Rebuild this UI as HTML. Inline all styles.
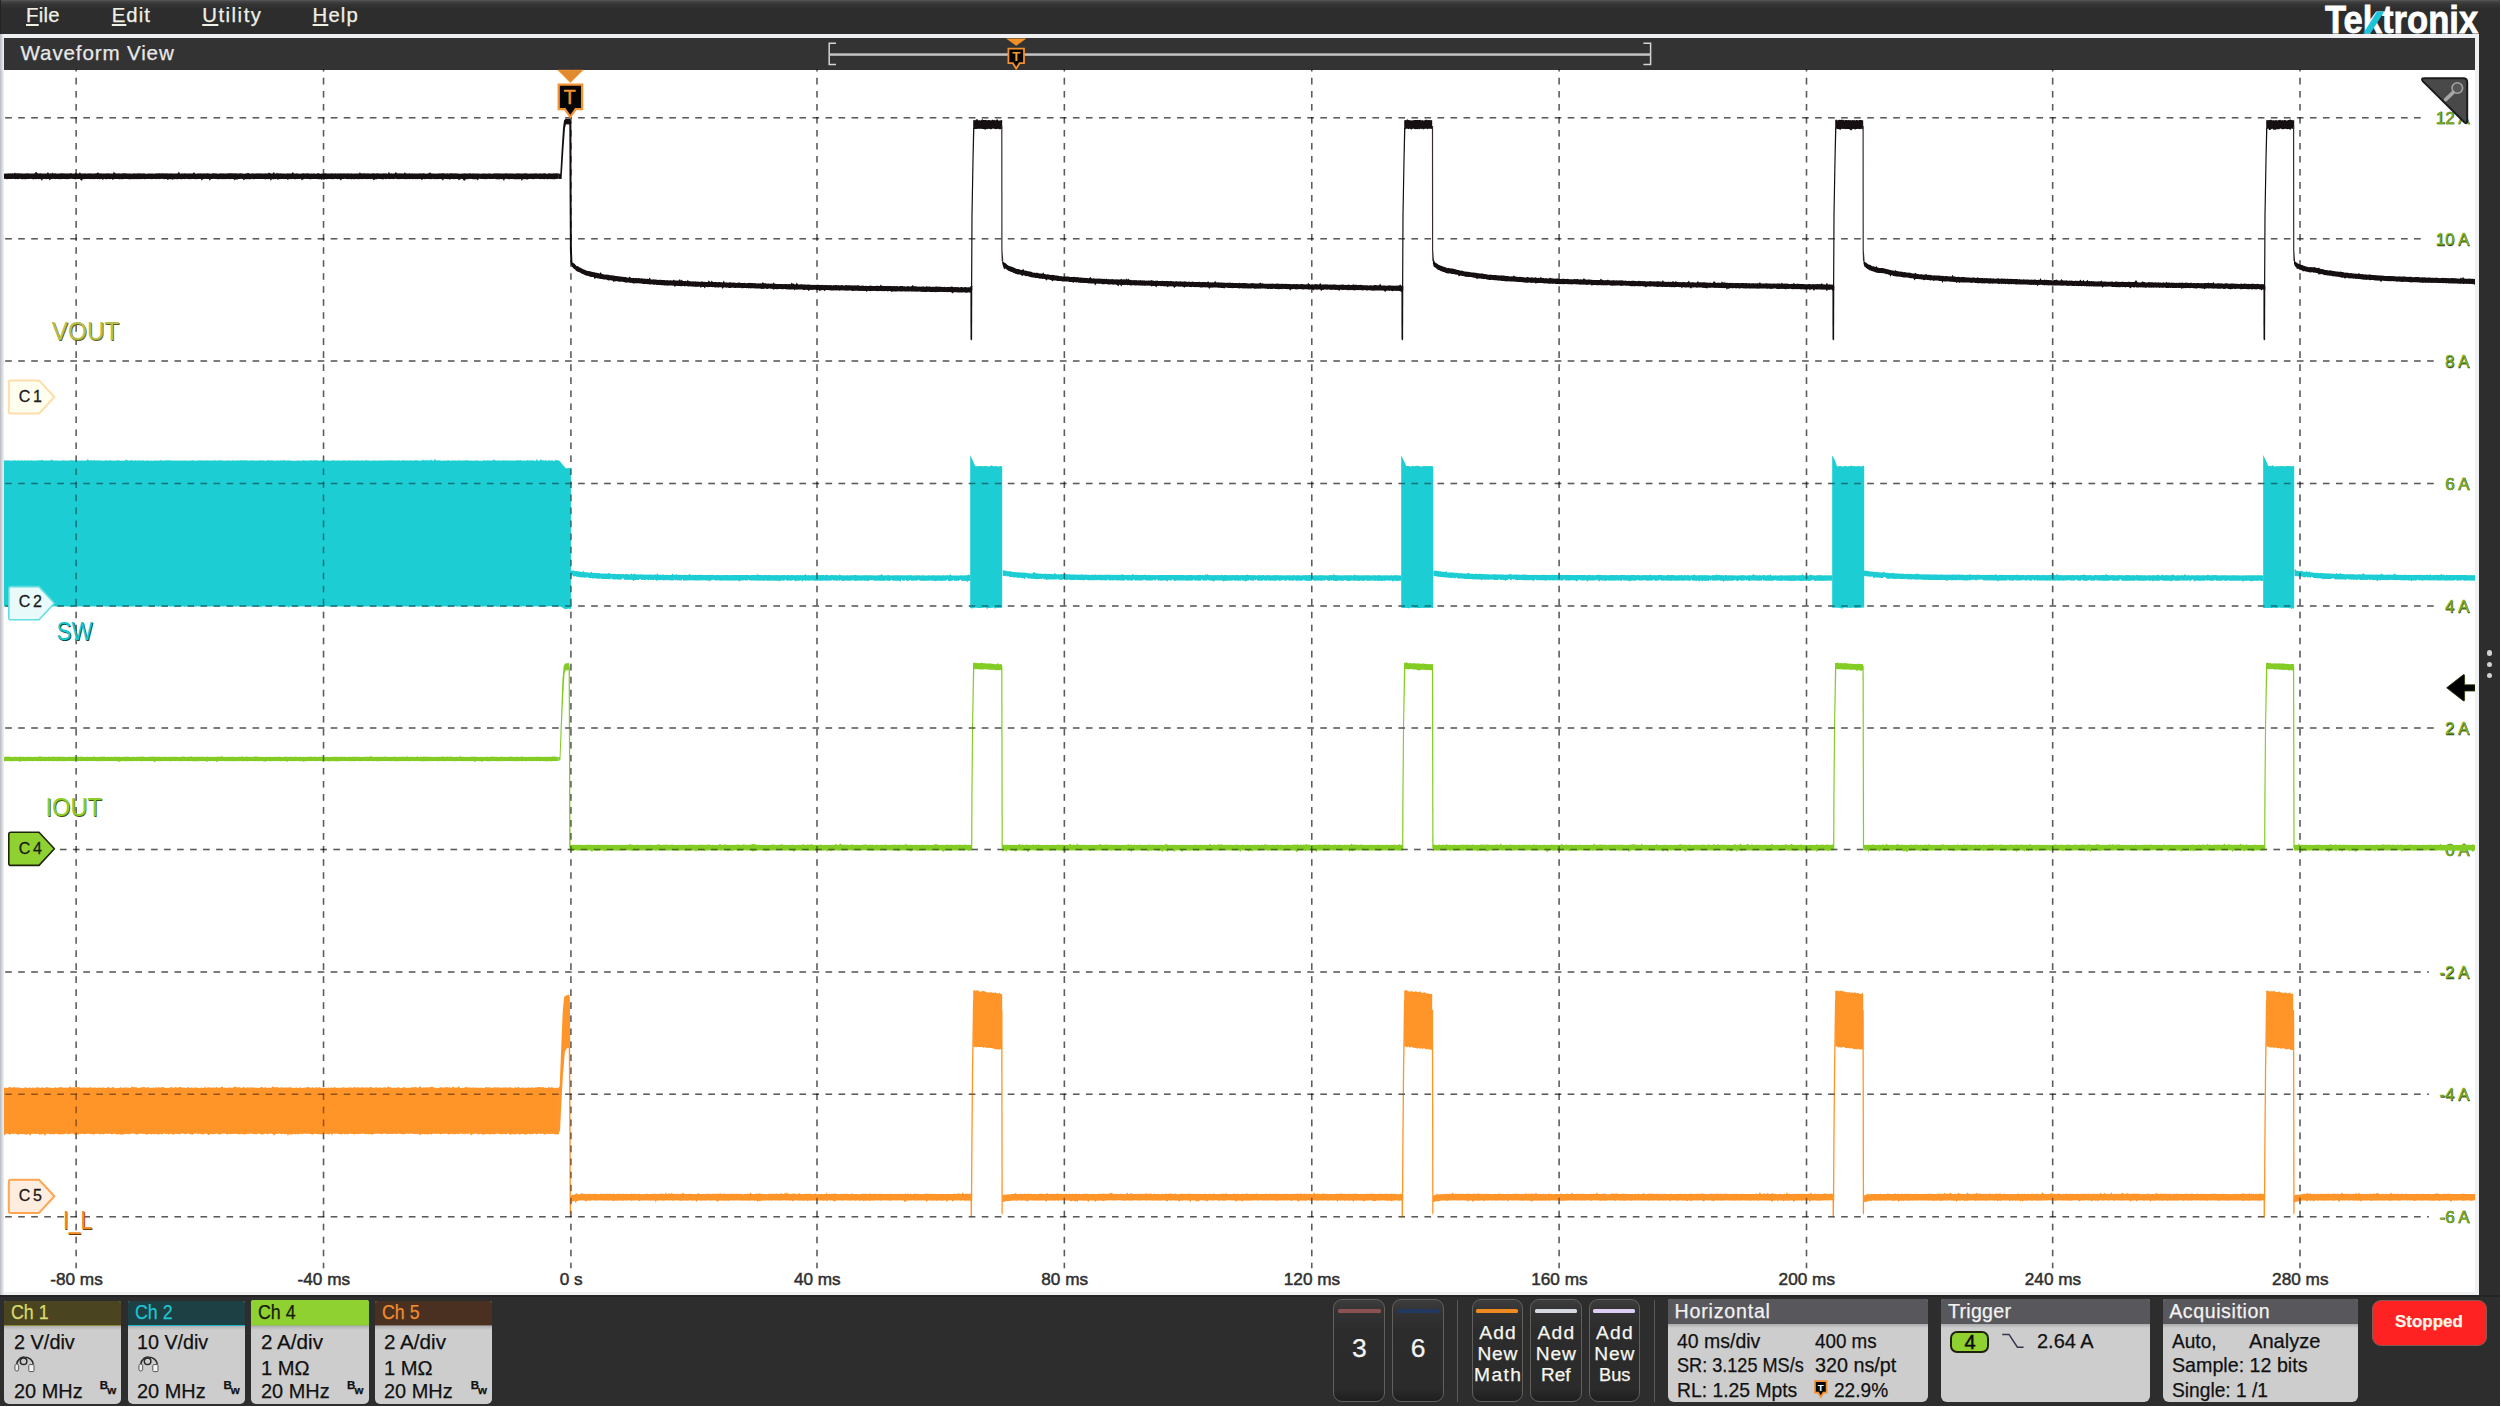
<!DOCTYPE html><html><head><meta charset="utf-8"><title>Waveform View</title><style>
html,body{margin:0;padding:0;background:#fff;}
body{width:2501px;height:1407px;overflow:hidden;position:relative;font-family:"Liberation Sans",sans-serif;}
.t{position:absolute;white-space:pre;line-height:1;font-family:"Liberation Sans",sans-serif;-webkit-text-stroke:0.25px currentColor;}
.a{position:absolute;box-sizing:border-box;}
u{text-decoration:underline;text-decoration-thickness:1.6px;text-underline-offset:1.9px;}
.bd{background:linear-gradient(#b4b4b4 0,#cdcdcd 3.5px,#cdcdcd 100%);}
.btn{border:1.3px solid #62605c;border-radius:9px;background:linear-gradient(#3c3c3c 0,#333 12px,#2c2c2c 30px,#2b2b2b 88%,#1e1e1e 100%);}
</style></head><body><div class="a" style="left:0.00px;top:0.00px;width:2499.60px;height:1405.70px;background:#2d2d2d;"></div>
<div class="a" style="left:0.00px;top:0.00px;width:2499.60px;height:9.00px;background:linear-gradient(#5a5a5a 0,#444 1.5px,#363636 4px,#2d2d2d 9px);"></div>
<div class="a" style="left:0.00px;top:34.00px;width:2479.40px;height:1261.30px;background:#eef0f2;"></div>
<div class="a" style="left:0.00px;top:34.00px;width:3.90px;height:1261.30px;background:linear-gradient(90deg,#b4b8c0 0,#d8dade 2px,#f0f0f2 3.9px);"></div>
<div class="a" style="left:0.00px;top:0.00px;width:1.20px;height:34.00px;background:#222;"></div>
<div class="a" style="left:3.90px;top:37.80px;width:2471.10px;height:31.90px;background:#333333;"></div>
<div class="a" style="left:3.90px;top:69.60px;width:2471.10px;height:1222.00px;background:#ffffff;"></div>
<span class="t" style="left:26.00px;top:5.12px;font-size:20.3px;color:#f0f0e6;letter-spacing:0.296px;"><u>F</u>ile</span>
<span class="t" style="left:111.80px;top:5.12px;font-size:20.3px;color:#f0f0e6;letter-spacing:1.006px;"><u>E</u>dit</span>
<span class="t" style="left:202.20px;top:5.12px;font-size:20.3px;color:#f0f0e6;letter-spacing:1.530px;"><u>U</u>tility</span>
<span class="t" style="left:312.60px;top:5.12px;font-size:20.3px;color:#f0f0e6;letter-spacing:1.150px;"><u>H</u>elp</span>
<span class="t" style="left:20.60px;top:43.26px;font-size:20.6px;color:#e8e8e8;letter-spacing:0.842px;">Waveform View</span>
<svg width="2501" height="1407" viewBox="0 0 2501 1407" style="position:absolute;left:0;top:0" font-family="Liberation Sans, sans-serif"><defs><clipPath id="pc"><rect x="3.9" y="69.6" width="2471.1" height="1222.0"/></clipPath></defs><g clip-path="url(#pc)"><text x="2469.2" y="123.7" text-anchor="end" font-size="16.8" fill="#8cc42c" stroke="#8cc42c" stroke-width="0.3" style="text-shadow:0.6px 0.8px 0 #2a3a10">12 A</text><text x="2469.2" y="244.8" text-anchor="end" font-size="16.8" fill="#8cc42c" stroke="#8cc42c" stroke-width="0.3" style="text-shadow:0.6px 0.8px 0 #2a3a10">10 A</text><text x="2469.2" y="367.1" text-anchor="end" font-size="16.8" fill="#8cc42c" stroke="#8cc42c" stroke-width="0.3" style="text-shadow:0.6px 0.8px 0 #2a3a10">8 A</text><text x="2469.2" y="489.5" text-anchor="end" font-size="16.8" fill="#8cc42c" stroke="#8cc42c" stroke-width="0.3" style="text-shadow:0.6px 0.8px 0 #2a3a10">6 A</text><text x="2469.2" y="611.9" text-anchor="end" font-size="16.8" fill="#8cc42c" stroke="#8cc42c" stroke-width="0.3" style="text-shadow:0.6px 0.8px 0 #2a3a10">4 A</text><text x="2469.2" y="734.1" text-anchor="end" font-size="16.8" fill="#8cc42c" stroke="#8cc42c" stroke-width="0.3" style="text-shadow:0.6px 0.8px 0 #2a3a10">2 A</text><text x="2469.2" y="855.5" text-anchor="end" font-size="16.8" fill="#8cc42c" stroke="#8cc42c" stroke-width="0.3" style="text-shadow:0.6px 0.8px 0 #2a3a10">0 A</text><text x="2469.2" y="977.9" text-anchor="end" font-size="16.8" fill="#8cc42c" stroke="#8cc42c" stroke-width="0.3" style="text-shadow:0.6px 0.8px 0 #2a3a10">-2 A</text><text x="2469.2" y="1100.2" text-anchor="end" font-size="16.8" fill="#8cc42c" stroke="#8cc42c" stroke-width="0.3" style="text-shadow:0.6px 0.8px 0 #2a3a10">-4 A</text><text x="2469.2" y="1222.7" text-anchor="end" font-size="16.8" fill="#8cc42c" stroke="#8cc42c" stroke-width="0.3" style="text-shadow:0.6px 0.8px 0 #2a3a10">-6 A</text><g stroke="#000" stroke-opacity="0.36" stroke-width="1.5" stroke-dasharray="6.6 6.421" fill="none"><line x1="5.2" y1="117.70" x2="2425.2" y2="117.70"/><line x1="5.2" y1="238.76" x2="2425.2" y2="238.76"/><line x1="5.2" y1="361.10" x2="2434.5" y2="361.10"/><line x1="5.2" y1="483.50" x2="2434.5" y2="483.50"/><line x1="5.2" y1="605.90" x2="2434.5" y2="605.90"/><line x1="5.2" y1="728.10" x2="2434.5" y2="728.10"/><line x1="59.9" y1="849.48" x2="2434.5" y2="849.48"/><line x1="5.2" y1="971.90" x2="2428.9" y2="971.90"/><line x1="5.2" y1="1094.24" x2="2428.9" y2="1094.24"/><line x1="5.2" y1="1216.65" x2="2428.9" y2="1216.65"/><line x1="76.15" y1="64.85" x2="76.15" y2="1268.2"/><line x1="323.53" y1="64.85" x2="323.53" y2="1268.2"/><line x1="570.91" y1="64.85" x2="570.91" y2="1268.2"/><line x1="816.99" y1="64.85" x2="816.99" y2="1268.2"/><line x1="1064.37" y1="64.85" x2="1064.37" y2="1268.2"/><line x1="1311.75" y1="64.85" x2="1311.75" y2="1268.2"/><line x1="1559.13" y1="64.85" x2="1559.13" y2="1268.2"/><line x1="1806.50" y1="64.85" x2="1806.50" y2="1268.2"/><line x1="2052.65" y1="64.85" x2="2052.65" y2="1268.2"/><line x1="2300.00" y1="64.85" x2="2300.00" y2="1268.2"/></g><g fill="#1ccdd4"><polygon points="3.9,460.8 4.9,460.3 5.9,460.5 6.9,460.4 7.9,460.2 8.9,460.5 9.9,460.5 10.9,460.8 11.9,460.6 12.9,460.5 13.9,460.4 14.9,460.3 15.9,460.6 16.9,460.8 17.9,460.6 18.9,460.3 19.9,460.7 20.9,460.5 21.9,460.2 22.9,460.8 23.9,460.4 24.9,460.2 25.9,460.7 26.9,460.5 27.9,460.3 28.9,460.7 29.9,460.5 30.9,460.3 31.9,460.4 32.9,460.5 33.9,460.7 34.9,460.5 35.9,460.6 36.9,460.5 37.9,460.6 38.9,460.3 39.9,460.3 40.9,460.6 41.9,459.4 42.9,460.6 43.9,460.5 44.9,460.6 45.9,460.4 46.9,460.6 47.9,460.5 48.9,460.4 49.9,460.6 50.9,460.3 51.9,459.6 52.9,460.4 53.9,460.5 54.9,460.5 55.9,460.4 56.9,460.5 57.9,460.6 58.9,460.8 59.9,460.7 60.9,460.4 61.9,460.5 62.9,460.4 63.9,460.2 64.9,460.4 65.9,460.8 66.9,460.6 67.9,460.4 68.9,460.7 69.9,460.2 70.9,460.2 71.9,460.3 72.9,460.5 73.9,460.3 74.9,460.7 75.9,460.6 76.9,460.5 77.9,460.4 78.9,460.5 79.9,460.7 80.9,460.6 81.9,460.6 82.9,460.6 83.9,460.7 84.9,460.6 85.9,460.5 86.9,460.3 87.9,459.1 88.9,460.5 89.9,460.5 90.9,460.3 91.9,460.3 92.9,460.4 93.9,460.3 94.9,460.2 95.9,460.8 96.9,460.3 97.9,460.6 98.9,460.5 99.9,460.3 100.9,460.4 101.9,460.7 102.9,460.4 103.9,460.8 104.9,460.6 105.9,460.3 106.9,460.5 107.9,460.4 108.9,460.4 109.9,460.3 110.9,460.3 111.9,460.8 112.9,460.5 113.9,460.5 114.9,460.8 115.9,460.5 116.9,460.4 117.9,460.3 118.9,460.2 119.9,460.7 120.9,460.7 121.9,460.4 122.9,460.7 123.9,460.7 124.9,460.5 125.9,459.6 126.9,460.3 127.9,460.3 128.9,460.8 129.9,460.5 130.9,460.3 131.9,460.2 132.9,460.6 133.9,460.7 134.9,460.3 135.9,460.3 136.9,460.7 137.9,460.5 138.9,460.4 139.9,460.3 140.9,460.7 141.9,460.4 142.9,460.3 143.9,460.5 144.9,460.7 145.9,460.8 146.9,460.6 147.9,460.3 148.9,460.8 149.9,460.8 150.9,460.6 151.9,460.8 152.9,460.7 153.9,460.8 154.9,460.5 155.9,460.4 156.9,460.5 157.9,460.7 158.9,460.6 159.9,460.4 160.9,460.2 161.9,460.2 162.9,460.7 163.9,460.8 164.9,460.3 165.9,460.2 166.9,460.5 167.9,460.3 168.9,460.3 169.9,460.4 170.9,460.3 171.9,460.8 172.9,460.6 173.9,460.6 174.9,460.7 175.9,460.3 176.9,460.8 177.9,460.4 178.9,460.8 179.9,460.6 180.9,460.5 181.9,460.7 182.9,460.5 183.9,460.5 184.9,460.6 185.9,460.4 186.9,460.7 187.9,460.7 188.9,460.6 189.9,460.6 190.9,460.7 191.9,460.2 192.9,460.3 193.9,460.7 194.9,460.6 195.9,460.7 196.9,460.5 197.9,460.6 198.9,460.5 199.9,460.2 200.9,460.6 201.9,460.4 202.9,460.4 203.9,460.3 204.9,460.8 205.9,460.4 206.9,460.2 207.9,460.4 208.9,460.6 209.9,460.4 210.9,460.4 211.9,460.4 212.9,460.7 213.9,460.2 214.9,460.2 215.9,460.5 216.9,460.4 217.9,460.8 218.9,460.2 219.9,460.3 220.9,460.4 221.9,460.3 222.9,460.7 223.9,460.6 224.9,460.7 225.9,460.4 226.9,460.7 227.9,460.3 228.9,460.5 229.9,460.5 230.9,460.7 231.9,460.4 232.9,460.3 233.9,460.4 234.9,460.7 235.9,460.3 236.9,460.7 237.9,460.3 238.9,460.5 239.9,460.6 240.9,459.9 241.9,460.4 242.9,460.6 243.9,460.3 244.9,460.5 245.9,460.3 246.9,460.3 247.9,460.7 248.9,460.4 249.9,460.6 250.9,460.3 251.9,460.5 252.9,460.5 253.9,460.3 254.9,460.8 255.9,460.5 256.9,460.6 257.9,460.8 258.9,460.3 259.9,460.5 260.9,460.3 261.9,460.4 262.9,460.6 263.9,460.2 264.9,460.7 265.9,460.8 266.9,460.4 267.9,460.0 268.9,460.6 269.9,460.3 270.9,460.6 271.9,460.3 272.9,460.4 273.9,460.6 274.9,460.8 275.9,460.7 276.9,460.2 277.9,460.6 278.9,460.7 279.9,460.6 280.9,460.3 281.9,460.7 282.9,460.3 283.9,460.2 284.9,460.2 285.9,460.5 286.9,460.8 287.9,460.2 288.9,460.6 289.9,460.4 290.9,460.5 291.9,460.7 292.9,460.7 293.9,460.7 294.9,460.7 295.9,460.8 296.9,460.8 297.9,460.2 298.9,460.7 299.9,460.5 300.9,460.7 301.9,460.7 302.9,460.3 303.9,460.2 304.9,460.5 305.9,460.8 306.9,460.2 307.9,460.8 308.9,460.6 309.9,460.5 310.9,460.3 311.9,460.3 312.9,460.4 313.9,460.6 314.9,460.3 315.9,460.3 316.9,460.3 317.9,460.4 318.9,460.7 319.9,460.6 320.9,460.5 321.9,460.5 322.9,460.3 323.9,460.7 324.9,460.4 325.9,460.6 326.9,460.3 327.9,460.7 328.9,460.5 329.9,460.7 330.9,460.7 331.9,460.2 332.9,460.6 333.9,460.3 334.9,460.5 335.9,460.8 336.9,460.3 337.9,460.8 338.9,460.3 339.9,460.8 340.9,460.4 341.9,460.7 342.9,460.6 343.9,460.2 344.9,460.5 345.9,460.4 346.9,460.4 347.9,460.7 348.9,460.3 349.9,460.3 350.9,460.7 351.9,460.5 352.9,460.6 353.9,460.4 354.9,460.8 355.9,460.5 356.9,460.3 357.9,460.4 358.9,460.7 359.9,460.3 360.9,460.7 361.9,460.3 362.9,460.5 363.9,460.7 364.9,460.4 365.9,460.3 366.9,460.4 367.9,460.2 368.9,460.6 369.9,460.7 370.9,460.7 371.9,460.5 372.9,460.6 373.9,460.6 374.9,460.5 375.9,460.6 376.9,460.8 377.9,460.5 378.9,460.6 379.9,460.5 380.9,460.2 381.9,460.7 382.9,460.4 383.9,460.4 384.9,460.6 385.9,460.5 386.9,460.2 387.9,460.6 388.9,460.4 389.9,460.3 390.9,460.6 391.9,460.2 392.9,460.4 393.9,460.5 394.9,460.4 395.9,460.5 396.9,460.4 397.9,460.6 398.9,460.2 399.9,460.5 400.9,460.7 401.9,460.5 402.9,460.3 403.9,460.3 404.9,460.5 405.9,460.6 406.9,460.6 407.9,460.2 408.9,460.7 409.9,460.3 410.9,460.3 411.9,460.7 412.9,460.6 413.9,460.5 414.9,460.3 415.9,460.2 416.9,460.2 417.9,460.6 418.9,460.7 419.9,460.5 420.9,460.5 421.9,460.4 422.9,459.5 423.9,460.4 424.9,460.2 425.9,460.3 426.9,460.2 427.9,460.2 428.9,460.2 429.9,460.8 430.9,459.3 431.9,460.6 432.9,460.6 433.9,460.5 434.9,458.8 435.9,460.4 436.9,460.6 437.9,460.6 438.9,460.3 439.9,460.3 440.9,460.7 441.9,460.7 442.9,460.6 443.9,460.7 444.9,460.5 445.9,460.7 446.9,460.5 447.9,460.2 448.9,460.3 449.9,460.7 450.9,460.7 451.9,460.6 452.9,460.4 453.9,460.6 454.9,460.6 455.9,460.6 456.9,460.7 457.9,460.3 458.9,460.4 459.9,460.6 460.9,460.4 461.9,460.5 462.9,460.5 463.9,460.6 464.9,460.5 465.9,460.2 466.9,460.3 467.9,460.3 468.9,460.7 469.9,460.5 470.9,460.6 471.9,460.7 472.9,460.6 473.9,460.8 474.9,460.7 475.9,460.3 476.9,460.4 477.9,460.4 478.9,460.8 479.9,460.7 480.9,460.8 481.9,460.7 482.9,460.7 483.9,460.2 484.9,460.3 485.9,460.7 486.9,460.6 487.9,460.2 488.9,460.5 489.9,460.6 490.9,460.5 491.9,460.6 492.9,460.4 493.9,459.3 494.9,460.5 495.9,460.3 496.9,460.7 497.9,460.4 498.9,460.2 499.9,460.7 500.9,460.5 501.9,460.4 502.9,460.6 503.9,460.2 504.9,460.5 505.9,460.5 506.9,460.3 507.9,460.8 508.9,460.3 509.9,460.7 510.9,460.6 511.9,460.5 512.9,460.5 513.9,460.8 514.9,460.6 515.9,460.6 516.9,460.2 517.9,460.2 518.9,460.4 519.9,460.2 520.9,460.3 521.9,460.6 522.9,460.7 523.9,460.4 524.9,460.6 525.9,460.8 526.9,460.2 527.9,460.2 528.9,460.5 529.9,460.4 530.9,460.4 531.9,460.2 532.9,460.5 533.9,460.5 534.9,460.7 535.9,460.7 536.9,459.0 537.9,460.7 538.9,460.8 539.9,460.6 540.9,459.0 541.9,460.6 542.9,460.3 543.9,460.4 544.9,460.4 545.9,460.3 546.9,460.8 547.9,460.7 548.9,460.3 549.9,460.3 550.9,460.8 551.9,460.3 552.9,460.8 553.9,460.7 554.9,460.7 555.9,459.5 556.9,460.6 557.9,460.3 558.9,460.5 559.9,461.2 560.9,462.4 561.9,463.8 562.9,465.0 563.9,466.0 564.9,467.2 565.9,468.3 566.9,468.2 567.9,468.3 568.9,468.0 569.9,468.2 570.9,468.3 570.9,608.7 569.9,609.0 568.9,608.6 567.9,608.8 566.9,608.8 565.9,609.3 564.9,609.0 563.9,608.6 562.9,607.8 561.9,607.3 560.9,606.8 559.9,606.4 558.9,606.5 557.9,606.7 556.9,606.4 555.9,606.6 554.9,606.4 553.9,606.7 552.9,606.5 551.9,606.4 550.9,606.3 549.9,606.3 548.9,606.3 547.9,606.5 546.9,606.6 545.9,606.5 544.9,606.3 543.9,606.6 542.9,606.4 541.9,606.5 540.9,606.5 539.9,606.3 538.9,606.5 537.9,606.4 536.9,606.4 535.9,606.3 534.9,606.5 533.9,606.4 532.9,606.7 531.9,606.3 530.9,606.5 529.9,606.5 528.9,606.7 527.9,606.3 526.9,606.5 525.9,606.4 524.9,606.3 523.9,606.5 522.9,606.3 521.9,606.4 520.9,606.7 519.9,606.5 518.9,606.3 517.9,606.4 516.9,606.3 515.9,606.6 514.9,606.3 513.9,606.6 512.9,606.5 511.9,606.5 510.9,606.5 509.9,606.6 508.9,606.4 507.9,606.5 506.9,606.5 505.9,606.7 504.9,606.5 503.9,606.6 502.9,606.6 501.9,606.3 500.9,606.6 499.9,606.3 498.9,606.7 497.9,606.7 496.9,606.7 495.9,606.5 494.9,606.4 493.9,606.4 492.9,606.4 491.9,606.4 490.9,606.5 489.9,606.5 488.9,606.5 487.9,606.5 486.9,606.5 485.9,606.4 484.9,606.4 483.9,606.3 482.9,606.7 481.9,606.4 480.9,606.6 479.9,606.3 478.9,606.5 477.9,606.4 476.9,606.5 475.9,606.7 474.9,606.4 473.9,606.5 472.9,606.5 471.9,606.5 470.9,606.3 469.9,606.6 468.9,606.4 467.9,606.3 466.9,606.3 465.9,606.7 464.9,606.5 463.9,606.6 462.9,606.4 461.9,606.6 460.9,606.6 459.9,606.6 458.9,606.6 457.9,606.4 456.9,606.7 455.9,606.4 454.9,606.3 453.9,606.3 452.9,606.3 451.9,606.5 450.9,606.6 449.9,606.5 448.9,606.6 447.9,607.5 446.9,606.3 445.9,606.5 444.9,606.4 443.9,606.6 442.9,606.4 441.9,606.7 440.9,606.3 439.9,606.6 438.9,606.6 437.9,606.6 436.9,606.4 435.9,606.5 434.9,606.6 433.9,606.3 432.9,606.7 431.9,606.6 430.9,606.5 429.9,606.7 428.9,606.7 427.9,606.6 426.9,606.7 425.9,606.5 424.9,606.5 423.9,606.4 422.9,606.5 421.9,606.4 420.9,606.6 419.9,606.3 418.9,606.7 417.9,606.5 416.9,606.4 415.9,606.6 414.9,606.5 413.9,606.5 412.9,606.3 411.9,606.5 410.9,606.6 409.9,606.3 408.9,606.5 407.9,606.6 406.9,606.4 405.9,606.6 404.9,606.4 403.9,606.5 402.9,606.6 401.9,606.4 400.9,606.5 399.9,606.4 398.9,606.4 397.9,606.6 396.9,606.5 395.9,606.6 394.9,606.4 393.9,606.4 392.9,606.3 391.9,606.4 390.9,606.4 389.9,606.5 388.9,606.4 387.9,606.6 386.9,606.6 385.9,606.5 384.9,606.7 383.9,606.4 382.9,606.4 381.9,606.7 380.9,606.7 379.9,606.6 378.9,606.7 377.9,606.4 376.9,606.5 375.9,606.4 374.9,606.3 373.9,606.5 372.9,606.3 371.9,606.5 370.9,606.5 369.9,606.5 368.9,606.4 367.9,606.6 366.9,606.5 365.9,606.5 364.9,606.7 363.9,606.3 362.9,606.3 361.9,606.3 360.9,606.5 359.9,606.7 358.9,606.6 357.9,606.3 356.9,606.3 355.9,606.6 354.9,606.6 353.9,606.6 352.9,606.5 351.9,606.5 350.9,606.3 349.9,606.5 348.9,606.6 347.9,606.7 346.9,606.6 345.9,606.7 344.9,606.6 343.9,606.6 342.9,606.7 341.9,606.4 340.9,606.5 339.9,606.4 338.9,606.5 337.9,606.5 336.9,606.5 335.9,606.7 334.9,606.4 333.9,606.6 332.9,606.3 331.9,606.4 330.9,606.7 329.9,606.7 328.9,606.6 327.9,606.6 326.9,606.3 325.9,606.3 324.9,606.3 323.9,606.4 322.9,606.5 321.9,606.5 320.9,606.7 319.9,606.4 318.9,606.4 317.9,606.5 316.9,606.4 315.9,606.5 314.9,606.5 313.9,606.7 312.9,606.6 311.9,606.3 310.9,606.6 309.9,606.7 308.9,606.6 307.9,606.4 306.9,606.4 305.9,606.6 304.9,606.5 303.9,606.5 302.9,606.6 301.9,606.6 300.9,606.6 299.9,606.5 298.9,606.6 297.9,606.3 296.9,606.7 295.9,606.9 294.9,606.5 293.9,606.5 292.9,606.7 291.9,606.3 290.9,606.3 289.9,606.4 288.9,607.4 287.9,606.7 286.9,606.6 285.9,606.7 284.9,606.5 283.9,606.5 282.9,606.5 281.9,606.7 280.9,606.6 279.9,606.3 278.9,606.5 277.9,606.5 276.9,606.3 275.9,606.5 274.9,606.3 273.9,606.4 272.9,606.3 271.9,606.4 270.9,606.4 269.9,606.7 268.9,606.6 267.9,606.6 266.9,606.4 265.9,606.4 264.9,606.6 263.9,606.5 262.9,606.3 261.9,606.6 260.9,607.3 259.9,606.7 258.9,606.7 257.9,606.4 256.9,606.4 255.9,606.4 254.9,606.4 253.9,606.4 252.9,606.4 251.9,607.5 250.9,606.3 249.9,606.4 248.9,606.4 247.9,606.5 246.9,606.5 245.9,606.7 244.9,606.3 243.9,606.5 242.9,606.3 241.9,606.4 240.9,606.3 239.9,606.7 238.9,606.5 237.9,606.3 236.9,606.5 235.9,606.6 234.9,606.6 233.9,606.4 232.9,606.4 231.9,606.3 230.9,606.4 229.9,606.5 228.9,606.4 227.9,606.5 226.9,606.4 225.9,606.3 224.9,606.5 223.9,606.4 222.9,606.4 221.9,606.5 220.9,606.5 219.9,606.3 218.9,606.6 217.9,607.2 216.9,606.3 215.9,606.4 214.9,606.6 213.9,606.5 212.9,606.4 211.9,606.4 210.9,606.6 209.9,606.4 208.9,606.4 207.9,606.5 206.9,606.6 205.9,606.3 204.9,606.6 203.9,606.5 202.9,606.7 201.9,606.6 200.9,606.6 199.9,606.6 198.9,606.5 197.9,606.3 196.9,606.6 195.9,606.7 194.9,606.4 193.9,606.4 192.9,606.5 191.9,606.6 190.9,606.7 189.9,606.6 188.9,606.6 187.9,606.4 186.9,606.5 185.9,606.4 184.9,607.1 183.9,606.5 182.9,606.6 181.9,606.5 180.9,606.5 179.9,606.7 178.9,606.7 177.9,606.5 176.9,606.4 175.9,606.5 174.9,607.5 173.9,606.6 172.9,606.6 171.9,606.5 170.9,606.7 169.9,606.4 168.9,606.3 167.9,606.4 166.9,606.6 165.9,606.7 164.9,606.4 163.9,607.2 162.9,606.3 161.9,606.7 160.9,606.5 159.9,606.5 158.9,606.7 157.9,606.4 156.9,606.4 155.9,606.3 154.9,606.5 153.9,607.1 152.9,606.5 151.9,606.5 150.9,606.6 149.9,606.6 148.9,606.5 147.9,606.3 146.9,606.7 145.9,606.7 144.9,606.4 143.9,606.4 142.9,606.7 141.9,606.5 140.9,606.4 139.9,606.7 138.9,606.6 137.9,606.5 136.9,606.6 135.9,606.7 134.9,606.4 133.9,606.5 132.9,606.6 131.9,606.6 130.9,606.7 129.9,606.6 128.9,606.5 127.9,606.5 126.9,606.4 125.9,606.4 124.9,606.6 123.9,606.5 122.9,606.5 121.9,606.6 120.9,606.7 119.9,606.4 118.9,606.4 117.9,606.5 116.9,606.5 115.9,606.5 114.9,606.7 113.9,606.4 112.9,606.4 111.9,606.5 110.9,606.4 109.9,606.6 108.9,606.5 107.9,606.6 106.9,606.7 105.9,606.6 104.9,606.6 103.9,606.3 102.9,606.5 101.9,606.6 100.9,606.3 99.9,606.5 98.9,606.5 97.9,606.4 96.9,606.6 95.9,606.4 94.9,606.5 93.9,606.5 92.9,606.6 91.9,606.4 90.9,606.6 89.9,606.5 88.9,606.5 87.9,606.6 86.9,606.4 85.9,606.5 84.9,606.7 83.9,606.6 82.9,606.4 81.9,606.6 80.9,606.6 79.9,606.3 78.9,606.4 77.9,606.5 76.9,606.3 75.9,606.6 74.9,606.4 73.9,606.6 72.9,606.5 71.9,607.4 70.9,606.4 69.9,606.5 68.9,606.7 67.9,606.6 66.9,606.6 65.9,606.6 64.9,606.5 63.9,606.4 62.9,606.7 61.9,606.4 60.9,606.4 59.9,606.4 58.9,606.5 57.9,606.4 56.9,606.4 55.9,606.5 54.9,606.3 53.9,606.3 52.9,606.4 51.9,606.3 50.9,606.5 49.9,606.3 48.9,606.3 47.9,606.5 46.9,606.3 45.9,606.5 44.9,606.7 43.9,606.4 42.9,606.4 41.9,606.6 40.9,606.4 39.9,606.6 38.9,606.3 37.9,606.4 36.9,606.5 35.9,607.3 34.9,606.4 33.9,606.7 32.9,606.5 31.9,606.7 30.9,606.5 29.9,606.4 28.9,606.4 27.9,606.4 26.9,606.6 25.9,606.6 24.9,606.3 23.9,606.5 22.9,606.5 21.9,606.4 20.9,606.4 19.9,606.6 18.9,606.5 17.9,606.3 16.9,606.5 15.9,606.6 14.9,606.6 13.9,606.6 12.9,606.6 11.9,606.6 10.9,606.4 9.9,606.4 8.9,606.7 7.9,606.6 6.9,606.3 5.9,606.4 4.9,606.5 3.9,606.6"/><polygon points="570.5,570.4 571.5,570.5 572.5,570.8 573.5,570.3 574.5,571.0 575.5,571.2 576.5,571.1 577.5,571.3 578.5,571.6 579.5,571.6 580.5,571.7 581.5,571.9 582.5,571.9 583.5,570.7 584.5,572.2 585.5,572.3 586.5,572.3 587.5,572.6 588.5,572.5 589.5,572.7 590.5,572.8 591.5,571.5 592.5,572.9 593.5,572.8 594.5,573.1 595.5,572.8 596.5,572.9 597.5,573.2 598.5,573.0 599.5,573.1 600.5,573.4 601.5,573.4 602.5,573.5 603.5,573.6 604.5,573.5 605.5,573.6 606.5,573.6 607.5,573.8 608.5,572.7 609.5,573.6 610.5,573.8 611.5,573.7 612.5,574.0 613.5,573.8 614.5,573.9 615.5,573.8 616.5,574.2 617.5,574.0 618.5,574.1 619.5,574.1 620.5,574.2 621.5,574.0 622.5,574.3 623.5,574.1 624.5,574.4 625.5,574.0 626.5,574.1 627.5,574.2 628.5,574.3 629.5,574.4 630.5,574.4 631.5,573.2 632.5,574.4 633.5,574.2 634.5,573.6 635.5,574.3 636.5,574.5 637.5,574.6 638.5,574.6 639.5,574.6 640.5,574.3 641.5,574.4 642.5,574.4 643.5,574.6 644.5,574.7 645.5,574.6 646.5,574.5 647.5,574.7 648.5,574.6 649.5,574.7 650.5,574.5 651.5,574.6 652.5,574.8 653.5,574.7 654.5,574.5 655.5,574.5 656.5,574.7 657.5,573.3 658.5,574.8 659.5,574.8 660.5,574.7 661.5,574.9 662.5,574.7 663.5,574.6 664.5,574.9 665.5,575.0 666.5,574.7 667.5,574.7 668.5,574.9 669.5,574.9 670.5,574.9 671.5,575.0 672.5,573.6 673.5,574.9 674.5,574.7 675.5,574.8 676.5,574.2 677.5,574.7 678.5,575.0 679.5,574.8 680.5,575.0 681.5,574.8 682.5,574.9 683.5,574.9 684.5,574.8 685.5,574.8 686.5,575.1 687.5,575.0 688.5,574.7 689.5,573.9 690.5,574.8 691.5,574.9 692.5,574.8 693.5,575.1 694.5,574.9 695.5,574.8 696.5,575.0 697.5,574.9 698.5,574.8 699.5,574.8 700.5,575.1 701.5,574.8 702.5,574.9 703.5,575.1 704.5,574.9 705.5,575.1 706.5,575.0 707.5,575.0 708.5,575.0 709.5,575.1 710.5,574.8 711.5,574.9 712.5,575.1 713.5,574.8 714.5,575.2 715.5,575.2 716.5,574.9 717.5,575.1 718.5,575.1 719.5,575.2 720.5,575.1 721.5,575.2 722.5,575.0 723.5,575.2 724.5,575.1 725.5,574.9 726.5,575.0 727.5,575.1 728.5,575.2 729.5,574.9 730.5,575.2 731.5,575.1 732.5,575.1 733.5,574.9 734.5,575.0 735.5,574.9 736.5,574.9 737.5,575.0 738.5,575.1 739.5,575.1 740.5,574.9 741.5,575.0 742.5,575.0 743.5,574.9 744.5,575.1 745.5,575.0 746.5,575.0 747.5,575.1 748.5,575.0 749.5,575.2 750.5,575.3 751.5,574.9 752.5,574.9 753.5,575.1 754.5,575.1 755.5,575.2 756.5,574.9 757.5,574.1 758.5,575.1 759.5,575.0 760.5,575.1 761.5,574.9 762.5,575.2 763.5,575.0 764.5,575.2 765.5,575.1 766.5,575.0 767.5,575.2 768.5,575.0 769.5,575.0 770.5,575.2 771.5,575.1 772.5,575.3 773.5,575.2 774.5,575.1 775.5,575.3 776.5,575.0 777.5,575.3 778.5,575.1 779.5,575.3 780.5,575.2 781.5,575.0 782.5,575.2 783.5,575.0 784.5,575.0 785.5,575.2 786.5,575.3 787.5,575.0 788.5,575.0 789.5,575.3 790.5,575.3 791.5,575.0 792.5,575.1 793.5,575.3 794.5,575.3 795.5,575.2 796.5,575.0 797.5,575.3 798.5,575.1 799.5,575.3 800.5,575.1 801.5,575.2 802.5,575.2 803.5,575.3 804.5,575.0 805.5,573.9 806.5,575.2 807.5,575.2 808.5,575.1 809.5,575.3 810.5,575.4 811.5,575.1 812.5,575.2 813.5,575.1 814.5,575.4 815.5,575.1 816.5,575.1 817.5,575.4 818.5,575.1 819.5,575.0 820.5,575.3 821.5,575.0 822.5,575.0 823.5,575.1 824.5,575.2 825.5,575.2 826.5,574.5 827.5,575.1 828.5,575.4 829.5,575.2 830.5,575.2 831.5,575.1 832.5,575.1 833.5,575.2 834.5,575.2 835.5,575.1 836.5,575.2 837.5,575.3 838.5,575.4 839.5,574.2 840.5,575.3 841.5,575.3 842.5,575.3 843.5,575.4 844.5,575.2 845.5,575.4 846.5,575.4 847.5,575.1 848.5,575.4 849.5,575.2 850.5,575.2 851.5,575.3 852.5,575.2 853.5,575.2 854.5,575.1 855.5,575.1 856.5,575.3 857.5,575.3 858.5,575.2 859.5,575.4 860.5,575.2 861.5,575.4 862.5,575.3 863.5,575.2 864.5,575.2 865.5,575.3 866.5,575.1 867.5,575.4 868.5,575.3 869.5,575.2 870.5,575.3 871.5,575.2 872.5,575.4 873.5,575.2 874.5,575.4 875.5,575.4 876.5,575.4 877.5,575.2 878.5,575.5 879.5,575.1 880.5,575.3 881.5,574.1 882.5,575.3 883.5,575.3 884.5,575.4 885.5,575.2 886.5,575.2 887.5,575.2 888.5,575.1 889.5,575.2 890.5,575.4 891.5,575.4 892.5,575.3 893.5,575.4 894.5,575.3 895.5,575.3 896.5,575.2 897.5,575.3 898.5,575.2 899.5,575.2 900.5,575.5 901.5,575.1 902.5,575.4 903.5,575.3 904.5,575.5 905.5,575.3 906.5,575.2 907.5,575.4 908.5,575.1 909.5,575.4 910.5,575.1 911.5,575.2 912.5,575.4 913.5,575.5 914.5,575.5 915.5,575.3 916.5,575.4 917.5,575.1 918.5,575.5 919.5,575.2 920.5,575.4 921.5,575.5 922.5,575.2 923.5,575.3 924.5,575.4 925.5,575.4 926.5,575.4 927.5,575.5 928.5,575.3 929.5,575.3 930.5,575.4 931.5,575.4 932.5,575.1 933.5,575.4 934.5,575.3 935.5,575.4 936.5,575.5 937.5,575.3 938.5,575.4 939.5,575.2 940.5,575.4 941.5,575.4 942.5,575.3 943.5,575.2 944.5,575.4 945.5,575.2 946.5,575.3 947.5,575.2 948.5,575.2 949.5,575.2 950.5,574.3 951.5,575.5 952.5,575.5 953.5,575.4 954.5,575.4 955.5,575.4 956.5,575.5 957.5,575.4 958.5,575.4 959.5,575.5 960.5,575.2 961.5,575.3 962.5,575.5 963.5,575.4 964.5,575.3 965.5,575.5 966.5,575.3 967.5,575.2 968.5,574.5 970.4,575.3 970.4,580.9 968.5,580.7 967.5,581.9 966.5,581.0 965.5,580.8 964.5,580.8 963.5,580.9 962.5,580.8 961.5,580.9 960.5,579.5 959.5,580.2 958.5,580.9 957.5,580.6 956.5,580.9 955.5,580.8 954.5,580.9 953.5,579.8 952.5,580.8 951.5,580.8 950.5,580.9 949.5,581.2 948.5,580.9 947.5,579.5 946.5,580.6 945.5,580.6 944.5,580.8 943.5,580.8 942.5,580.8 941.5,581.0 940.5,580.8 939.5,580.7 938.5,580.7 937.5,580.8 936.5,580.8 935.5,581.3 934.5,580.8 933.5,580.8 932.5,580.8 931.5,580.6 930.5,580.6 929.5,580.6 928.5,580.8 927.5,580.7 926.5,580.6 925.5,580.8 924.5,580.9 923.5,580.8 922.5,580.8 921.5,580.8 920.5,580.7 919.5,580.6 918.5,579.7 917.5,580.6 916.5,580.8 915.5,580.6 914.5,580.7 913.5,580.6 912.5,580.8 911.5,580.7 910.5,579.9 909.5,580.6 908.5,580.8 907.5,580.9 906.5,580.7 905.5,579.5 904.5,580.7 903.5,580.7 902.5,580.6 901.5,579.5 900.5,581.8 899.5,580.8 898.5,580.7 897.5,580.7 896.5,580.8 895.5,580.8 894.5,580.6 893.5,580.9 892.5,580.6 891.5,579.7 890.5,580.6 889.5,580.9 888.5,580.8 887.5,580.5 886.5,580.7 885.5,579.9 884.5,580.9 883.5,580.7 882.5,580.8 881.5,580.8 880.5,580.7 879.5,580.8 878.5,580.8 877.5,580.6 876.5,580.7 875.5,580.8 874.5,580.8 873.5,580.6 872.5,580.0 871.5,580.6 870.5,579.8 869.5,580.8 868.5,580.7 867.5,580.9 866.5,580.6 865.5,580.7 864.5,580.7 863.5,580.6 862.5,580.6 861.5,580.8 860.5,580.6 859.5,580.8 858.5,580.6 857.5,580.6 856.5,580.9 855.5,580.7 854.5,580.8 853.5,580.6 852.5,580.0 851.5,580.7 850.5,580.7 849.5,580.7 848.5,580.8 847.5,580.8 846.5,580.5 845.5,580.5 844.5,580.8 843.5,580.9 842.5,580.8 841.5,580.8 840.5,580.1 839.5,580.7 838.5,580.6 837.5,580.6 836.5,580.7 835.5,580.6 834.5,580.6 833.5,580.8 832.5,579.7 831.5,580.5 830.5,580.5 829.5,580.8 828.5,580.8 827.5,580.5 826.5,580.8 825.5,580.7 824.5,580.5 823.5,580.6 822.5,580.7 821.5,580.7 820.5,580.7 819.5,580.7 818.5,580.5 817.5,580.7 816.5,580.7 815.5,580.7 814.5,580.7 813.5,580.4 812.5,580.4 811.5,580.5 810.5,580.5 809.5,580.5 808.5,580.7 807.5,580.5 806.5,580.5 805.5,580.8 804.5,580.5 803.5,580.1 802.5,581.7 801.5,580.6 800.5,580.3 799.5,580.8 798.5,580.8 797.5,580.7 796.5,580.6 795.5,581.4 794.5,580.5 793.5,579.7 792.5,580.6 791.5,580.6 790.5,580.7 789.5,580.5 788.5,580.5 787.5,580.7 786.5,580.6 785.5,579.6 784.5,580.6 783.5,580.7 782.5,580.6 781.5,580.6 780.5,580.4 779.5,581.6 778.5,580.7 777.5,580.7 776.5,580.7 775.5,580.7 774.5,580.5 773.5,580.7 772.5,580.6 771.5,580.7 770.5,580.6 769.5,580.7 768.5,580.7 767.5,580.7 766.5,580.6 765.5,580.6 764.5,580.4 763.5,581.1 762.5,580.4 761.5,580.5 760.5,580.7 759.5,580.7 758.5,580.6 757.5,580.4 756.5,580.7 755.5,580.6 754.5,580.5 753.5,580.6 752.5,580.4 751.5,580.5 750.5,580.6 749.5,580.5 748.5,579.5 747.5,580.5 746.5,580.6 745.5,580.6 744.5,580.0 743.5,580.5 742.5,580.4 741.5,580.5 740.5,580.6 739.5,581.4 738.5,580.7 737.5,580.6 736.5,580.5 735.5,580.6 734.5,580.7 733.5,580.6 732.5,580.6 731.5,580.4 730.5,580.7 729.5,580.4 728.5,580.6 727.5,580.6 726.5,580.5 725.5,580.4 724.5,580.6 723.5,580.5 722.5,580.5 721.5,580.5 720.5,580.7 719.5,580.4 718.5,580.3 717.5,580.2 716.5,580.6 715.5,580.5 714.5,580.3 713.5,579.6 712.5,579.9 711.5,580.5 710.5,580.3 709.5,581.5 708.5,580.5 707.5,580.5 706.5,580.4 705.5,580.4 704.5,580.3 703.5,580.3 702.5,580.4 701.5,580.2 700.5,580.5 699.5,580.3 698.5,580.4 697.5,580.4 696.5,580.6 695.5,580.6 694.5,580.4 693.5,580.3 692.5,580.6 691.5,580.2 690.5,580.3 689.5,580.4 688.5,580.3 687.5,580.5 686.5,580.5 685.5,580.4 684.5,580.4 683.5,580.9 682.5,579.3 681.5,580.4 680.5,580.4 679.5,580.5 678.5,580.2 677.5,580.4 676.5,580.1 675.5,580.5 674.5,579.4 673.5,580.5 672.5,580.4 671.5,580.2 670.5,580.4 669.5,580.3 668.5,580.1 667.5,580.3 666.5,580.1 665.5,580.2 664.5,580.2 663.5,580.4 662.5,580.0 661.5,580.0 660.5,580.1 659.5,580.3 658.5,580.2 657.5,580.1 656.5,580.9 655.5,580.0 654.5,579.5 653.5,580.2 652.5,580.1 651.5,580.1 650.5,580.1 649.5,579.4 648.5,580.2 647.5,580.0 646.5,579.2 645.5,580.2 644.5,579.9 643.5,579.8 642.5,580.1 641.5,580.0 640.5,579.0 639.5,578.9 638.5,580.0 637.5,579.9 636.5,579.7 635.5,579.9 634.5,580.0 633.5,581.2 632.5,579.9 631.5,579.8 630.5,579.7 629.5,579.8 628.5,579.7 627.5,579.9 626.5,579.7 625.5,579.7 624.5,579.9 623.5,578.4 622.5,578.3 621.5,579.7 620.5,579.4 619.5,579.7 618.5,579.5 617.5,579.5 616.5,579.3 615.5,579.5 614.5,579.4 613.5,579.3 612.5,579.4 611.5,578.2 610.5,579.1 609.5,579.2 608.5,579.2 607.5,579.0 606.5,579.0 605.5,579.1 604.5,578.9 603.5,579.0 602.5,578.9 601.5,578.9 600.5,578.3 599.5,578.7 598.5,578.8 597.5,578.8 596.5,578.6 595.5,578.3 594.5,578.2 593.5,578.4 592.5,578.5 591.5,578.0 590.5,578.2 589.5,578.0 588.5,578.1 587.5,576.7 586.5,577.8 585.5,577.6 584.5,577.7 583.5,577.6 582.5,577.3 581.5,577.4 580.5,577.4 579.5,576.9 578.5,577.0 577.5,576.8 576.5,576.7 575.5,575.9 574.5,576.4 573.5,576.4 572.5,574.9 571.5,575.9 570.5,575.8"/><polygon points="1002.7,570.3 1003.7,570.5 1004.7,570.6 1005.7,570.8 1006.7,571.1 1007.7,571.3 1008.7,571.3 1009.7,571.3 1010.7,571.3 1011.7,571.8 1012.7,571.9 1013.7,572.0 1014.7,572.1 1015.7,572.2 1016.7,572.2 1017.7,572.3 1018.7,572.2 1019.7,572.6 1020.7,572.4 1021.7,572.6 1022.7,572.8 1023.7,572.6 1024.7,572.6 1025.7,573.1 1026.7,572.8 1027.7,573.2 1028.7,573.2 1029.7,573.2 1030.7,573.4 1031.7,573.4 1032.7,573.3 1033.7,572.0 1034.7,572.5 1035.7,573.3 1036.7,573.3 1037.7,573.6 1038.7,573.5 1039.7,573.8 1040.7,573.8 1041.7,573.6 1042.7,574.0 1043.7,573.7 1044.7,573.7 1045.7,573.8 1046.7,573.8 1047.7,574.1 1048.7,574.1 1049.7,574.0 1050.7,574.0 1051.7,574.0 1052.7,574.2 1053.7,574.3 1054.7,572.8 1055.7,574.0 1056.7,574.2 1057.7,574.4 1058.7,574.2 1059.7,574.2 1060.7,574.3 1061.7,574.1 1062.7,574.2 1063.7,574.5 1064.7,574.2 1065.7,573.6 1066.7,574.3 1067.7,574.5 1068.7,574.3 1069.7,574.3 1070.7,574.4 1071.7,574.6 1072.7,574.4 1073.7,574.4 1074.7,574.4 1075.7,574.5 1076.7,574.7 1077.7,574.7 1078.7,574.5 1079.7,574.8 1080.7,574.6 1081.7,574.4 1082.7,574.6 1083.7,574.7 1084.7,574.8 1085.7,574.6 1086.7,574.8 1087.7,574.8 1088.7,574.7 1089.7,574.9 1090.7,574.9 1091.7,574.6 1092.7,574.7 1093.7,574.9 1094.7,574.6 1095.7,574.6 1096.7,574.9 1097.7,574.8 1098.7,574.8 1099.7,574.8 1100.7,574.7 1101.7,574.7 1102.7,574.9 1103.7,574.8 1104.7,574.8 1105.7,574.7 1106.7,574.8 1107.7,574.8 1108.7,574.8 1109.7,574.7 1110.7,574.8 1111.7,575.0 1112.7,574.8 1113.7,574.9 1114.7,574.7 1115.7,575.1 1116.7,574.8 1117.7,574.9 1118.7,574.7 1119.7,575.0 1120.7,574.8 1121.7,575.0 1122.7,573.9 1123.7,575.0 1124.7,575.0 1125.7,574.9 1126.7,574.9 1127.7,575.1 1128.7,574.9 1129.7,574.9 1130.7,575.0 1131.7,575.1 1132.7,574.0 1133.7,574.8 1134.7,575.1 1135.7,574.8 1136.7,574.8 1137.7,575.0 1138.7,575.0 1139.7,574.9 1140.7,574.9 1141.7,575.0 1142.7,575.1 1143.7,575.0 1144.7,574.8 1145.7,574.8 1146.7,575.1 1147.7,575.2 1148.7,574.8 1149.7,575.0 1150.7,575.2 1151.7,575.1 1152.7,574.9 1153.7,575.2 1154.7,575.1 1155.7,575.2 1156.7,574.9 1157.7,575.2 1158.7,574.9 1159.7,575.0 1160.7,575.1 1161.7,575.1 1162.7,575.0 1163.7,575.0 1164.7,575.1 1165.7,575.0 1166.7,575.0 1167.7,575.1 1168.7,574.9 1169.7,574.9 1170.7,575.1 1171.7,575.0 1172.7,575.1 1173.7,574.9 1174.7,575.1 1175.7,575.1 1176.7,575.0 1177.7,575.1 1178.7,574.9 1179.7,575.1 1180.7,575.1 1181.7,574.9 1182.7,575.0 1183.7,574.9 1184.7,575.3 1185.7,575.2 1186.7,575.0 1187.7,575.3 1188.7,575.0 1189.7,575.1 1190.7,574.9 1191.7,575.0 1192.7,575.3 1193.7,575.2 1194.7,575.1 1195.7,575.2 1196.7,575.3 1197.7,575.0 1198.7,575.1 1199.7,575.1 1200.7,575.1 1201.7,575.2 1202.7,575.0 1203.7,575.2 1204.7,575.0 1205.7,574.3 1206.7,575.3 1207.7,573.8 1208.7,575.2 1209.7,575.0 1210.7,575.2 1211.7,575.0 1212.7,575.3 1213.7,575.1 1214.7,575.3 1215.7,575.0 1216.7,575.2 1217.7,575.0 1218.7,575.1 1219.7,575.3 1220.7,575.2 1221.7,574.5 1222.7,575.2 1223.7,575.3 1224.7,575.0 1225.7,575.1 1226.7,575.1 1227.7,575.3 1228.7,575.2 1229.7,575.3 1230.7,575.1 1231.7,575.3 1232.7,575.0 1233.7,575.3 1234.7,575.1 1235.7,575.2 1236.7,575.0 1237.7,575.1 1238.7,575.2 1239.7,575.2 1240.7,575.3 1241.7,575.1 1242.7,575.3 1243.7,575.1 1244.7,575.3 1245.7,575.1 1246.7,575.1 1247.7,574.2 1248.7,575.3 1249.7,575.1 1250.7,575.2 1251.7,575.3 1252.7,575.0 1253.7,575.2 1254.7,575.2 1255.7,575.3 1256.7,575.4 1257.7,575.2 1258.7,575.1 1259.7,575.3 1260.7,575.1 1261.7,575.4 1262.7,575.1 1263.7,575.1 1264.7,575.4 1265.7,575.2 1266.7,575.2 1267.7,575.1 1268.7,575.3 1269.7,575.3 1270.7,575.3 1271.7,575.4 1272.7,575.3 1273.7,575.2 1274.7,575.1 1275.7,575.2 1276.7,575.1 1277.7,575.3 1278.7,575.1 1279.7,575.4 1280.7,575.1 1281.7,575.4 1282.7,575.3 1283.7,575.4 1284.7,575.3 1285.7,575.4 1286.7,575.2 1287.7,575.3 1288.7,575.2 1289.7,575.2 1290.7,575.2 1291.7,575.4 1292.7,575.3 1293.7,575.1 1294.7,575.2 1295.7,575.4 1296.7,575.2 1297.7,575.2 1298.7,575.1 1299.7,575.4 1300.7,575.4 1301.7,575.3 1302.7,575.4 1303.7,575.1 1304.7,575.2 1305.7,575.1 1306.7,575.2 1307.7,575.2 1308.7,575.1 1309.7,575.1 1310.7,575.1 1311.7,575.4 1312.7,575.5 1313.7,575.4 1314.7,575.2 1315.7,575.2 1316.7,575.3 1317.7,575.4 1318.7,575.2 1319.7,575.2 1320.7,575.3 1321.7,575.1 1322.7,575.4 1323.7,575.2 1324.7,575.4 1325.7,575.3 1326.7,575.5 1327.7,575.4 1328.7,575.2 1329.7,575.1 1330.7,575.3 1331.7,575.1 1332.7,575.3 1333.7,574.0 1334.7,575.2 1335.7,575.1 1336.7,575.2 1337.7,575.2 1338.7,575.2 1339.7,575.4 1340.7,575.3 1341.7,575.4 1342.7,575.3 1343.7,575.4 1344.7,575.3 1345.7,575.3 1346.7,575.3 1347.7,575.2 1348.7,575.2 1349.7,575.2 1350.7,575.3 1351.7,575.3 1352.7,575.5 1353.7,575.3 1354.7,574.6 1355.7,575.3 1356.7,575.3 1357.7,575.2 1358.7,575.2 1359.7,575.4 1360.7,575.4 1361.7,575.1 1362.7,575.5 1363.7,575.2 1364.7,575.3 1365.7,575.3 1366.7,575.3 1367.7,575.2 1368.7,575.3 1369.7,575.2 1370.7,575.4 1371.7,575.4 1372.7,575.2 1373.7,575.2 1374.7,575.3 1375.7,575.3 1376.7,575.5 1377.7,575.3 1378.7,575.1 1379.7,575.3 1380.7,575.3 1381.7,575.4 1382.7,575.4 1383.7,575.2 1384.7,575.3 1385.7,575.4 1386.7,575.3 1387.7,575.2 1388.7,575.5 1389.7,575.5 1390.7,575.2 1391.7,575.3 1392.7,575.4 1393.7,575.2 1394.7,575.4 1395.7,574.9 1396.7,575.2 1397.7,575.3 1398.7,575.3 1399.7,575.5 1401.4,575.4 1401.4,580.7 1399.7,580.7 1398.7,580.7 1397.7,580.9 1396.7,580.9 1395.7,580.5 1394.7,580.8 1393.7,580.8 1392.7,581.8 1391.7,580.6 1390.7,580.6 1389.7,580.8 1388.7,580.8 1387.7,580.3 1386.7,580.6 1385.7,580.6 1384.7,581.0 1383.7,580.6 1382.7,581.0 1381.7,580.9 1380.7,580.8 1379.7,580.8 1378.7,581.3 1377.7,580.7 1376.7,580.6 1375.7,580.9 1374.7,580.6 1373.7,580.8 1372.7,580.6 1371.7,580.6 1370.7,580.8 1369.7,580.8 1368.7,580.7 1367.7,580.8 1366.7,580.7 1365.7,580.1 1364.7,580.7 1363.7,580.9 1362.7,580.7 1361.7,580.8 1360.7,580.6 1359.7,580.7 1358.7,580.9 1357.7,580.8 1356.7,580.6 1355.7,580.7 1354.7,580.7 1353.7,580.8 1352.7,580.6 1351.7,580.6 1350.7,580.8 1349.7,580.8 1348.7,581.2 1347.7,580.7 1346.7,580.8 1345.7,580.4 1344.7,579.8 1343.7,580.8 1342.7,580.7 1341.7,580.8 1340.7,580.9 1339.7,580.1 1338.7,580.8 1337.7,580.7 1336.7,580.9 1335.7,580.9 1334.7,580.8 1333.7,580.9 1332.7,580.0 1331.7,580.8 1330.7,579.9 1329.7,580.9 1328.7,580.7 1327.7,580.8 1326.7,579.7 1325.7,579.9 1324.7,580.6 1323.7,580.6 1322.7,580.6 1321.7,580.7 1320.7,580.7 1319.7,580.5 1318.7,580.5 1317.7,580.7 1316.7,580.6 1315.7,580.7 1314.7,580.8 1313.7,580.7 1312.7,579.6 1311.7,580.8 1310.7,580.9 1309.7,580.7 1308.7,580.9 1307.7,580.8 1306.7,580.9 1305.7,580.6 1304.7,580.7 1303.7,579.4 1302.7,580.7 1301.7,580.6 1300.7,580.8 1299.7,580.8 1298.7,580.6 1297.7,580.7 1296.7,580.7 1295.7,580.8 1294.7,579.7 1293.7,580.7 1292.7,580.8 1291.7,580.6 1290.7,580.6 1289.7,580.6 1288.7,580.8 1287.7,579.6 1286.7,580.6 1285.7,580.5 1284.7,580.9 1283.7,579.8 1282.7,579.9 1281.7,580.6 1280.7,580.5 1279.7,580.8 1278.7,580.8 1277.7,580.1 1276.7,580.5 1275.7,580.7 1274.7,580.7 1273.7,580.6 1272.7,580.7 1271.7,580.6 1270.7,580.8 1269.7,580.6 1268.7,580.8 1267.7,579.7 1266.7,580.9 1265.7,580.5 1264.7,580.7 1263.7,579.6 1262.7,580.7 1261.7,580.8 1260.7,580.6 1259.7,580.7 1258.7,580.8 1257.7,580.7 1256.7,579.2 1255.7,580.6 1254.7,579.7 1253.7,580.8 1252.7,580.8 1251.7,580.6 1250.7,580.5 1249.7,579.7 1248.7,580.6 1247.7,580.6 1246.7,580.8 1245.7,581.6 1244.7,580.7 1243.7,580.7 1242.7,580.8 1241.7,579.6 1240.7,580.9 1239.7,580.5 1238.7,580.7 1237.7,580.8 1236.7,580.4 1235.7,580.7 1234.7,580.7 1233.7,579.9 1232.7,580.5 1231.7,580.8 1230.7,580.4 1229.7,580.7 1228.7,580.5 1227.7,580.7 1226.7,580.7 1225.7,580.8 1224.7,580.8 1223.7,581.6 1222.7,580.8 1221.7,580.6 1220.7,580.6 1219.7,580.6 1218.7,580.6 1217.7,580.6 1216.7,580.6 1215.7,580.5 1214.7,580.6 1213.7,581.8 1212.7,580.7 1211.7,580.7 1210.7,580.5 1209.7,580.5 1208.7,580.4 1207.7,579.6 1206.7,580.8 1205.7,580.5 1204.7,580.6 1203.7,580.6 1202.7,580.4 1201.7,579.3 1200.7,580.7 1199.7,580.7 1198.7,580.7 1197.7,580.4 1196.7,580.5 1195.7,580.6 1194.7,580.5 1193.7,579.6 1192.7,580.4 1191.7,580.7 1190.7,580.6 1189.7,580.6 1188.7,580.8 1187.7,580.5 1186.7,580.8 1185.7,580.6 1184.7,580.5 1183.7,580.5 1182.7,580.5 1181.7,580.5 1180.7,580.5 1179.7,580.5 1178.7,580.6 1177.7,580.4 1176.7,580.5 1175.7,580.7 1174.7,581.1 1173.7,580.5 1172.7,579.3 1171.7,580.4 1170.7,580.6 1169.7,580.6 1168.7,579.7 1167.7,581.6 1166.7,580.6 1165.7,580.7 1164.7,580.3 1163.7,580.4 1162.7,580.6 1161.7,580.5 1160.7,580.7 1159.7,580.5 1158.7,580.5 1157.7,580.5 1156.7,579.1 1155.7,580.4 1154.7,580.6 1153.7,579.6 1152.7,580.6 1151.7,580.6 1150.7,580.4 1149.7,580.5 1148.7,580.4 1147.7,580.5 1146.7,580.6 1145.7,580.5 1144.7,579.8 1143.7,579.7 1142.7,580.6 1141.7,580.5 1140.7,580.4 1139.7,580.4 1138.7,580.4 1137.7,580.3 1136.7,580.5 1135.7,580.6 1134.7,580.5 1133.7,579.3 1132.7,580.4 1131.7,580.7 1130.7,580.5 1129.7,580.2 1128.7,580.4 1127.7,580.4 1126.7,580.2 1125.7,579.3 1124.7,580.4 1123.7,580.6 1122.7,580.5 1121.7,580.4 1120.7,580.5 1119.7,580.3 1118.7,580.4 1117.7,580.5 1116.7,580.3 1115.7,580.3 1114.7,580.3 1113.7,580.3 1112.7,580.4 1111.7,580.3 1110.7,580.3 1109.7,580.4 1108.7,580.2 1107.7,579.2 1106.7,580.4 1105.7,580.4 1104.7,580.3 1103.7,580.3 1102.7,580.2 1101.7,580.3 1100.7,580.3 1099.7,580.3 1098.7,580.0 1097.7,580.1 1096.7,580.2 1095.7,580.1 1094.7,580.2 1093.7,580.2 1092.7,580.2 1091.7,580.2 1090.7,580.1 1089.7,580.4 1088.7,580.3 1087.7,580.1 1086.7,580.0 1085.7,579.4 1084.7,580.2 1083.7,580.2 1082.7,580.0 1081.7,580.2 1080.7,580.1 1079.7,580.0 1078.7,579.9 1077.7,579.9 1076.7,579.9 1075.7,579.4 1074.7,580.0 1073.7,580.0 1072.7,580.1 1071.7,579.9 1070.7,579.9 1069.7,579.9 1068.7,579.3 1067.7,580.0 1066.7,580.0 1065.7,579.7 1064.7,579.8 1063.7,579.1 1062.7,579.6 1061.7,579.9 1060.7,579.7 1059.7,579.7 1058.7,579.7 1057.7,578.4 1056.7,579.5 1055.7,579.6 1054.7,579.6 1053.7,579.5 1052.7,579.4 1051.7,579.5 1050.7,579.3 1049.7,579.4 1048.7,579.4 1047.7,579.5 1046.7,580.0 1045.7,579.2 1044.7,579.2 1043.7,579.3 1042.7,578.0 1041.7,579.2 1040.7,578.7 1039.7,578.9 1038.7,579.1 1037.7,579.2 1036.7,579.2 1035.7,579.1 1034.7,579.0 1033.7,578.8 1032.7,578.7 1031.7,578.7 1030.7,578.7 1029.7,578.5 1028.7,578.6 1027.7,578.3 1026.7,577.5 1025.7,577.6 1024.7,579.3 1023.7,578.3 1022.7,578.2 1021.7,577.9 1020.7,577.9 1019.7,577.4 1018.7,577.9 1017.7,577.8 1016.7,577.6 1015.7,577.5 1014.7,577.3 1013.7,577.4 1012.7,577.2 1011.7,576.9 1010.7,577.1 1009.7,577.0 1008.7,576.0 1007.7,576.7 1006.7,575.6 1005.7,576.4 1004.7,576.0 1003.7,576.1 1002.7,575.7"/><polygon points="1433.4,570.4 1434.4,570.7 1435.4,570.6 1436.4,570.7 1437.4,570.9 1438.4,571.0 1439.4,571.4 1440.4,571.2 1441.4,571.6 1442.4,571.7 1443.4,571.8 1444.4,572.0 1445.4,572.0 1446.4,571.0 1447.4,572.4 1448.4,572.4 1449.4,572.5 1450.4,572.3 1451.4,572.4 1452.4,572.6 1453.4,572.5 1454.4,572.9 1455.4,572.7 1456.4,572.8 1457.4,573.1 1458.4,573.1 1459.4,573.2 1460.4,573.2 1461.4,573.1 1462.4,573.4 1463.4,573.4 1464.4,573.5 1465.4,573.4 1466.4,573.5 1467.4,573.4 1468.4,572.6 1469.4,573.4 1470.4,573.7 1471.4,573.8 1472.4,573.7 1473.4,573.9 1474.4,573.9 1475.4,573.7 1476.4,573.8 1477.4,574.1 1478.4,574.1 1479.4,573.8 1480.4,573.8 1481.4,573.9 1482.4,574.0 1483.4,574.2 1484.4,574.0 1485.4,574.3 1486.4,574.2 1487.4,574.3 1488.4,574.2 1489.4,574.4 1490.4,574.4 1491.4,574.4 1492.4,574.5 1493.4,574.3 1494.4,574.2 1495.4,574.2 1496.4,574.4 1497.4,574.3 1498.4,574.4 1499.4,574.5 1500.4,574.6 1501.4,574.5 1502.4,574.4 1503.4,574.6 1504.4,574.7 1505.4,574.7 1506.4,574.4 1507.4,574.7 1508.4,574.4 1509.4,574.6 1510.4,573.8 1511.4,574.5 1512.4,574.8 1513.4,574.6 1514.4,574.7 1515.4,574.5 1516.4,574.6 1517.4,574.6 1518.4,574.8 1519.4,574.7 1520.4,574.7 1521.4,574.9 1522.4,574.6 1523.4,574.5 1524.4,574.6 1525.4,574.7 1526.4,574.8 1527.4,574.8 1528.4,574.9 1529.4,574.9 1530.4,574.9 1531.4,574.8 1532.4,574.9 1533.4,574.8 1534.4,575.0 1535.4,574.7 1536.4,575.0 1537.4,574.7 1538.4,575.0 1539.4,574.9 1540.4,575.0 1541.4,574.9 1542.4,574.7 1543.4,574.8 1544.4,574.9 1545.4,574.7 1546.4,575.0 1547.4,575.0 1548.4,574.9 1549.4,575.1 1550.4,575.0 1551.4,575.0 1552.4,574.8 1553.4,575.1 1554.4,574.7 1555.4,574.9 1556.4,575.0 1557.4,575.1 1558.4,574.7 1559.4,574.8 1560.4,574.9 1561.4,574.8 1562.4,575.0 1563.4,575.0 1564.4,575.1 1565.4,574.9 1566.4,575.1 1567.4,574.8 1568.4,575.1 1569.4,574.9 1570.4,575.0 1571.4,574.9 1572.4,575.1 1573.4,575.1 1574.4,575.2 1575.4,575.1 1576.4,575.0 1577.4,574.9 1578.4,574.9 1579.4,574.9 1580.4,575.1 1581.4,574.9 1582.4,575.0 1583.4,575.0 1584.4,575.1 1585.4,575.0 1586.4,575.2 1587.4,575.2 1588.4,574.8 1589.4,575.0 1590.4,574.9 1591.4,575.2 1592.4,575.0 1593.4,575.2 1594.4,575.2 1595.4,575.2 1596.4,574.9 1597.4,575.0 1598.4,574.5 1599.4,574.9 1600.4,575.1 1601.4,575.1 1602.4,575.2 1603.4,575.0 1604.4,575.2 1605.4,574.9 1606.4,575.2 1607.4,575.2 1608.4,575.3 1609.4,575.3 1610.4,575.0 1611.4,575.1 1612.4,575.0 1613.4,575.1 1614.4,575.3 1615.4,575.0 1616.4,575.0 1617.4,575.1 1618.4,575.3 1619.4,575.2 1620.4,575.1 1621.4,575.0 1622.4,575.1 1623.4,575.1 1624.4,575.0 1625.4,574.9 1626.4,575.2 1627.4,575.2 1628.4,574.9 1629.4,575.3 1630.4,575.3 1631.4,575.1 1632.4,575.1 1633.4,575.1 1634.4,575.1 1635.4,575.2 1636.4,575.2 1637.4,575.1 1638.4,575.0 1639.4,575.3 1640.4,575.2 1641.4,575.2 1642.4,575.3 1643.4,575.1 1644.4,575.3 1645.4,575.1 1646.4,575.1 1647.4,575.3 1648.4,575.3 1649.4,575.1 1650.4,574.6 1651.4,575.3 1652.4,575.3 1653.4,575.2 1654.4,575.1 1655.4,575.3 1656.4,575.2 1657.4,575.2 1658.4,575.1 1659.4,575.0 1660.4,575.1 1661.4,575.1 1662.4,575.3 1663.4,575.2 1664.4,575.3 1665.4,575.4 1666.4,575.3 1667.4,575.1 1668.4,575.0 1669.4,575.0 1670.4,575.2 1671.4,575.1 1672.4,575.1 1673.4,575.1 1674.4,575.3 1675.4,575.4 1676.4,575.2 1677.4,575.4 1678.4,575.0 1679.4,575.3 1680.4,575.2 1681.4,575.0 1682.4,575.2 1683.4,575.4 1684.4,575.1 1685.4,575.1 1686.4,575.4 1687.4,575.1 1688.4,575.1 1689.4,575.4 1690.4,575.4 1691.4,575.3 1692.4,575.2 1693.4,575.1 1694.4,574.4 1695.4,575.2 1696.4,575.4 1697.4,575.2 1698.4,575.0 1699.4,575.4 1700.4,575.1 1701.4,575.2 1702.4,575.3 1703.4,575.2 1704.4,575.1 1705.4,575.4 1706.4,575.1 1707.4,575.2 1708.4,575.3 1709.4,575.4 1710.4,575.4 1711.4,575.4 1712.4,575.3 1713.4,575.1 1714.4,575.3 1715.4,575.2 1716.4,574.3 1717.4,575.3 1718.4,575.1 1719.4,575.1 1720.4,575.2 1721.4,575.2 1722.4,575.2 1723.4,575.3 1724.4,575.4 1725.4,575.1 1726.4,575.1 1727.4,575.5 1728.4,575.4 1729.4,575.1 1730.4,575.4 1731.4,575.2 1732.4,575.2 1733.4,575.4 1734.4,575.2 1735.4,575.4 1736.4,575.5 1737.4,575.4 1738.4,575.4 1739.4,575.3 1740.4,575.3 1741.4,575.4 1742.4,575.1 1743.4,575.3 1744.4,575.2 1745.4,575.4 1746.4,575.4 1747.4,575.4 1748.4,575.3 1749.4,575.3 1750.4,575.2 1751.4,575.4 1752.4,575.1 1753.4,574.0 1754.4,575.2 1755.4,575.1 1756.4,575.3 1757.4,575.2 1758.4,575.4 1759.4,575.1 1760.4,575.4 1761.4,575.3 1762.4,575.4 1763.4,575.1 1764.4,575.1 1765.4,575.4 1766.4,575.5 1767.4,575.3 1768.4,575.1 1769.4,575.4 1770.4,574.2 1771.4,575.5 1772.4,575.4 1773.4,575.5 1774.4,575.4 1775.4,575.3 1776.4,575.5 1777.4,575.4 1778.4,575.4 1779.4,575.5 1780.4,575.2 1781.4,575.2 1782.4,575.3 1783.4,575.4 1784.4,575.4 1785.4,575.3 1786.4,575.5 1787.4,575.3 1788.4,575.4 1789.4,575.3 1790.4,575.3 1791.4,575.3 1792.4,575.2 1793.4,575.3 1794.4,575.1 1795.4,575.4 1796.4,575.3 1797.4,575.5 1798.4,575.3 1799.4,575.3 1800.4,575.3 1801.4,575.3 1802.4,574.1 1803.4,575.2 1804.4,575.4 1805.4,575.2 1806.4,575.4 1807.4,575.4 1808.4,575.4 1809.4,575.3 1810.4,574.5 1811.4,575.1 1812.4,575.2 1813.4,575.3 1814.4,575.4 1815.4,575.4 1816.4,575.5 1817.4,575.1 1818.4,575.5 1819.4,574.7 1820.4,575.3 1821.4,575.2 1822.4,575.3 1823.4,575.5 1824.4,575.4 1825.4,575.2 1826.4,575.2 1827.4,575.4 1828.4,575.3 1829.4,575.3 1830.4,575.4 1831.4,575.2 1832.4,575.2 1832.4,580.7 1831.4,580.5 1830.4,580.8 1829.4,580.7 1828.4,580.6 1827.4,580.8 1826.4,580.7 1825.4,580.7 1824.4,580.8 1823.4,580.9 1822.4,580.8 1821.4,580.7 1820.4,580.9 1819.4,580.7 1818.4,580.7 1817.4,580.8 1816.4,580.7 1815.4,581.0 1814.4,580.6 1813.4,580.6 1812.4,579.4 1811.4,580.7 1810.4,580.7 1809.4,580.7 1808.4,580.9 1807.4,580.8 1806.4,580.8 1805.4,580.7 1804.4,580.7 1803.4,580.7 1802.4,581.0 1801.4,580.7 1800.4,580.9 1799.4,580.7 1798.4,580.7 1797.4,580.6 1796.4,580.6 1795.4,580.9 1794.4,580.7 1793.4,580.8 1792.4,580.9 1791.4,580.9 1790.4,580.8 1789.4,580.9 1788.4,580.8 1787.4,580.7 1786.4,580.7 1785.4,580.6 1784.4,580.8 1783.4,580.2 1782.4,580.9 1781.4,580.7 1780.4,580.8 1779.4,580.7 1778.4,580.8 1777.4,580.6 1776.4,580.8 1775.4,579.8 1774.4,580.6 1773.4,580.6 1772.4,580.8 1771.4,580.8 1770.4,580.8 1769.4,580.7 1768.4,580.7 1767.4,580.7 1766.4,580.8 1765.4,580.7 1764.4,580.6 1763.4,580.7 1762.4,579.5 1761.4,580.9 1760.4,580.6 1759.4,580.7 1758.4,580.7 1757.4,580.7 1756.4,580.6 1755.4,580.8 1754.4,580.2 1753.4,580.7 1752.4,580.6 1751.4,580.6 1750.4,580.7 1749.4,580.9 1748.4,580.8 1747.4,579.9 1746.4,580.7 1745.4,579.5 1744.4,580.6 1743.4,580.6 1742.4,580.7 1741.4,580.7 1740.4,580.6 1739.4,579.8 1738.4,580.7 1737.4,580.9 1736.4,580.7 1735.4,579.5 1734.4,580.5 1733.4,580.6 1732.4,580.8 1731.4,580.7 1730.4,580.6 1729.4,580.7 1728.4,580.7 1727.4,580.7 1726.4,580.8 1725.4,580.8 1724.4,580.7 1723.4,581.9 1722.4,580.5 1721.4,580.8 1720.4,580.7 1719.4,580.6 1718.4,580.0 1717.4,580.8 1716.4,580.6 1715.4,580.7 1714.4,580.6 1713.4,580.7 1712.4,580.6 1711.4,579.6 1710.4,580.7 1709.4,579.7 1708.4,581.6 1707.4,580.7 1706.4,580.8 1705.4,580.9 1704.4,580.8 1703.4,580.6 1702.4,581.6 1701.4,580.6 1700.4,580.6 1699.4,581.7 1698.4,580.5 1697.4,580.6 1696.4,580.9 1695.4,580.8 1694.4,580.6 1693.4,580.7 1692.4,580.8 1691.4,579.6 1690.4,580.7 1689.4,580.8 1688.4,580.7 1687.4,580.8 1686.4,580.1 1685.4,580.7 1684.4,580.6 1683.4,580.7 1682.4,580.7 1681.4,580.5 1680.4,580.6 1679.4,580.7 1678.4,580.4 1677.4,580.7 1676.4,580.7 1675.4,580.6 1674.4,580.7 1673.4,580.6 1672.4,580.5 1671.4,580.9 1670.4,580.5 1669.4,580.7 1668.4,580.5 1667.4,580.8 1666.4,580.6 1665.4,580.5 1664.4,580.5 1663.4,580.7 1662.4,580.4 1661.4,580.7 1660.4,579.9 1659.4,579.4 1658.4,580.7 1657.4,580.4 1656.4,580.7 1655.4,580.8 1654.4,580.4 1653.4,579.4 1652.4,580.7 1651.4,580.5 1650.4,580.6 1649.4,580.6 1648.4,580.7 1647.4,580.7 1646.4,580.6 1645.4,580.6 1644.4,579.8 1643.4,580.6 1642.4,580.6 1641.4,580.5 1640.4,580.5 1639.4,580.6 1638.4,580.4 1637.4,579.8 1636.4,580.6 1635.4,580.7 1634.4,580.5 1633.4,580.7 1632.4,580.5 1631.4,580.8 1630.4,580.7 1629.4,581.6 1628.4,580.7 1627.4,580.5 1626.4,580.6 1625.4,580.4 1624.4,580.5 1623.4,580.5 1622.4,579.8 1621.4,581.2 1620.4,580.5 1619.4,580.5 1618.4,580.5 1617.4,580.6 1616.4,580.6 1615.4,580.5 1614.4,580.7 1613.4,580.4 1612.4,580.5 1611.4,580.7 1610.4,580.4 1609.4,580.5 1608.4,580.7 1607.4,580.3 1606.4,580.7 1605.4,580.7 1604.4,580.7 1603.4,580.4 1602.4,580.5 1601.4,580.7 1600.4,580.1 1599.4,581.6 1598.4,580.4 1597.4,580.6 1596.4,579.4 1595.4,580.5 1594.4,580.5 1593.4,580.4 1592.4,580.5 1591.4,580.4 1590.4,580.6 1589.4,580.5 1588.4,580.3 1587.4,581.7 1586.4,580.5 1585.4,579.9 1584.4,580.6 1583.4,580.4 1582.4,580.4 1581.4,580.4 1580.4,580.3 1579.4,579.3 1578.4,580.4 1577.4,580.4 1576.4,581.6 1575.4,580.3 1574.4,580.4 1573.4,580.3 1572.4,580.3 1571.4,580.3 1570.4,580.6 1569.4,580.5 1568.4,580.4 1567.4,580.4 1566.4,580.4 1565.4,580.5 1564.4,579.2 1563.4,580.2 1562.4,580.4 1561.4,580.4 1560.4,580.3 1559.4,580.4 1558.4,580.3 1557.4,580.5 1556.4,580.3 1555.4,580.3 1554.4,580.5 1553.4,580.3 1552.4,580.4 1551.4,580.1 1550.4,580.4 1549.4,580.2 1548.4,580.3 1547.4,580.2 1546.4,580.4 1545.4,580.4 1544.4,580.5 1543.4,580.3 1542.4,580.2 1541.4,580.2 1540.4,580.2 1539.4,580.2 1538.4,580.1 1537.4,580.3 1536.4,580.2 1535.4,579.2 1534.4,580.3 1533.4,581.1 1532.4,580.2 1531.4,580.3 1530.4,580.1 1529.4,580.2 1528.4,580.2 1527.4,580.2 1526.4,580.3 1525.4,580.3 1524.4,580.3 1523.4,580.3 1522.4,580.1 1521.4,580.1 1520.4,580.0 1519.4,580.1 1518.4,580.1 1517.4,580.3 1516.4,580.0 1515.4,580.0 1514.4,578.9 1513.4,580.0 1512.4,578.8 1511.4,580.2 1510.4,580.1 1509.4,579.0 1508.4,579.3 1507.4,580.0 1506.4,580.0 1505.4,580.9 1504.4,580.1 1503.4,580.0 1502.4,579.8 1501.4,579.9 1500.4,580.0 1499.4,578.9 1498.4,579.8 1497.4,579.9 1496.4,580.1 1495.4,580.0 1494.4,579.9 1493.4,579.8 1492.4,579.2 1491.4,579.7 1490.4,579.6 1489.4,579.6 1488.4,579.7 1487.4,579.6 1486.4,579.7 1485.4,579.7 1484.4,579.5 1483.4,579.5 1482.4,579.4 1481.4,580.4 1480.4,579.3 1479.4,579.6 1478.4,579.5 1477.4,579.4 1476.4,579.3 1475.4,579.5 1474.4,579.3 1473.4,579.4 1472.4,579.2 1471.4,579.3 1470.4,579.0 1469.4,579.0 1468.4,579.2 1467.4,579.0 1466.4,579.1 1465.4,578.9 1464.4,579.0 1463.4,578.6 1462.4,578.7 1461.4,578.5 1460.4,578.6 1459.4,578.4 1458.4,578.4 1457.4,578.4 1456.4,577.2 1455.4,578.2 1454.4,578.4 1453.4,577.4 1452.4,577.9 1451.4,577.9 1450.4,577.8 1449.4,577.8 1448.4,577.8 1447.4,577.5 1446.4,577.4 1445.4,577.6 1444.4,577.2 1443.4,577.2 1442.4,577.3 1441.4,577.1 1440.4,577.0 1439.4,576.8 1438.4,576.7 1437.4,576.5 1436.4,576.4 1435.4,576.1 1434.4,576.0 1433.4,575.8"/><polygon points="1864.0,570.5 1865.0,570.7 1866.0,570.8 1867.0,570.8 1868.0,570.9 1869.0,571.2 1870.0,571.5 1871.0,571.4 1872.0,571.6 1873.0,571.5 1874.0,571.9 1875.0,572.0 1876.0,571.9 1877.0,572.0 1878.0,572.3 1879.0,572.3 1880.0,572.2 1881.0,572.5 1882.0,572.6 1883.0,572.4 1884.0,571.4 1885.0,572.8 1886.0,572.7 1887.0,572.9 1888.0,572.8 1889.0,573.2 1890.0,573.1 1891.0,573.2 1892.0,573.1 1893.0,572.7 1894.0,573.2 1895.0,573.5 1896.0,573.3 1897.0,573.6 1898.0,573.6 1899.0,573.7 1900.0,573.5 1901.0,573.8 1902.0,573.8 1903.0,573.6 1904.0,574.0 1905.0,573.9 1906.0,574.0 1907.0,573.7 1908.0,573.8 1909.0,573.9 1910.0,573.9 1911.0,574.0 1912.0,573.9 1913.0,574.2 1914.0,574.2 1915.0,574.1 1916.0,574.3 1917.0,573.2 1918.0,574.2 1919.0,574.0 1920.0,574.3 1921.0,574.4 1922.0,574.3 1923.0,574.4 1924.0,574.4 1925.0,574.2 1926.0,574.4 1927.0,574.3 1928.0,574.5 1929.0,574.2 1930.0,574.5 1931.0,574.5 1932.0,574.4 1933.0,574.4 1934.0,574.4 1935.0,574.5 1936.0,574.4 1937.0,574.6 1938.0,574.7 1939.0,574.6 1940.0,574.7 1941.0,574.5 1942.0,574.5 1943.0,574.5 1944.0,574.8 1945.0,574.5 1946.0,574.8 1947.0,574.7 1948.0,574.8 1949.0,574.5 1950.0,574.8 1951.0,574.7 1952.0,574.6 1953.0,574.6 1954.0,574.8 1955.0,574.6 1956.0,574.6 1957.0,574.7 1958.0,574.6 1959.0,574.6 1960.0,574.6 1961.0,574.8 1962.0,574.8 1963.0,574.8 1964.0,574.7 1965.0,575.0 1966.0,575.0 1967.0,574.8 1968.0,574.8 1969.0,574.7 1970.0,574.3 1971.0,574.8 1972.0,574.8 1973.0,575.0 1974.0,574.8 1975.0,575.1 1976.0,574.8 1977.0,575.0 1978.0,574.2 1979.0,575.0 1980.0,574.7 1981.0,575.0 1982.0,574.9 1983.0,575.0 1984.0,574.9 1985.0,574.9 1986.0,574.8 1987.0,574.9 1988.0,575.1 1989.0,574.8 1990.0,574.9 1991.0,574.8 1992.0,575.1 1993.0,574.8 1994.0,575.0 1995.0,575.0 1996.0,573.7 1997.0,575.2 1998.0,575.2 1999.0,575.0 2000.0,574.8 2001.0,574.9 2002.0,574.8 2003.0,575.1 2004.0,575.1 2005.0,575.0 2006.0,574.9 2007.0,575.1 2008.0,575.0 2009.0,575.1 2010.0,575.1 2011.0,574.9 2012.0,575.0 2013.0,575.0 2014.0,575.0 2015.0,574.9 2016.0,574.9 2017.0,574.5 2018.0,575.0 2019.0,574.9 2020.0,574.9 2021.0,575.2 2022.0,574.9 2023.0,575.0 2024.0,574.9 2025.0,575.2 2026.0,575.2 2027.0,575.1 2028.0,575.0 2029.0,575.0 2030.0,575.2 2031.0,574.9 2032.0,574.9 2033.0,575.0 2034.0,575.3 2035.0,575.1 2036.0,575.0 2037.0,574.9 2038.0,574.9 2039.0,575.1 2040.0,575.3 2041.0,575.2 2042.0,575.1 2043.0,575.0 2044.0,575.2 2045.0,575.0 2046.0,575.2 2047.0,575.1 2048.0,575.2 2049.0,575.1 2050.0,575.0 2051.0,575.1 2052.0,575.0 2053.0,573.8 2054.0,575.1 2055.0,575.3 2056.0,575.1 2057.0,574.1 2058.0,575.1 2059.0,575.0 2060.0,575.2 2061.0,575.0 2062.0,575.3 2063.0,575.3 2064.0,575.3 2065.0,575.2 2066.0,575.0 2067.0,575.3 2068.0,574.9 2069.0,575.3 2070.0,575.0 2071.0,575.3 2072.0,575.0 2073.0,575.0 2074.0,575.3 2075.0,575.2 2076.0,575.2 2077.0,575.0 2078.0,575.2 2079.0,575.3 2080.0,575.2 2081.0,575.1 2082.0,575.1 2083.0,575.1 2084.0,574.2 2085.0,575.1 2086.0,575.0 2087.0,575.2 2088.0,575.3 2089.0,575.2 2090.0,575.1 2091.0,575.1 2092.0,575.4 2093.0,575.4 2094.0,575.2 2095.0,575.0 2096.0,575.1 2097.0,575.2 2098.0,575.1 2099.0,575.3 2100.0,575.2 2101.0,575.1 2102.0,575.1 2103.0,575.1 2104.0,575.1 2105.0,575.2 2106.0,573.8 2107.0,575.0 2108.0,575.1 2109.0,575.3 2110.0,575.3 2111.0,575.2 2112.0,575.0 2113.0,575.2 2114.0,575.0 2115.0,575.4 2116.0,575.3 2117.0,575.4 2118.0,575.1 2119.0,575.1 2120.0,575.3 2121.0,575.2 2122.0,575.1 2123.0,575.4 2124.0,575.4 2125.0,575.2 2126.0,575.1 2127.0,575.1 2128.0,575.2 2129.0,575.1 2130.0,575.2 2131.0,575.2 2132.0,575.4 2133.0,575.1 2134.0,575.3 2135.0,575.4 2136.0,575.2 2137.0,574.7 2138.0,575.3 2139.0,575.3 2140.0,575.1 2141.0,575.4 2142.0,575.1 2143.0,575.2 2144.0,575.4 2145.0,575.1 2146.0,575.4 2147.0,575.4 2148.0,575.2 2149.0,575.3 2150.0,575.3 2151.0,575.4 2152.0,575.2 2153.0,575.2 2154.0,575.1 2155.0,575.4 2156.0,575.3 2157.0,575.3 2158.0,574.4 2159.0,575.2 2160.0,575.4 2161.0,575.4 2162.0,574.5 2163.0,575.1 2164.0,575.4 2165.0,575.2 2166.0,575.1 2167.0,575.2 2168.0,575.3 2169.0,575.2 2170.0,575.4 2171.0,575.1 2172.0,575.2 2173.0,574.2 2174.0,575.2 2175.0,575.5 2176.0,575.5 2177.0,575.3 2178.0,575.3 2179.0,575.2 2180.0,575.4 2181.0,575.2 2182.0,575.1 2183.0,575.4 2184.0,575.3 2185.0,573.9 2186.0,575.2 2187.0,575.4 2188.0,575.1 2189.0,575.3 2190.0,575.5 2191.0,575.4 2192.0,575.1 2193.0,575.4 2194.0,575.3 2195.0,575.4 2196.0,575.2 2197.0,575.3 2198.0,575.1 2199.0,575.5 2200.0,575.2 2201.0,575.4 2202.0,575.2 2203.0,575.2 2204.0,575.3 2205.0,575.2 2206.0,575.5 2207.0,575.1 2208.0,574.4 2209.0,575.3 2210.0,575.3 2211.0,575.5 2212.0,575.1 2213.0,575.3 2214.0,575.1 2215.0,575.2 2216.0,574.7 2217.0,575.3 2218.0,575.4 2219.0,575.2 2220.0,575.4 2221.0,575.3 2222.0,575.3 2223.0,575.3 2224.0,575.2 2225.0,575.3 2226.0,575.3 2227.0,575.5 2228.0,575.2 2229.0,575.4 2230.0,575.2 2231.0,575.5 2232.0,575.3 2233.0,575.2 2234.0,575.2 2235.0,575.3 2236.0,575.4 2237.0,575.3 2238.0,575.2 2239.0,575.5 2240.0,575.4 2241.0,575.4 2242.0,575.2 2243.0,575.4 2244.0,575.4 2245.0,575.3 2246.0,575.4 2247.0,575.2 2248.0,575.3 2249.0,575.3 2250.0,575.2 2251.0,575.3 2252.0,575.3 2253.0,575.2 2254.0,575.2 2255.0,575.3 2256.0,575.5 2257.0,575.3 2258.0,575.1 2259.0,575.5 2260.0,575.2 2261.0,575.3 2262.0,575.4 2263.4,575.3 2263.4,580.7 2262.0,580.9 2261.0,580.7 2260.0,580.6 2259.0,580.7 2258.0,580.8 2257.0,580.7 2256.0,580.7 2255.0,580.8 2254.0,580.8 2253.0,580.9 2252.0,580.9 2251.0,581.5 2250.0,580.8 2249.0,580.8 2248.0,580.6 2247.0,580.9 2246.0,580.7 2245.0,580.9 2244.0,580.6 2243.0,581.9 2242.0,580.8 2241.0,580.8 2240.0,580.6 2239.0,580.8 2238.0,580.8 2237.0,580.7 2236.0,580.6 2235.0,580.8 2234.0,580.8 2233.0,580.8 2232.0,580.8 2231.0,580.7 2230.0,580.7 2229.0,580.8 2228.0,579.9 2227.0,580.8 2226.0,581.0 2225.0,580.7 2224.0,580.5 2223.0,580.1 2222.0,580.7 2221.0,580.8 2220.0,580.8 2219.0,580.7 2218.0,580.8 2217.0,580.8 2216.0,580.7 2215.0,579.6 2214.0,580.7 2213.0,580.8 2212.0,580.8 2211.0,580.8 2210.0,580.8 2209.0,580.2 2208.0,580.6 2207.0,580.7 2206.0,579.7 2205.0,580.7 2204.0,580.8 2203.0,580.6 2202.0,580.8 2201.0,580.8 2200.0,580.7 2199.0,580.7 2198.0,580.8 2197.0,580.6 2196.0,580.6 2195.0,581.6 2194.0,580.9 2193.0,579.5 2192.0,579.8 2191.0,580.6 2190.0,581.8 2189.0,579.6 2188.0,580.8 2187.0,580.7 2186.0,580.2 2185.0,580.9 2184.0,580.2 2183.0,580.7 2182.0,580.8 2181.0,580.1 2180.0,580.7 2179.0,580.8 2178.0,580.7 2177.0,580.9 2176.0,580.6 2175.0,580.9 2174.0,580.0 2173.0,580.7 2172.0,580.8 2171.0,581.4 2170.0,580.6 2169.0,580.8 2168.0,580.8 2167.0,580.6 2166.0,580.9 2165.0,580.7 2164.0,580.5 2163.0,580.8 2162.0,580.6 2161.0,579.7 2160.0,580.8 2159.0,580.7 2158.0,580.8 2157.0,580.7 2156.0,580.7 2155.0,580.6 2154.0,580.7 2153.0,581.4 2152.0,580.6 2151.0,580.6 2150.0,581.0 2149.0,580.8 2148.0,580.0 2147.0,580.7 2146.0,580.5 2145.0,580.8 2144.0,580.7 2143.0,580.8 2142.0,580.7 2141.0,580.8 2140.0,580.8 2139.0,580.8 2138.0,580.5 2137.0,580.7 2136.0,579.8 2135.0,580.8 2134.0,580.7 2133.0,580.7 2132.0,580.7 2131.0,580.5 2130.0,580.8 2129.0,580.8 2128.0,580.8 2127.0,580.8 2126.0,580.7 2125.0,580.9 2124.0,580.6 2123.0,580.7 2122.0,580.9 2121.0,579.4 2120.0,579.4 2119.0,580.7 2118.0,580.7 2117.0,580.8 2116.0,580.6 2115.0,580.7 2114.0,580.7 2113.0,580.5 2112.0,580.7 2111.0,579.7 2110.0,580.5 2109.0,580.8 2108.0,580.8 2107.0,580.5 2106.0,580.9 2105.0,580.5 2104.0,581.1 2103.0,580.5 2102.0,580.8 2101.0,580.5 2100.0,580.7 2099.0,580.6 2098.0,580.6 2097.0,580.7 2096.0,579.6 2095.0,580.5 2094.0,580.7 2093.0,580.6 2092.0,580.7 2091.0,580.7 2090.0,579.8 2089.0,580.1 2088.0,580.6 2087.0,580.7 2086.0,580.9 2085.0,580.8 2084.0,580.6 2083.0,580.8 2082.0,579.4 2081.0,580.8 2080.0,580.7 2079.0,580.7 2078.0,580.6 2077.0,580.5 2076.0,579.3 2075.0,580.6 2074.0,580.7 2073.0,580.5 2072.0,580.6 2071.0,580.7 2070.0,579.9 2069.0,580.4 2068.0,580.1 2067.0,580.6 2066.0,580.5 2065.0,580.5 2064.0,580.6 2063.0,580.8 2062.0,580.5 2061.0,580.6 2060.0,580.5 2059.0,580.7 2058.0,580.5 2057.0,580.6 2056.0,580.6 2055.0,580.7 2054.0,580.6 2053.0,580.7 2052.0,580.6 2051.0,580.5 2050.0,580.7 2049.0,580.4 2048.0,580.5 2047.0,580.7 2046.0,580.5 2045.0,580.4 2044.0,580.5 2043.0,580.4 2042.0,580.4 2041.0,580.4 2040.0,580.4 2039.0,580.6 2038.0,580.5 2037.0,580.7 2036.0,579.8 2035.0,580.5 2034.0,580.7 2033.0,579.2 2032.0,580.6 2031.0,580.7 2030.0,580.5 2029.0,580.5 2028.0,579.6 2027.0,580.7 2026.0,580.6 2025.0,580.4 2024.0,579.5 2023.0,580.5 2022.0,579.9 2021.0,580.6 2020.0,580.6 2019.0,580.5 2018.0,580.6 2017.0,580.4 2016.0,580.4 2015.0,579.8 2014.0,580.4 2013.0,580.7 2012.0,580.4 2011.0,580.4 2010.0,580.4 2009.0,580.5 2008.0,579.6 2007.0,580.4 2006.0,580.4 2005.0,580.6 2004.0,580.4 2003.0,580.6 2002.0,580.4 2001.0,580.5 2000.0,580.4 1999.0,580.5 1998.0,581.4 1997.0,580.4 1996.0,580.4 1995.0,580.5 1994.0,580.5 1993.0,580.4 1992.0,580.3 1991.0,580.4 1990.0,580.5 1989.0,580.3 1988.0,580.4 1987.0,580.3 1986.0,580.5 1985.0,580.4 1984.0,580.3 1983.0,580.2 1982.0,579.6 1981.0,579.4 1980.0,579.4 1979.0,580.2 1978.0,579.3 1977.0,580.4 1976.0,580.2 1975.0,580.3 1974.0,579.3 1973.0,580.5 1972.0,579.3 1971.0,580.2 1970.0,580.4 1969.0,580.1 1968.0,580.3 1967.0,580.4 1966.0,580.4 1965.0,580.4 1964.0,580.2 1963.0,580.2 1962.0,580.2 1961.0,580.1 1960.0,580.2 1959.0,580.2 1958.0,580.1 1957.0,580.1 1956.0,580.4 1955.0,580.1 1954.0,580.2 1953.0,580.2 1952.0,580.2 1951.0,580.2 1950.0,580.1 1949.0,580.1 1948.0,580.2 1947.0,581.0 1946.0,580.2 1945.0,580.1 1944.0,580.0 1943.0,579.9 1942.0,580.1 1941.0,580.1 1940.0,580.1 1939.0,579.9 1938.0,580.2 1937.0,580.0 1936.0,580.0 1935.0,580.1 1934.0,580.1 1933.0,580.1 1932.0,579.9 1931.0,580.1 1930.0,580.0 1929.0,579.9 1928.0,579.8 1927.0,579.8 1926.0,580.0 1925.0,579.8 1924.0,579.9 1923.0,579.6 1922.0,579.9 1921.0,579.6 1920.0,579.6 1919.0,579.6 1918.0,579.5 1917.0,579.8 1916.0,579.4 1915.0,579.5 1914.0,579.6 1913.0,579.1 1912.0,579.4 1911.0,579.5 1910.0,579.5 1909.0,579.3 1908.0,579.4 1907.0,579.3 1906.0,578.6 1905.0,579.3 1904.0,579.1 1903.0,579.1 1902.0,579.3 1901.0,579.0 1900.0,579.1 1899.0,579.0 1898.0,578.6 1897.0,578.9 1896.0,578.7 1895.0,579.0 1894.0,578.9 1893.0,578.7 1892.0,578.6 1891.0,578.5 1890.0,578.7 1889.0,578.5 1888.0,579.3 1887.0,578.3 1886.0,578.3 1885.0,577.1 1884.0,577.0 1883.0,578.1 1882.0,577.9 1881.0,577.9 1880.0,577.7 1879.0,577.8 1878.0,577.5 1877.0,577.6 1876.0,577.4 1875.0,577.2 1874.0,578.4 1873.0,577.0 1872.0,576.2 1871.0,576.8 1870.0,576.8 1869.0,576.4 1868.0,576.5 1867.0,576.3 1866.0,576.2 1865.0,576.0 1864.0,575.9"/><polygon points="2294.5,570.3 2295.5,569.1 2296.5,570.8 2297.5,570.7 2298.5,571.1 2299.5,571.1 2300.5,571.2 2301.5,570.4 2302.5,571.3 2303.5,571.8 2304.5,571.8 2305.5,571.9 2306.5,570.8 2307.5,571.9 2308.5,572.0 2309.5,571.2 2310.5,572.5 2311.5,572.3 2312.5,572.5 2313.5,572.7 2314.5,572.7 2315.5,572.9 2316.5,572.8 2317.5,573.0 2318.5,572.9 2319.5,573.2 2320.5,573.0 2321.5,573.0 2322.5,573.3 2323.5,573.2 2324.5,573.2 2325.5,573.3 2326.5,573.5 2327.5,573.3 2328.5,573.5 2329.5,573.4 2330.5,573.5 2331.5,573.8 2332.5,573.8 2333.5,573.6 2334.5,573.9 2335.5,574.0 2336.5,573.1 2337.5,573.9 2338.5,573.9 2339.5,573.8 2340.5,573.1 2341.5,574.1 2342.5,574.1 2343.5,574.0 2344.5,574.2 2345.5,574.2 2346.5,574.3 2347.5,574.0 2348.5,574.4 2349.5,574.3 2350.5,574.1 2351.5,574.4 2352.5,574.1 2353.5,574.5 2354.5,574.2 2355.5,574.4 2356.5,574.4 2357.5,574.6 2358.5,574.3 2359.5,574.3 2360.5,574.4 2361.5,574.3 2362.5,574.3 2363.5,573.1 2364.5,574.5 2365.5,574.4 2366.5,574.6 2367.5,574.7 2368.5,574.5 2369.5,574.6 2370.5,574.5 2371.5,574.6 2372.5,574.7 2373.5,574.6 2374.5,574.8 2375.5,574.6 2376.5,574.6 2377.5,574.7 2378.5,574.5 2379.5,574.8 2380.5,574.6 2381.5,573.5 2382.5,574.5 2383.5,574.6 2384.5,574.9 2385.5,574.6 2386.5,574.7 2387.5,574.7 2388.5,574.6 2389.5,574.6 2390.5,574.8 2391.5,574.7 2392.5,574.7 2393.5,574.6 2394.5,573.6 2395.5,574.6 2396.5,574.8 2397.5,574.8 2398.5,574.8 2399.5,574.9 2400.5,574.8 2401.5,574.9 2402.5,574.9 2403.5,574.7 2404.5,574.7 2405.5,574.7 2406.5,574.9 2407.5,574.9 2408.5,574.8 2409.5,574.9 2410.5,574.9 2411.5,575.0 2412.5,575.1 2413.5,574.9 2414.5,574.8 2415.5,574.9 2416.5,575.0 2417.5,574.7 2418.5,575.0 2419.5,574.8 2420.5,574.8 2421.5,575.0 2422.5,575.0 2423.5,575.0 2424.5,574.9 2425.5,575.0 2426.5,574.8 2427.5,574.8 2428.5,574.9 2429.5,574.9 2430.5,574.3 2431.5,575.2 2432.5,574.9 2433.5,575.2 2434.5,575.0 2435.5,575.1 2436.5,574.8 2437.5,574.9 2438.5,575.0 2439.5,575.0 2440.5,574.8 2441.5,574.0 2442.5,575.0 2443.5,574.8 2444.5,575.1 2445.5,575.2 2446.5,575.0 2447.5,574.8 2448.5,575.1 2449.5,574.9 2450.5,575.1 2451.5,575.0 2452.5,575.1 2453.5,575.2 2454.5,574.9 2455.5,575.1 2456.5,575.1 2457.5,574.9 2458.5,575.1 2459.5,575.0 2460.5,575.1 2461.5,575.0 2462.5,574.9 2463.5,575.0 2464.5,575.0 2465.5,575.1 2466.5,575.2 2467.5,574.9 2468.5,575.2 2469.5,575.2 2470.5,575.2 2471.5,575.0 2472.5,575.2 2473.5,575.2 2475.0,575.0 2475.0,580.5 2473.5,580.7 2472.5,580.4 2471.5,580.5 2470.5,580.7 2469.5,580.5 2468.5,580.6 2467.5,580.6 2466.5,580.6 2465.5,580.7 2464.5,580.7 2463.5,580.4 2462.5,579.7 2461.5,580.5 2460.5,580.6 2459.5,580.3 2458.5,580.7 2457.5,580.4 2456.5,580.5 2455.5,579.7 2454.5,580.5 2453.5,580.5 2452.5,580.4 2451.5,580.4 2450.5,580.5 2449.5,580.6 2448.5,580.6 2447.5,580.5 2446.5,580.7 2445.5,580.6 2444.5,580.4 2443.5,580.6 2442.5,580.3 2441.5,580.5 2440.5,580.5 2439.5,580.5 2438.5,580.4 2437.5,580.4 2436.5,580.4 2435.5,579.9 2434.5,580.4 2433.5,580.5 2432.5,580.2 2431.5,580.5 2430.5,580.3 2429.5,580.4 2428.5,580.5 2427.5,580.3 2426.5,580.3 2425.5,580.3 2424.5,580.3 2423.5,580.5 2422.5,580.4 2421.5,580.4 2420.5,580.3 2419.5,580.3 2418.5,580.3 2417.5,579.5 2416.5,580.4 2415.5,580.4 2414.5,580.5 2413.5,580.4 2412.5,580.3 2411.5,581.6 2410.5,580.3 2409.5,580.5 2408.5,580.4 2407.5,580.2 2406.5,580.3 2405.5,580.2 2404.5,580.4 2403.5,580.3 2402.5,580.3 2401.5,580.2 2400.5,580.2 2399.5,580.1 2398.5,580.1 2397.5,580.3 2396.5,580.1 2395.5,580.2 2394.5,580.3 2393.5,580.1 2392.5,580.0 2391.5,580.2 2390.5,579.5 2389.5,580.2 2388.5,580.1 2387.5,580.3 2386.5,580.1 2385.5,580.3 2384.5,580.1 2383.5,580.1 2382.5,580.0 2381.5,580.0 2380.5,580.2 2379.5,580.3 2378.5,579.9 2377.5,581.2 2376.5,580.2 2375.5,580.1 2374.5,579.9 2373.5,580.3 2372.5,579.9 2371.5,579.4 2370.5,580.0 2369.5,580.0 2368.5,579.2 2367.5,580.0 2366.5,580.0 2365.5,579.8 2364.5,580.0 2363.5,579.8 2362.5,579.9 2361.5,580.0 2360.5,580.0 2359.5,579.8 2358.5,578.9 2357.5,579.9 2356.5,579.8 2355.5,579.8 2354.5,579.8 2353.5,579.8 2352.5,579.6 2351.5,579.7 2350.5,579.6 2349.5,579.6 2348.5,579.6 2347.5,578.5 2346.5,579.5 2345.5,579.7 2344.5,579.5 2343.5,579.4 2342.5,579.5 2341.5,579.3 2340.5,579.4 2339.5,579.4 2338.5,579.3 2337.5,579.4 2336.5,579.3 2335.5,579.4 2334.5,579.1 2333.5,578.5 2332.5,578.1 2331.5,579.1 2330.5,579.1 2329.5,579.1 2328.5,579.1 2327.5,579.1 2326.5,579.0 2325.5,578.9 2324.5,578.8 2323.5,579.5 2322.5,578.8 2321.5,578.6 2320.5,578.5 2319.5,578.3 2318.5,578.3 2317.5,578.3 2316.5,578.3 2315.5,578.1 2314.5,578.0 2313.5,578.1 2312.5,576.9 2311.5,576.8 2310.5,577.7 2309.5,577.6 2308.5,577.0 2307.5,577.7 2306.5,576.4 2305.5,577.3 2304.5,577.4 2303.5,577.2 2302.5,576.8 2301.5,576.6 2300.5,575.5 2299.5,576.5 2298.5,576.4 2297.5,576.1 2296.5,576.2 2295.5,576.0 2294.5,575.8"/><polygon points="970.2,455.1 971.2,457.4 972.2,459.3 973.2,461.6 974.2,464.0 975.2,466.1 976.2,466.2 977.2,466.3 978.2,466.0 979.2,466.1 980.2,466.3 981.2,466.1 982.2,466.3 983.2,466.2 984.2,466.3 985.2,465.9 986.2,466.1 987.2,466.2 988.2,466.4 989.2,466.4 990.2,466.0 991.2,465.6 992.2,465.5 993.2,466.4 994.2,466.3 995.2,466.1 996.2,466.3 997.2,466.2 998.2,466.4 999.2,466.4 1000.2,465.9 1001.2,466.2 1002.2,466.2 1002.2,607.7 1001.2,607.8 1000.2,608.0 999.2,607.7 998.2,608.0 997.2,608.0 996.2,607.8 995.2,608.8 994.2,607.8 993.2,607.6 992.2,607.7 991.2,607.8 990.2,608.0 989.2,607.9 988.2,608.0 987.2,608.9 986.2,607.7 985.2,607.7 984.2,607.6 983.2,607.8 982.2,607.8 981.2,608.0 980.2,608.1 979.2,607.9 978.2,608.0 977.2,607.7 976.2,607.7 975.2,607.6 974.2,607.9 973.2,607.8 972.2,608.7 971.2,608.0 970.2,608.1"/><polygon points="1401.2,455.3 1402.2,457.2 1403.2,459.4 1404.2,461.2 1405.2,463.7 1406.2,466.0 1407.2,466.0 1408.2,466.1 1409.2,466.0 1410.2,466.4 1411.2,466.4 1412.2,466.0 1413.2,465.7 1414.2,466.5 1415.2,466.1 1416.2,466.1 1417.2,465.6 1418.2,465.9 1419.2,466.0 1420.2,466.4 1421.2,466.5 1422.2,466.5 1423.2,466.0 1424.2,466.2 1425.2,466.1 1426.2,465.9 1427.2,466.3 1428.2,465.9 1429.2,466.2 1430.2,466.0 1431.2,466.0 1432.2,466.2 1433.2,466.4 1433.2,607.9 1432.2,608.1 1431.2,607.7 1430.2,607.7 1429.2,608.0 1428.2,607.7 1427.2,608.0 1426.2,608.0 1425.2,607.8 1424.2,608.0 1423.2,607.9 1422.2,607.8 1421.2,607.9 1420.2,607.9 1419.2,607.9 1418.2,608.1 1417.2,608.0 1416.2,607.7 1415.2,608.0 1414.2,607.8 1413.2,607.7 1412.2,607.8 1411.2,607.7 1410.2,607.8 1409.2,607.9 1408.2,608.4 1407.2,607.8 1406.2,607.9 1405.2,607.8 1404.2,607.9 1403.2,608.1 1402.2,607.7 1401.2,607.8"/><polygon points="1832.2,455.4 1833.2,456.9 1834.2,459.1 1835.2,461.2 1836.2,464.0 1837.2,466.4 1838.2,466.4 1839.2,465.9 1840.2,466.2 1841.2,466.1 1842.2,466.4 1843.2,466.4 1844.2,466.3 1845.2,465.7 1846.2,466.3 1847.2,466.4 1848.2,466.2 1849.2,466.2 1850.2,466.1 1851.2,465.6 1852.2,465.9 1853.2,466.3 1854.2,466.1 1855.2,466.2 1856.2,466.4 1857.2,465.9 1858.2,466.3 1859.2,466.0 1860.2,466.2 1861.2,466.5 1862.2,466.3 1863.2,465.6 1864.2,466.4 1864.2,607.7 1863.2,607.6 1862.2,607.6 1861.2,608.0 1860.2,607.8 1859.2,607.7 1858.2,608.0 1857.2,608.0 1856.2,608.0 1855.2,608.1 1854.2,607.7 1853.2,607.7 1852.2,607.6 1851.2,607.9 1850.2,607.8 1849.2,607.9 1848.2,607.6 1847.2,608.0 1846.2,607.6 1845.2,607.8 1844.2,607.6 1843.2,607.9 1842.2,609.0 1841.2,607.7 1840.2,608.5 1839.2,607.7 1838.2,607.8 1837.2,607.6 1836.2,608.0 1835.2,607.6 1834.2,607.7 1833.2,607.7 1832.2,607.8"/><polygon points="2263.2,454.9 2264.2,457.3 2265.2,459.0 2266.2,461.3 2267.2,463.6 2268.2,466.1 2269.2,466.1 2270.2,466.0 2271.2,466.2 2272.2,465.1 2273.2,466.1 2274.2,466.5 2275.2,466.2 2276.2,466.5 2277.2,466.1 2278.2,466.2 2279.2,466.2 2280.2,466.1 2281.2,466.1 2282.2,466.3 2283.2,466.1 2284.2,466.2 2285.2,466.5 2286.2,466.0 2287.2,465.9 2288.2,466.1 2289.2,466.2 2290.2,466.0 2291.2,466.2 2292.2,466.2 2293.2,466.0 2294.2,466.1 2294.2,607.6 2293.2,609.1 2292.2,607.9 2291.2,609.2 2290.2,607.6 2289.2,608.0 2288.2,608.0 2287.2,607.8 2286.2,608.0 2285.2,607.7 2284.2,607.9 2283.2,607.7 2282.2,607.7 2281.2,607.8 2280.2,607.7 2279.2,607.6 2278.2,607.7 2277.2,607.9 2276.2,607.9 2275.2,608.0 2274.2,607.8 2273.2,607.8 2272.2,607.9 2271.2,608.0 2270.2,607.9 2269.2,607.7 2268.2,608.0 2267.2,608.0 2266.2,607.8 2265.2,608.1 2264.2,608.0 2263.2,607.9"/></g><g fill="#ff9428"><polygon points="3.9,1087.3 4.9,1088.1 5.9,1087.4 6.9,1087.9 7.9,1087.9 8.9,1087.1 9.9,1087.0 10.9,1087.4 11.9,1087.4 12.9,1087.7 13.9,1087.1 14.9,1087.2 15.9,1087.4 16.9,1087.8 17.9,1087.0 18.9,1088.0 19.9,1087.6 20.9,1088.1 21.9,1088.0 22.9,1088.2 23.9,1087.9 24.9,1087.4 25.9,1087.2 26.9,1087.9 27.9,1087.7 28.9,1087.7 29.9,1087.3 30.9,1088.2 31.9,1088.0 32.9,1087.2 33.9,1088.1 34.9,1088.2 35.9,1087.2 36.9,1087.4 37.9,1087.5 38.9,1087.3 39.9,1088.1 40.9,1088.1 41.9,1087.2 42.9,1087.5 43.9,1088.0 44.9,1088.1 45.9,1087.1 46.9,1087.5 47.9,1087.0 48.9,1088.1 49.9,1087.6 50.9,1087.7 51.9,1087.9 52.9,1087.9 53.9,1088.1 54.9,1087.4 55.9,1087.3 56.9,1088.1 57.9,1087.5 58.9,1087.5 59.9,1087.3 60.9,1087.1 61.9,1087.4 62.9,1087.5 63.9,1087.9 64.9,1087.6 65.9,1087.4 66.9,1088.0 67.9,1087.3 68.9,1088.1 69.9,1086.0 70.9,1087.1 71.9,1087.8 72.9,1087.6 73.9,1087.2 74.9,1087.2 75.9,1087.8 76.9,1087.1 77.9,1087.1 78.9,1087.2 79.9,1087.2 80.9,1087.9 81.9,1087.6 82.9,1087.8 83.9,1087.2 84.9,1087.7 85.9,1087.5 86.9,1087.5 87.9,1088.1 88.9,1087.7 89.9,1087.1 90.9,1087.5 91.9,1087.7 92.9,1087.6 93.9,1088.0 94.9,1087.2 95.9,1087.7 96.9,1087.8 97.9,1088.1 98.9,1087.1 99.9,1088.1 100.9,1087.8 101.9,1087.5 102.9,1087.6 103.9,1087.4 104.9,1088.0 105.9,1087.9 106.9,1087.7 107.9,1087.1 108.9,1087.2 109.9,1087.8 110.9,1087.9 111.9,1087.5 112.9,1087.1 113.9,1087.6 114.9,1088.2 115.9,1088.2 116.9,1087.9 117.9,1087.9 118.9,1088.0 119.9,1087.4 120.9,1087.1 121.9,1088.2 122.9,1087.8 123.9,1087.2 124.9,1087.9 125.9,1087.1 126.9,1087.8 127.9,1087.5 128.9,1087.8 129.9,1088.0 130.9,1087.8 131.9,1085.9 132.9,1087.4 133.9,1087.3 134.9,1087.1 135.9,1087.4 136.9,1087.3 137.9,1088.1 138.9,1087.9 139.9,1087.7 140.9,1087.3 141.9,1087.3 142.9,1087.4 143.9,1086.4 144.9,1087.5 145.9,1087.8 146.9,1087.6 147.9,1087.3 148.9,1087.3 149.9,1088.0 150.9,1087.7 151.9,1088.0 152.9,1087.8 153.9,1087.3 154.9,1088.2 155.9,1087.0 156.9,1087.4 157.9,1087.7 158.9,1087.0 159.9,1087.7 160.9,1087.4 161.9,1087.2 162.9,1087.1 163.9,1087.5 164.9,1087.7 165.9,1087.9 166.9,1087.7 167.9,1088.1 168.9,1088.1 169.9,1087.3 170.9,1087.5 171.9,1087.0 172.9,1087.5 173.9,1087.9 174.9,1087.3 175.9,1087.1 176.9,1087.6 177.9,1087.9 178.9,1087.1 179.9,1087.1 180.9,1087.2 181.9,1087.4 182.9,1087.6 183.9,1087.8 184.9,1087.8 185.9,1088.0 186.9,1088.1 187.9,1087.0 188.9,1087.3 189.9,1088.0 190.9,1087.9 191.9,1087.1 192.9,1087.9 193.9,1088.2 194.9,1087.0 195.9,1087.7 196.9,1087.5 197.9,1087.9 198.9,1087.8 199.9,1088.1 200.9,1087.5 201.9,1087.8 202.9,1088.0 203.9,1088.1 204.9,1086.5 205.9,1088.0 206.9,1087.6 207.9,1087.6 208.9,1087.3 209.9,1087.5 210.9,1087.5 211.9,1087.9 212.9,1087.6 213.9,1087.2 214.9,1088.1 215.9,1087.2 216.9,1087.0 217.9,1088.0 218.9,1087.4 219.9,1087.9 220.9,1087.3 221.9,1086.3 222.9,1087.2 223.9,1088.1 224.9,1087.2 225.9,1088.1 226.9,1088.1 227.9,1087.5 228.9,1087.7 229.9,1087.6 230.9,1087.5 231.9,1088.1 232.9,1087.6 233.9,1087.2 234.9,1086.2 235.9,1087.2 236.9,1087.2 237.9,1087.2 238.9,1087.4 239.9,1087.1 240.9,1088.0 241.9,1088.0 242.9,1087.3 243.9,1086.7 244.9,1088.1 245.9,1087.6 246.9,1087.8 247.9,1087.1 248.9,1087.7 249.9,1087.5 250.9,1087.3 251.9,1087.5 252.9,1087.4 253.9,1087.4 254.9,1088.1 255.9,1087.3 256.9,1088.0 257.9,1087.9 258.9,1087.8 259.9,1088.0 260.9,1087.0 261.9,1087.1 262.9,1087.4 263.9,1088.1 264.9,1087.3 265.9,1087.3 266.9,1088.1 267.9,1088.0 268.9,1087.5 269.9,1087.7 270.9,1087.7 271.9,1087.4 272.9,1086.1 273.9,1087.3 274.9,1087.5 275.9,1087.3 276.9,1087.0 277.9,1087.2 278.9,1088.1 279.9,1087.4 280.9,1087.4 281.9,1087.3 282.9,1087.6 283.9,1087.7 284.9,1087.4 285.9,1087.4 286.9,1087.5 287.9,1087.6 288.9,1087.5 289.9,1087.2 290.9,1087.2 291.9,1087.7 292.9,1088.1 293.9,1088.0 294.9,1087.5 295.9,1088.1 296.9,1087.3 297.9,1087.9 298.9,1087.9 299.9,1087.3 300.9,1087.4 301.9,1087.9 302.9,1088.1 303.9,1087.6 304.9,1087.8 305.9,1087.5 306.9,1087.3 307.9,1086.9 308.9,1087.2 309.9,1087.6 310.9,1088.1 311.9,1087.4 312.9,1087.3 313.9,1087.9 314.9,1087.9 315.9,1087.3 316.9,1087.2 317.9,1087.7 318.9,1087.4 319.9,1087.1 320.9,1088.0 321.9,1087.6 322.9,1087.8 323.9,1087.7 324.9,1087.9 325.9,1087.4 326.9,1088.2 327.9,1087.6 328.9,1087.5 329.9,1088.2 330.9,1087.1 331.9,1088.1 332.9,1087.8 333.9,1087.6 334.9,1087.2 335.9,1087.5 336.9,1088.0 337.9,1087.4 338.9,1088.0 339.9,1087.7 340.9,1087.4 341.9,1088.0 342.9,1087.2 343.9,1087.2 344.9,1087.7 345.9,1087.7 346.9,1087.8 347.9,1088.0 348.9,1087.1 349.9,1087.7 350.9,1087.3 351.9,1087.7 352.9,1088.0 353.9,1087.1 354.9,1087.3 355.9,1087.4 356.9,1087.5 357.9,1087.3 358.9,1087.2 359.9,1088.0 360.9,1087.4 361.9,1087.3 362.9,1087.5 363.9,1087.2 364.9,1087.9 365.9,1087.5 366.9,1087.1 367.9,1088.1 368.9,1087.5 369.9,1087.2 370.9,1087.1 371.9,1087.2 372.9,1088.0 373.9,1087.7 374.9,1087.4 375.9,1087.6 376.9,1087.3 377.9,1087.8 378.9,1087.7 379.9,1087.1 380.9,1087.9 381.9,1087.6 382.9,1088.0 383.9,1087.1 384.9,1087.5 385.9,1087.2 386.9,1088.2 387.9,1086.1 388.9,1087.0 389.9,1087.4 390.9,1087.2 391.9,1088.1 392.9,1087.9 393.9,1087.8 394.9,1087.6 395.9,1088.1 396.9,1087.5 397.9,1087.5 398.9,1087.1 399.9,1088.2 400.9,1088.0 401.9,1088.0 402.9,1087.3 403.9,1087.6 404.9,1087.0 405.9,1088.0 406.9,1088.1 407.9,1087.7 408.9,1087.7 409.9,1087.5 410.9,1087.9 411.9,1087.0 412.9,1087.3 413.9,1087.5 414.9,1087.0 415.9,1087.3 416.9,1087.3 417.9,1088.2 418.9,1087.3 419.9,1086.1 420.9,1087.0 421.9,1087.8 422.9,1087.9 423.9,1087.1 424.9,1087.8 425.9,1087.3 426.9,1087.3 427.9,1087.5 428.9,1087.3 429.9,1087.2 430.9,1087.1 431.9,1086.6 432.9,1087.0 433.9,1087.8 434.9,1087.5 435.9,1088.2 436.9,1087.9 437.9,1087.9 438.9,1087.9 439.9,1087.3 440.9,1087.2 441.9,1087.6 442.9,1087.6 443.9,1087.6 444.9,1087.7 445.9,1087.1 446.9,1086.9 447.9,1087.5 448.9,1087.4 449.9,1087.1 450.9,1088.1 451.9,1087.5 452.9,1086.7 453.9,1087.2 454.9,1087.5 455.9,1088.1 456.9,1087.2 457.9,1087.6 458.9,1085.8 459.9,1087.9 460.9,1088.0 461.9,1088.0 462.9,1087.7 463.9,1088.1 464.9,1087.3 465.9,1087.2 466.9,1086.8 467.9,1087.9 468.9,1087.0 469.9,1087.7 470.9,1087.6 471.9,1088.0 472.9,1087.4 473.9,1087.3 474.9,1087.9 475.9,1087.3 476.9,1087.9 477.9,1087.8 478.9,1087.6 479.9,1088.2 480.9,1087.3 481.9,1088.1 482.9,1087.8 483.9,1088.2 484.9,1087.4 485.9,1087.1 486.9,1087.4 487.9,1087.2 488.9,1087.6 489.9,1087.1 490.9,1088.2 491.9,1087.6 492.9,1088.1 493.9,1087.2 494.9,1087.2 495.9,1087.6 496.9,1087.3 497.9,1087.7 498.9,1087.1 499.9,1088.0 500.9,1087.6 501.9,1088.1 502.9,1087.6 503.9,1087.6 504.9,1087.5 505.9,1087.3 506.9,1087.5 507.9,1087.9 508.9,1087.3 509.9,1087.3 510.9,1087.7 511.9,1087.6 512.9,1088.0 513.9,1088.2 514.9,1087.0 515.9,1087.8 516.9,1087.5 517.9,1087.2 518.9,1087.0 519.9,1087.9 520.9,1087.9 521.9,1087.2 522.9,1088.0 523.9,1087.3 524.9,1088.2 525.9,1087.2 526.9,1087.9 527.9,1087.4 528.9,1087.3 529.9,1088.0 530.9,1087.8 531.9,1087.0 532.9,1088.1 533.9,1087.5 534.9,1088.0 535.9,1087.1 536.9,1087.6 537.9,1087.3 538.9,1087.0 539.9,1087.1 540.9,1087.3 541.9,1087.5 542.9,1087.1 543.9,1087.5 544.9,1087.7 545.9,1087.7 546.9,1087.9 547.9,1087.8 548.9,1087.0 549.9,1087.4 550.9,1087.8 551.9,1087.1 552.9,1087.7 553.9,1087.4 554.9,1088.2 555.9,1088.0 556.9,1087.4 557.9,1087.9 558.9,1087.8 558.9,1134.0 557.9,1134.4 556.9,1134.3 555.9,1134.4 554.9,1134.6 553.9,1133.7 552.9,1133.9 551.9,1134.1 550.9,1133.8 549.9,1134.0 548.9,1134.0 547.9,1134.1 546.9,1133.4 545.9,1134.5 544.9,1134.6 543.9,1134.2 542.9,1133.8 541.9,1133.5 540.9,1134.2 539.9,1133.6 538.9,1133.6 537.9,1133.7 536.9,1134.5 535.9,1134.1 534.9,1133.5 533.9,1133.5 532.9,1134.4 531.9,1133.5 530.9,1134.5 529.9,1134.2 528.9,1133.8 527.9,1133.7 526.9,1134.4 525.9,1134.6 524.9,1134.5 523.9,1134.0 522.9,1134.0 521.9,1133.7 520.9,1134.2 519.9,1134.5 518.9,1134.6 517.9,1133.6 516.9,1133.7 515.9,1134.4 514.9,1134.5 513.9,1133.8 512.9,1134.4 511.9,1133.7 510.9,1135.0 509.9,1134.6 508.9,1133.8 507.9,1133.5 506.9,1133.7 505.9,1134.5 504.9,1133.9 503.9,1134.0 502.9,1133.9 501.9,1134.3 500.9,1134.5 499.9,1133.8 498.9,1134.0 497.9,1133.6 496.9,1133.5 495.9,1134.2 494.9,1134.0 493.9,1134.3 492.9,1134.3 491.9,1133.9 490.9,1134.3 489.9,1134.5 488.9,1134.3 487.9,1133.7 486.9,1134.3 485.9,1134.1 484.9,1133.9 483.9,1135.1 482.9,1134.2 481.9,1134.5 480.9,1133.8 479.9,1133.7 478.9,1134.4 477.9,1134.2 476.9,1133.7 475.9,1133.6 474.9,1133.7 473.9,1134.0 472.9,1134.1 471.9,1134.5 470.9,1135.6 469.9,1133.6 468.9,1133.5 467.9,1133.9 466.9,1133.8 465.9,1133.5 464.9,1134.4 463.9,1133.5 462.9,1134.4 461.9,1133.4 460.9,1133.5 459.9,1133.5 458.9,1134.2 457.9,1134.1 456.9,1133.7 455.9,1133.8 454.9,1134.5 453.9,1134.1 452.9,1134.2 451.9,1133.5 450.9,1134.2 449.9,1133.7 448.9,1134.6 447.9,1134.4 446.9,1133.6 445.9,1133.5 444.9,1134.0 443.9,1133.4 442.9,1133.9 441.9,1133.7 440.9,1134.4 439.9,1133.9 438.9,1133.5 437.9,1133.9 436.9,1133.4 435.9,1134.1 434.9,1134.0 433.9,1133.6 432.9,1133.5 431.9,1134.5 430.9,1134.2 429.9,1133.9 428.9,1134.1 427.9,1134.4 426.9,1134.5 425.9,1133.9 424.9,1134.5 423.9,1133.7 422.9,1134.0 421.9,1134.3 420.9,1134.3 419.9,1135.6 418.9,1133.5 417.9,1134.4 416.9,1133.8 415.9,1134.1 414.9,1133.9 413.9,1134.1 412.9,1134.1 411.9,1133.4 410.9,1133.6 409.9,1133.5 408.9,1134.2 407.9,1133.6 406.9,1133.6 405.9,1133.8 404.9,1134.3 403.9,1134.2 402.9,1134.0 401.9,1134.2 400.9,1134.0 399.9,1133.5 398.9,1133.4 397.9,1134.0 396.9,1133.4 395.9,1134.5 394.9,1133.4 393.9,1133.8 392.9,1134.1 391.9,1134.0 390.9,1133.7 389.9,1134.1 388.9,1133.9 387.9,1133.8 386.9,1134.5 385.9,1133.5 384.9,1133.6 383.9,1133.5 382.9,1133.7 381.9,1134.3 380.9,1133.9 379.9,1133.6 378.9,1133.9 377.9,1133.5 376.9,1133.6 375.9,1133.8 374.9,1133.7 373.9,1133.9 372.9,1134.4 371.9,1134.4 370.9,1134.3 369.9,1133.8 368.9,1134.6 367.9,1134.1 366.9,1133.9 365.9,1134.4 364.9,1133.7 363.9,1134.0 362.9,1133.6 361.9,1133.5 360.9,1134.0 359.9,1134.1 358.9,1134.0 357.9,1134.0 356.9,1134.2 355.9,1133.7 354.9,1134.4 353.9,1134.2 352.9,1133.9 351.9,1134.0 350.9,1133.7 349.9,1134.1 348.9,1133.5 347.9,1134.4 346.9,1134.3 345.9,1133.7 344.9,1134.5 343.9,1133.7 342.9,1133.8 341.9,1134.6 340.9,1134.3 339.9,1134.0 338.9,1134.2 337.9,1133.7 336.9,1133.5 335.9,1133.5 334.9,1134.1 333.9,1133.5 332.9,1133.5 331.9,1135.4 330.9,1133.6 329.9,1133.9 328.9,1134.3 327.9,1134.5 326.9,1133.7 325.9,1133.9 324.9,1133.9 323.9,1133.8 322.9,1134.2 321.9,1134.4 320.9,1134.5 319.9,1133.9 318.9,1134.5 317.9,1134.0 316.9,1134.0 315.9,1134.0 314.9,1133.6 313.9,1134.1 312.9,1134.5 311.9,1134.4 310.9,1134.2 309.9,1133.7 308.9,1133.8 307.9,1133.8 306.9,1133.7 305.9,1133.8 304.9,1133.5 303.9,1133.8 302.9,1133.9 301.9,1134.2 300.9,1133.6 299.9,1134.3 298.9,1134.0 297.9,1134.5 296.9,1133.8 295.9,1134.5 294.9,1133.9 293.9,1134.3 292.9,1133.8 291.9,1134.5 290.9,1134.4 289.9,1134.4 288.9,1134.0 287.9,1135.9 286.9,1133.6 285.9,1134.4 284.9,1134.0 283.9,1133.8 282.9,1134.0 281.9,1133.9 280.9,1134.2 279.9,1133.5 278.9,1133.6 277.9,1134.0 276.9,1133.7 275.9,1134.0 274.9,1134.4 273.9,1135.4 272.9,1134.3 271.9,1133.4 270.9,1133.5 269.9,1133.9 268.9,1133.6 267.9,1134.4 266.9,1134.3 265.9,1133.5 264.9,1133.8 263.9,1134.0 262.9,1134.5 261.9,1134.2 260.9,1134.4 259.9,1133.8 258.9,1133.6 257.9,1133.6 256.9,1134.5 255.9,1133.7 254.9,1134.5 253.9,1133.9 252.9,1134.1 251.9,1133.7 250.9,1133.6 249.9,1133.5 248.9,1134.2 247.9,1133.5 246.9,1134.2 245.9,1134.0 244.9,1134.4 243.9,1134.4 242.9,1133.9 241.9,1134.1 240.9,1134.1 239.9,1134.6 238.9,1134.2 237.9,1133.9 236.9,1134.1 235.9,1133.9 234.9,1133.5 233.9,1134.2 232.9,1133.7 231.9,1133.9 230.9,1133.9 229.9,1134.6 228.9,1133.5 227.9,1134.6 226.9,1134.5 225.9,1133.7 224.9,1133.5 223.9,1133.4 222.9,1133.6 221.9,1134.1 220.9,1133.9 219.9,1134.4 218.9,1134.6 217.9,1133.9 216.9,1133.5 215.9,1133.8 214.9,1134.0 213.9,1134.0 212.9,1134.3 211.9,1134.3 210.9,1133.7 209.9,1134.2 208.9,1135.3 207.9,1134.5 206.9,1134.1 205.9,1133.6 204.9,1133.4 203.9,1134.5 202.9,1134.4 201.9,1134.0 200.9,1134.3 199.9,1133.5 198.9,1134.1 197.9,1134.2 196.9,1133.5 195.9,1133.6 194.9,1133.8 193.9,1133.7 192.9,1134.2 191.9,1135.1 190.9,1133.9 189.9,1134.3 188.9,1133.4 187.9,1133.6 186.9,1133.7 185.9,1134.2 184.9,1134.2 183.9,1133.5 182.9,1133.5 181.9,1133.6 180.9,1133.5 179.9,1134.4 178.9,1134.1 177.9,1134.1 176.9,1134.3 175.9,1133.6 174.9,1134.4 173.9,1133.9 172.9,1135.0 171.9,1133.8 170.9,1133.9 169.9,1133.5 168.9,1135.0 167.9,1133.5 166.9,1134.0 165.9,1134.1 164.9,1133.5 163.9,1133.4 162.9,1133.8 161.9,1134.8 160.9,1133.8 159.9,1134.2 158.9,1134.1 157.9,1135.0 156.9,1133.7 155.9,1133.9 154.9,1134.2 153.9,1134.1 152.9,1134.0 151.9,1134.2 150.9,1134.4 149.9,1133.5 148.9,1134.2 147.9,1133.9 146.9,1134.9 145.9,1134.1 144.9,1133.7 143.9,1134.2 142.9,1134.0 141.9,1133.6 140.9,1133.7 139.9,1133.7 138.9,1133.5 137.9,1134.4 136.9,1134.5 135.9,1134.3 134.9,1134.0 133.9,1133.5 132.9,1133.6 131.9,1133.5 130.9,1133.8 129.9,1133.8 128.9,1134.4 127.9,1133.9 126.9,1134.0 125.9,1134.2 124.9,1133.6 123.9,1134.4 122.9,1134.6 121.9,1134.5 120.9,1134.4 119.9,1134.4 118.9,1134.1 117.9,1134.4 116.9,1134.3 115.9,1134.3 114.9,1133.7 113.9,1133.5 112.9,1134.3 111.9,1134.3 110.9,1134.2 109.9,1133.6 108.9,1133.6 107.9,1134.1 106.9,1133.7 105.9,1133.4 104.9,1133.7 103.9,1134.4 102.9,1134.1 101.9,1134.3 100.9,1133.7 99.9,1134.7 98.9,1133.8 97.9,1134.0 96.9,1134.1 95.9,1133.4 94.9,1134.2 93.9,1134.3 92.9,1134.5 91.9,1133.8 90.9,1134.3 89.9,1133.9 88.9,1133.5 87.9,1134.1 86.9,1133.4 85.9,1134.1 84.9,1134.3 83.9,1134.0 82.9,1134.1 81.9,1133.6 80.9,1134.2 79.9,1133.7 78.9,1134.2 77.9,1134.9 76.9,1134.0 75.9,1134.5 74.9,1135.2 73.9,1134.1 72.9,1133.6 71.9,1133.7 70.9,1133.5 69.9,1134.1 68.9,1134.1 67.9,1134.6 66.9,1133.5 65.9,1133.7 64.9,1134.0 63.9,1134.0 62.9,1134.4 61.9,1134.2 60.9,1134.2 59.9,1134.4 58.9,1134.2 57.9,1134.2 56.9,1133.7 55.9,1133.7 54.9,1133.9 53.9,1134.5 52.9,1133.9 51.9,1134.5 50.9,1134.1 49.9,1134.2 48.9,1134.1 47.9,1133.6 46.9,1133.7 45.9,1134.3 44.9,1135.9 43.9,1133.7 42.9,1134.4 41.9,1134.3 40.9,1134.0 39.9,1135.2 38.9,1133.9 37.9,1133.7 36.9,1134.0 35.9,1133.8 34.9,1134.0 33.9,1133.8 32.9,1133.9 31.9,1133.4 30.9,1134.6 29.9,1135.9 28.9,1133.6 27.9,1134.5 26.9,1134.4 25.9,1134.6 24.9,1134.5 23.9,1133.9 22.9,1134.3 21.9,1134.0 20.9,1134.1 19.9,1133.9 18.9,1134.3 17.9,1134.9 16.9,1133.9 15.9,1133.7 14.9,1133.4 13.9,1134.1 12.9,1134.0 11.9,1133.6 10.9,1134.0 9.9,1135.0 8.9,1134.1 7.9,1134.1 6.9,1133.5 5.9,1133.7 4.9,1135.6 3.9,1134.3"/><polygon points="558.5,1088 559.7,1086 561.1,1050 562.7,1012 564.1,997 566.0,995.5 569.3,994.5 569.9,1000 570.5,1100 571.0,1213 569.7,1215 569.1,1100 568.7,1048 566.5,1048.5 564.9,1052 562.9,1075 561.1,1108 560.1,1130 558.5,1134"/><polygon points="570.8,1195.7 571.8,1195.1 572.8,1195.0 573.8,1194.6 574.8,1194.7 575.8,1193.6 576.8,1193.3 577.8,1194.3 578.8,1194.4 579.8,1194.2 580.8,1194.0 581.8,1192.7 582.8,1193.9 583.8,1193.7 584.8,1193.9 585.8,1193.7 586.8,1194.2 587.8,1193.7 588.8,1194.1 589.8,1193.8 590.8,1193.8 591.8,1194.2 592.8,1194.1 593.8,1193.7 594.8,1193.9 595.8,1193.8 596.8,1193.7 597.8,1194.2 598.8,1194.2 599.8,1193.9 600.8,1193.7 601.8,1193.8 602.8,1193.9 603.8,1193.7 604.8,1194.1 605.8,1193.7 606.8,1193.8 607.8,1193.7 608.8,1194.1 609.8,1193.6 610.8,1194.1 611.8,1194.1 612.8,1193.8 613.8,1193.8 614.8,1194.1 615.8,1194.2 616.8,1194.0 617.8,1193.7 618.8,1193.8 619.8,1193.7 620.8,1194.0 621.8,1193.9 622.8,1193.8 623.8,1193.8 624.8,1193.9 625.8,1194.0 626.8,1193.8 627.8,1194.1 628.8,1193.9 629.8,1193.9 630.8,1193.7 631.8,1193.8 632.8,1193.7 633.8,1194.0 634.8,1193.7 635.8,1193.8 636.8,1194.2 637.8,1193.9 638.8,1193.8 639.8,1193.8 640.8,1194.2 641.8,1194.0 642.8,1194.2 643.8,1194.0 644.8,1193.9 645.8,1193.9 646.8,1193.6 647.8,1194.0 648.8,1193.9 649.8,1194.1 650.8,1194.1 651.8,1194.1 652.8,1193.8 653.8,1193.8 654.8,1194.1 655.8,1193.6 656.8,1193.9 657.8,1194.0 658.8,1194.1 659.8,1193.7 660.8,1193.6 661.8,1193.8 662.8,1193.8 663.8,1193.7 664.8,1194.2 665.8,1192.4 666.8,1193.9 667.8,1193.7 668.8,1193.6 669.8,1193.6 670.8,1194.1 671.8,1192.8 672.8,1194.0 673.8,1193.9 674.8,1193.8 675.8,1193.9 676.8,1193.8 677.8,1193.7 678.8,1194.0 679.8,1193.9 680.8,1193.7 681.8,1193.9 682.8,1192.4 683.8,1193.7 684.8,1193.9 685.8,1193.9 686.8,1194.0 687.8,1194.1 688.8,1193.8 689.8,1194.0 690.8,1193.7 691.8,1193.7 692.8,1194.0 693.8,1194.2 694.8,1193.9 695.8,1194.1 696.8,1194.2 697.8,1193.6 698.8,1192.9 699.8,1194.2 700.8,1193.9 701.8,1194.1 702.8,1194.0 703.8,1193.9 704.8,1194.1 705.8,1194.1 706.8,1193.7 707.8,1193.7 708.8,1193.7 709.8,1194.0 710.8,1193.8 711.8,1194.2 712.8,1193.6 713.8,1194.1 714.8,1193.8 715.8,1193.8 716.8,1193.8 717.8,1194.0 718.8,1193.6 719.8,1193.8 720.8,1193.6 721.8,1193.8 722.8,1194.0 723.8,1193.8 724.8,1193.6 725.8,1194.1 726.8,1194.0 727.8,1193.8 728.8,1194.0 729.8,1193.7 730.8,1194.0 731.8,1193.7 732.8,1193.7 733.8,1194.1 734.8,1193.7 735.8,1193.9 736.8,1193.7 737.8,1193.9 738.8,1193.8 739.8,1194.0 740.8,1193.7 741.8,1194.0 742.8,1194.2 743.8,1194.2 744.8,1193.8 745.8,1194.1 746.8,1194.1 747.8,1193.8 748.8,1194.1 749.8,1193.7 750.8,1192.5 751.8,1194.0 752.8,1194.0 753.8,1193.9 754.8,1194.0 755.8,1193.7 756.8,1193.6 757.8,1193.7 758.8,1194.1 759.8,1193.1 760.8,1193.7 761.8,1194.0 762.8,1194.0 763.8,1194.2 764.8,1193.9 765.8,1194.0 766.8,1194.2 767.8,1194.2 768.8,1193.6 769.8,1193.9 770.8,1193.8 771.8,1193.7 772.8,1193.7 773.8,1193.9 774.8,1193.8 775.8,1193.7 776.8,1193.7 777.8,1193.7 778.8,1194.0 779.8,1193.8 780.8,1193.4 781.8,1193.2 782.8,1194.0 783.8,1194.1 784.8,1193.0 785.8,1193.8 786.8,1192.2 787.8,1193.8 788.8,1193.8 789.8,1193.9 790.8,1194.1 791.8,1194.1 792.8,1193.6 793.8,1193.7 794.8,1193.6 795.8,1193.9 796.8,1194.2 797.8,1194.2 798.8,1192.9 799.8,1193.6 800.8,1194.1 801.8,1194.2 802.8,1193.9 803.8,1194.0 804.8,1194.0 805.8,1193.8 806.8,1193.8 807.8,1193.9 808.8,1193.8 809.8,1193.8 810.8,1193.8 811.8,1194.1 812.8,1194.2 813.8,1193.9 814.8,1194.0 815.8,1193.2 816.8,1194.2 817.8,1194.2 818.8,1194.0 819.8,1194.0 820.8,1194.1 821.8,1194.1 822.8,1194.1 823.8,1194.2 824.8,1193.8 825.8,1194.2 826.8,1192.4 827.8,1194.2 828.8,1194.0 829.8,1193.8 830.8,1194.1 831.8,1193.8 832.8,1193.9 833.8,1193.7 834.8,1193.6 835.8,1193.8 836.8,1194.0 837.8,1193.8 838.8,1194.2 839.8,1193.9 840.8,1193.9 841.8,1193.8 842.8,1194.0 843.8,1193.7 844.8,1193.9 845.8,1193.7 846.8,1193.7 847.8,1194.0 848.8,1194.1 849.8,1194.1 850.8,1194.1 851.8,1193.6 852.8,1193.8 853.8,1194.2 854.8,1193.9 855.8,1193.9 856.8,1194.0 857.8,1194.2 858.8,1194.2 859.8,1194.2 860.8,1193.9 861.8,1193.8 862.8,1194.1 863.8,1193.4 864.8,1194.0 865.8,1193.6 866.8,1194.1 867.8,1194.1 868.8,1193.9 869.8,1193.6 870.8,1193.7 871.8,1194.0 872.8,1193.9 873.8,1193.7 874.8,1193.8 875.8,1194.0 876.8,1193.9 877.8,1193.8 878.8,1194.1 879.8,1193.7 880.8,1193.7 881.8,1194.1 882.8,1193.9 883.8,1193.9 884.8,1193.9 885.8,1194.2 886.8,1193.7 887.8,1194.0 888.8,1194.0 889.8,1193.8 890.8,1193.8 891.8,1193.9 892.8,1193.8 893.8,1194.2 894.8,1194.0 895.8,1193.8 896.8,1193.9 897.8,1193.9 898.8,1193.7 899.8,1193.9 900.8,1193.7 901.8,1193.9 902.8,1193.7 903.8,1194.2 904.8,1194.0 905.8,1193.2 906.8,1194.2 907.8,1193.3 908.8,1193.9 909.8,1194.2 910.8,1193.6 911.8,1194.2 912.8,1194.2 913.8,1193.8 914.8,1193.8 915.8,1193.7 916.8,1194.0 917.8,1193.8 918.8,1193.9 919.8,1194.0 920.8,1193.9 921.8,1194.2 922.8,1194.1 923.8,1194.0 924.8,1194.0 925.8,1193.6 926.8,1193.7 927.8,1193.7 928.8,1193.7 929.8,1194.1 930.8,1193.8 931.8,1193.9 932.8,1194.0 933.8,1193.8 934.8,1193.9 935.8,1194.0 936.8,1194.1 937.8,1194.0 938.8,1194.0 939.8,1194.0 940.8,1193.9 941.8,1193.8 942.8,1194.1 943.8,1193.9 944.8,1194.0 945.8,1194.0 946.8,1194.1 947.8,1193.9 948.8,1193.7 949.8,1194.0 950.8,1194.0 951.8,1194.0 952.8,1194.0 953.8,1193.8 954.8,1193.7 955.8,1193.9 956.8,1193.9 957.8,1193.6 958.8,1193.6 959.8,1193.6 960.8,1194.1 961.8,1193.9 962.8,1192.3 963.8,1194.1 964.8,1194.0 965.8,1193.8 966.8,1193.7 967.8,1193.8 968.8,1194.1 969.8,1193.6 971.4,1193.7 971.4,1200.7 969.8,1200.7 968.8,1200.7 967.8,1200.4 966.8,1200.7 965.8,1200.5 964.8,1200.7 963.8,1200.6 962.8,1200.3 961.8,1200.6 960.8,1200.7 959.8,1200.5 958.8,1200.2 957.8,1200.4 956.8,1200.5 955.8,1200.5 954.8,1200.3 953.8,1200.5 952.8,1201.8 951.8,1200.6 950.8,1200.3 949.8,1200.6 948.8,1200.3 947.8,1200.4 946.8,1202.0 945.8,1200.3 944.8,1200.2 943.8,1200.7 942.8,1200.6 941.8,1200.8 940.8,1200.8 939.8,1200.3 938.8,1200.5 937.8,1200.8 936.8,1200.8 935.8,1200.4 934.8,1200.4 933.8,1200.6 932.8,1200.7 931.8,1200.6 930.8,1200.8 929.8,1200.2 928.8,1200.4 927.8,1200.3 926.8,1202.2 925.8,1200.3 924.8,1200.4 923.8,1200.4 922.8,1200.2 921.8,1200.5 920.8,1200.7 919.8,1200.3 918.8,1200.7 917.8,1200.3 916.8,1200.6 915.8,1200.8 914.8,1200.4 913.8,1200.6 912.8,1200.3 911.8,1200.6 910.8,1200.5 909.8,1200.4 908.8,1200.6 907.8,1200.5 906.8,1200.5 905.8,1201.4 904.8,1202.2 903.8,1200.6 902.8,1200.4 901.8,1200.4 900.8,1200.2 899.8,1200.5 898.8,1200.5 897.8,1200.2 896.8,1200.4 895.8,1200.4 894.8,1200.2 893.8,1200.5 892.8,1200.3 891.8,1200.6 890.8,1200.8 889.8,1200.7 888.8,1200.5 887.8,1200.5 886.8,1200.3 885.8,1200.8 884.8,1200.3 883.8,1200.3 882.8,1200.5 881.8,1200.6 880.8,1200.7 879.8,1200.4 878.8,1200.3 877.8,1200.7 876.8,1200.3 875.8,1200.3 874.8,1200.6 873.8,1200.6 872.8,1200.7 871.8,1200.3 870.8,1200.7 869.8,1200.8 868.8,1200.7 867.8,1200.5 866.8,1200.3 865.8,1201.2 864.8,1200.3 863.8,1201.2 862.8,1200.4 861.8,1200.3 860.8,1200.7 859.8,1200.7 858.8,1200.4 857.8,1200.5 856.8,1200.2 855.8,1200.8 854.8,1200.8 853.8,1200.2 852.8,1200.6 851.8,1200.4 850.8,1200.6 849.8,1200.7 848.8,1200.5 847.8,1200.2 846.8,1200.8 845.8,1200.3 844.8,1200.3 843.8,1200.4 842.8,1200.7 841.8,1200.6 840.8,1200.4 839.8,1200.4 838.8,1200.2 837.8,1200.6 836.8,1200.3 835.8,1200.7 834.8,1201.8 833.8,1200.7 832.8,1200.7 831.8,1200.2 830.8,1200.4 829.8,1200.6 828.8,1200.2 827.8,1200.2 826.8,1201.4 825.8,1200.3 824.8,1200.6 823.8,1200.7 822.8,1200.7 821.8,1200.3 820.8,1200.6 819.8,1200.4 818.8,1200.6 817.8,1200.5 816.8,1200.7 815.8,1200.4 814.8,1200.4 813.8,1200.4 812.8,1200.3 811.8,1200.8 810.8,1200.5 809.8,1200.6 808.8,1200.6 807.8,1201.2 806.8,1200.5 805.8,1200.5 804.8,1200.8 803.8,1200.8 802.8,1200.5 801.8,1200.7 800.8,1200.5 799.8,1200.7 798.8,1200.6 797.8,1200.8 796.8,1200.3 795.8,1200.3 794.8,1200.4 793.8,1200.6 792.8,1201.4 791.8,1200.3 790.8,1200.4 789.8,1200.7 788.8,1200.4 787.8,1200.2 786.8,1200.8 785.8,1200.2 784.8,1200.3 783.8,1200.3 782.8,1200.2 781.8,1200.4 780.8,1200.4 779.8,1200.6 778.8,1200.7 777.8,1200.3 776.8,1200.5 775.8,1200.5 774.8,1200.4 773.8,1200.2 772.8,1200.3 771.8,1200.7 770.8,1200.4 769.8,1200.3 768.8,1200.7 767.8,1200.3 766.8,1200.6 765.8,1200.4 764.8,1200.5 763.8,1200.5 762.8,1200.8 761.8,1200.6 760.8,1200.7 759.8,1201.6 758.8,1200.5 757.8,1202.1 756.8,1200.7 755.8,1200.6 754.8,1200.8 753.8,1200.5 752.8,1200.5 751.8,1200.6 750.8,1200.4 749.8,1200.8 748.8,1200.7 747.8,1200.4 746.8,1200.5 745.8,1200.7 744.8,1200.5 743.8,1200.4 742.8,1200.7 741.8,1200.5 740.8,1200.6 739.8,1200.6 738.8,1200.4 737.8,1200.3 736.8,1200.5 735.8,1200.6 734.8,1200.6 733.8,1200.4 732.8,1200.4 731.8,1200.5 730.8,1200.3 729.8,1200.7 728.8,1200.7 727.8,1200.7 726.8,1200.4 725.8,1200.5 724.8,1201.3 723.8,1200.2 722.8,1200.8 721.8,1200.6 720.8,1200.6 719.8,1200.4 718.8,1200.5 717.8,1201.8 716.8,1201.6 715.8,1200.2 714.8,1200.4 713.8,1200.2 712.8,1200.5 711.8,1200.5 710.8,1200.6 709.8,1200.7 708.8,1200.2 707.8,1200.4 706.8,1200.2 705.8,1200.7 704.8,1200.6 703.8,1200.6 702.8,1200.5 701.8,1200.7 700.8,1200.6 699.8,1200.7 698.8,1200.3 697.8,1200.3 696.8,1202.1 695.8,1200.7 694.8,1200.3 693.8,1200.4 692.8,1200.7 691.8,1200.6 690.8,1200.4 689.8,1200.2 688.8,1200.6 687.8,1200.7 686.8,1200.5 685.8,1200.7 684.8,1200.4 683.8,1200.5 682.8,1200.4 681.8,1200.7 680.8,1200.8 679.8,1200.7 678.8,1200.5 677.8,1200.2 676.8,1200.3 675.8,1200.4 674.8,1200.3 673.8,1200.7 672.8,1200.7 671.8,1200.5 670.8,1200.2 669.8,1200.4 668.8,1200.5 667.8,1200.6 666.8,1200.2 665.8,1200.5 664.8,1200.5 663.8,1200.8 662.8,1200.7 661.8,1200.5 660.8,1200.6 659.8,1200.3 658.8,1200.6 657.8,1200.7 656.8,1200.3 655.8,1202.4 654.8,1200.2 653.8,1200.7 652.8,1200.6 651.8,1200.5 650.8,1200.8 649.8,1200.5 648.8,1200.5 647.8,1200.5 646.8,1200.3 645.8,1200.5 644.8,1200.5 643.8,1200.4 642.8,1200.6 641.8,1200.5 640.8,1200.3 639.8,1201.3 638.8,1200.7 637.8,1200.6 636.8,1200.3 635.8,1200.3 634.8,1200.8 633.8,1200.3 632.8,1200.4 631.8,1200.7 630.8,1200.7 629.8,1200.3 628.8,1200.3 627.8,1200.3 626.8,1200.7 625.8,1200.6 624.8,1200.3 623.8,1200.7 622.8,1200.7 621.8,1200.7 620.8,1200.2 619.8,1200.7 618.8,1200.4 617.8,1200.4 616.8,1200.7 615.8,1200.7 614.8,1200.6 613.8,1201.3 612.8,1200.7 611.8,1200.4 610.8,1200.5 609.8,1200.3 608.8,1200.7 607.8,1200.8 606.8,1200.3 605.8,1200.8 604.8,1200.7 603.8,1200.3 602.8,1200.8 601.8,1200.2 600.8,1200.6 599.8,1200.2 598.8,1200.3 597.8,1200.7 596.8,1200.5 595.8,1200.5 594.8,1200.7 593.8,1200.2 592.8,1200.2 591.8,1200.2 590.8,1200.8 589.8,1200.8 588.8,1200.6 587.8,1200.7 586.8,1200.4 585.8,1202.0 584.8,1200.5 583.8,1200.5 582.8,1200.5 581.8,1200.3 580.8,1200.6 579.8,1200.5 578.8,1200.5 577.8,1200.8 576.8,1201.2 575.8,1203.0 574.8,1201.0 573.8,1201.1 572.8,1201.5 571.8,1201.8 570.8,1202.5"/><polygon points="1002.2,1195.6 1003.2,1195.1 1004.2,1194.7 1005.2,1194.8 1006.2,1194.6 1007.2,1194.6 1008.2,1194.3 1009.2,1194.4 1010.2,1194.4 1011.2,1194.0 1012.2,1193.9 1013.2,1193.9 1014.2,1193.9 1015.2,1193.0 1016.2,1193.7 1017.2,1193.9 1018.2,1194.1 1019.2,1193.9 1020.2,1193.8 1021.2,1193.8 1022.2,1193.9 1023.2,1194.0 1024.2,1193.6 1025.2,1193.9 1026.2,1194.1 1027.2,1193.7 1028.2,1193.7 1029.2,1193.7 1030.2,1194.0 1031.2,1193.7 1032.2,1194.2 1033.2,1194.0 1034.2,1194.1 1035.2,1194.1 1036.2,1194.1 1037.2,1194.2 1038.2,1194.1 1039.2,1193.7 1040.2,1193.7 1041.2,1193.7 1042.2,1193.6 1043.2,1194.2 1044.2,1194.1 1045.2,1194.0 1046.2,1193.8 1047.2,1193.1 1048.2,1193.9 1049.2,1194.2 1050.2,1193.8 1051.2,1193.7 1052.2,1194.0 1053.2,1193.8 1054.2,1194.0 1055.2,1194.1 1056.2,1193.8 1057.2,1193.6 1058.2,1193.7 1059.2,1194.1 1060.2,1194.1 1061.2,1193.8 1062.2,1194.1 1063.2,1193.8 1064.2,1193.9 1065.2,1193.8 1066.2,1193.7 1067.2,1193.9 1068.2,1194.2 1069.2,1193.6 1070.2,1194.0 1071.2,1194.0 1072.2,1193.7 1073.2,1193.9 1074.2,1194.1 1075.2,1193.8 1076.2,1193.7 1077.2,1194.0 1078.2,1193.9 1079.2,1193.8 1080.2,1193.9 1081.2,1194.2 1082.2,1193.9 1083.2,1194.0 1084.2,1193.6 1085.2,1194.1 1086.2,1193.8 1087.2,1193.7 1088.2,1193.9 1089.2,1194.2 1090.2,1193.7 1091.2,1194.2 1092.2,1194.1 1093.2,1193.7 1094.2,1194.1 1095.2,1194.2 1096.2,1194.0 1097.2,1194.2 1098.2,1193.8 1099.2,1193.8 1100.2,1194.0 1101.2,1193.6 1102.2,1193.9 1103.2,1193.6 1104.2,1193.7 1105.2,1193.7 1106.2,1193.7 1107.2,1194.0 1108.2,1194.2 1109.2,1192.7 1110.2,1193.8 1111.2,1192.8 1112.2,1193.1 1113.2,1194.1 1114.2,1194.0 1115.2,1193.7 1116.2,1194.0 1117.2,1193.9 1118.2,1194.0 1119.2,1194.1 1120.2,1194.1 1121.2,1193.5 1122.2,1194.1 1123.2,1193.9 1124.2,1194.2 1125.2,1193.9 1126.2,1193.9 1127.2,1192.6 1128.2,1194.1 1129.2,1194.1 1130.2,1193.7 1131.2,1193.1 1132.2,1193.7 1133.2,1194.1 1134.2,1194.1 1135.2,1194.0 1136.2,1194.1 1137.2,1193.8 1138.2,1193.9 1139.2,1193.7 1140.2,1193.8 1141.2,1193.9 1142.2,1193.8 1143.2,1194.0 1144.2,1194.1 1145.2,1193.4 1146.2,1193.6 1147.2,1193.8 1148.2,1193.8 1149.2,1193.8 1150.2,1193.7 1151.2,1193.6 1152.2,1194.2 1153.2,1194.1 1154.2,1193.7 1155.2,1193.7 1156.2,1194.1 1157.2,1193.9 1158.2,1193.8 1159.2,1194.0 1160.2,1194.2 1161.2,1193.9 1162.2,1193.7 1163.2,1194.0 1164.2,1194.1 1165.2,1193.6 1166.2,1193.7 1167.2,1194.1 1168.2,1193.7 1169.2,1193.8 1170.2,1193.6 1171.2,1193.6 1172.2,1194.0 1173.2,1194.1 1174.2,1193.8 1175.2,1193.6 1176.2,1194.0 1177.2,1193.9 1178.2,1194.2 1179.2,1194.2 1180.2,1193.8 1181.2,1194.0 1182.2,1193.6 1183.2,1194.1 1184.2,1193.9 1185.2,1193.8 1186.2,1194.0 1187.2,1194.0 1188.2,1193.8 1189.2,1193.6 1190.2,1193.8 1191.2,1193.9 1192.2,1194.0 1193.2,1193.7 1194.2,1194.2 1195.2,1193.6 1196.2,1194.2 1197.2,1193.8 1198.2,1194.0 1199.2,1193.9 1200.2,1194.0 1201.2,1194.1 1202.2,1194.0 1203.2,1194.0 1204.2,1193.8 1205.2,1193.7 1206.2,1193.9 1207.2,1193.9 1208.2,1193.9 1209.2,1193.8 1210.2,1193.7 1211.2,1194.2 1212.2,1194.1 1213.2,1193.6 1214.2,1194.1 1215.2,1193.9 1216.2,1194.1 1217.2,1194.2 1218.2,1193.7 1219.2,1194.2 1220.2,1193.9 1221.2,1193.7 1222.2,1193.8 1223.2,1193.7 1224.2,1193.8 1225.2,1194.2 1226.2,1192.9 1227.2,1194.0 1228.2,1193.9 1229.2,1194.1 1230.2,1194.2 1231.2,1193.9 1232.2,1193.9 1233.2,1193.9 1234.2,1193.6 1235.2,1193.8 1236.2,1193.9 1237.2,1193.8 1238.2,1193.8 1239.2,1194.2 1240.2,1194.1 1241.2,1194.0 1242.2,1193.7 1243.2,1193.7 1244.2,1194.2 1245.2,1193.7 1246.2,1193.7 1247.2,1193.6 1248.2,1194.1 1249.2,1194.1 1250.2,1193.9 1251.2,1193.7 1252.2,1194.2 1253.2,1193.6 1254.2,1193.9 1255.2,1194.1 1256.2,1193.6 1257.2,1193.8 1258.2,1193.9 1259.2,1194.0 1260.2,1194.1 1261.2,1194.1 1262.2,1193.7 1263.2,1193.9 1264.2,1194.0 1265.2,1194.1 1266.2,1193.6 1267.2,1194.1 1268.2,1194.1 1269.2,1194.1 1270.2,1193.6 1271.2,1194.0 1272.2,1194.1 1273.2,1194.0 1274.2,1193.7 1275.2,1194.0 1276.2,1193.7 1277.2,1193.8 1278.2,1193.8 1279.2,1194.0 1280.2,1194.1 1281.2,1194.1 1282.2,1194.0 1283.2,1193.7 1284.2,1194.0 1285.2,1194.1 1286.2,1193.8 1287.2,1193.8 1288.2,1193.9 1289.2,1193.9 1290.2,1194.2 1291.2,1193.8 1292.2,1194.0 1293.2,1193.8 1294.2,1194.0 1295.2,1193.7 1296.2,1194.1 1297.2,1193.6 1298.2,1193.7 1299.2,1193.8 1300.2,1194.0 1301.2,1193.0 1302.2,1194.2 1303.2,1194.1 1304.2,1193.8 1305.2,1193.7 1306.2,1193.8 1307.2,1194.0 1308.2,1194.0 1309.2,1193.8 1310.2,1194.1 1311.2,1193.8 1312.2,1194.2 1313.2,1194.0 1314.2,1192.2 1315.2,1193.9 1316.2,1193.7 1317.2,1193.7 1318.2,1193.7 1319.2,1194.0 1320.2,1193.8 1321.2,1194.2 1322.2,1193.8 1323.2,1193.6 1324.2,1193.7 1325.2,1193.8 1326.2,1194.0 1327.2,1193.7 1328.2,1194.0 1329.2,1193.9 1330.2,1194.0 1331.2,1193.8 1332.2,1194.0 1333.2,1193.9 1334.2,1194.0 1335.2,1193.9 1336.2,1193.7 1337.2,1193.7 1338.2,1193.7 1339.2,1194.0 1340.2,1193.6 1341.2,1193.6 1342.2,1194.1 1343.2,1193.8 1344.2,1193.8 1345.2,1194.0 1346.2,1193.8 1347.2,1194.0 1348.2,1194.1 1349.2,1193.8 1350.2,1193.8 1351.2,1194.1 1352.2,1194.1 1353.2,1193.7 1354.2,1193.8 1355.2,1193.8 1356.2,1193.6 1357.2,1194.1 1358.2,1194.0 1359.2,1194.0 1360.2,1194.0 1361.2,1194.1 1362.2,1193.8 1363.2,1194.1 1364.2,1193.9 1365.2,1193.9 1366.2,1193.7 1367.2,1193.7 1368.2,1194.1 1369.2,1193.7 1370.2,1193.8 1371.2,1193.7 1372.2,1193.6 1373.2,1194.1 1374.2,1193.7 1375.2,1194.0 1376.2,1194.1 1377.2,1194.1 1378.2,1194.1 1379.2,1193.8 1380.2,1193.8 1381.2,1193.8 1382.2,1193.8 1383.2,1194.0 1384.2,1193.9 1385.2,1193.7 1386.2,1193.8 1387.2,1193.8 1388.2,1193.7 1389.2,1193.9 1390.2,1194.2 1391.2,1193.2 1392.2,1193.9 1393.2,1193.7 1394.2,1193.8 1395.2,1193.9 1396.2,1194.2 1397.2,1194.1 1398.2,1194.2 1399.2,1194.2 1400.2,1193.8 1401.2,1194.0 1402.4,1193.6 1402.4,1200.5 1401.2,1200.2 1400.2,1200.7 1399.2,1200.7 1398.2,1200.5 1397.2,1200.5 1396.2,1200.5 1395.2,1200.6 1394.2,1200.5 1393.2,1200.8 1392.2,1200.7 1391.2,1201.4 1390.2,1200.4 1389.2,1200.4 1388.2,1200.9 1387.2,1200.5 1386.2,1200.7 1385.2,1200.6 1384.2,1200.6 1383.2,1200.2 1382.2,1200.2 1381.2,1200.4 1380.2,1200.8 1379.2,1200.3 1378.2,1200.8 1377.2,1200.6 1376.2,1200.4 1375.2,1201.5 1374.2,1200.8 1373.2,1201.3 1372.2,1200.6 1371.2,1200.4 1370.2,1200.3 1369.2,1200.6 1368.2,1200.6 1367.2,1200.5 1366.2,1200.4 1365.2,1200.6 1364.2,1201.7 1363.2,1200.8 1362.2,1200.6 1361.2,1200.7 1360.2,1200.6 1359.2,1200.6 1358.2,1200.5 1357.2,1200.2 1356.2,1200.7 1355.2,1200.6 1354.2,1200.6 1353.2,1202.0 1352.2,1200.2 1351.2,1200.5 1350.2,1200.4 1349.2,1200.7 1348.2,1200.7 1347.2,1200.3 1346.2,1200.6 1345.2,1200.8 1344.2,1200.8 1343.2,1200.2 1342.2,1200.5 1341.2,1200.6 1340.2,1200.8 1339.2,1200.2 1338.2,1200.7 1337.2,1201.9 1336.2,1200.3 1335.2,1200.2 1334.2,1200.6 1333.2,1200.5 1332.2,1200.3 1331.2,1200.6 1330.2,1200.3 1329.2,1200.5 1328.2,1200.8 1327.2,1200.5 1326.2,1200.4 1325.2,1200.3 1324.2,1200.4 1323.2,1200.6 1322.2,1200.6 1321.2,1200.7 1320.2,1200.3 1319.2,1200.5 1318.2,1200.7 1317.2,1200.5 1316.2,1200.7 1315.2,1200.3 1314.2,1200.5 1313.2,1200.3 1312.2,1200.5 1311.2,1200.5 1310.2,1200.8 1309.2,1200.3 1308.2,1200.3 1307.2,1200.2 1306.2,1200.8 1305.2,1200.7 1304.2,1200.5 1303.2,1200.5 1302.2,1200.7 1301.2,1200.5 1300.2,1200.4 1299.2,1200.7 1298.2,1202.1 1297.2,1200.2 1296.2,1200.6 1295.2,1200.4 1294.2,1200.2 1293.2,1200.4 1292.2,1200.4 1291.2,1201.2 1290.2,1200.2 1289.2,1200.4 1288.2,1200.2 1287.2,1200.8 1286.2,1200.3 1285.2,1200.6 1284.2,1200.5 1283.2,1200.5 1282.2,1200.3 1281.2,1200.5 1280.2,1200.4 1279.2,1200.2 1278.2,1200.7 1277.2,1200.6 1276.2,1200.7 1275.2,1200.8 1274.2,1200.2 1273.2,1200.2 1272.2,1200.5 1271.2,1200.3 1270.2,1200.6 1269.2,1200.3 1268.2,1200.6 1267.2,1200.7 1266.2,1200.3 1265.2,1200.7 1264.2,1200.3 1263.2,1200.7 1262.2,1200.2 1261.2,1200.6 1260.2,1200.3 1259.2,1200.3 1258.2,1200.7 1257.2,1200.5 1256.2,1200.3 1255.2,1200.3 1254.2,1200.6 1253.2,1200.3 1252.2,1200.5 1251.2,1200.8 1250.2,1200.4 1249.2,1200.4 1248.2,1200.8 1247.2,1200.4 1246.2,1200.8 1245.2,1200.5 1244.2,1200.4 1243.2,1200.4 1242.2,1201.7 1241.2,1200.5 1240.2,1200.7 1239.2,1200.5 1238.2,1200.4 1237.2,1200.6 1236.2,1202.0 1235.2,1200.4 1234.2,1200.4 1233.2,1200.5 1232.2,1200.2 1231.2,1200.6 1230.2,1200.2 1229.2,1200.3 1228.2,1200.3 1227.2,1200.3 1226.2,1200.4 1225.2,1200.7 1224.2,1200.5 1223.2,1200.8 1222.2,1200.6 1221.2,1200.5 1220.2,1200.3 1219.2,1201.5 1218.2,1200.3 1217.2,1200.6 1216.2,1200.3 1215.2,1200.2 1214.2,1200.5 1213.2,1200.5 1212.2,1200.7 1211.2,1200.3 1210.2,1200.2 1209.2,1200.6 1208.2,1200.2 1207.2,1201.7 1206.2,1200.6 1205.2,1200.8 1204.2,1200.6 1203.2,1200.4 1202.2,1200.2 1201.2,1200.3 1200.2,1200.3 1199.2,1200.7 1198.2,1201.5 1197.2,1200.8 1196.2,1201.8 1195.2,1200.3 1194.2,1200.4 1193.2,1200.5 1192.2,1200.3 1191.2,1200.6 1190.2,1202.3 1189.2,1200.3 1188.2,1200.7 1187.2,1200.2 1186.2,1200.5 1185.2,1200.5 1184.2,1200.2 1183.2,1200.6 1182.2,1200.4 1181.2,1200.8 1180.2,1200.6 1179.2,1201.8 1178.2,1200.8 1177.2,1200.3 1176.2,1200.8 1175.2,1200.6 1174.2,1200.4 1173.2,1200.2 1172.2,1200.2 1171.2,1200.8 1170.2,1200.4 1169.2,1200.3 1168.2,1200.6 1167.2,1201.5 1166.2,1200.8 1165.2,1200.4 1164.2,1200.5 1163.2,1200.3 1162.2,1200.2 1161.2,1200.7 1160.2,1200.6 1159.2,1200.6 1158.2,1200.7 1157.2,1200.4 1156.2,1200.5 1155.2,1200.4 1154.2,1200.6 1153.2,1200.8 1152.2,1200.5 1151.2,1200.3 1150.2,1200.8 1149.2,1200.2 1148.2,1200.2 1147.2,1200.7 1146.2,1200.5 1145.2,1200.6 1144.2,1200.2 1143.2,1200.3 1142.2,1200.5 1141.2,1200.5 1140.2,1200.5 1139.2,1200.5 1138.2,1200.5 1137.2,1200.6 1136.2,1200.6 1135.2,1200.2 1134.2,1200.3 1133.2,1200.4 1132.2,1200.4 1131.2,1200.8 1130.2,1200.5 1129.2,1200.6 1128.2,1200.5 1127.2,1200.3 1126.2,1200.5 1125.2,1200.8 1124.2,1200.7 1123.2,1200.6 1122.2,1200.4 1121.2,1200.5 1120.2,1200.3 1119.2,1200.2 1118.2,1200.3 1117.2,1200.5 1116.2,1200.3 1115.2,1200.8 1114.2,1200.2 1113.2,1200.8 1112.2,1200.2 1111.2,1200.6 1110.2,1200.2 1109.2,1200.3 1108.2,1200.5 1107.2,1200.2 1106.2,1200.6 1105.2,1200.7 1104.2,1200.4 1103.2,1201.2 1102.2,1200.7 1101.2,1200.3 1100.2,1200.7 1099.2,1200.5 1098.2,1200.8 1097.2,1200.7 1096.2,1200.8 1095.2,1202.1 1094.2,1200.4 1093.2,1200.5 1092.2,1200.6 1091.2,1200.2 1090.2,1200.6 1089.2,1200.5 1088.2,1202.2 1087.2,1200.4 1086.2,1200.7 1085.2,1200.6 1084.2,1200.7 1083.2,1200.8 1082.2,1200.5 1081.2,1200.4 1080.2,1200.4 1079.2,1200.6 1078.2,1200.2 1077.2,1202.3 1076.2,1200.7 1075.2,1201.8 1074.2,1200.8 1073.2,1200.7 1072.2,1200.7 1071.2,1201.6 1070.2,1200.7 1069.2,1200.4 1068.2,1200.5 1067.2,1200.5 1066.2,1200.5 1065.2,1200.2 1064.2,1200.4 1063.2,1200.2 1062.2,1200.3 1061.2,1200.6 1060.2,1200.5 1059.2,1200.5 1058.2,1200.8 1057.2,1200.5 1056.2,1200.3 1055.2,1200.8 1054.2,1200.7 1053.2,1200.3 1052.2,1200.7 1051.2,1200.5 1050.2,1200.6 1049.2,1200.6 1048.2,1200.6 1047.2,1200.5 1046.2,1201.8 1045.2,1200.7 1044.2,1200.3 1043.2,1200.6 1042.2,1200.6 1041.2,1200.6 1040.2,1200.5 1039.2,1200.4 1038.2,1200.8 1037.2,1200.3 1036.2,1200.7 1035.2,1200.5 1034.2,1200.4 1033.2,1200.7 1032.2,1200.4 1031.2,1200.3 1030.2,1200.3 1029.2,1200.6 1028.2,1200.7 1027.2,1201.8 1026.2,1200.5 1025.2,1200.7 1024.2,1200.5 1023.2,1200.4 1022.2,1200.6 1021.2,1200.4 1020.2,1200.4 1019.2,1200.6 1018.2,1200.2 1017.2,1200.8 1016.2,1200.7 1015.2,1200.4 1014.2,1200.6 1013.2,1200.6 1012.2,1200.8 1011.2,1200.4 1010.2,1200.9 1009.2,1201.0 1008.2,1201.1 1007.2,1200.9 1006.2,1201.0 1005.2,1201.4 1004.2,1201.6 1003.2,1202.1 1002.2,1202.2"/><polygon points="1432.9,1195.6 1433.9,1195.3 1434.9,1195.0 1435.9,1194.9 1436.9,1193.2 1437.9,1194.5 1438.9,1194.3 1439.9,1194.4 1440.9,1194.0 1441.9,1194.4 1442.9,1193.8 1443.9,1194.2 1444.9,1193.9 1445.9,1194.1 1446.9,1193.8 1447.9,1194.1 1448.9,1193.8 1449.9,1194.0 1450.9,1193.8 1451.9,1193.8 1452.9,1192.4 1453.9,1194.0 1454.9,1194.0 1455.9,1193.6 1456.9,1193.9 1457.9,1194.1 1458.9,1193.8 1459.9,1193.7 1460.9,1194.0 1461.9,1193.8 1462.9,1194.1 1463.9,1193.7 1464.9,1193.9 1465.9,1194.1 1466.9,1193.6 1467.9,1193.9 1468.9,1193.6 1469.9,1194.1 1470.9,1193.9 1471.9,1194.1 1472.9,1193.7 1473.9,1193.6 1474.9,1194.0 1475.9,1194.0 1476.9,1193.6 1477.9,1193.8 1478.9,1193.6 1479.9,1193.8 1480.9,1193.9 1481.9,1194.1 1482.9,1193.7 1483.9,1194.2 1484.9,1193.9 1485.9,1194.1 1486.9,1193.6 1487.9,1193.9 1488.9,1193.8 1489.9,1194.1 1490.9,1194.1 1491.9,1193.9 1492.9,1194.2 1493.9,1194.0 1494.9,1194.0 1495.9,1193.8 1496.9,1194.2 1497.9,1194.0 1498.9,1193.6 1499.9,1193.7 1500.9,1193.7 1501.9,1194.2 1502.9,1193.7 1503.9,1193.9 1504.9,1194.1 1505.9,1194.0 1506.9,1194.0 1507.9,1193.6 1508.9,1194.2 1509.9,1194.0 1510.9,1194.0 1511.9,1194.0 1512.9,1193.7 1513.9,1194.2 1514.9,1193.6 1515.9,1193.8 1516.9,1193.8 1517.9,1193.9 1518.9,1193.7 1519.9,1194.2 1520.9,1194.1 1521.9,1193.7 1522.9,1194.1 1523.9,1193.9 1524.9,1193.7 1525.9,1193.6 1526.9,1193.8 1527.9,1194.1 1528.9,1193.6 1529.9,1193.9 1530.9,1193.8 1531.9,1193.6 1532.9,1193.8 1533.9,1194.0 1534.9,1193.8 1535.9,1192.8 1536.9,1193.7 1537.9,1194.0 1538.9,1194.2 1539.9,1193.8 1540.9,1194.0 1541.9,1194.0 1542.9,1193.8 1543.9,1193.9 1544.9,1194.2 1545.9,1193.8 1546.9,1194.0 1547.9,1194.2 1548.9,1193.3 1549.9,1194.0 1550.9,1193.9 1551.9,1193.9 1552.9,1194.2 1553.9,1194.2 1554.9,1193.8 1555.9,1194.1 1556.9,1194.0 1557.9,1194.1 1558.9,1194.1 1559.9,1193.9 1560.9,1193.6 1561.9,1194.0 1562.9,1194.0 1563.9,1194.0 1564.9,1194.1 1565.9,1193.9 1566.9,1193.4 1567.9,1193.7 1568.9,1193.9 1569.9,1193.9 1570.9,1194.0 1571.9,1192.6 1572.9,1193.9 1573.9,1194.0 1574.9,1194.0 1575.9,1194.0 1576.9,1193.6 1577.9,1194.0 1578.9,1193.9 1579.9,1193.7 1580.9,1194.1 1581.9,1194.1 1582.9,1193.7 1583.9,1193.8 1584.9,1194.0 1585.9,1194.0 1586.9,1193.9 1587.9,1194.1 1588.9,1193.9 1589.9,1193.7 1590.9,1194.1 1591.9,1193.7 1592.9,1194.1 1593.9,1193.8 1594.9,1194.1 1595.9,1193.7 1596.9,1192.5 1597.9,1193.9 1598.9,1193.8 1599.9,1194.1 1600.9,1194.1 1601.9,1193.9 1602.9,1193.8 1603.9,1193.8 1604.9,1193.8 1605.9,1193.6 1606.9,1194.2 1607.9,1194.2 1608.9,1194.2 1609.9,1194.0 1610.9,1193.9 1611.9,1193.6 1612.9,1193.6 1613.9,1193.8 1614.9,1193.7 1615.9,1193.6 1616.9,1193.6 1617.9,1193.7 1618.9,1194.2 1619.9,1193.7 1620.9,1193.9 1621.9,1193.7 1622.9,1193.8 1623.9,1193.7 1624.9,1193.8 1625.9,1194.1 1626.9,1193.7 1627.9,1194.0 1628.9,1194.1 1629.9,1194.1 1630.9,1194.1 1631.9,1194.0 1632.9,1194.0 1633.9,1194.2 1634.9,1193.8 1635.9,1193.7 1636.9,1194.2 1637.9,1193.8 1638.9,1193.8 1639.9,1194.1 1640.9,1194.2 1641.9,1194.0 1642.9,1193.8 1643.9,1192.9 1644.9,1194.2 1645.9,1194.0 1646.9,1194.0 1647.9,1193.7 1648.9,1193.7 1649.9,1193.8 1650.9,1193.6 1651.9,1193.9 1652.9,1193.7 1653.9,1193.7 1654.9,1194.2 1655.9,1193.8 1656.9,1193.7 1657.9,1193.8 1658.9,1194.0 1659.9,1193.7 1660.9,1194.2 1661.9,1193.8 1662.9,1194.0 1663.9,1193.8 1664.9,1193.7 1665.9,1194.2 1666.9,1194.0 1667.9,1194.0 1668.9,1194.0 1669.9,1194.2 1670.9,1193.6 1671.9,1194.1 1672.9,1194.0 1673.9,1194.2 1674.9,1194.0 1675.9,1194.1 1676.9,1193.7 1677.9,1194.0 1678.9,1194.1 1679.9,1193.8 1680.9,1193.7 1681.9,1194.1 1682.9,1194.0 1683.9,1194.0 1684.9,1193.9 1685.9,1193.8 1686.9,1193.9 1687.9,1194.2 1688.9,1193.8 1689.9,1193.7 1690.9,1194.0 1691.9,1193.6 1692.9,1194.0 1693.9,1194.0 1694.9,1194.0 1695.9,1193.8 1696.9,1193.8 1697.9,1194.1 1698.9,1193.7 1699.9,1194.1 1700.9,1193.7 1701.9,1193.6 1702.9,1193.6 1703.9,1193.9 1704.9,1194.1 1705.9,1193.9 1706.9,1194.2 1707.9,1194.1 1708.9,1194.0 1709.9,1193.7 1710.9,1193.8 1711.9,1193.6 1712.9,1194.0 1713.9,1193.9 1714.9,1193.8 1715.9,1193.9 1716.9,1193.6 1717.9,1193.7 1718.9,1194.0 1719.9,1193.7 1720.9,1193.8 1721.9,1193.8 1722.9,1194.2 1723.9,1193.7 1724.9,1194.0 1725.9,1193.6 1726.9,1194.0 1727.9,1193.6 1728.9,1194.2 1729.9,1194.1 1730.9,1193.9 1731.9,1193.7 1732.9,1194.1 1733.9,1193.7 1734.9,1193.9 1735.9,1193.8 1736.9,1193.8 1737.9,1193.9 1738.9,1194.1 1739.9,1193.9 1740.9,1193.8 1741.9,1194.1 1742.9,1194.1 1743.9,1193.7 1744.9,1194.1 1745.9,1193.9 1746.9,1194.1 1747.9,1194.1 1748.9,1194.1 1749.9,1193.9 1750.9,1194.0 1751.9,1194.1 1752.9,1194.0 1753.9,1194.1 1754.9,1194.1 1755.9,1193.6 1756.9,1193.7 1757.9,1194.2 1758.9,1193.8 1759.9,1192.3 1760.9,1193.8 1761.9,1194.2 1762.9,1193.8 1763.9,1193.8 1764.9,1193.5 1765.9,1193.8 1766.9,1193.9 1767.9,1192.5 1768.9,1194.2 1769.9,1194.1 1770.9,1194.0 1771.9,1193.3 1772.9,1193.6 1773.9,1193.7 1774.9,1194.0 1775.9,1193.7 1776.9,1194.2 1777.9,1194.2 1778.9,1194.0 1779.9,1193.8 1780.9,1193.9 1781.9,1194.1 1782.9,1194.2 1783.9,1193.8 1784.9,1193.8 1785.9,1194.2 1786.9,1192.3 1787.9,1194.0 1788.9,1193.7 1789.9,1193.8 1790.9,1193.9 1791.9,1193.9 1792.9,1194.0 1793.9,1193.8 1794.9,1194.0 1795.9,1193.8 1796.9,1193.9 1797.9,1193.8 1798.9,1193.7 1799.9,1193.9 1800.9,1194.0 1801.9,1193.6 1802.9,1193.9 1803.9,1193.9 1804.9,1193.8 1805.9,1194.0 1806.9,1194.1 1807.9,1193.8 1808.9,1193.8 1809.9,1194.1 1810.9,1192.4 1811.9,1193.8 1812.9,1194.2 1813.9,1194.1 1814.9,1193.7 1815.9,1193.7 1816.9,1193.9 1817.9,1194.0 1818.9,1193.7 1819.9,1194.0 1820.9,1193.9 1821.9,1194.1 1822.9,1193.9 1823.9,1193.6 1824.9,1193.6 1825.9,1193.8 1826.9,1193.8 1827.9,1193.9 1828.9,1194.0 1829.9,1193.8 1830.9,1193.8 1831.9,1193.8 1833.4,1193.9 1833.4,1200.2 1831.9,1200.3 1830.9,1200.3 1829.9,1200.5 1828.9,1200.3 1827.9,1200.6 1826.9,1200.5 1825.9,1200.3 1824.9,1200.3 1823.9,1200.7 1822.9,1200.3 1821.9,1200.4 1820.9,1200.4 1819.9,1200.8 1818.9,1200.7 1817.9,1200.4 1816.9,1200.7 1815.9,1200.5 1814.9,1200.4 1813.9,1200.3 1812.9,1200.7 1811.9,1200.4 1810.9,1200.6 1809.9,1201.9 1808.9,1200.3 1807.9,1200.3 1806.9,1200.8 1805.9,1200.4 1804.9,1200.6 1803.9,1200.2 1802.9,1200.5 1801.9,1200.7 1800.9,1200.3 1799.9,1200.8 1798.9,1200.3 1797.9,1200.7 1796.9,1200.4 1795.9,1200.6 1794.9,1200.8 1793.9,1202.2 1792.9,1200.6 1791.9,1200.3 1790.9,1200.5 1789.9,1200.7 1788.9,1200.5 1787.9,1200.7 1786.9,1200.8 1785.9,1200.4 1784.9,1200.6 1783.9,1201.3 1782.9,1200.7 1781.9,1200.4 1780.9,1200.4 1779.9,1200.6 1778.9,1200.3 1777.9,1201.4 1776.9,1200.2 1775.9,1200.6 1774.9,1200.8 1773.9,1200.5 1772.9,1200.7 1771.9,1202.2 1770.9,1200.5 1769.9,1200.7 1768.9,1200.6 1767.9,1200.4 1766.9,1200.5 1765.9,1200.3 1764.9,1200.7 1763.9,1200.4 1762.9,1200.3 1761.9,1200.4 1760.9,1200.4 1759.9,1200.5 1758.9,1200.6 1757.9,1200.9 1756.9,1200.4 1755.9,1200.3 1754.9,1200.7 1753.9,1200.6 1752.9,1200.3 1751.9,1200.8 1750.9,1200.4 1749.9,1200.8 1748.9,1200.6 1747.9,1200.4 1746.9,1200.5 1745.9,1200.7 1744.9,1200.5 1743.9,1200.2 1742.9,1200.2 1741.9,1200.7 1740.9,1200.3 1739.9,1200.7 1738.9,1200.6 1737.9,1200.4 1736.9,1200.6 1735.9,1200.6 1734.9,1200.8 1733.9,1200.5 1732.9,1200.4 1731.9,1200.8 1730.9,1200.4 1729.9,1200.6 1728.9,1200.5 1727.9,1200.6 1726.9,1200.2 1725.9,1200.6 1724.9,1200.4 1723.9,1200.4 1722.9,1200.5 1721.9,1200.5 1720.9,1200.8 1719.9,1200.4 1718.9,1200.5 1717.9,1200.4 1716.9,1200.6 1715.9,1200.3 1714.9,1200.3 1713.9,1201.4 1712.9,1200.7 1711.9,1200.7 1710.9,1200.6 1709.9,1200.2 1708.9,1200.6 1707.9,1200.5 1706.9,1200.3 1705.9,1200.3 1704.9,1200.4 1703.9,1201.6 1702.9,1200.8 1701.9,1200.6 1700.9,1200.3 1699.9,1200.3 1698.9,1200.5 1697.9,1200.5 1696.9,1200.5 1695.9,1200.6 1694.9,1200.3 1693.9,1200.6 1692.9,1200.5 1691.9,1200.4 1690.9,1201.4 1689.9,1200.3 1688.9,1200.3 1687.9,1200.7 1686.9,1201.3 1685.9,1200.5 1684.9,1200.6 1683.9,1200.5 1682.9,1200.8 1681.9,1200.4 1680.9,1200.3 1679.9,1200.6 1678.9,1200.5 1677.9,1200.7 1676.9,1200.7 1675.9,1200.5 1674.9,1200.3 1673.9,1200.2 1672.9,1200.5 1671.9,1200.2 1670.9,1200.4 1669.9,1201.5 1668.9,1200.3 1667.9,1200.2 1666.9,1200.4 1665.9,1200.6 1664.9,1200.4 1663.9,1200.6 1662.9,1200.7 1661.9,1200.6 1660.9,1200.2 1659.9,1200.6 1658.9,1200.7 1657.9,1200.5 1656.9,1200.6 1655.9,1200.2 1654.9,1200.4 1653.9,1200.5 1652.9,1200.6 1651.9,1200.4 1650.9,1200.6 1649.9,1200.4 1648.9,1200.7 1647.9,1200.7 1646.9,1200.3 1645.9,1200.8 1644.9,1200.4 1643.9,1200.5 1642.9,1200.4 1641.9,1200.5 1640.9,1200.5 1639.9,1200.5 1638.9,1200.5 1637.9,1200.4 1636.9,1200.5 1635.9,1200.5 1634.9,1200.2 1633.9,1200.7 1632.9,1200.2 1631.9,1200.7 1630.9,1200.7 1629.9,1200.6 1628.9,1200.4 1627.9,1200.6 1626.9,1200.4 1625.9,1200.5 1624.9,1200.8 1623.9,1200.7 1622.9,1200.6 1621.9,1200.6 1620.9,1200.7 1619.9,1200.6 1618.9,1200.5 1617.9,1200.3 1616.9,1200.3 1615.9,1200.8 1614.9,1200.7 1613.9,1200.5 1612.9,1200.6 1611.9,1200.2 1610.9,1200.4 1609.9,1200.5 1608.9,1200.2 1607.9,1200.2 1606.9,1200.8 1605.9,1200.7 1604.9,1200.4 1603.9,1200.7 1602.9,1200.4 1601.9,1200.7 1600.9,1200.7 1599.9,1200.7 1598.9,1200.4 1597.9,1200.2 1596.9,1200.6 1595.9,1200.5 1594.9,1200.3 1593.9,1200.6 1592.9,1200.2 1591.9,1200.8 1590.9,1200.8 1589.9,1200.5 1588.9,1200.4 1587.9,1200.3 1586.9,1200.2 1585.9,1200.6 1584.9,1200.4 1583.9,1200.8 1582.9,1200.3 1581.9,1200.8 1580.9,1200.4 1579.9,1200.5 1578.9,1200.5 1577.9,1200.3 1576.9,1200.7 1575.9,1200.3 1574.9,1200.8 1573.9,1200.4 1572.9,1200.2 1571.9,1200.5 1570.9,1200.4 1569.9,1200.5 1568.9,1200.3 1567.9,1200.5 1566.9,1200.4 1565.9,1200.4 1564.9,1200.8 1563.9,1200.7 1562.9,1200.7 1561.9,1200.8 1560.9,1200.7 1559.9,1200.8 1558.9,1200.4 1557.9,1200.5 1556.9,1200.6 1555.9,1200.8 1554.9,1200.3 1553.9,1200.5 1552.9,1200.4 1551.9,1200.3 1550.9,1200.3 1549.9,1200.8 1548.9,1200.7 1547.9,1200.3 1546.9,1200.7 1545.9,1200.4 1544.9,1200.8 1543.9,1200.5 1542.9,1200.8 1541.9,1200.4 1540.9,1200.7 1539.9,1200.8 1538.9,1200.4 1537.9,1200.4 1536.9,1200.7 1535.9,1200.5 1534.9,1200.6 1533.9,1200.7 1532.9,1200.6 1531.9,1201.9 1530.9,1200.7 1529.9,1200.7 1528.9,1200.5 1527.9,1200.6 1526.9,1200.7 1525.9,1200.3 1524.9,1200.6 1523.9,1200.8 1522.9,1200.7 1521.9,1200.5 1520.9,1200.7 1519.9,1200.6 1518.9,1200.4 1517.9,1200.6 1516.9,1200.2 1515.9,1200.4 1514.9,1200.6 1513.9,1200.4 1512.9,1200.4 1511.9,1200.4 1510.9,1200.2 1509.9,1200.3 1508.9,1200.6 1507.9,1201.4 1506.9,1200.3 1505.9,1200.6 1504.9,1200.6 1503.9,1200.7 1502.9,1200.5 1501.9,1200.3 1500.9,1200.7 1499.9,1200.3 1498.9,1200.4 1497.9,1200.4 1496.9,1200.5 1495.9,1200.7 1494.9,1200.6 1493.9,1200.3 1492.9,1200.8 1491.9,1200.5 1490.9,1200.2 1489.9,1200.6 1488.9,1200.4 1487.9,1200.4 1486.9,1200.4 1485.9,1200.4 1484.9,1200.4 1483.9,1201.3 1482.9,1200.4 1481.9,1200.3 1480.9,1200.6 1479.9,1200.7 1478.9,1200.7 1477.9,1200.5 1476.9,1200.7 1475.9,1200.4 1474.9,1200.6 1473.9,1200.7 1472.9,1202.3 1471.9,1200.3 1470.9,1200.4 1469.9,1200.7 1468.9,1200.5 1467.9,1201.7 1466.9,1200.3 1465.9,1200.7 1464.9,1200.5 1463.9,1200.3 1462.9,1200.2 1461.9,1200.4 1460.9,1200.6 1459.9,1200.3 1458.9,1200.7 1457.9,1200.3 1456.9,1200.4 1455.9,1200.6 1454.9,1200.3 1453.9,1200.2 1452.9,1200.5 1451.9,1200.3 1450.9,1200.8 1449.9,1200.3 1448.9,1200.6 1447.9,1200.8 1446.9,1200.7 1445.9,1200.6 1444.9,1200.7 1443.9,1200.3 1442.9,1200.6 1441.9,1200.5 1440.9,1200.5 1439.9,1201.1 1438.9,1200.9 1437.9,1201.3 1436.9,1201.3 1435.9,1201.3 1434.9,1201.5 1433.9,1201.9 1432.9,1202.1"/><polygon points="1863.5,1196.0 1864.5,1195.3 1865.5,1195.1 1866.5,1194.6 1867.5,1193.6 1868.5,1194.2 1869.5,1194.3 1870.5,1194.3 1871.5,1194.1 1872.5,1194.0 1873.5,1193.9 1874.5,1193.8 1875.5,1194.1 1876.5,1193.9 1877.5,1194.0 1878.5,1194.1 1879.5,1193.9 1880.5,1193.8 1881.5,1193.9 1882.5,1194.2 1883.5,1194.1 1884.5,1194.0 1885.5,1193.9 1886.5,1194.1 1887.5,1193.6 1888.5,1193.8 1889.5,1194.1 1890.5,1193.9 1891.5,1194.0 1892.5,1194.2 1893.5,1194.1 1894.5,1193.8 1895.5,1193.6 1896.5,1194.0 1897.5,1194.0 1898.5,1193.8 1899.5,1194.0 1900.5,1193.9 1901.5,1193.7 1902.5,1193.7 1903.5,1193.9 1904.5,1193.9 1905.5,1193.7 1906.5,1193.7 1907.5,1194.0 1908.5,1193.8 1909.5,1193.7 1910.5,1194.1 1911.5,1194.0 1912.5,1194.1 1913.5,1193.9 1914.5,1193.9 1915.5,1193.8 1916.5,1193.8 1917.5,1194.1 1918.5,1194.0 1919.5,1193.9 1920.5,1193.9 1921.5,1194.1 1922.5,1194.0 1923.5,1194.1 1924.5,1193.8 1925.5,1194.0 1926.5,1193.9 1927.5,1193.8 1928.5,1194.0 1929.5,1193.6 1930.5,1193.7 1931.5,1193.9 1932.5,1193.8 1933.5,1193.9 1934.5,1194.0 1935.5,1194.0 1936.5,1193.9 1937.5,1193.9 1938.5,1193.4 1939.5,1193.7 1940.5,1193.8 1941.5,1194.1 1942.5,1193.8 1943.5,1193.9 1944.5,1192.7 1945.5,1193.8 1946.5,1193.8 1947.5,1194.0 1948.5,1193.7 1949.5,1193.7 1950.5,1192.5 1951.5,1193.8 1952.5,1194.0 1953.5,1194.0 1954.5,1193.7 1955.5,1193.7 1956.5,1194.1 1957.5,1193.9 1958.5,1192.7 1959.5,1193.6 1960.5,1193.7 1961.5,1194.1 1962.5,1194.0 1963.5,1194.0 1964.5,1194.0 1965.5,1194.1 1966.5,1193.8 1967.5,1192.5 1968.5,1193.7 1969.5,1193.7 1970.5,1193.9 1971.5,1194.2 1972.5,1193.8 1973.5,1193.9 1974.5,1193.8 1975.5,1193.9 1976.5,1192.7 1977.5,1193.8 1978.5,1193.7 1979.5,1193.6 1980.5,1193.7 1981.5,1193.9 1982.5,1193.8 1983.5,1194.1 1984.5,1193.7 1985.5,1194.0 1986.5,1193.8 1987.5,1194.0 1988.5,1194.0 1989.5,1193.6 1990.5,1193.7 1991.5,1194.1 1992.5,1193.8 1993.5,1194.2 1994.5,1193.9 1995.5,1193.7 1996.5,1193.6 1997.5,1194.1 1998.5,1193.6 1999.5,1193.7 2000.5,1193.8 2001.5,1193.7 2002.5,1194.2 2003.5,1193.7 2004.5,1193.8 2005.5,1193.9 2006.5,1194.1 2007.5,1193.9 2008.5,1194.1 2009.5,1193.9 2010.5,1193.9 2011.5,1194.0 2012.5,1194.2 2013.5,1193.8 2014.5,1194.1 2015.5,1193.9 2016.5,1194.0 2017.5,1193.8 2018.5,1193.8 2019.5,1193.7 2020.5,1194.2 2021.5,1194.1 2022.5,1193.7 2023.5,1194.1 2024.5,1193.7 2025.5,1193.9 2026.5,1194.0 2027.5,1194.1 2028.5,1193.8 2029.5,1194.0 2030.5,1194.0 2031.5,1193.8 2032.5,1193.8 2033.5,1194.2 2034.5,1193.8 2035.5,1194.0 2036.5,1193.7 2037.5,1193.6 2038.5,1194.0 2039.5,1194.0 2040.5,1194.2 2041.5,1193.8 2042.5,1192.3 2043.5,1193.6 2044.5,1194.2 2045.5,1193.9 2046.5,1193.9 2047.5,1194.0 2048.5,1193.9 2049.5,1194.0 2050.5,1193.7 2051.5,1193.0 2052.5,1193.6 2053.5,1194.1 2054.5,1193.8 2055.5,1194.1 2056.5,1194.1 2057.5,1193.9 2058.5,1193.6 2059.5,1193.7 2060.5,1194.1 2061.5,1194.2 2062.5,1194.2 2063.5,1193.7 2064.5,1194.2 2065.5,1193.6 2066.5,1193.7 2067.5,1194.0 2068.5,1193.7 2069.5,1194.0 2070.5,1193.8 2071.5,1194.1 2072.5,1193.7 2073.5,1194.0 2074.5,1194.0 2075.5,1194.0 2076.5,1193.7 2077.5,1194.0 2078.5,1193.7 2079.5,1194.1 2080.5,1194.1 2081.5,1193.7 2082.5,1193.7 2083.5,1194.0 2084.5,1193.8 2085.5,1193.8 2086.5,1194.0 2087.5,1194.1 2088.5,1193.6 2089.5,1194.1 2090.5,1193.8 2091.5,1194.2 2092.5,1193.7 2093.5,1193.7 2094.5,1193.8 2095.5,1194.1 2096.5,1194.1 2097.5,1193.8 2098.5,1194.2 2099.5,1193.9 2100.5,1192.7 2101.5,1193.7 2102.5,1193.9 2103.5,1193.9 2104.5,1192.8 2105.5,1194.0 2106.5,1193.7 2107.5,1194.1 2108.5,1194.0 2109.5,1194.1 2110.5,1193.7 2111.5,1192.2 2112.5,1194.2 2113.5,1194.0 2114.5,1194.1 2115.5,1193.6 2116.5,1194.0 2117.5,1194.0 2118.5,1193.7 2119.5,1194.1 2120.5,1193.9 2121.5,1193.6 2122.5,1192.5 2123.5,1193.9 2124.5,1193.8 2125.5,1193.7 2126.5,1193.7 2127.5,1193.1 2128.5,1193.7 2129.5,1193.8 2130.5,1194.0 2131.5,1194.0 2132.5,1193.8 2133.5,1193.7 2134.5,1193.6 2135.5,1193.8 2136.5,1193.8 2137.5,1193.8 2138.5,1193.6 2139.5,1194.1 2140.5,1194.1 2141.5,1194.1 2142.5,1194.2 2143.5,1193.7 2144.5,1193.9 2145.5,1193.9 2146.5,1194.2 2147.5,1193.6 2148.5,1193.6 2149.5,1193.9 2150.5,1194.2 2151.5,1193.9 2152.5,1194.1 2153.5,1193.9 2154.5,1194.2 2155.5,1193.8 2156.5,1192.7 2157.5,1194.1 2158.5,1193.8 2159.5,1194.2 2160.5,1193.6 2161.5,1193.8 2162.5,1194.1 2163.5,1193.7 2164.5,1193.7 2165.5,1193.8 2166.5,1193.7 2167.5,1194.1 2168.5,1193.8 2169.5,1193.7 2170.5,1194.0 2171.5,1193.9 2172.5,1194.2 2173.5,1193.7 2174.5,1193.8 2175.5,1193.9 2176.5,1193.6 2177.5,1193.8 2178.5,1194.1 2179.5,1194.0 2180.5,1194.1 2181.5,1193.8 2182.5,1194.1 2183.5,1194.1 2184.5,1193.7 2185.5,1193.7 2186.5,1193.7 2187.5,1194.1 2188.5,1193.7 2189.5,1194.1 2190.5,1194.1 2191.5,1193.6 2192.5,1193.8 2193.5,1194.1 2194.5,1194.1 2195.5,1194.1 2196.5,1193.8 2197.5,1193.6 2198.5,1193.9 2199.5,1194.1 2200.5,1193.7 2201.5,1194.0 2202.5,1193.8 2203.5,1194.1 2204.5,1193.9 2205.5,1193.7 2206.5,1194.1 2207.5,1194.1 2208.5,1194.1 2209.5,1193.9 2210.5,1193.9 2211.5,1193.6 2212.5,1194.0 2213.5,1193.8 2214.5,1193.6 2215.5,1193.9 2216.5,1194.1 2217.5,1193.8 2218.5,1194.0 2219.5,1194.1 2220.5,1194.1 2221.5,1194.1 2222.5,1193.7 2223.5,1193.7 2224.5,1193.9 2225.5,1194.1 2226.5,1193.7 2227.5,1194.0 2228.5,1194.2 2229.5,1194.0 2230.5,1193.9 2231.5,1194.2 2232.5,1194.1 2233.5,1193.7 2234.5,1194.2 2235.5,1193.8 2236.5,1193.8 2237.5,1193.9 2238.5,1193.9 2239.5,1194.0 2240.5,1193.9 2241.5,1194.0 2242.5,1193.1 2243.5,1194.1 2244.5,1193.6 2245.5,1194.1 2246.5,1193.9 2247.5,1193.8 2248.5,1194.0 2249.5,1193.1 2250.5,1194.2 2251.5,1193.6 2252.5,1194.1 2253.5,1193.6 2254.5,1194.2 2255.5,1193.9 2256.5,1193.8 2257.5,1194.2 2258.5,1193.9 2259.5,1193.7 2260.5,1193.6 2261.5,1193.7 2262.5,1194.0 2264.4,1193.9 2264.4,1200.2 2262.5,1200.3 2261.5,1200.7 2260.5,1200.6 2259.5,1200.7 2258.5,1200.6 2257.5,1200.8 2256.5,1200.6 2255.5,1200.8 2254.5,1200.6 2253.5,1200.4 2252.5,1200.5 2251.5,1200.6 2250.5,1200.6 2249.5,1200.7 2248.5,1200.7 2247.5,1200.6 2246.5,1200.7 2245.5,1200.5 2244.5,1200.8 2243.5,1200.8 2242.5,1200.8 2241.5,1200.7 2240.5,1200.3 2239.5,1200.6 2238.5,1200.6 2237.5,1200.4 2236.5,1200.5 2235.5,1200.4 2234.5,1200.6 2233.5,1200.4 2232.5,1200.4 2231.5,1200.6 2230.5,1200.2 2229.5,1200.8 2228.5,1200.7 2227.5,1200.6 2226.5,1200.5 2225.5,1200.7 2224.5,1200.6 2223.5,1200.6 2222.5,1200.5 2221.5,1200.6 2220.5,1200.5 2219.5,1200.8 2218.5,1200.8 2217.5,1200.5 2216.5,1200.5 2215.5,1200.8 2214.5,1200.2 2213.5,1200.3 2212.5,1200.6 2211.5,1200.2 2210.5,1200.7 2209.5,1200.3 2208.5,1200.3 2207.5,1200.7 2206.5,1200.7 2205.5,1200.2 2204.5,1200.7 2203.5,1200.2 2202.5,1200.5 2201.5,1200.3 2200.5,1200.7 2199.5,1200.4 2198.5,1200.3 2197.5,1200.4 2196.5,1200.3 2195.5,1200.7 2194.5,1200.2 2193.5,1200.3 2192.5,1200.4 2191.5,1200.7 2190.5,1200.4 2189.5,1200.4 2188.5,1200.8 2187.5,1200.5 2186.5,1200.4 2185.5,1200.3 2184.5,1200.5 2183.5,1200.8 2182.5,1200.7 2181.5,1200.3 2180.5,1200.3 2179.5,1200.2 2178.5,1200.6 2177.5,1200.7 2176.5,1200.4 2175.5,1200.5 2174.5,1200.7 2173.5,1200.5 2172.5,1200.6 2171.5,1200.5 2170.5,1200.7 2169.5,1200.4 2168.5,1200.4 2167.5,1200.7 2166.5,1200.7 2165.5,1200.3 2164.5,1200.3 2163.5,1200.8 2162.5,1200.7 2161.5,1200.4 2160.5,1200.4 2159.5,1200.7 2158.5,1200.4 2157.5,1200.3 2156.5,1200.6 2155.5,1200.7 2154.5,1200.6 2153.5,1200.7 2152.5,1200.5 2151.5,1200.4 2150.5,1201.7 2149.5,1200.6 2148.5,1200.3 2147.5,1200.6 2146.5,1200.6 2145.5,1200.3 2144.5,1200.7 2143.5,1200.8 2142.5,1200.3 2141.5,1200.4 2140.5,1200.4 2139.5,1200.3 2138.5,1200.6 2137.5,1200.5 2136.5,1201.6 2135.5,1200.5 2134.5,1200.3 2133.5,1200.7 2132.5,1200.5 2131.5,1200.5 2130.5,1201.8 2129.5,1200.6 2128.5,1200.4 2127.5,1200.6 2126.5,1200.3 2125.5,1200.6 2124.5,1200.6 2123.5,1200.4 2122.5,1200.6 2121.5,1200.7 2120.5,1200.4 2119.5,1200.6 2118.5,1200.4 2117.5,1200.4 2116.5,1200.2 2115.5,1200.4 2114.5,1200.7 2113.5,1200.7 2112.5,1200.2 2111.5,1200.3 2110.5,1200.2 2109.5,1200.5 2108.5,1200.7 2107.5,1200.5 2106.5,1200.2 2105.5,1200.2 2104.5,1200.5 2103.5,1200.7 2102.5,1200.5 2101.5,1200.5 2100.5,1200.3 2099.5,1200.5 2098.5,1200.6 2097.5,1201.6 2096.5,1200.2 2095.5,1200.7 2094.5,1200.5 2093.5,1200.3 2092.5,1200.7 2091.5,1201.6 2090.5,1200.3 2089.5,1200.7 2088.5,1200.4 2087.5,1200.2 2086.5,1200.3 2085.5,1200.3 2084.5,1200.5 2083.5,1200.6 2082.5,1200.5 2081.5,1200.3 2080.5,1200.7 2079.5,1201.5 2078.5,1200.6 2077.5,1200.4 2076.5,1200.3 2075.5,1200.3 2074.5,1200.3 2073.5,1200.2 2072.5,1200.5 2071.5,1200.5 2070.5,1201.1 2069.5,1200.4 2068.5,1200.5 2067.5,1200.4 2066.5,1200.7 2065.5,1200.2 2064.5,1200.4 2063.5,1200.4 2062.5,1200.4 2061.5,1200.4 2060.5,1200.4 2059.5,1200.3 2058.5,1200.6 2057.5,1200.5 2056.5,1200.5 2055.5,1200.7 2054.5,1200.7 2053.5,1200.3 2052.5,1200.3 2051.5,1200.7 2050.5,1200.2 2049.5,1200.3 2048.5,1200.3 2047.5,1200.2 2046.5,1200.4 2045.5,1200.3 2044.5,1200.5 2043.5,1200.4 2042.5,1200.6 2041.5,1200.7 2040.5,1200.6 2039.5,1200.7 2038.5,1200.6 2037.5,1200.8 2036.5,1200.8 2035.5,1200.5 2034.5,1200.3 2033.5,1200.4 2032.5,1200.7 2031.5,1200.8 2030.5,1200.4 2029.5,1200.5 2028.5,1200.6 2027.5,1200.4 2026.5,1200.7 2025.5,1200.8 2024.5,1200.2 2023.5,1200.8 2022.5,1201.6 2021.5,1200.4 2020.5,1201.6 2019.5,1200.4 2018.5,1200.4 2017.5,1200.7 2016.5,1200.5 2015.5,1200.7 2014.5,1200.5 2013.5,1200.6 2012.5,1200.7 2011.5,1200.4 2010.5,1200.6 2009.5,1201.2 2008.5,1200.3 2007.5,1200.5 2006.5,1200.5 2005.5,1200.5 2004.5,1200.5 2003.5,1200.2 2002.5,1200.5 2001.5,1200.7 2000.5,1200.8 1999.5,1200.7 1998.5,1200.4 1997.5,1201.4 1996.5,1200.3 1995.5,1200.6 1994.5,1200.7 1993.5,1200.5 1992.5,1200.5 1991.5,1200.2 1990.5,1200.6 1989.5,1200.6 1988.5,1200.6 1987.5,1200.4 1986.5,1200.8 1985.5,1200.7 1984.5,1200.5 1983.5,1200.4 1982.5,1200.6 1981.5,1200.8 1980.5,1200.2 1979.5,1200.7 1978.5,1200.4 1977.5,1200.6 1976.5,1200.7 1975.5,1200.8 1974.5,1200.7 1973.5,1200.2 1972.5,1200.3 1971.5,1200.6 1970.5,1200.5 1969.5,1200.6 1968.5,1200.5 1967.5,1200.7 1966.5,1200.7 1965.5,1200.5 1964.5,1201.2 1963.5,1200.2 1962.5,1200.5 1961.5,1200.2 1960.5,1200.7 1959.5,1200.6 1958.5,1200.5 1957.5,1200.5 1956.5,1201.9 1955.5,1200.5 1954.5,1200.8 1953.5,1200.8 1952.5,1200.4 1951.5,1200.7 1950.5,1200.3 1949.5,1200.4 1948.5,1200.2 1947.5,1200.8 1946.5,1200.5 1945.5,1200.4 1944.5,1200.6 1943.5,1200.7 1942.5,1200.4 1941.5,1200.8 1940.5,1201.3 1939.5,1200.6 1938.5,1200.5 1937.5,1200.5 1936.5,1200.7 1935.5,1200.5 1934.5,1200.7 1933.5,1200.7 1932.5,1200.7 1931.5,1200.5 1930.5,1200.6 1929.5,1200.5 1928.5,1200.7 1927.5,1200.4 1926.5,1200.4 1925.5,1200.5 1924.5,1200.5 1923.5,1200.4 1922.5,1200.5 1921.5,1200.6 1920.5,1200.5 1919.5,1200.3 1918.5,1200.5 1917.5,1200.5 1916.5,1200.6 1915.5,1200.5 1914.5,1200.6 1913.5,1200.4 1912.5,1200.7 1911.5,1200.5 1910.5,1200.6 1909.5,1200.8 1908.5,1200.8 1907.5,1200.7 1906.5,1200.4 1905.5,1200.4 1904.5,1200.5 1903.5,1200.8 1902.5,1200.7 1901.5,1200.7 1900.5,1200.5 1899.5,1200.8 1898.5,1202.0 1897.5,1200.3 1896.5,1200.5 1895.5,1200.4 1894.5,1200.7 1893.5,1200.8 1892.5,1200.8 1891.5,1200.5 1890.5,1200.5 1889.5,1200.2 1888.5,1200.6 1887.5,1200.5 1886.5,1200.5 1885.5,1200.7 1884.5,1200.5 1883.5,1200.6 1882.5,1200.4 1881.5,1200.6 1880.5,1200.7 1879.5,1200.3 1878.5,1201.0 1877.5,1200.4 1876.5,1200.6 1875.5,1200.8 1874.5,1200.6 1873.5,1200.5 1872.5,1200.5 1871.5,1200.8 1870.5,1201.0 1869.5,1200.8 1868.5,1200.9 1867.5,1201.5 1866.5,1201.7 1865.5,1201.9 1864.5,1201.7 1863.5,1202.6"/><polygon points="2294.0,1195.9 2295.0,1195.1 2296.0,1194.7 2297.0,1195.0 2298.0,1194.5 2299.0,1194.7 2300.0,1194.6 2301.0,1194.0 2302.0,1194.4 2303.0,1194.1 2304.0,1193.8 2305.0,1193.7 2306.0,1194.2 2307.0,1192.7 2308.0,1193.8 2309.0,1193.7 2310.0,1193.3 2311.0,1194.1 2312.0,1194.0 2313.0,1194.2 2314.0,1193.6 2315.0,1194.2 2316.0,1194.1 2317.0,1194.1 2318.0,1193.7 2319.0,1194.2 2320.0,1193.8 2321.0,1193.8 2322.0,1194.1 2323.0,1193.8 2324.0,1194.1 2325.0,1193.9 2326.0,1193.7 2327.0,1194.1 2328.0,1193.8 2329.0,1193.8 2330.0,1194.0 2331.0,1193.7 2332.0,1193.9 2333.0,1193.8 2334.0,1193.6 2335.0,1193.7 2336.0,1193.7 2337.0,1193.7 2338.0,1193.8 2339.0,1194.1 2340.0,1194.1 2341.0,1193.8 2342.0,1192.4 2343.0,1193.8 2344.0,1194.1 2345.0,1193.7 2346.0,1193.9 2347.0,1193.8 2348.0,1193.8 2349.0,1193.7 2350.0,1194.1 2351.0,1193.9 2352.0,1194.1 2353.0,1193.7 2354.0,1194.1 2355.0,1194.1 2356.0,1192.7 2357.0,1194.2 2358.0,1193.8 2359.0,1192.8 2360.0,1194.0 2361.0,1194.1 2362.0,1194.1 2363.0,1193.9 2364.0,1194.0 2365.0,1194.0 2366.0,1193.8 2367.0,1193.9 2368.0,1194.0 2369.0,1194.1 2370.0,1193.6 2371.0,1193.9 2372.0,1193.7 2373.0,1193.7 2374.0,1193.6 2375.0,1194.1 2376.0,1193.6 2377.0,1193.3 2378.0,1192.7 2379.0,1193.9 2380.0,1194.1 2381.0,1194.2 2382.0,1194.1 2383.0,1193.8 2384.0,1194.1 2385.0,1194.2 2386.0,1193.6 2387.0,1193.9 2388.0,1194.2 2389.0,1193.9 2390.0,1194.1 2391.0,1192.5 2392.0,1193.9 2393.0,1194.0 2394.0,1193.9 2395.0,1193.6 2396.0,1194.0 2397.0,1193.9 2398.0,1193.6 2399.0,1194.0 2400.0,1194.0 2401.0,1194.1 2402.0,1193.6 2403.0,1194.1 2404.0,1194.2 2405.0,1194.0 2406.0,1193.4 2407.0,1194.1 2408.0,1194.1 2409.0,1193.9 2410.0,1193.9 2411.0,1194.1 2412.0,1194.2 2413.0,1193.8 2414.0,1194.0 2415.0,1194.1 2416.0,1193.9 2417.0,1193.8 2418.0,1194.0 2419.0,1194.0 2420.0,1193.7 2421.0,1194.2 2422.0,1194.0 2423.0,1193.7 2424.0,1193.9 2425.0,1193.9 2426.0,1194.1 2427.0,1193.9 2428.0,1193.9 2429.0,1193.8 2430.0,1193.9 2431.0,1194.2 2432.0,1194.2 2433.0,1193.9 2434.0,1193.9 2435.0,1193.8 2436.0,1193.8 2437.0,1193.3 2438.0,1193.6 2439.0,1194.1 2440.0,1193.8 2441.0,1194.2 2442.0,1194.2 2443.0,1193.7 2444.0,1193.7 2445.0,1193.8 2446.0,1194.0 2447.0,1194.1 2448.0,1193.5 2449.0,1193.7 2450.0,1194.0 2451.0,1194.1 2452.0,1194.2 2453.0,1193.8 2454.0,1194.0 2455.0,1193.9 2456.0,1194.1 2457.0,1194.1 2458.0,1194.1 2459.0,1194.1 2460.0,1194.0 2461.0,1193.9 2462.0,1193.8 2463.0,1193.7 2464.0,1193.7 2465.0,1193.9 2466.0,1193.9 2467.0,1193.9 2468.0,1194.0 2469.0,1194.2 2470.0,1194.1 2471.0,1194.0 2472.0,1193.9 2473.0,1194.0 2474.0,1194.1 2475.0,1193.8 2475.0,1200.5 2474.0,1200.3 2473.0,1200.6 2472.0,1200.8 2471.0,1200.8 2470.0,1200.5 2469.0,1200.6 2468.0,1200.3 2467.0,1200.4 2466.0,1200.4 2465.0,1200.6 2464.0,1200.8 2463.0,1200.8 2462.0,1200.5 2461.0,1200.4 2460.0,1200.4 2459.0,1200.3 2458.0,1200.5 2457.0,1200.8 2456.0,1200.5 2455.0,1200.4 2454.0,1200.7 2453.0,1200.2 2452.0,1200.4 2451.0,1202.2 2450.0,1200.7 2449.0,1200.4 2448.0,1200.6 2447.0,1200.3 2446.0,1200.5 2445.0,1200.3 2444.0,1200.7 2443.0,1200.6 2442.0,1200.2 2441.0,1200.7 2440.0,1200.4 2439.0,1201.2 2438.0,1200.5 2437.0,1200.3 2436.0,1200.6 2435.0,1200.8 2434.0,1200.4 2433.0,1200.7 2432.0,1200.7 2431.0,1200.4 2430.0,1200.7 2429.0,1200.5 2428.0,1200.4 2427.0,1200.6 2426.0,1200.5 2425.0,1200.2 2424.0,1200.4 2423.0,1200.6 2422.0,1200.8 2421.0,1200.6 2420.0,1200.5 2419.0,1200.3 2418.0,1200.5 2417.0,1200.4 2416.0,1200.6 2415.0,1201.0 2414.0,1200.7 2413.0,1200.4 2412.0,1200.3 2411.0,1200.6 2410.0,1200.4 2409.0,1200.4 2408.0,1200.3 2407.0,1200.7 2406.0,1200.3 2405.0,1200.3 2404.0,1200.4 2403.0,1200.3 2402.0,1200.2 2401.0,1200.4 2400.0,1200.7 2399.0,1200.7 2398.0,1200.6 2397.0,1200.4 2396.0,1200.5 2395.0,1200.6 2394.0,1200.6 2393.0,1200.5 2392.0,1200.6 2391.0,1200.8 2390.0,1200.7 2389.0,1200.7 2388.0,1200.4 2387.0,1200.3 2386.0,1200.4 2385.0,1200.7 2384.0,1200.2 2383.0,1200.7 2382.0,1200.5 2381.0,1200.5 2380.0,1200.6 2379.0,1200.4 2378.0,1200.4 2377.0,1200.6 2376.0,1200.8 2375.0,1200.6 2374.0,1200.7 2373.0,1200.6 2372.0,1200.7 2371.0,1200.7 2370.0,1200.7 2369.0,1200.3 2368.0,1200.2 2367.0,1200.7 2366.0,1200.3 2365.0,1200.5 2364.0,1200.4 2363.0,1200.4 2362.0,1200.5 2361.0,1202.0 2360.0,1200.3 2359.0,1200.8 2358.0,1200.5 2357.0,1200.7 2356.0,1200.5 2355.0,1200.4 2354.0,1200.7 2353.0,1200.7 2352.0,1200.3 2351.0,1200.3 2350.0,1200.5 2349.0,1200.7 2348.0,1200.5 2347.0,1200.3 2346.0,1200.6 2345.0,1200.6 2344.0,1200.4 2343.0,1200.4 2342.0,1200.4 2341.0,1200.3 2340.0,1200.5 2339.0,1202.2 2338.0,1200.6 2337.0,1200.3 2336.0,1200.3 2335.0,1200.7 2334.0,1200.6 2333.0,1200.7 2332.0,1200.5 2331.0,1200.5 2330.0,1200.3 2329.0,1200.4 2328.0,1200.4 2327.0,1200.6 2326.0,1200.7 2325.0,1200.4 2324.0,1200.7 2323.0,1200.4 2322.0,1200.4 2321.0,1200.7 2320.0,1200.3 2319.0,1200.4 2318.0,1200.7 2317.0,1200.4 2316.0,1200.6 2315.0,1200.2 2314.0,1201.4 2313.0,1200.7 2312.0,1200.6 2311.0,1200.8 2310.0,1200.7 2309.0,1200.5 2308.0,1200.3 2307.0,1202.1 2306.0,1200.5 2305.0,1200.4 2304.0,1200.5 2303.0,1200.6 2302.0,1200.8 2301.0,1200.6 2300.0,1201.0 2299.0,1201.2 2298.0,1201.3 2297.0,1201.7 2296.0,1201.8 2295.0,1202.0 2294.0,1202.4"/><polygon points="970.5,1195 972.1,1195 972.0,1216 971.2,1218.5 970.6,1216"/><polygon points="970.9,1200 972.2,1200 972.5,1150 973.2,1070 974.4,1000 973.0,1000 971.9,1070 971.2,1150"/><polygon points="973.2,990.7 974.2,990.1 975.2,991.0 976.2,990.2 977.2,990.5 978.2,990.4 979.2,991.6 980.2,991.7 981.2,991.8 982.2,991.1 983.2,990.8 984.2,991.5 985.2,991.3 986.2,991.9 987.2,992.4 988.2,992.6 989.2,992.4 990.2,992.4 991.2,992.0 992.2,993.1 993.2,992.2 994.2,993.3 995.2,992.3 996.2,992.9 997.2,993.1 998.2,993.9 999.2,992.4 1000.2,993.5 1001.2,994.3 1002.2,994.0 1002.2,1049.2 1001.2,1049.0 1000.2,1049.6 999.2,1049.5 998.2,1049.3 997.2,1049.3 996.2,1049.5 995.2,1049.1 994.2,1048.8 993.2,1048.5 992.2,1048.3 991.2,1047.9 990.2,1048.0 989.2,1047.8 988.2,1047.7 987.2,1048.0 986.2,1047.8 985.2,1047.2 984.2,1047.6 983.2,1047.8 982.2,1047.1 981.2,1046.9 980.2,1047.1 979.2,1046.9 978.2,1046.9 977.2,1046.8 976.2,1047.5 975.2,1046.6 974.2,1047.0 973.2,1047.0"/><polygon points="1001.1,1010 1002.4,1010 1002.8,1213 1002.1,1215 1001.5,1213"/><polygon points="1401.5,1195 1403.1,1195 1403.0,1216 1402.2,1218.5 1401.6,1216"/><polygon points="1401.9,1200 1403.2,1200 1403.5,1150 1404.2,1070 1405.4,1000 1404.0,1000 1402.9,1070 1402.2,1150"/><polygon points="1404.2,990.7 1405.2,990.2 1406.2,990.1 1407.2,990.4 1408.2,991.5 1409.2,991.3 1410.2,991.6 1411.2,991.4 1412.2,991.0 1413.2,991.8 1414.2,991.9 1415.2,991.3 1416.2,991.5 1417.2,991.7 1418.2,992.1 1419.2,991.7 1420.2,991.3 1421.2,992.8 1422.2,992.7 1423.2,993.0 1424.2,992.4 1425.2,992.6 1426.2,993.4 1427.2,993.2 1428.2,993.3 1429.2,994.1 1430.2,994.0 1431.2,994.0 1432.2,993.8 1432.2,1049.2 1431.2,1050.0 1430.2,1049.4 1429.2,1049.0 1428.2,1049.6 1427.2,1048.5 1426.2,1049.5 1425.2,1049.1 1424.2,1048.3 1423.2,1048.4 1422.2,1049.0 1421.2,1048.1 1420.2,1048.8 1419.2,1048.6 1418.2,1047.5 1417.2,1048.7 1416.2,1048.3 1415.2,1048.1 1414.2,1047.5 1413.2,1047.9 1412.2,1046.9 1411.2,1046.8 1410.2,1047.7 1409.2,1047.0 1408.2,1046.5 1407.2,1047.2 1406.2,1047.1 1405.2,1046.3 1404.2,1046.7"/><polygon points="1431.8,1010 1433.1,1010 1433.5,1213 1432.8,1215 1432.2,1213"/><polygon points="1832.5,1195 1834.1,1195 1834.0,1216 1833.2,1218.5 1832.6,1216"/><polygon points="1832.9,1200 1834.2,1200 1834.5,1150 1835.2,1070 1836.4,1000 1835.0,1000 1833.9,1070 1833.2,1150"/><polygon points="1835.2,990.4 1836.2,990.8 1837.2,991.0 1838.2,990.5 1839.2,991.4 1840.2,990.5 1841.2,990.9 1842.2,991.2 1843.2,990.9 1844.2,991.8 1845.2,991.4 1846.2,992.2 1847.2,991.9 1848.2,992.5 1849.2,991.7 1850.2,992.9 1851.2,992.3 1852.2,992.7 1853.2,992.9 1854.2,992.4 1855.2,992.3 1856.2,993.5 1857.2,992.8 1858.2,993.0 1859.2,993.5 1860.2,993.9 1861.2,994.0 1862.2,992.8 1863.2,994.0 1863.2,1049.2 1862.2,1049.8 1861.2,1049.2 1860.2,1049.6 1859.2,1049.6 1858.2,1048.7 1857.2,1049.0 1856.2,1049.4 1855.2,1049.0 1854.2,1049.0 1853.2,1049.1 1852.2,1048.0 1851.2,1048.5 1850.2,1048.4 1849.2,1047.9 1848.2,1048.2 1847.2,1048.0 1846.2,1048.2 1845.2,1047.7 1844.2,1047.1 1843.2,1047.1 1842.2,1047.3 1841.2,1047.7 1840.2,1047.3 1839.2,1047.2 1838.2,1047.4 1837.2,1046.5 1836.2,1046.6 1835.2,1046.1"/><polygon points="1862.4,1010 1863.7,1010 1864.1,1213 1863.4,1215 1862.8,1213"/><polygon points="2263.5,1195 2265.1,1195 2265.0,1216 2264.2,1218.5 2263.6,1216"/><polygon points="2263.9,1200 2265.2,1200 2265.5,1150 2266.2,1070 2267.4,1000 2266.0,1000 2264.9,1070 2264.2,1150"/><polygon points="2266.2,990.6 2267.2,990.4 2268.2,991.0 2269.2,991.3 2270.2,991.4 2271.2,991.1 2272.2,991.7 2273.2,990.8 2274.2,990.9 2275.2,991.7 2276.2,992.1 2277.2,991.9 2278.2,992.1 2279.2,991.2 2280.2,992.1 2281.2,992.8 2282.2,992.8 2283.2,992.8 2284.2,993.2 2285.2,992.3 2286.2,992.7 2287.2,993.3 2288.2,993.3 2289.2,993.1 2290.2,992.2 2291.2,994.2 2292.2,993.4 2293.2,993.9 2293.2,1050.0 2292.2,1049.9 2291.2,1049.9 2290.2,1049.6 2289.2,1049.1 2288.2,1048.7 2287.2,1049.4 2286.2,1049.2 2285.2,1049.0 2284.2,1048.4 2283.2,1048.2 2282.2,1048.2 2281.2,1049.0 2280.2,1048.3 2279.2,1048.0 2278.2,1048.3 2277.2,1048.2 2276.2,1047.8 2275.2,1047.3 2274.2,1048.6 2273.2,1047.0 2272.2,1047.5 2271.2,1047.5 2270.2,1047.5 2269.2,1047.3 2268.2,1046.7 2267.2,1046.4 2266.2,1046.1"/><polygon points="2292.9,1010 2294.2,1010 2294.6,1213 2293.9,1215 2293.3,1213"/></g><g fill="#82cc24"><polygon points="3.9,757.0 4.9,756.9 5.9,756.6 6.9,756.8 7.9,756.6 8.9,756.8 9.9,756.7 10.9,756.7 11.9,756.9 12.9,757.0 13.9,756.8 14.9,756.8 15.9,756.7 16.9,756.9 17.9,756.7 18.9,757.0 19.9,756.6 20.9,756.7 21.9,756.9 22.9,756.8 23.9,756.7 24.9,757.0 25.9,756.9 26.9,756.7 27.9,756.7 28.9,756.9 29.9,756.7 30.9,756.7 31.9,757.0 32.9,756.9 33.9,756.9 34.9,756.6 35.9,757.0 36.9,756.9 37.9,756.8 38.9,756.6 39.9,756.6 40.9,756.6 41.9,756.7 42.9,756.7 43.9,756.9 44.9,756.7 45.9,756.8 46.9,756.9 47.9,756.7 48.9,756.6 49.9,756.9 50.9,756.9 51.9,756.7 52.9,756.6 53.9,756.7 54.9,756.8 55.9,756.8 56.9,756.9 57.9,756.6 58.9,756.7 59.9,756.7 60.9,756.7 61.9,756.7 62.9,756.8 63.9,756.7 64.9,756.9 65.9,756.7 66.9,756.9 67.9,757.0 68.9,756.8 69.9,756.8 70.9,756.8 71.9,757.0 72.9,757.0 73.9,756.7 74.9,756.6 75.9,756.9 76.9,756.7 77.9,756.6 78.9,756.9 79.9,757.0 80.9,756.6 81.9,756.8 82.9,756.8 83.9,756.9 84.9,757.0 85.9,757.0 86.9,756.8 87.9,756.8 88.9,756.9 89.9,756.8 90.9,757.0 91.9,756.9 92.9,756.7 93.9,756.6 94.9,756.8 95.9,757.0 96.9,756.9 97.9,756.9 98.9,756.7 99.9,756.7 100.9,756.8 101.9,756.7 102.9,756.7 103.9,756.6 104.9,756.8 105.9,757.0 106.9,756.9 107.9,756.8 108.9,756.7 109.9,757.0 110.9,756.8 111.9,756.7 112.9,756.9 113.9,756.9 114.9,756.6 115.9,756.7 116.9,756.8 117.9,757.0 118.9,756.7 119.9,756.8 120.9,757.0 121.9,757.0 122.9,756.9 123.9,756.6 124.9,757.0 125.9,756.6 126.9,756.9 127.9,756.6 128.9,756.8 129.9,756.9 130.9,757.0 131.9,757.0 132.9,756.7 133.9,756.8 134.9,756.9 135.9,756.9 136.9,756.7 137.9,756.7 138.9,756.8 139.9,756.7 140.9,756.6 141.9,756.8 142.9,756.6 143.9,756.7 144.9,756.9 145.9,757.0 146.9,756.9 147.9,756.9 148.9,756.7 149.9,756.7 150.9,756.7 151.9,756.8 152.9,756.6 153.9,756.7 154.9,756.7 155.9,756.7 156.9,757.0 157.9,756.7 158.9,756.6 159.9,756.9 160.9,756.7 161.9,756.9 162.9,756.8 163.9,757.0 164.9,756.6 165.9,757.0 166.9,756.8 167.9,757.0 168.9,756.8 169.9,757.0 170.9,756.7 171.9,756.8 172.9,756.8 173.9,756.8 174.9,756.7 175.9,756.7 176.9,756.7 177.9,757.0 178.9,756.9 179.9,756.9 180.9,756.8 181.9,756.8 182.9,756.7 183.9,756.6 184.9,756.7 185.9,757.0 186.9,756.9 187.9,756.8 188.9,756.8 189.9,756.8 190.9,756.6 191.9,756.6 192.9,757.0 193.9,756.8 194.9,757.0 195.9,756.8 196.9,756.7 197.9,756.8 198.9,756.7 199.9,756.8 200.9,756.7 201.9,756.8 202.9,756.7 203.9,756.8 204.9,756.8 205.9,757.0 206.9,756.7 207.9,756.6 208.9,756.9 209.9,756.8 210.9,757.0 211.9,756.9 212.9,756.6 213.9,757.0 214.9,756.9 215.9,756.6 216.9,756.9 217.9,756.8 218.9,756.6 219.9,756.7 220.9,756.8 221.9,756.1 222.9,756.8 223.9,756.9 224.9,756.8 225.9,756.9 226.9,756.9 227.9,756.7 228.9,756.8 229.9,756.9 230.9,756.8 231.9,756.7 232.9,756.8 233.9,756.8 234.9,756.9 235.9,757.0 236.9,757.0 237.9,756.9 238.9,756.8 239.9,756.7 240.9,756.7 241.9,756.6 242.9,756.7 243.9,756.7 244.9,756.9 245.9,756.8 246.9,756.2 247.9,756.9 248.9,756.8 249.9,756.7 250.9,757.0 251.9,756.7 252.9,756.9 253.9,756.6 254.9,756.9 255.9,755.9 256.9,756.8 257.9,756.8 258.9,756.7 259.9,756.9 260.9,756.8 261.9,756.9 262.9,756.8 263.9,756.9 264.9,757.0 265.9,757.0 266.9,756.7 267.9,756.9 268.9,757.0 269.9,756.6 270.9,756.9 271.9,757.0 272.9,756.9 273.9,756.7 274.9,756.7 275.9,756.9 276.9,756.8 277.9,756.9 278.9,756.8 279.9,756.6 280.9,757.0 281.9,756.9 282.9,756.9 283.9,757.0 284.9,756.7 285.9,756.6 286.9,756.8 287.9,756.9 288.9,757.0 289.9,756.6 290.9,756.9 291.9,756.7 292.9,756.7 293.9,756.9 294.9,756.6 295.9,756.8 296.9,756.8 297.9,757.0 298.9,756.9 299.9,756.7 300.9,756.7 301.9,757.0 302.9,756.9 303.9,756.8 304.9,756.9 305.9,757.0 306.9,756.9 307.9,756.7 308.9,756.7 309.9,756.7 310.9,756.8 311.9,756.6 312.9,756.9 313.9,756.7 314.9,756.7 315.9,756.7 316.9,756.7 317.9,757.0 318.9,756.8 319.9,756.6 320.9,756.9 321.9,756.2 322.9,756.9 323.9,756.9 324.9,756.9 325.9,757.0 326.9,756.7 327.9,756.9 328.9,756.9 329.9,757.0 330.9,756.9 331.9,756.8 332.9,756.9 333.9,756.8 334.9,756.7 335.9,756.8 336.9,756.7 337.9,756.7 338.9,756.9 339.9,756.7 340.9,756.7 341.9,756.8 342.9,757.0 343.9,756.8 344.9,756.8 345.9,757.0 346.9,756.9 347.9,756.7 348.9,756.9 349.9,756.8 350.9,756.7 351.9,756.9 352.9,756.8 353.9,756.6 354.9,757.0 355.9,756.6 356.9,756.7 357.9,756.9 358.9,756.8 359.9,756.8 360.9,756.9 361.9,757.0 362.9,757.0 363.9,756.7 364.9,756.9 365.9,756.7 366.9,756.8 367.9,756.7 368.9,756.8 369.9,756.7 370.9,756.0 371.9,756.8 372.9,756.7 373.9,756.9 374.9,756.9 375.9,756.8 376.9,756.8 377.9,757.0 378.9,756.8 379.9,756.7 380.9,756.7 381.9,756.9 382.9,756.7 383.9,757.0 384.9,756.6 385.9,756.6 386.9,756.9 387.9,756.8 388.9,756.9 389.9,756.8 390.9,756.7 391.9,756.9 392.9,756.8 393.9,756.7 394.9,756.6 395.9,757.0 396.9,756.9 397.9,756.7 398.9,756.9 399.9,756.8 400.9,756.8 401.9,756.7 402.9,756.8 403.9,756.6 404.9,757.0 405.9,756.8 406.9,756.2 407.9,756.7 408.9,757.0 409.9,756.8 410.9,756.7 411.9,757.0 412.9,756.8 413.9,756.8 414.9,756.9 415.9,756.9 416.9,756.6 417.9,756.6 418.9,756.9 419.9,756.9 420.9,756.6 421.9,756.9 422.9,756.8 423.9,756.6 424.9,756.7 425.9,756.8 426.9,756.8 427.9,756.6 428.9,757.0 429.9,756.7 430.9,756.8 431.9,757.0 432.9,756.7 433.9,756.9 434.9,757.0 435.9,756.7 436.9,756.7 437.9,756.9 438.9,756.6 439.9,757.0 440.9,756.7 441.9,756.7 442.9,756.3 443.9,756.8 444.9,756.9 445.9,756.7 446.9,756.6 447.9,756.8 448.9,756.7 449.9,756.8 450.9,756.6 451.9,756.7 452.9,756.8 453.9,756.9 454.9,756.9 455.9,756.7 456.9,756.7 457.9,756.9 458.9,757.0 459.9,756.1 460.9,756.7 461.9,756.8 462.9,756.8 463.9,756.8 464.9,756.9 465.9,756.9 466.9,756.8 467.9,757.0 468.9,757.0 469.9,756.9 470.9,756.7 471.9,756.6 472.9,756.7 473.9,756.7 474.9,756.8 475.9,756.6 476.9,756.9 477.9,756.9 478.9,757.0 479.9,756.9 480.9,756.8 481.9,757.0 482.9,756.8 483.9,756.9 484.9,756.9 485.9,756.7 486.9,756.7 487.9,756.7 488.9,756.9 489.9,757.0 490.9,756.6 491.9,756.8 492.9,756.7 493.9,756.6 494.9,756.7 495.9,757.0 496.9,756.7 497.9,757.0 498.9,756.9 499.9,757.0 500.9,756.8 501.9,756.6 502.9,756.8 503.9,756.9 504.9,756.7 505.9,757.0 506.9,756.9 507.9,756.9 508.9,756.7 509.9,756.7 510.9,756.6 511.9,756.7 512.9,757.0 513.9,756.7 514.9,756.9 515.9,756.8 516.9,756.8 517.9,756.7 518.9,756.9 519.9,756.9 520.9,756.7 521.9,756.6 522.9,756.8 523.9,756.9 524.9,757.0 525.9,756.9 526.9,756.9 527.9,757.0 528.9,756.7 529.9,756.9 530.9,756.8 531.9,757.0 532.9,756.8 533.9,757.0 534.9,756.8 535.9,756.8 536.9,756.8 537.9,756.8 538.9,756.6 539.9,756.9 540.9,756.8 541.9,756.8 542.9,756.9 543.9,756.7 544.9,756.9 545.9,756.8 546.9,756.9 547.9,756.7 548.9,756.8 549.9,756.8 550.9,756.9 551.9,756.6 552.9,756.6 553.9,756.6 554.9,756.6 555.9,756.8 556.9,756.9 557.9,756.6 557.9,761.1 556.9,761.0 555.9,761.1 554.9,761.1 553.9,761.1 552.9,761.1 551.9,761.2 550.9,761.3 549.9,761.0 548.9,761.2 547.9,761.3 546.9,761.3 545.9,761.2 544.9,760.9 543.9,761.3 542.9,761.1 541.9,760.9 540.9,760.9 539.9,761.2 538.9,761.0 537.9,761.0 536.9,761.3 535.9,761.0 534.9,760.9 533.9,761.1 532.9,761.2 531.9,761.0 530.9,760.9 529.9,760.9 528.9,761.0 527.9,761.1 526.9,760.9 525.9,761.3 524.9,760.9 523.9,761.0 522.9,761.2 521.9,761.2 520.9,761.1 519.9,761.0 518.9,761.3 517.9,761.1 516.9,761.2 515.9,761.3 514.9,761.0 513.9,761.3 512.9,761.0 511.9,761.1 510.9,761.0 509.9,761.1 508.9,761.1 507.9,761.0 506.9,760.9 505.9,760.9 504.9,761.1 503.9,761.0 502.9,761.1 501.9,761.2 500.9,761.0 499.9,761.2 498.9,761.2 497.9,761.0 496.9,761.3 495.9,761.2 494.9,761.0 493.9,761.1 492.9,761.1 491.9,761.2 490.9,760.9 489.9,761.2 488.9,761.2 487.9,761.3 486.9,761.3 485.9,761.1 484.9,761.1 483.9,761.0 482.9,760.9 481.9,762.3 480.9,761.1 479.9,761.2 478.9,761.0 477.9,761.0 476.9,760.9 475.9,761.2 474.9,762.2 473.9,760.9 472.9,761.0 471.9,761.3 470.9,761.1 469.9,761.1 468.9,761.3 467.9,761.1 466.9,761.2 465.9,761.1 464.9,761.3 463.9,760.9 462.9,761.3 461.9,761.3 460.9,761.0 459.9,761.0 458.9,761.1 457.9,761.0 456.9,761.0 455.9,761.2 454.9,761.2 453.9,761.0 452.9,761.2 451.9,761.2 450.9,760.9 449.9,761.1 448.9,761.1 447.9,761.1 446.9,761.0 445.9,761.2 444.9,761.2 443.9,761.0 442.9,761.2 441.9,761.1 440.9,761.0 439.9,761.2 438.9,761.1 437.9,761.2 436.9,761.2 435.9,760.9 434.9,761.0 433.9,761.0 432.9,761.1 431.9,761.1 430.9,761.3 429.9,761.0 428.9,761.0 427.9,761.2 426.9,761.2 425.9,761.0 424.9,761.2 423.9,761.3 422.9,761.3 421.9,761.2 420.9,761.2 419.9,761.0 418.9,761.2 417.9,761.1 416.9,761.0 415.9,760.9 414.9,760.9 413.9,761.3 412.9,761.0 411.9,761.1 410.9,761.1 409.9,761.2 408.9,761.2 407.9,761.0 406.9,761.0 405.9,761.3 404.9,761.1 403.9,761.1 402.9,761.3 401.9,760.9 400.9,760.9 399.9,761.2 398.9,761.0 397.9,761.3 396.9,761.2 395.9,761.2 394.9,761.2 393.9,760.9 392.9,761.0 391.9,761.0 390.9,761.2 389.9,761.2 388.9,761.0 387.9,761.1 386.9,760.9 385.9,761.0 384.9,760.9 383.9,760.9 382.9,761.1 381.9,761.0 380.9,761.3 379.9,761.0 378.9,761.2 377.9,761.2 376.9,761.3 375.9,761.0 374.9,760.9 373.9,760.9 372.9,761.3 371.9,760.9 370.9,761.0 369.9,760.9 368.9,761.1 367.9,761.3 366.9,761.0 365.9,761.0 364.9,761.0 363.9,761.0 362.9,761.1 361.9,761.0 360.9,761.2 359.9,761.2 358.9,761.1 357.9,761.0 356.9,761.0 355.9,760.9 354.9,761.2 353.9,761.1 352.9,761.3 351.9,760.9 350.9,761.3 349.9,761.2 348.9,760.9 347.9,761.2 346.9,760.9 345.9,761.0 344.9,761.0 343.9,761.0 342.9,761.1 341.9,761.0 340.9,761.0 339.9,761.3 338.9,761.3 337.9,761.2 336.9,761.2 335.9,761.2 334.9,761.3 333.9,761.1 332.9,761.2 331.9,761.2 330.9,761.1 329.9,761.2 328.9,761.5 327.9,761.2 326.9,761.3 325.9,761.0 324.9,761.2 323.9,761.2 322.9,761.1 321.9,761.3 320.9,761.1 319.9,761.0 318.9,761.1 317.9,761.1 316.9,761.0 315.9,761.2 314.9,761.1 313.9,761.0 312.9,761.1 311.9,761.0 310.9,760.9 309.9,761.0 308.9,761.0 307.9,761.3 306.9,760.9 305.9,761.2 304.9,761.0 303.9,761.9 302.9,761.3 301.9,761.0 300.9,761.2 299.9,761.2 298.9,761.1 297.9,761.1 296.9,761.1 295.9,761.2 294.9,761.1 293.9,761.2 292.9,761.2 291.9,760.9 290.9,761.3 289.9,761.1 288.9,761.1 287.9,761.1 286.9,761.9 285.9,760.9 284.9,761.0 283.9,761.1 282.9,761.0 281.9,761.3 280.9,761.3 279.9,761.1 278.9,761.3 277.9,761.0 276.9,761.0 275.9,761.3 274.9,760.9 273.9,761.3 272.9,761.1 271.9,761.2 270.9,761.3 269.9,761.2 268.9,761.1 267.9,761.1 266.9,761.1 265.9,761.7 264.9,761.3 263.9,761.7 262.9,761.1 261.9,761.3 260.9,761.1 259.9,761.0 258.9,761.2 257.9,761.3 256.9,761.1 255.9,760.9 254.9,761.3 253.9,761.3 252.9,761.0 251.9,761.0 250.9,760.9 249.9,761.1 248.9,760.9 247.9,761.3 246.9,761.3 245.9,761.1 244.9,760.9 243.9,761.3 242.9,761.3 241.9,761.1 240.9,761.0 239.9,761.2 238.9,761.1 237.9,760.9 236.9,761.2 235.9,761.1 234.9,761.3 233.9,761.3 232.9,761.3 231.9,761.1 230.9,761.2 229.9,760.9 228.9,761.0 227.9,761.2 226.9,761.2 225.9,760.9 224.9,761.3 223.9,761.0 222.9,761.1 221.9,760.9 220.9,760.9 219.9,760.9 218.9,761.1 217.9,761.1 216.9,762.6 215.9,760.9 214.9,760.9 213.9,761.3 212.9,761.0 211.9,761.1 210.9,761.2 209.9,761.2 208.9,761.1 207.9,761.0 206.9,761.9 205.9,761.2 204.9,761.1 203.9,761.1 202.9,761.1 201.9,761.0 200.9,761.0 199.9,761.0 198.9,761.3 197.9,760.9 196.9,761.3 195.9,761.2 194.9,761.2 193.9,761.2 192.9,761.3 191.9,761.1 190.9,761.1 189.9,761.2 188.9,761.0 187.9,761.3 186.9,761.0 185.9,761.1 184.9,761.0 183.9,761.2 182.9,761.0 181.9,761.2 180.9,761.0 179.9,761.3 178.9,761.2 177.9,760.9 176.9,761.0 175.9,761.1 174.9,761.0 173.9,761.0 172.9,761.1 171.9,761.1 170.9,761.2 169.9,761.2 168.9,761.1 167.9,761.2 166.9,761.0 165.9,761.0 164.9,761.0 163.9,760.9 162.9,761.1 161.9,761.2 160.9,761.2 159.9,761.1 158.9,761.2 157.9,761.1 156.9,761.1 155.9,761.1 154.9,762.5 153.9,761.3 152.9,761.3 151.9,761.0 150.9,760.9 149.9,761.2 148.9,761.1 147.9,761.0 146.9,761.2 145.9,760.9 144.9,761.1 143.9,761.2 142.9,761.0 141.9,761.2 140.9,761.2 139.9,761.1 138.9,761.0 137.9,761.1 136.9,761.2 135.9,761.1 134.9,761.1 133.9,761.1 132.9,761.2 131.9,761.0 130.9,761.2 129.9,761.2 128.9,761.0 127.9,761.1 126.9,761.2 125.9,761.2 124.9,761.2 123.9,761.0 122.9,761.2 121.9,761.0 120.9,761.0 119.9,762.0 118.9,761.3 117.9,761.8 116.9,760.9 115.9,761.1 114.9,760.9 113.9,760.9 112.9,761.1 111.9,761.0 110.9,761.1 109.9,761.0 108.9,761.0 107.9,761.1 106.9,761.1 105.9,761.1 104.9,761.0 103.9,761.1 102.9,761.0 101.9,761.2 100.9,761.0 99.9,761.3 98.9,760.9 97.9,761.2 96.9,761.2 95.9,761.0 94.9,760.9 93.9,761.1 92.9,761.0 91.9,760.9 90.9,760.9 89.9,760.9 88.9,760.9 87.9,761.3 86.9,761.0 85.9,761.1 84.9,761.0 83.9,761.0 82.9,761.1 81.9,761.1 80.9,761.2 79.9,761.0 78.9,761.0 77.9,761.1 76.9,761.2 75.9,761.0 74.9,761.2 73.9,761.1 72.9,761.3 71.9,760.9 70.9,761.0 69.9,761.0 68.9,761.0 67.9,761.1 66.9,761.0 65.9,761.1 64.9,761.3 63.9,761.2 62.9,761.3 61.9,761.0 60.9,761.2 59.9,760.9 58.9,760.9 57.9,761.3 56.9,761.2 55.9,761.1 54.9,761.0 53.9,761.2 52.9,761.3 51.9,761.1 50.9,761.1 49.9,761.1 48.9,761.3 47.9,761.1 46.9,761.1 45.9,760.9 44.9,761.3 43.9,761.1 42.9,761.1 41.9,761.1 40.9,761.2 39.9,761.1 38.9,761.1 37.9,761.2 36.9,760.9 35.9,761.0 34.9,761.0 33.9,761.0 32.9,761.2 31.9,761.0 30.9,761.0 29.9,761.1 28.9,761.1 27.9,761.2 26.9,761.2 25.9,761.0 24.9,761.2 23.9,761.3 22.9,761.1 21.9,760.9 20.9,761.2 19.9,762.0 18.9,761.1 17.9,761.3 16.9,761.0 15.9,761.1 14.9,761.2 13.9,761.1 12.9,761.2 11.9,761.3 10.9,761.3 9.9,761.2 8.9,761.0 7.9,761.0 6.9,761.0 5.9,761.2 4.9,761.3 3.9,761.3"/><polygon points="558.2,757 559.6,757 561.2,712 562.4,680 563.7,666 565.2,663.5 569.0,663 569.9,668 570.2,760 570.6,845 569.2,849 569.0,760 568.6,670 565.6,670.5 564.5,674 563.0,700 560.4,760 558.2,761"/><polygon points="570.0,845.0 571.0,845.0 572.0,844.7 573.0,844.8 574.0,844.8 575.0,844.9 576.0,845.1 577.0,844.8 578.0,844.8 579.0,844.7 580.0,844.8 581.0,845.0 582.0,844.8 583.0,844.9 584.0,844.9 585.0,844.8 586.0,845.1 587.0,844.8 588.0,844.8 589.0,844.8 590.0,844.7 591.0,844.8 592.0,844.9 593.0,844.9 594.0,844.7 595.0,845.1 596.0,844.9 597.0,844.9 598.0,844.6 599.0,845.1 600.0,844.9 601.0,844.7 602.0,844.7 603.0,844.9 604.0,844.7 605.0,845.0 606.0,844.7 607.0,844.8 608.0,844.9 609.0,845.0 610.0,845.0 611.0,845.0 612.0,845.0 613.0,845.1 614.0,844.8 615.0,845.0 616.0,844.7 617.0,844.9 618.0,844.8 619.0,845.0 620.0,844.8 621.0,845.0 622.0,844.9 623.0,844.8 624.0,845.0 625.0,844.9 626.0,845.1 627.0,844.7 628.0,844.8 629.0,844.7 630.0,844.0 631.0,844.7 632.0,844.7 633.0,844.7 634.0,844.9 635.0,845.0 636.0,844.7 637.0,844.8 638.0,844.7 639.0,845.0 640.0,844.9 641.0,844.8 642.0,844.9 643.0,845.0 644.0,844.8 645.0,844.8 646.0,844.9 647.0,845.1 648.0,844.7 649.0,844.8 650.0,845.0 651.0,844.6 652.0,845.1 653.0,845.1 654.0,845.0 655.0,845.1 656.0,844.8 657.0,844.8 658.0,844.7 659.0,844.1 660.0,845.1 661.0,844.9 662.0,844.7 663.0,845.0 664.0,844.6 665.0,844.8 666.0,844.8 667.0,844.6 668.0,844.9 669.0,844.8 670.0,845.0 671.0,844.7 672.0,844.6 673.0,844.7 674.0,844.9 675.0,845.0 676.0,845.1 677.0,844.9 678.0,845.0 679.0,844.8 680.0,845.0 681.0,845.1 682.0,844.8 683.0,844.8 684.0,845.1 685.0,844.8 686.0,845.0 687.0,845.0 688.0,845.0 689.0,844.6 690.0,845.0 691.0,844.7 692.0,844.4 693.0,844.8 694.0,844.7 695.0,844.9 696.0,844.7 697.0,845.0 698.0,844.9 699.0,844.8 700.0,844.7 701.0,844.8 702.0,844.8 703.0,844.8 704.0,844.7 705.0,844.7 706.0,845.1 707.0,844.7 708.0,844.6 709.0,844.6 710.0,844.7 711.0,845.0 712.0,845.1 713.0,844.7 714.0,844.9 715.0,844.9 716.0,845.1 717.0,845.0 718.0,844.9 719.0,844.7 720.0,843.7 721.0,844.7 722.0,844.9 723.0,844.7 724.0,844.8 725.0,844.2 726.0,844.7 727.0,845.1 728.0,844.8 729.0,844.9 730.0,845.0 731.0,844.7 732.0,844.9 733.0,844.7 734.0,844.7 735.0,844.9 736.0,844.7 737.0,844.8 738.0,844.6 739.0,844.6 740.0,844.9 741.0,844.9 742.0,844.7 743.0,844.6 744.0,844.6 745.0,844.8 746.0,844.6 747.0,845.1 748.0,844.7 749.0,844.8 750.0,844.8 751.0,844.7 752.0,844.0 753.0,844.1 754.0,844.6 755.0,843.7 756.0,845.0 757.0,844.8 758.0,844.8 759.0,844.7 760.0,845.0 761.0,845.0 762.0,844.9 763.0,844.8 764.0,844.7 765.0,845.0 766.0,844.9 767.0,845.0 768.0,845.1 769.0,845.0 770.0,844.8 771.0,844.9 772.0,844.6 773.0,844.6 774.0,844.8 775.0,844.8 776.0,844.9 777.0,845.0 778.0,844.7 779.0,844.9 780.0,844.6 781.0,844.8 782.0,843.9 783.0,845.0 784.0,844.8 785.0,844.9 786.0,845.0 787.0,845.0 788.0,844.9 789.0,844.7 790.0,845.1 791.0,845.0 792.0,844.6 793.0,844.8 794.0,845.1 795.0,844.9 796.0,844.9 797.0,845.1 798.0,844.7 799.0,844.8 800.0,844.9 801.0,844.8 802.0,845.0 803.0,844.2 804.0,844.6 805.0,845.0 806.0,844.9 807.0,844.8 808.0,844.6 809.0,844.8 810.0,844.7 811.0,844.6 812.0,844.1 813.0,845.1 814.0,845.1 815.0,844.9 816.0,844.7 817.0,844.8 818.0,845.1 819.0,844.7 820.0,844.7 821.0,844.6 822.0,845.1 823.0,844.9 824.0,845.0 825.0,845.0 826.0,844.8 827.0,844.9 828.0,845.1 829.0,844.7 830.0,845.0 831.0,845.1 832.0,844.7 833.0,845.0 834.0,844.8 835.0,844.7 836.0,843.8 837.0,845.0 838.0,844.7 839.0,845.0 840.0,843.5 841.0,844.1 842.0,845.0 843.0,844.6 844.0,844.9 845.0,844.6 846.0,844.8 847.0,844.8 848.0,844.7 849.0,844.9 850.0,844.8 851.0,844.8 852.0,844.6 853.0,844.6 854.0,844.9 855.0,844.9 856.0,844.8 857.0,844.7 858.0,844.9 859.0,844.9 860.0,845.0 861.0,844.9 862.0,844.7 863.0,844.8 864.0,844.8 865.0,844.6 866.0,844.6 867.0,844.7 868.0,845.0 869.0,844.9 870.0,844.6 871.0,845.1 872.0,844.6 873.0,844.8 874.0,844.9 875.0,845.0 876.0,844.7 877.0,844.6 878.0,845.1 879.0,844.9 880.0,845.0 881.0,844.8 882.0,844.7 883.0,845.1 884.0,844.7 885.0,844.7 886.0,844.6 887.0,845.0 888.0,845.0 889.0,844.7 890.0,844.9 891.0,844.8 892.0,845.1 893.0,844.8 894.0,844.6 895.0,844.8 896.0,844.8 897.0,844.9 898.0,844.7 899.0,844.8 900.0,844.7 901.0,844.7 902.0,845.0 903.0,844.8 904.0,844.7 905.0,844.7 906.0,843.6 907.0,844.9 908.0,844.7 909.0,845.1 910.0,844.8 911.0,844.7 912.0,844.7 913.0,844.9 914.0,845.1 915.0,845.0 916.0,844.8 917.0,844.8 918.0,844.9 919.0,845.0 920.0,844.7 921.0,844.9 922.0,845.1 923.0,844.6 924.0,844.9 925.0,844.7 926.0,845.1 927.0,844.8 928.0,844.8 929.0,845.0 930.0,844.9 931.0,845.1 932.0,844.9 933.0,844.8 934.0,844.8 935.0,844.6 936.0,843.8 937.0,844.8 938.0,844.6 939.0,845.0 940.0,844.9 941.0,844.7 942.0,845.0 943.0,844.7 944.0,845.1 945.0,844.9 946.0,844.8 947.0,844.6 948.0,844.8 949.0,845.0 950.0,844.7 951.0,844.7 952.0,844.7 953.0,844.9 954.0,844.7 955.0,845.1 956.0,844.6 957.0,844.7 958.0,845.0 959.0,844.6 960.0,844.8 961.0,844.8 962.0,845.1 963.0,844.9 964.0,844.8 965.0,844.6 966.0,844.8 967.0,845.0 968.0,844.8 969.0,844.9 970.0,844.7 971.0,844.9 972.0,844.8 972.0,850.5 971.0,850.4 970.0,850.3 969.0,851.2 968.0,850.4 967.0,850.3 966.0,850.3 965.0,850.4 964.0,850.6 963.0,850.5 962.0,850.3 961.0,850.4 960.0,850.6 959.0,850.3 958.0,850.5 957.0,850.2 956.0,850.7 955.0,850.4 954.0,850.3 953.0,850.6 952.0,850.6 951.0,850.7 950.0,850.7 949.0,850.2 948.0,850.7 947.0,850.5 946.0,850.5 945.0,850.6 944.0,851.5 943.0,851.8 942.0,850.4 941.0,850.4 940.0,850.4 939.0,850.3 938.0,850.5 937.0,850.6 936.0,850.6 935.0,850.2 934.0,850.3 933.0,850.6 932.0,850.5 931.0,850.7 930.0,850.4 929.0,850.2 928.0,851.0 927.0,850.3 926.0,850.6 925.0,850.4 924.0,850.2 923.0,850.6 922.0,850.5 921.0,850.6 920.0,850.6 919.0,850.5 918.0,851.2 917.0,850.5 916.0,850.7 915.0,850.4 914.0,850.3 913.0,850.4 912.0,850.5 911.0,851.7 910.0,850.7 909.0,850.3 908.0,850.6 907.0,850.3 906.0,850.3 905.0,850.4 904.0,850.5 903.0,850.3 902.0,850.5 901.0,850.4 900.0,850.7 899.0,850.6 898.0,851.5 897.0,850.6 896.0,850.5 895.0,850.3 894.0,850.6 893.0,850.4 892.0,850.4 891.0,850.4 890.0,850.5 889.0,850.3 888.0,850.3 887.0,850.5 886.0,850.3 885.0,850.5 884.0,850.3 883.0,850.2 882.0,850.3 881.0,850.4 880.0,850.4 879.0,850.2 878.0,850.7 877.0,850.4 876.0,850.4 875.0,850.5 874.0,850.7 873.0,850.6 872.0,850.4 871.0,850.6 870.0,850.7 869.0,850.3 868.0,850.7 867.0,850.2 866.0,850.5 865.0,850.2 864.0,850.3 863.0,850.4 862.0,850.3 861.0,850.6 860.0,850.4 859.0,850.6 858.0,850.5 857.0,850.4 856.0,850.5 855.0,850.2 854.0,850.5 853.0,850.7 852.0,850.4 851.0,850.3 850.0,850.3 849.0,850.3 848.0,850.4 847.0,850.5 846.0,850.3 845.0,850.4 844.0,850.5 843.0,850.5 842.0,850.4 841.0,850.6 840.0,850.2 839.0,850.7 838.0,850.6 837.0,850.6 836.0,850.6 835.0,850.2 834.0,850.2 833.0,850.6 832.0,850.5 831.0,851.5 830.0,850.4 829.0,850.5 828.0,850.5 827.0,851.8 826.0,850.3 825.0,850.6 824.0,850.6 823.0,850.7 822.0,850.4 821.0,850.5 820.0,850.2 819.0,850.5 818.0,850.3 817.0,850.5 816.0,850.3 815.0,850.6 814.0,850.7 813.0,850.6 812.0,850.6 811.0,850.7 810.0,850.5 809.0,850.5 808.0,850.6 807.0,850.4 806.0,850.7 805.0,850.6 804.0,850.3 803.0,850.2 802.0,850.4 801.0,850.7 800.0,850.7 799.0,850.3 798.0,850.4 797.0,850.4 796.0,850.5 795.0,850.5 794.0,852.1 793.0,850.7 792.0,850.6 791.0,850.2 790.0,850.5 789.0,850.4 788.0,850.4 787.0,850.6 786.0,850.4 785.0,850.7 784.0,850.4 783.0,850.4 782.0,850.6 781.0,850.2 780.0,850.3 779.0,850.5 778.0,850.5 777.0,850.3 776.0,850.4 775.0,850.5 774.0,850.3 773.0,850.6 772.0,850.4 771.0,850.4 770.0,850.5 769.0,850.5 768.0,850.5 767.0,850.6 766.0,851.6 765.0,850.2 764.0,850.3 763.0,850.7 762.0,850.4 761.0,850.6 760.0,850.3 759.0,850.6 758.0,850.6 757.0,850.6 756.0,850.6 755.0,851.3 754.0,850.6 753.0,851.8 752.0,850.7 751.0,850.6 750.0,850.7 749.0,850.4 748.0,850.4 747.0,850.5 746.0,850.4 745.0,850.3 744.0,850.2 743.0,850.4 742.0,850.6 741.0,850.7 740.0,850.5 739.0,850.9 738.0,850.7 737.0,850.7 736.0,850.3 735.0,850.2 734.0,850.4 733.0,850.4 732.0,851.3 731.0,850.5 730.0,850.5 729.0,850.6 728.0,851.5 727.0,850.5 726.0,850.5 725.0,850.5 724.0,850.6 723.0,850.6 722.0,850.3 721.0,850.7 720.0,850.6 719.0,850.3 718.0,850.4 717.0,850.5 716.0,850.6 715.0,850.4 714.0,850.6 713.0,850.3 712.0,850.7 711.0,850.3 710.0,850.5 709.0,850.3 708.0,850.5 707.0,850.4 706.0,850.6 705.0,851.2 704.0,850.6 703.0,850.4 702.0,850.6 701.0,850.6 700.0,850.3 699.0,850.6 698.0,850.8 697.0,850.5 696.0,851.9 695.0,850.3 694.0,850.7 693.0,850.6 692.0,850.6 691.0,850.6 690.0,850.6 689.0,850.7 688.0,850.6 687.0,850.3 686.0,851.2 685.0,850.6 684.0,850.4 683.0,850.5 682.0,850.4 681.0,850.3 680.0,850.7 679.0,850.4 678.0,850.7 677.0,850.4 676.0,850.6 675.0,850.5 674.0,850.7 673.0,850.3 672.0,850.6 671.0,850.3 670.0,850.4 669.0,850.6 668.0,850.4 667.0,850.4 666.0,850.5 665.0,850.5 664.0,850.3 663.0,850.6 662.0,850.7 661.0,850.2 660.0,850.2 659.0,850.4 658.0,850.3 657.0,850.3 656.0,851.2 655.0,850.3 654.0,850.6 653.0,850.3 652.0,850.3 651.0,850.4 650.0,850.6 649.0,850.5 648.0,850.4 647.0,850.4 646.0,850.6 645.0,850.7 644.0,850.3 643.0,850.5 642.0,850.4 641.0,850.6 640.0,850.6 639.0,850.3 638.0,850.7 637.0,850.6 636.0,850.6 635.0,850.5 634.0,850.6 633.0,850.4 632.0,851.3 631.0,850.3 630.0,850.4 629.0,850.4 628.0,850.2 627.0,850.3 626.0,850.3 625.0,850.3 624.0,850.5 623.0,850.5 622.0,850.5 621.0,850.3 620.0,850.4 619.0,850.7 618.0,850.6 617.0,850.7 616.0,850.5 615.0,850.7 614.0,850.4 613.0,850.3 612.0,850.3 611.0,850.7 610.0,850.3 609.0,850.5 608.0,850.2 607.0,850.7 606.0,850.5 605.0,851.4 604.0,850.6 603.0,850.6 602.0,850.4 601.0,850.3 600.0,850.4 599.0,850.7 598.0,850.2 597.0,851.2 596.0,850.6 595.0,850.6 594.0,850.2 593.0,850.4 592.0,851.9 591.0,850.7 590.0,850.2 589.0,850.6 588.0,850.2 587.0,850.4 586.0,850.2 585.0,850.6 584.0,850.2 583.0,850.3 582.0,850.5 581.0,850.5 580.0,850.4 579.0,850.5 578.0,850.5 577.0,850.4 576.0,850.3 575.0,850.3 574.0,850.6 573.0,850.6 572.0,851.7 571.0,850.3 570.0,850.4"/><polygon points="1002.2,844.9 1003.2,844.6 1004.2,844.9 1005.2,844.8 1006.2,844.9 1007.2,844.6 1008.2,845.0 1009.2,844.9 1010.2,844.8 1011.2,845.1 1012.2,845.0 1013.2,844.7 1014.2,844.8 1015.2,844.9 1016.2,845.0 1017.2,844.9 1018.2,844.7 1019.2,844.0 1020.2,844.6 1021.2,844.9 1022.2,844.6 1023.2,844.7 1024.2,844.9 1025.2,845.0 1026.2,844.2 1027.2,844.9 1028.2,844.7 1029.2,844.8 1030.2,845.0 1031.2,845.1 1032.2,845.0 1033.2,844.3 1034.2,845.1 1035.2,845.0 1036.2,844.6 1037.2,845.0 1038.2,844.6 1039.2,844.7 1040.2,845.1 1041.2,845.0 1042.2,845.1 1043.2,844.9 1044.2,845.1 1045.2,845.0 1046.2,844.9 1047.2,844.8 1048.2,844.9 1049.2,845.0 1050.2,845.1 1051.2,844.9 1052.2,844.7 1053.2,844.7 1054.2,845.0 1055.2,845.0 1056.2,845.1 1057.2,844.7 1058.2,844.6 1059.2,844.7 1060.2,844.8 1061.2,844.9 1062.2,844.7 1063.2,844.7 1064.2,844.8 1065.2,844.8 1066.2,845.0 1067.2,844.9 1068.2,844.9 1069.2,844.6 1070.2,843.8 1071.2,844.8 1072.2,845.0 1073.2,844.7 1074.2,844.6 1075.2,844.9 1076.2,845.1 1077.2,843.6 1078.2,844.7 1079.2,844.8 1080.2,845.0 1081.2,844.7 1082.2,844.9 1083.2,844.6 1084.2,844.9 1085.2,844.8 1086.2,845.0 1087.2,844.9 1088.2,845.0 1089.2,845.0 1090.2,844.7 1091.2,845.0 1092.2,844.7 1093.2,844.9 1094.2,845.1 1095.2,844.9 1096.2,845.1 1097.2,844.9 1098.2,844.8 1099.2,844.8 1100.2,843.9 1101.2,844.6 1102.2,844.9 1103.2,845.1 1104.2,844.7 1105.2,844.7 1106.2,844.6 1107.2,844.8 1108.2,844.8 1109.2,844.7 1110.2,845.0 1111.2,844.7 1112.2,844.8 1113.2,845.0 1114.2,844.7 1115.2,844.7 1116.2,844.9 1117.2,844.8 1118.2,844.9 1119.2,844.9 1120.2,844.9 1121.2,845.1 1122.2,845.0 1123.2,844.8 1124.2,844.9 1125.2,845.1 1126.2,844.7 1127.2,845.0 1128.2,844.1 1129.2,845.0 1130.2,844.6 1131.2,844.8 1132.2,844.9 1133.2,844.9 1134.2,844.6 1135.2,845.0 1136.2,844.9 1137.2,844.9 1138.2,844.9 1139.2,844.7 1140.2,844.7 1141.2,844.8 1142.2,844.9 1143.2,845.1 1144.2,844.9 1145.2,844.7 1146.2,845.0 1147.2,844.7 1148.2,844.8 1149.2,844.6 1150.2,844.8 1151.2,844.9 1152.2,844.6 1153.2,845.0 1154.2,844.8 1155.2,844.7 1156.2,845.0 1157.2,845.0 1158.2,844.7 1159.2,845.1 1160.2,844.8 1161.2,844.8 1162.2,845.0 1163.2,844.9 1164.2,845.0 1165.2,844.6 1166.2,843.8 1167.2,844.8 1168.2,844.7 1169.2,845.1 1170.2,844.9 1171.2,844.8 1172.2,844.8 1173.2,844.9 1174.2,844.7 1175.2,844.7 1176.2,845.0 1177.2,844.9 1178.2,845.0 1179.2,845.1 1180.2,845.0 1181.2,844.7 1182.2,845.1 1183.2,844.8 1184.2,845.1 1185.2,844.8 1186.2,845.0 1187.2,845.1 1188.2,844.9 1189.2,845.0 1190.2,845.0 1191.2,845.0 1192.2,845.0 1193.2,844.9 1194.2,844.8 1195.2,844.6 1196.2,844.9 1197.2,844.8 1198.2,844.7 1199.2,844.9 1200.2,844.7 1201.2,844.8 1202.2,844.9 1203.2,844.9 1204.2,844.8 1205.2,844.7 1206.2,844.9 1207.2,845.0 1208.2,845.0 1209.2,844.7 1210.2,843.7 1211.2,845.0 1212.2,845.1 1213.2,844.8 1214.2,844.8 1215.2,844.8 1216.2,845.1 1217.2,845.0 1218.2,843.7 1219.2,845.1 1220.2,844.6 1221.2,844.5 1222.2,844.6 1223.2,844.9 1224.2,844.7 1225.2,845.0 1226.2,845.1 1227.2,844.7 1228.2,844.8 1229.2,845.0 1230.2,844.8 1231.2,844.7 1232.2,844.9 1233.2,845.0 1234.2,844.7 1235.2,845.0 1236.2,844.6 1237.2,844.8 1238.2,844.7 1239.2,845.1 1240.2,845.0 1241.2,845.0 1242.2,844.8 1243.2,844.6 1244.2,845.1 1245.2,845.0 1246.2,845.0 1247.2,844.8 1248.2,845.0 1249.2,844.7 1250.2,845.0 1251.2,844.9 1252.2,845.0 1253.2,844.7 1254.2,844.8 1255.2,844.7 1256.2,845.0 1257.2,844.8 1258.2,844.7 1259.2,845.1 1260.2,845.0 1261.2,844.7 1262.2,844.7 1263.2,845.0 1264.2,844.8 1265.2,844.0 1266.2,844.7 1267.2,844.8 1268.2,845.1 1269.2,844.8 1270.2,845.0 1271.2,845.1 1272.2,844.9 1273.2,844.6 1274.2,844.9 1275.2,844.9 1276.2,844.9 1277.2,844.6 1278.2,844.7 1279.2,845.0 1280.2,844.8 1281.2,844.7 1282.2,845.0 1283.2,845.0 1284.2,844.9 1285.2,845.0 1286.2,845.1 1287.2,844.8 1288.2,844.6 1289.2,845.1 1290.2,845.1 1291.2,844.7 1292.2,845.0 1293.2,844.7 1294.2,844.6 1295.2,844.6 1296.2,845.0 1297.2,843.9 1298.2,844.9 1299.2,844.8 1300.2,844.8 1301.2,844.6 1302.2,845.0 1303.2,844.6 1304.2,844.7 1305.2,844.7 1306.2,843.7 1307.2,844.7 1308.2,844.7 1309.2,844.6 1310.2,844.9 1311.2,845.0 1312.2,844.7 1313.2,845.0 1314.2,844.9 1315.2,844.7 1316.2,844.7 1317.2,844.9 1318.2,844.7 1319.2,844.7 1320.2,844.6 1321.2,845.0 1322.2,844.8 1323.2,844.7 1324.2,844.7 1325.2,844.6 1326.2,844.6 1327.2,845.0 1328.2,844.6 1329.2,844.7 1330.2,845.1 1331.2,844.9 1332.2,844.9 1333.2,844.9 1334.2,844.6 1335.2,844.8 1336.2,844.8 1337.2,845.0 1338.2,844.9 1339.2,844.2 1340.2,845.0 1341.2,844.8 1342.2,845.0 1343.2,845.0 1344.2,844.7 1345.2,844.8 1346.2,844.7 1347.2,844.7 1348.2,845.0 1349.2,844.9 1350.2,845.1 1351.2,843.6 1352.2,844.6 1353.2,844.7 1354.2,844.6 1355.2,844.8 1356.2,844.8 1357.2,844.8 1358.2,844.7 1359.2,844.9 1360.2,844.8 1361.2,844.6 1362.2,844.8 1363.2,844.8 1364.2,845.0 1365.2,845.1 1366.2,844.9 1367.2,844.9 1368.2,845.0 1369.2,845.0 1370.2,844.8 1371.2,844.6 1372.2,844.9 1373.2,844.9 1374.2,844.8 1375.2,845.1 1376.2,844.9 1377.2,844.7 1378.2,844.6 1379.2,845.0 1380.2,845.0 1381.2,844.8 1382.2,844.9 1383.2,844.8 1384.2,845.0 1385.2,845.1 1386.2,844.6 1387.2,844.9 1388.2,844.7 1389.2,845.0 1390.2,845.1 1391.2,844.8 1392.2,845.0 1393.2,845.0 1394.2,844.6 1395.2,844.8 1396.2,845.0 1397.2,845.1 1398.2,845.0 1399.2,844.1 1400.2,844.9 1401.2,844.8 1403.0,844.9 1403.0,850.3 1401.2,850.5 1400.2,850.4 1399.2,850.5 1398.2,850.4 1397.2,850.5 1396.2,850.4 1395.2,850.3 1394.2,850.3 1393.2,850.3 1392.2,850.4 1391.2,850.6 1390.2,850.3 1389.2,850.4 1388.2,850.6 1387.2,850.4 1386.2,850.4 1385.2,850.3 1384.2,850.4 1383.2,850.5 1382.2,850.6 1381.2,850.3 1380.2,850.5 1379.2,851.2 1378.2,850.6 1377.2,850.4 1376.2,850.6 1375.2,850.5 1374.2,850.4 1373.2,850.4 1372.2,850.5 1371.2,850.5 1370.2,850.4 1369.2,850.7 1368.2,850.5 1367.2,850.5 1366.2,850.3 1365.2,850.6 1364.2,850.6 1363.2,850.6 1362.2,850.3 1361.2,850.6 1360.2,850.6 1359.2,850.5 1358.2,850.4 1357.2,850.4 1356.2,850.3 1355.2,850.5 1354.2,850.6 1353.2,850.4 1352.2,851.7 1351.2,850.4 1350.2,850.3 1349.2,851.9 1348.2,850.3 1347.2,850.3 1346.2,850.4 1345.2,850.6 1344.2,850.4 1343.2,850.4 1342.2,850.5 1341.2,850.7 1340.2,850.2 1339.2,850.5 1338.2,850.4 1337.2,850.3 1336.2,850.3 1335.2,850.6 1334.2,850.6 1333.2,850.4 1332.2,850.5 1331.2,850.3 1330.2,850.6 1329.2,850.6 1328.2,850.3 1327.2,850.6 1326.2,850.5 1325.2,850.5 1324.2,850.4 1323.2,850.7 1322.2,850.3 1321.2,850.4 1320.2,850.5 1319.2,850.5 1318.2,850.6 1317.2,850.6 1316.2,852.2 1315.2,850.6 1314.2,850.4 1313.2,850.4 1312.2,850.7 1311.2,850.5 1310.2,850.4 1309.2,850.6 1308.2,850.6 1307.2,850.5 1306.2,850.4 1305.2,851.2 1304.2,850.4 1303.2,850.6 1302.2,850.3 1301.2,850.7 1300.2,850.6 1299.2,850.3 1298.2,850.4 1297.2,851.9 1296.2,851.8 1295.2,850.5 1294.2,850.4 1293.2,850.6 1292.2,850.6 1291.2,850.6 1290.2,850.4 1289.2,850.7 1288.2,850.6 1287.2,850.4 1286.2,850.2 1285.2,850.4 1284.2,851.1 1283.2,850.7 1282.2,850.4 1281.2,850.5 1280.2,850.4 1279.2,850.2 1278.2,850.5 1277.2,850.7 1276.2,850.3 1275.2,850.4 1274.2,850.6 1273.2,850.3 1272.2,850.6 1271.2,850.2 1270.2,850.6 1269.2,850.4 1268.2,850.7 1267.2,850.6 1266.2,850.2 1265.2,850.5 1264.2,850.6 1263.2,850.3 1262.2,850.2 1261.2,850.4 1260.2,850.3 1259.2,850.7 1258.2,850.6 1257.2,850.5 1256.2,850.6 1255.2,850.5 1254.2,850.6 1253.2,850.6 1252.2,851.5 1251.2,850.4 1250.2,850.6 1249.2,850.6 1248.2,851.7 1247.2,850.6 1246.2,850.4 1245.2,850.2 1244.2,850.3 1243.2,850.6 1242.2,850.6 1241.2,850.3 1240.2,852.2 1239.2,850.4 1238.2,850.3 1237.2,850.4 1236.2,850.6 1235.2,850.4 1234.2,850.5 1233.2,850.5 1232.2,850.6 1231.2,850.5 1230.2,850.3 1229.2,850.5 1228.2,850.4 1227.2,850.3 1226.2,850.4 1225.2,850.5 1224.2,850.2 1223.2,850.3 1222.2,850.4 1221.2,850.6 1220.2,850.4 1219.2,850.3 1218.2,850.6 1217.2,850.4 1216.2,850.6 1215.2,850.5 1214.2,850.6 1213.2,850.5 1212.2,850.3 1211.2,850.4 1210.2,850.4 1209.2,850.6 1208.2,850.6 1207.2,850.4 1206.2,850.3 1205.2,850.3 1204.2,850.6 1203.2,850.2 1202.2,850.4 1201.2,850.4 1200.2,850.6 1199.2,850.3 1198.2,851.6 1197.2,850.4 1196.2,850.5 1195.2,850.4 1194.2,850.7 1193.2,850.4 1192.2,850.3 1191.2,850.4 1190.2,850.7 1189.2,850.4 1188.2,850.6 1187.2,850.7 1186.2,850.7 1185.2,850.3 1184.2,850.2 1183.2,850.5 1182.2,852.0 1181.2,851.3 1180.2,850.2 1179.2,850.3 1178.2,850.3 1177.2,850.3 1176.2,850.6 1175.2,850.6 1174.2,852.1 1173.2,850.4 1172.2,850.3 1171.2,850.4 1170.2,850.2 1169.2,850.4 1168.2,850.5 1167.2,852.0 1166.2,850.5 1165.2,850.7 1164.2,850.5 1163.2,850.4 1162.2,852.3 1161.2,850.4 1160.2,850.4 1159.2,850.6 1158.2,851.4 1157.2,850.3 1156.2,850.3 1155.2,850.3 1154.2,850.4 1153.2,850.2 1152.2,850.7 1151.2,850.7 1150.2,850.6 1149.2,850.4 1148.2,851.8 1147.2,850.3 1146.2,850.5 1145.2,850.6 1144.2,850.4 1143.2,850.6 1142.2,850.4 1141.2,850.5 1140.2,850.3 1139.2,850.6 1138.2,850.3 1137.2,850.6 1136.2,850.4 1135.2,850.4 1134.2,850.5 1133.2,850.3 1132.2,850.6 1131.2,852.3 1130.2,850.4 1129.2,850.6 1128.2,850.4 1127.2,850.5 1126.2,850.5 1125.2,850.5 1124.2,850.6 1123.2,850.9 1122.2,850.5 1121.2,850.2 1120.2,850.7 1119.2,850.3 1118.2,850.7 1117.2,850.5 1116.2,850.7 1115.2,850.5 1114.2,850.3 1113.2,850.4 1112.2,850.4 1111.2,850.7 1110.2,850.5 1109.2,850.3 1108.2,850.6 1107.2,850.4 1106.2,850.4 1105.2,850.6 1104.2,850.5 1103.2,850.4 1102.2,850.6 1101.2,850.6 1100.2,850.4 1099.2,850.6 1098.2,850.3 1097.2,850.5 1096.2,850.7 1095.2,850.5 1094.2,850.5 1093.2,850.4 1092.2,850.6 1091.2,850.4 1090.2,851.2 1089.2,850.3 1088.2,850.6 1087.2,850.4 1086.2,850.2 1085.2,850.5 1084.2,850.6 1083.2,850.2 1082.2,850.4 1081.2,850.3 1080.2,850.4 1079.2,850.5 1078.2,850.2 1077.2,850.4 1076.2,850.2 1075.2,850.5 1074.2,850.5 1073.2,850.2 1072.2,850.6 1071.2,850.5 1070.2,850.2 1069.2,850.6 1068.2,850.6 1067.2,850.2 1066.2,850.4 1065.2,852.1 1064.2,850.6 1063.2,850.4 1062.2,850.7 1061.2,850.6 1060.2,850.5 1059.2,850.5 1058.2,850.5 1057.2,850.3 1056.2,850.5 1055.2,850.7 1054.2,850.2 1053.2,850.5 1052.2,850.4 1051.2,850.4 1050.2,850.7 1049.2,850.5 1048.2,850.7 1047.2,850.6 1046.2,850.2 1045.2,850.6 1044.2,850.3 1043.2,850.7 1042.2,850.6 1041.2,850.5 1040.2,850.7 1039.2,850.5 1038.2,850.4 1037.2,850.4 1036.2,850.7 1035.2,850.3 1034.2,850.6 1033.2,850.3 1032.2,850.2 1031.2,850.3 1030.2,850.5 1029.2,850.3 1028.2,852.3 1027.2,851.5 1026.2,850.3 1025.2,850.3 1024.2,850.4 1023.2,850.5 1022.2,851.0 1021.2,850.6 1020.2,850.6 1019.2,850.5 1018.2,850.5 1017.2,850.6 1016.2,851.2 1015.2,851.4 1014.2,850.7 1013.2,850.2 1012.2,850.3 1011.2,851.1 1010.2,850.3 1009.2,850.5 1008.2,850.3 1007.2,850.3 1006.2,852.1 1005.2,850.4 1004.2,850.6 1003.2,850.7 1002.2,852.0"/><polygon points="1432.9,845.0 1433.9,844.0 1434.9,844.9 1435.9,845.1 1436.9,845.0 1437.9,845.0 1438.9,844.6 1439.9,844.8 1440.9,844.9 1441.9,845.0 1442.9,844.6 1443.9,845.0 1444.9,844.9 1445.9,844.8 1446.9,844.1 1447.9,844.9 1448.9,845.0 1449.9,844.6 1450.9,845.0 1451.9,845.0 1452.9,845.0 1453.9,844.8 1454.9,844.6 1455.9,845.0 1456.9,845.0 1457.9,845.0 1458.9,844.7 1459.9,845.0 1460.9,844.7 1461.9,844.7 1462.9,844.6 1463.9,845.0 1464.9,844.7 1465.9,844.8 1466.9,844.8 1467.9,844.6 1468.9,845.0 1469.9,844.7 1470.9,844.9 1471.9,844.7 1472.9,844.6 1473.9,844.8 1474.9,844.9 1475.9,845.0 1476.9,845.1 1477.9,844.8 1478.9,844.9 1479.9,845.1 1480.9,844.6 1481.9,844.6 1482.9,844.8 1483.9,844.8 1484.9,844.7 1485.9,844.8 1486.9,844.6 1487.9,844.6 1488.9,844.8 1489.9,844.8 1490.9,844.9 1491.9,844.8 1492.9,844.7 1493.9,845.1 1494.9,844.8 1495.9,844.6 1496.9,844.6 1497.9,844.7 1498.9,844.7 1499.9,844.7 1500.9,843.5 1501.9,844.9 1502.9,845.1 1503.9,845.0 1504.9,844.9 1505.9,844.6 1506.9,845.0 1507.9,844.9 1508.9,845.0 1509.9,844.6 1510.9,844.7 1511.9,844.8 1512.9,844.8 1513.9,845.0 1514.9,844.7 1515.9,844.7 1516.9,845.1 1517.9,845.0 1518.9,844.8 1519.9,844.7 1520.9,845.0 1521.9,845.0 1522.9,844.8 1523.9,844.7 1524.9,844.8 1525.9,845.0 1526.9,844.7 1527.9,844.8 1528.9,844.7 1529.9,844.7 1530.9,845.1 1531.9,844.9 1532.9,844.7 1533.9,844.2 1534.9,845.0 1535.9,844.8 1536.9,844.7 1537.9,845.0 1538.9,845.0 1539.9,844.8 1540.9,845.0 1541.9,845.0 1542.9,844.9 1543.9,844.8 1544.9,844.7 1545.9,845.1 1546.9,844.9 1547.9,844.8 1548.9,845.1 1549.9,845.0 1550.9,844.7 1551.9,844.6 1552.9,845.1 1553.9,844.7 1554.9,844.7 1555.9,844.9 1556.9,844.8 1557.9,844.7 1558.9,845.1 1559.9,844.8 1560.9,844.7 1561.9,843.8 1562.9,844.9 1563.9,844.9 1564.9,845.0 1565.9,844.6 1566.9,844.8 1567.9,844.8 1568.9,845.0 1569.9,845.0 1570.9,844.8 1571.9,844.7 1572.9,845.0 1573.9,844.9 1574.9,845.0 1575.9,844.6 1576.9,845.0 1577.9,845.0 1578.9,845.1 1579.9,844.6 1580.9,844.9 1581.9,844.9 1582.9,844.9 1583.9,845.0 1584.9,844.9 1585.9,844.8 1586.9,845.0 1587.9,844.8 1588.9,845.1 1589.9,845.0 1590.9,844.9 1591.9,844.7 1592.9,844.9 1593.9,843.6 1594.9,844.8 1595.9,844.7 1596.9,844.8 1597.9,844.9 1598.9,844.6 1599.9,844.7 1600.9,844.4 1601.9,844.7 1602.9,844.8 1603.9,844.8 1604.9,844.6 1605.9,844.9 1606.9,844.9 1607.9,845.0 1608.9,844.8 1609.9,844.8 1610.9,845.1 1611.9,844.7 1612.9,844.7 1613.9,844.7 1614.9,844.7 1615.9,844.8 1616.9,845.1 1617.9,844.7 1618.9,844.5 1619.9,844.7 1620.9,844.9 1621.9,844.6 1622.9,844.8 1623.9,844.9 1624.9,845.0 1625.9,845.0 1626.9,845.0 1627.9,845.0 1628.9,844.7 1629.9,844.7 1630.9,844.7 1631.9,844.6 1632.9,844.6 1633.9,844.1 1634.9,844.8 1635.9,844.7 1636.9,844.7 1637.9,844.7 1638.9,845.0 1639.9,844.7 1640.9,845.0 1641.9,843.5 1642.9,845.0 1643.9,844.9 1644.9,845.1 1645.9,844.7 1646.9,844.9 1647.9,844.9 1648.9,844.9 1649.9,844.9 1650.9,844.8 1651.9,845.1 1652.9,844.9 1653.9,844.9 1654.9,845.0 1655.9,844.6 1656.9,844.2 1657.9,845.0 1658.9,844.9 1659.9,845.1 1660.9,844.9 1661.9,845.0 1662.9,845.0 1663.9,844.8 1664.9,844.8 1665.9,844.8 1666.9,844.9 1667.9,844.9 1668.9,844.7 1669.9,845.0 1670.9,844.8 1671.9,845.0 1672.9,845.1 1673.9,845.0 1674.9,844.7 1675.9,844.9 1676.9,845.0 1677.9,844.8 1678.9,844.9 1679.9,844.1 1680.9,844.6 1681.9,844.7 1682.9,844.8 1683.9,844.7 1684.9,844.9 1685.9,844.6 1686.9,845.0 1687.9,845.0 1688.9,844.8 1689.9,844.6 1690.9,844.9 1691.9,845.1 1692.9,845.1 1693.9,845.1 1694.9,844.6 1695.9,845.0 1696.9,844.7 1697.9,844.9 1698.9,844.8 1699.9,844.8 1700.9,844.9 1701.9,844.7 1702.9,844.5 1703.9,844.7 1704.9,844.7 1705.9,845.1 1706.9,845.1 1707.9,844.6 1708.9,844.6 1709.9,844.7 1710.9,845.0 1711.9,844.9 1712.9,844.7 1713.9,844.0 1714.9,845.0 1715.9,845.0 1716.9,845.0 1717.9,844.1 1718.9,845.1 1719.9,844.8 1720.9,844.7 1721.9,844.7 1722.9,844.6 1723.9,844.9 1724.9,844.6 1725.9,845.1 1726.9,845.0 1727.9,844.8 1728.9,845.0 1729.9,845.0 1730.9,844.9 1731.9,845.1 1732.9,845.1 1733.9,844.8 1734.9,844.1 1735.9,844.7 1736.9,844.9 1737.9,844.8 1738.9,844.7 1739.9,844.6 1740.9,843.6 1741.9,844.9 1742.9,845.0 1743.9,844.8 1744.9,845.0 1745.9,844.7 1746.9,844.6 1747.9,843.8 1748.9,844.7 1749.9,844.9 1750.9,845.0 1751.9,844.2 1752.9,844.7 1753.9,844.9 1754.9,845.1 1755.9,844.7 1756.9,844.8 1757.9,844.7 1758.9,844.7 1759.9,844.7 1760.9,844.8 1761.9,844.9 1762.9,844.9 1763.9,844.8 1764.9,844.7 1765.9,844.7 1766.9,845.1 1767.9,845.1 1768.9,844.9 1769.9,844.9 1770.9,844.8 1771.9,843.6 1772.9,845.0 1773.9,844.9 1774.9,845.0 1775.9,845.1 1776.9,844.7 1777.9,844.8 1778.9,845.1 1779.9,844.9 1780.9,845.1 1781.9,844.7 1782.9,844.7 1783.9,845.0 1784.9,844.8 1785.9,843.8 1786.9,844.9 1787.9,844.7 1788.9,844.9 1789.9,845.0 1790.9,843.9 1791.9,844.1 1792.9,844.8 1793.9,845.0 1794.9,844.7 1795.9,844.9 1796.9,845.1 1797.9,844.7 1798.9,845.0 1799.9,844.8 1800.9,844.6 1801.9,844.8 1802.9,845.1 1803.9,844.9 1804.9,844.7 1805.9,845.0 1806.9,845.0 1807.9,844.9 1808.9,845.0 1809.9,844.9 1810.9,844.8 1811.9,844.9 1812.9,845.0 1813.9,844.9 1814.9,845.0 1815.9,844.9 1816.9,844.1 1817.9,845.0 1818.9,844.9 1819.9,844.8 1820.9,844.8 1821.9,844.7 1822.9,844.6 1823.9,845.1 1824.9,845.1 1825.9,844.7 1826.9,844.6 1827.9,844.6 1828.9,844.9 1829.9,844.7 1830.9,845.0 1831.9,844.7 1832.9,844.2 1834.0,844.6 1834.0,850.5 1832.9,850.2 1831.9,850.4 1830.9,850.2 1829.9,850.3 1828.9,851.2 1827.9,850.4 1826.9,850.7 1825.9,850.4 1824.9,850.6 1823.9,850.6 1822.9,850.3 1821.9,850.3 1820.9,850.3 1819.9,850.5 1818.9,850.3 1817.9,850.5 1816.9,852.2 1815.9,850.4 1814.9,850.5 1813.9,850.7 1812.9,850.4 1811.9,850.7 1810.9,850.2 1809.9,850.3 1808.9,850.6 1807.9,850.3 1806.9,850.5 1805.9,850.4 1804.9,850.6 1803.9,850.3 1802.9,850.6 1801.9,851.1 1800.9,850.5 1799.9,850.5 1798.9,850.4 1797.9,850.5 1796.9,850.2 1795.9,850.6 1794.9,851.6 1793.9,850.3 1792.9,850.5 1791.9,850.4 1790.9,850.4 1789.9,850.6 1788.9,850.7 1787.9,850.4 1786.9,850.5 1785.9,850.3 1784.9,850.2 1783.9,850.2 1782.9,850.5 1781.9,850.3 1780.9,850.6 1779.9,850.7 1778.9,850.4 1777.9,850.5 1776.9,850.4 1775.9,850.2 1774.9,850.5 1773.9,850.4 1772.9,850.6 1771.9,850.4 1770.9,850.6 1769.9,850.7 1768.9,850.4 1767.9,850.7 1766.9,850.5 1765.9,850.2 1764.9,850.7 1763.9,850.7 1762.9,850.7 1761.9,850.5 1760.9,850.4 1759.9,850.4 1758.9,850.6 1757.9,850.5 1756.9,850.7 1755.9,850.2 1754.9,850.3 1753.9,850.5 1752.9,850.7 1751.9,850.7 1750.9,850.2 1749.9,850.6 1748.9,850.6 1747.9,850.6 1746.9,850.4 1745.9,850.6 1744.9,850.5 1743.9,850.4 1742.9,850.3 1741.9,851.7 1740.9,850.5 1739.9,850.6 1738.9,850.5 1737.9,850.5 1736.9,851.9 1735.9,850.6 1734.9,850.6 1733.9,850.3 1732.9,850.6 1731.9,850.7 1730.9,851.7 1729.9,850.7 1728.9,850.3 1727.9,850.3 1726.9,850.5 1725.9,850.4 1724.9,850.5 1723.9,850.7 1722.9,850.6 1721.9,850.2 1720.9,850.7 1719.9,850.6 1718.9,850.6 1717.9,850.2 1716.9,850.6 1715.9,850.3 1714.9,850.4 1713.9,850.8 1712.9,850.5 1711.9,850.5 1710.9,850.4 1709.9,850.3 1708.9,850.6 1707.9,850.5 1706.9,850.6 1705.9,850.6 1704.9,850.3 1703.9,850.6 1702.9,850.7 1701.9,850.3 1700.9,850.4 1699.9,850.3 1698.9,850.6 1697.9,850.7 1696.9,850.3 1695.9,850.6 1694.9,850.3 1693.9,850.2 1692.9,850.4 1691.9,850.4 1690.9,850.7 1689.9,851.2 1688.9,850.4 1687.9,850.3 1686.9,850.5 1685.9,852.0 1684.9,851.3 1683.9,850.5 1682.9,850.4 1681.9,850.3 1680.9,850.4 1679.9,850.6 1678.9,850.4 1677.9,850.4 1676.9,850.4 1675.9,850.7 1674.9,850.5 1673.9,850.6 1672.9,850.3 1671.9,850.2 1670.9,850.7 1669.9,850.3 1668.9,850.2 1667.9,851.9 1666.9,850.6 1665.9,850.6 1664.9,850.2 1663.9,850.7 1662.9,851.6 1661.9,850.4 1660.9,850.6 1659.9,850.4 1658.9,850.7 1657.9,850.5 1656.9,850.5 1655.9,850.4 1654.9,850.3 1653.9,850.7 1652.9,850.4 1651.9,850.7 1650.9,850.3 1649.9,850.6 1648.9,850.5 1647.9,850.3 1646.9,850.5 1645.9,850.7 1644.9,850.3 1643.9,850.3 1642.9,850.4 1641.9,850.3 1640.9,850.3 1639.9,850.5 1638.9,850.4 1637.9,850.5 1636.9,850.5 1635.9,850.6 1634.9,850.6 1633.9,850.6 1632.9,850.2 1631.9,850.2 1630.9,850.7 1629.9,850.6 1628.9,852.3 1627.9,850.2 1626.9,850.3 1625.9,850.3 1624.9,850.3 1623.9,850.4 1622.9,850.4 1621.9,850.6 1620.9,850.7 1619.9,850.5 1618.9,850.5 1617.9,850.4 1616.9,850.5 1615.9,850.4 1614.9,850.6 1613.9,850.5 1612.9,850.2 1611.9,850.5 1610.9,850.2 1609.9,850.4 1608.9,850.3 1607.9,850.3 1606.9,850.6 1605.9,850.4 1604.9,850.6 1603.9,850.2 1602.9,850.3 1601.9,850.6 1600.9,850.4 1599.9,850.5 1598.9,850.2 1597.9,850.4 1596.9,850.7 1595.9,850.6 1594.9,850.5 1593.9,850.5 1592.9,850.7 1591.9,850.4 1590.9,850.6 1589.9,850.6 1588.9,850.4 1587.9,850.4 1586.9,850.5 1585.9,850.5 1584.9,850.5 1583.9,850.2 1582.9,850.5 1581.9,850.4 1580.9,850.4 1579.9,850.3 1578.9,850.6 1577.9,850.7 1576.9,850.6 1575.9,850.7 1574.9,850.5 1573.9,850.7 1572.9,850.2 1571.9,850.7 1570.9,850.5 1569.9,851.3 1568.9,850.7 1567.9,850.6 1566.9,850.6 1565.9,850.4 1564.9,850.6 1563.9,850.4 1562.9,850.5 1561.9,850.3 1560.9,850.4 1559.9,850.4 1558.9,850.3 1557.9,850.5 1556.9,850.5 1555.9,850.6 1554.9,850.5 1553.9,850.7 1552.9,850.5 1551.9,850.5 1550.9,850.2 1549.9,850.5 1548.9,850.4 1547.9,851.6 1546.9,852.3 1545.9,850.3 1544.9,850.3 1543.9,850.5 1542.9,850.2 1541.9,850.4 1540.9,850.2 1539.9,850.7 1538.9,850.3 1537.9,850.5 1536.9,850.4 1535.9,850.6 1534.9,850.5 1533.9,850.4 1532.9,850.6 1531.9,850.4 1530.9,850.3 1529.9,850.4 1528.9,850.3 1527.9,850.3 1526.9,850.6 1525.9,850.7 1524.9,850.2 1523.9,850.6 1522.9,850.6 1521.9,850.4 1520.9,850.2 1519.9,850.2 1518.9,850.2 1517.9,850.3 1516.9,850.4 1515.9,850.5 1514.9,850.3 1513.9,850.7 1512.9,850.4 1511.9,850.4 1510.9,850.7 1509.9,850.2 1508.9,850.2 1507.9,850.2 1506.9,850.7 1505.9,850.4 1504.9,850.4 1503.9,850.3 1502.9,850.5 1501.9,850.7 1500.9,850.2 1499.9,850.5 1498.9,850.2 1497.9,850.3 1496.9,850.2 1495.9,850.3 1494.9,850.4 1493.9,850.6 1492.9,850.3 1491.9,850.5 1490.9,850.5 1489.9,850.6 1488.9,850.6 1487.9,851.5 1486.9,850.7 1485.9,851.5 1484.9,850.3 1483.9,850.5 1482.9,850.3 1481.9,850.4 1480.9,850.7 1479.9,850.5 1478.9,850.5 1477.9,851.4 1476.9,850.7 1475.9,850.4 1474.9,850.6 1473.9,850.5 1472.9,850.5 1471.9,850.5 1470.9,850.2 1469.9,850.2 1468.9,850.7 1467.9,850.3 1466.9,850.6 1465.9,850.6 1464.9,850.3 1463.9,850.4 1462.9,850.5 1461.9,850.4 1460.9,850.7 1459.9,850.6 1458.9,850.5 1457.9,850.6 1456.9,850.4 1455.9,850.6 1454.9,850.6 1453.9,850.5 1452.9,850.5 1451.9,850.2 1450.9,850.9 1449.9,850.5 1448.9,850.3 1447.9,850.3 1446.9,850.4 1445.9,850.3 1444.9,850.5 1443.9,850.4 1442.9,850.3 1441.9,850.3 1440.9,850.3 1439.9,850.5 1438.9,850.5 1437.9,850.5 1436.9,850.5 1435.9,850.6 1434.9,850.4 1433.9,850.6 1432.9,851.8"/><polygon points="1863.5,845.1 1864.5,844.7 1865.5,844.9 1866.5,844.9 1867.5,844.8 1868.5,844.7 1869.5,845.0 1870.5,844.7 1871.5,844.9 1872.5,844.7 1873.5,844.2 1874.5,845.0 1875.5,844.9 1876.5,845.0 1877.5,845.0 1878.5,844.8 1879.5,844.8 1880.5,845.0 1881.5,844.8 1882.5,844.6 1883.5,844.8 1884.5,845.1 1885.5,845.0 1886.5,843.5 1887.5,844.8 1888.5,845.1 1889.5,844.9 1890.5,844.8 1891.5,844.8 1892.5,844.7 1893.5,845.0 1894.5,844.8 1895.5,844.9 1896.5,844.8 1897.5,843.8 1898.5,844.8 1899.5,844.7 1900.5,845.0 1901.5,844.8 1902.5,844.6 1903.5,844.9 1904.5,844.7 1905.5,845.0 1906.5,844.9 1907.5,845.0 1908.5,845.1 1909.5,844.9 1910.5,844.6 1911.5,844.7 1912.5,844.8 1913.5,845.0 1914.5,844.7 1915.5,844.6 1916.5,844.7 1917.5,844.7 1918.5,845.0 1919.5,845.0 1920.5,844.7 1921.5,844.8 1922.5,844.9 1923.5,845.0 1924.5,844.6 1925.5,844.8 1926.5,844.6 1927.5,845.1 1928.5,844.6 1929.5,844.2 1930.5,845.1 1931.5,844.9 1932.5,844.9 1933.5,844.8 1934.5,844.9 1935.5,844.9 1936.5,845.0 1937.5,845.0 1938.5,845.0 1939.5,845.1 1940.5,844.6 1941.5,844.9 1942.5,844.2 1943.5,844.6 1944.5,844.9 1945.5,845.0 1946.5,844.9 1947.5,844.7 1948.5,845.0 1949.5,844.9 1950.5,844.9 1951.5,845.0 1952.5,844.9 1953.5,844.8 1954.5,844.7 1955.5,844.9 1956.5,844.7 1957.5,844.6 1958.5,844.8 1959.5,845.0 1960.5,844.7 1961.5,845.1 1962.5,844.7 1963.5,844.9 1964.5,844.3 1965.5,844.8 1966.5,844.9 1967.5,844.6 1968.5,844.8 1969.5,844.9 1970.5,844.7 1971.5,844.8 1972.5,845.1 1973.5,844.8 1974.5,845.1 1975.5,844.6 1976.5,845.0 1977.5,844.9 1978.5,845.0 1979.5,844.6 1980.5,845.0 1981.5,844.9 1982.5,845.1 1983.5,844.6 1984.5,844.7 1985.5,845.1 1986.5,845.1 1987.5,845.1 1988.5,844.7 1989.5,844.7 1990.5,844.7 1991.5,844.7 1992.5,844.2 1993.5,845.1 1994.5,844.8 1995.5,844.7 1996.5,844.7 1997.5,845.1 1998.5,844.7 1999.5,844.7 2000.5,844.6 2001.5,844.8 2002.5,844.7 2003.5,844.7 2004.5,845.0 2005.5,844.9 2006.5,845.1 2007.5,844.8 2008.5,845.1 2009.5,844.7 2010.5,844.6 2011.5,844.8 2012.5,844.8 2013.5,844.9 2014.5,844.8 2015.5,844.7 2016.5,844.6 2017.5,844.8 2018.5,844.9 2019.5,844.7 2020.5,844.8 2021.5,844.6 2022.5,844.7 2023.5,844.7 2024.5,844.9 2025.5,844.8 2026.5,844.6 2027.5,845.0 2028.5,844.9 2029.5,843.9 2030.5,844.7 2031.5,844.8 2032.5,844.9 2033.5,845.0 2034.5,844.9 2035.5,844.8 2036.5,844.8 2037.5,844.7 2038.5,845.0 2039.5,844.7 2040.5,844.7 2041.5,844.9 2042.5,844.7 2043.5,845.1 2044.5,844.7 2045.5,845.0 2046.5,845.0 2047.5,844.8 2048.5,845.0 2049.5,844.8 2050.5,845.0 2051.5,845.0 2052.5,844.9 2053.5,844.7 2054.5,844.7 2055.5,844.2 2056.5,844.8 2057.5,844.8 2058.5,845.1 2059.5,844.7 2060.5,844.8 2061.5,844.9 2062.5,844.6 2063.5,844.9 2064.5,844.9 2065.5,844.8 2066.5,844.7 2067.5,844.8 2068.5,844.2 2069.5,844.9 2070.5,844.8 2071.5,845.1 2072.5,844.9 2073.5,845.0 2074.5,844.6 2075.5,844.7 2076.5,844.6 2077.5,844.9 2078.5,845.1 2079.5,844.7 2080.5,844.8 2081.5,844.7 2082.5,844.6 2083.5,844.7 2084.5,844.7 2085.5,844.7 2086.5,844.7 2087.5,844.6 2088.5,844.4 2089.5,844.6 2090.5,844.8 2091.5,845.0 2092.5,844.8 2093.5,844.8 2094.5,845.0 2095.5,844.8 2096.5,843.9 2097.5,845.1 2098.5,844.0 2099.5,844.8 2100.5,844.9 2101.5,845.0 2102.5,844.9 2103.5,845.1 2104.5,845.1 2105.5,844.8 2106.5,844.7 2107.5,844.9 2108.5,844.7 2109.5,844.3 2110.5,844.7 2111.5,845.1 2112.5,843.9 2113.5,845.1 2114.5,844.8 2115.5,844.8 2116.5,844.8 2117.5,844.6 2118.5,844.7 2119.5,844.6 2120.5,844.9 2121.5,844.9 2122.5,845.0 2123.5,844.8 2124.5,845.1 2125.5,844.8 2126.5,844.9 2127.5,844.9 2128.5,844.8 2129.5,845.0 2130.5,844.9 2131.5,844.7 2132.5,845.1 2133.5,845.0 2134.5,845.0 2135.5,844.6 2136.5,844.9 2137.5,845.0 2138.5,845.0 2139.5,844.9 2140.5,844.9 2141.5,845.0 2142.5,844.8 2143.5,844.8 2144.5,844.7 2145.5,844.7 2146.5,844.7 2147.5,845.0 2148.5,844.8 2149.5,844.7 2150.5,844.6 2151.5,844.8 2152.5,845.0 2153.5,845.0 2154.5,844.9 2155.5,844.7 2156.5,845.1 2157.5,845.0 2158.5,844.7 2159.5,844.9 2160.5,844.9 2161.5,845.0 2162.5,844.9 2163.5,844.7 2164.5,844.6 2165.5,844.9 2166.5,845.0 2167.5,844.9 2168.5,844.8 2169.5,844.8 2170.5,845.0 2171.5,844.9 2172.5,844.8 2173.5,845.0 2174.5,844.9 2175.5,845.0 2176.5,844.8 2177.5,845.0 2178.5,845.0 2179.5,844.8 2180.5,844.9 2181.5,844.8 2182.5,845.0 2183.5,844.8 2184.5,845.0 2185.5,844.8 2186.5,844.9 2187.5,844.9 2188.5,845.0 2189.5,844.7 2190.5,844.8 2191.5,844.9 2192.5,844.6 2193.5,844.9 2194.5,844.8 2195.5,844.9 2196.5,845.0 2197.5,845.0 2198.5,844.6 2199.5,844.7 2200.5,844.9 2201.5,844.8 2202.5,844.6 2203.5,844.7 2204.5,844.8 2205.5,844.7 2206.5,845.0 2207.5,843.8 2208.5,844.8 2209.5,844.8 2210.5,844.8 2211.5,844.9 2212.5,845.0 2213.5,845.0 2214.5,844.3 2215.5,845.1 2216.5,844.7 2217.5,844.6 2218.5,844.7 2219.5,844.6 2220.5,844.9 2221.5,844.7 2222.5,844.9 2223.5,844.6 2224.5,843.5 2225.5,844.9 2226.5,845.1 2227.5,844.9 2228.5,844.1 2229.5,844.8 2230.5,844.8 2231.5,844.8 2232.5,844.9 2233.5,844.8 2234.5,844.8 2235.5,844.7 2236.5,844.7 2237.5,844.8 2238.5,845.1 2239.5,844.6 2240.5,843.7 2241.5,844.7 2242.5,844.8 2243.5,844.7 2244.5,844.9 2245.5,844.7 2246.5,844.6 2247.5,844.7 2248.5,845.0 2249.5,845.0 2250.5,844.9 2251.5,845.0 2252.5,844.9 2253.5,844.8 2254.5,844.8 2255.5,844.7 2256.5,844.9 2257.5,844.8 2258.5,844.9 2259.5,844.9 2260.5,844.9 2261.5,844.7 2262.5,845.1 2263.5,845.1 2265.0,844.7 2265.0,850.3 2263.5,850.5 2262.5,850.5 2261.5,850.6 2260.5,850.6 2259.5,850.5 2258.5,850.2 2257.5,850.4 2256.5,850.5 2255.5,850.3 2254.5,850.7 2253.5,850.7 2252.5,851.4 2251.5,850.5 2250.5,850.5 2249.5,850.4 2248.5,850.4 2247.5,850.3 2246.5,850.6 2245.5,850.5 2244.5,851.6 2243.5,850.5 2242.5,850.5 2241.5,850.7 2240.5,850.4 2239.5,850.6 2238.5,850.3 2237.5,850.7 2236.5,850.4 2235.5,850.5 2234.5,850.3 2233.5,850.6 2232.5,852.0 2231.5,850.3 2230.5,850.6 2229.5,850.3 2228.5,850.2 2227.5,850.4 2226.5,850.2 2225.5,850.6 2224.5,850.6 2223.5,850.6 2222.5,850.4 2221.5,850.5 2220.5,850.6 2219.5,850.3 2218.5,850.6 2217.5,850.5 2216.5,850.7 2215.5,850.6 2214.5,850.6 2213.5,850.4 2212.5,850.7 2211.5,850.7 2210.5,850.5 2209.5,850.6 2208.5,850.5 2207.5,850.2 2206.5,850.6 2205.5,850.3 2204.5,850.5 2203.5,850.3 2202.5,850.7 2201.5,850.5 2200.5,850.2 2199.5,850.6 2198.5,850.2 2197.5,850.4 2196.5,850.6 2195.5,850.6 2194.5,850.7 2193.5,851.5 2192.5,850.6 2191.5,850.2 2190.5,851.6 2189.5,850.3 2188.5,850.6 2187.5,850.3 2186.5,850.6 2185.5,850.4 2184.5,850.7 2183.5,850.3 2182.5,850.4 2181.5,851.8 2180.5,850.7 2179.5,850.4 2178.5,850.5 2177.5,850.5 2176.5,850.7 2175.5,850.4 2174.5,850.6 2173.5,850.5 2172.5,850.7 2171.5,850.3 2170.5,850.5 2169.5,850.2 2168.5,851.6 2167.5,850.6 2166.5,850.3 2165.5,850.2 2164.5,850.2 2163.5,850.3 2162.5,850.5 2161.5,850.5 2160.5,850.5 2159.5,850.2 2158.5,850.6 2157.5,850.6 2156.5,850.5 2155.5,850.3 2154.5,850.3 2153.5,850.3 2152.5,850.3 2151.5,850.3 2150.5,850.5 2149.5,850.4 2148.5,850.5 2147.5,850.6 2146.5,850.3 2145.5,850.6 2144.5,850.5 2143.5,850.6 2142.5,850.5 2141.5,850.3 2140.5,850.6 2139.5,850.5 2138.5,850.3 2137.5,850.7 2136.5,850.5 2135.5,850.5 2134.5,850.4 2133.5,850.4 2132.5,850.3 2131.5,850.3 2130.5,850.4 2129.5,850.2 2128.5,850.4 2127.5,850.5 2126.5,850.3 2125.5,850.4 2124.5,850.3 2123.5,850.5 2122.5,850.5 2121.5,850.4 2120.5,850.2 2119.5,850.6 2118.5,850.4 2117.5,850.2 2116.5,850.5 2115.5,850.3 2114.5,850.3 2113.5,850.6 2112.5,850.6 2111.5,850.5 2110.5,850.3 2109.5,850.6 2108.5,850.3 2107.5,850.5 2106.5,850.3 2105.5,850.2 2104.5,850.6 2103.5,850.4 2102.5,850.5 2101.5,850.6 2100.5,850.7 2099.5,850.9 2098.5,850.7 2097.5,850.2 2096.5,850.3 2095.5,850.4 2094.5,850.5 2093.5,850.5 2092.5,850.3 2091.5,850.3 2090.5,852.3 2089.5,850.6 2088.5,850.6 2087.5,851.2 2086.5,850.5 2085.5,850.6 2084.5,851.1 2083.5,850.2 2082.5,850.3 2081.5,850.4 2080.5,850.6 2079.5,850.4 2078.5,850.3 2077.5,850.3 2076.5,850.6 2075.5,850.5 2074.5,850.3 2073.5,850.4 2072.5,850.4 2071.5,850.6 2070.5,850.6 2069.5,850.4 2068.5,850.7 2067.5,850.3 2066.5,850.4 2065.5,850.5 2064.5,850.6 2063.5,850.7 2062.5,851.1 2061.5,850.4 2060.5,850.3 2059.5,850.5 2058.5,850.6 2057.5,850.4 2056.5,850.4 2055.5,850.2 2054.5,850.2 2053.5,850.5 2052.5,850.7 2051.5,850.4 2050.5,850.7 2049.5,850.6 2048.5,850.3 2047.5,850.5 2046.5,850.6 2045.5,850.4 2044.5,850.3 2043.5,850.5 2042.5,850.3 2041.5,850.4 2040.5,850.6 2039.5,850.7 2038.5,850.6 2037.5,850.4 2036.5,850.7 2035.5,850.7 2034.5,850.3 2033.5,850.4 2032.5,850.6 2031.5,850.5 2030.5,850.5 2029.5,850.6 2028.5,851.2 2027.5,850.2 2026.5,850.7 2025.5,850.2 2024.5,851.5 2023.5,850.5 2022.5,850.6 2021.5,850.5 2020.5,850.3 2019.5,850.6 2018.5,850.5 2017.5,850.6 2016.5,851.9 2015.5,850.4 2014.5,850.7 2013.5,850.4 2012.5,850.7 2011.5,850.4 2010.5,850.2 2009.5,850.5 2008.5,850.7 2007.5,850.3 2006.5,850.7 2005.5,850.3 2004.5,850.7 2003.5,850.5 2002.5,850.6 2001.5,850.7 2000.5,850.6 1999.5,850.4 1998.5,850.3 1997.5,850.4 1996.5,850.5 1995.5,850.2 1994.5,850.3 1993.5,850.2 1992.5,850.6 1991.5,850.3 1990.5,850.5 1989.5,850.6 1988.5,850.4 1987.5,850.6 1986.5,850.7 1985.5,850.6 1984.5,850.5 1983.5,851.1 1982.5,850.7 1981.5,850.3 1980.5,850.5 1979.5,850.5 1978.5,850.7 1977.5,850.2 1976.5,850.2 1975.5,850.4 1974.5,850.3 1973.5,850.7 1972.5,850.6 1971.5,850.5 1970.5,850.4 1969.5,850.7 1968.5,850.6 1967.5,850.6 1966.5,850.5 1965.5,850.7 1964.5,850.4 1963.5,850.6 1962.5,850.7 1961.5,850.3 1960.5,850.7 1959.5,850.3 1958.5,850.6 1957.5,850.6 1956.5,850.5 1955.5,851.1 1954.5,850.4 1953.5,851.4 1952.5,850.4 1951.5,850.5 1950.5,850.5 1949.5,850.2 1948.5,850.3 1947.5,850.3 1946.5,850.5 1945.5,850.5 1944.5,850.7 1943.5,850.3 1942.5,850.3 1941.5,850.5 1940.5,850.4 1939.5,850.5 1938.5,850.4 1937.5,850.6 1936.5,850.3 1935.5,850.4 1934.5,850.5 1933.5,850.5 1932.5,850.5 1931.5,850.5 1930.5,850.5 1929.5,850.6 1928.5,850.4 1927.5,850.5 1926.5,850.9 1925.5,850.4 1924.5,850.4 1923.5,850.6 1922.5,850.3 1921.5,850.5 1920.5,851.6 1919.5,850.5 1918.5,850.5 1917.5,850.5 1916.5,850.4 1915.5,850.2 1914.5,850.7 1913.5,850.3 1912.5,850.3 1911.5,850.4 1910.5,850.5 1909.5,850.4 1908.5,850.4 1907.5,851.7 1906.5,851.9 1905.5,850.4 1904.5,851.5 1903.5,851.4 1902.5,850.6 1901.5,850.2 1900.5,850.3 1899.5,850.6 1898.5,850.3 1897.5,850.5 1896.5,850.7 1895.5,850.2 1894.5,850.2 1893.5,850.3 1892.5,850.7 1891.5,850.5 1890.5,850.6 1889.5,850.3 1888.5,850.6 1887.5,850.3 1886.5,850.6 1885.5,850.3 1884.5,850.6 1883.5,850.4 1882.5,850.4 1881.5,850.2 1880.5,850.4 1879.5,851.5 1878.5,850.5 1877.5,850.5 1876.5,850.4 1875.5,850.6 1874.5,850.2 1873.5,850.2 1872.5,850.5 1871.5,850.5 1870.5,850.3 1869.5,850.4 1868.5,852.0 1867.5,850.2 1866.5,850.4 1865.5,850.4 1864.5,850.2 1863.5,850.3"/><polygon points="2294.0,844.8 2295.0,844.7 2296.0,845.0 2297.0,844.9 2298.0,844.8 2299.0,843.4 2300.0,844.9 2301.0,844.8 2302.0,844.8 2303.0,844.8 2304.0,845.0 2305.0,845.0 2306.0,844.6 2307.0,844.9 2308.0,844.9 2309.0,844.9 2310.0,844.7 2311.0,845.1 2312.0,845.0 2313.0,845.0 2314.0,845.0 2315.0,844.7 2316.0,844.8 2317.0,844.8 2318.0,844.8 2319.0,844.7 2320.0,844.8 2321.0,844.9 2322.0,844.9 2323.0,845.0 2324.0,844.9 2325.0,844.7 2326.0,845.1 2327.0,844.9 2328.0,844.9 2329.0,844.7 2330.0,844.8 2331.0,843.9 2332.0,845.0 2333.0,844.9 2334.0,844.8 2335.0,844.7 2336.0,844.6 2337.0,844.8 2338.0,844.9 2339.0,844.7 2340.0,844.8 2341.0,844.7 2342.0,845.1 2343.0,844.7 2344.0,844.8 2345.0,844.7 2346.0,844.9 2347.0,844.6 2348.0,845.0 2349.0,845.0 2350.0,844.8 2351.0,845.0 2352.0,844.7 2353.0,844.9 2354.0,844.9 2355.0,844.9 2356.0,845.0 2357.0,845.1 2358.0,844.8 2359.0,845.0 2360.0,845.0 2361.0,845.0 2362.0,844.7 2363.0,844.9 2364.0,844.8 2365.0,844.9 2366.0,844.8 2367.0,844.9 2368.0,845.0 2369.0,844.9 2370.0,844.8 2371.0,844.7 2372.0,844.9 2373.0,844.9 2374.0,845.1 2375.0,845.1 2376.0,844.8 2377.0,844.7 2378.0,844.7 2379.0,845.0 2380.0,845.1 2381.0,844.7 2382.0,844.7 2383.0,844.4 2384.0,844.2 2385.0,844.9 2386.0,844.8 2387.0,844.6 2388.0,844.7 2389.0,844.8 2390.0,844.6 2391.0,845.0 2392.0,844.9 2393.0,844.6 2394.0,844.8 2395.0,844.8 2396.0,844.9 2397.0,845.0 2398.0,844.3 2399.0,844.9 2400.0,844.9 2401.0,844.6 2402.0,844.7 2403.0,844.9 2404.0,845.1 2405.0,844.9 2406.0,845.1 2407.0,844.9 2408.0,844.7 2409.0,844.7 2410.0,844.7 2411.0,844.6 2412.0,844.7 2413.0,845.0 2414.0,844.7 2415.0,844.8 2416.0,845.0 2417.0,845.0 2418.0,844.7 2419.0,845.0 2420.0,844.9 2421.0,845.1 2422.0,845.0 2423.0,844.8 2424.0,844.8 2425.0,845.0 2426.0,844.8 2427.0,845.0 2428.0,845.0 2429.0,844.6 2430.0,845.0 2431.0,844.6 2432.0,844.9 2433.0,845.0 2434.0,844.8 2435.0,844.8 2436.0,844.8 2437.0,845.1 2438.0,844.7 2439.0,844.8 2440.0,844.7 2441.0,843.7 2442.0,844.9 2443.0,844.9 2444.0,845.1 2445.0,845.0 2446.0,845.0 2447.0,844.7 2448.0,844.8 2449.0,845.1 2450.0,844.9 2451.0,844.6 2452.0,845.0 2453.0,845.0 2454.0,845.0 2455.0,844.8 2456.0,845.1 2457.0,845.0 2458.0,844.7 2459.0,845.1 2460.0,845.0 2461.0,844.8 2462.0,845.0 2463.0,845.0 2464.0,844.8 2465.0,845.0 2466.0,844.7 2467.0,845.1 2468.0,844.6 2469.0,844.7 2470.0,845.0 2471.0,844.9 2472.0,844.7 2473.0,844.1 2474.0,844.9 2475.0,845.0 2475.0,850.6 2474.0,850.6 2473.0,852.2 2472.0,850.7 2471.0,850.6 2470.0,850.6 2469.0,850.2 2468.0,850.2 2467.0,850.4 2466.0,850.6 2465.0,850.5 2464.0,850.4 2463.0,850.6 2462.0,850.3 2461.0,850.5 2460.0,850.5 2459.0,850.2 2458.0,851.4 2457.0,850.5 2456.0,850.6 2455.0,851.1 2454.0,850.5 2453.0,850.6 2452.0,850.3 2451.0,850.7 2450.0,850.7 2449.0,850.3 2448.0,850.4 2447.0,850.3 2446.0,851.9 2445.0,850.4 2444.0,850.4 2443.0,850.5 2442.0,850.6 2441.0,850.5 2440.0,850.2 2439.0,850.5 2438.0,850.2 2437.0,850.4 2436.0,850.7 2435.0,850.4 2434.0,850.5 2433.0,850.3 2432.0,850.3 2431.0,850.6 2430.0,850.3 2429.0,850.4 2428.0,850.3 2427.0,850.3 2426.0,850.4 2425.0,850.5 2424.0,850.6 2423.0,850.5 2422.0,850.5 2421.0,850.2 2420.0,850.4 2419.0,850.6 2418.0,850.6 2417.0,850.4 2416.0,850.4 2415.0,850.4 2414.0,850.7 2413.0,850.6 2412.0,850.5 2411.0,850.4 2410.0,850.4 2409.0,850.3 2408.0,850.3 2407.0,850.6 2406.0,850.4 2405.0,850.2 2404.0,850.7 2403.0,850.6 2402.0,851.7 2401.0,850.5 2400.0,850.5 2399.0,850.2 2398.0,850.3 2397.0,850.4 2396.0,850.5 2395.0,850.3 2394.0,850.4 2393.0,850.6 2392.0,850.4 2391.0,850.3 2390.0,850.6 2389.0,850.2 2388.0,850.4 2387.0,850.7 2386.0,850.3 2385.0,850.3 2384.0,850.4 2383.0,850.6 2382.0,850.6 2381.0,850.4 2380.0,850.6 2379.0,850.7 2378.0,850.6 2377.0,850.2 2376.0,850.3 2375.0,851.6 2374.0,850.6 2373.0,850.6 2372.0,850.4 2371.0,850.6 2370.0,850.4 2369.0,850.7 2368.0,850.5 2367.0,850.6 2366.0,850.3 2365.0,850.4 2364.0,850.2 2363.0,850.6 2362.0,850.5 2361.0,850.6 2360.0,850.3 2359.0,850.6 2358.0,850.5 2357.0,850.7 2356.0,851.8 2355.0,851.4 2354.0,850.5 2353.0,850.2 2352.0,850.5 2351.0,850.7 2350.0,850.4 2349.0,851.6 2348.0,850.2 2347.0,850.5 2346.0,850.5 2345.0,850.3 2344.0,850.3 2343.0,850.5 2342.0,852.0 2341.0,850.3 2340.0,850.4 2339.0,850.5 2338.0,850.2 2337.0,850.6 2336.0,851.7 2335.0,850.5 2334.0,850.5 2333.0,850.6 2332.0,850.3 2331.0,850.3 2330.0,850.5 2329.0,851.9 2328.0,851.1 2327.0,850.5 2326.0,850.5 2325.0,850.6 2324.0,850.3 2323.0,850.6 2322.0,850.7 2321.0,850.6 2320.0,850.6 2319.0,850.2 2318.0,850.7 2317.0,850.4 2316.0,850.4 2315.0,850.3 2314.0,850.3 2313.0,851.0 2312.0,850.5 2311.0,850.2 2310.0,850.4 2309.0,850.5 2308.0,850.5 2307.0,850.4 2306.0,851.6 2305.0,850.3 2304.0,850.6 2303.0,850.7 2302.0,852.1 2301.0,850.7 2300.0,850.6 2299.0,850.5 2298.0,850.6 2297.0,850.6 2296.0,850.5 2295.0,850.4 2294.0,850.3"/><polygon points="971.1,849 972.3,849 972.5,800 973.1,725 974.3,668 973.0,668 972.0,725 971.3,800"/><polygon points="973.0,662.8 974.0,662.7 975.0,662.9 976.0,662.8 977.0,663.1 978.0,663.3 979.0,663.0 980.0,663.2 981.0,663.1 982.0,662.5 983.0,663.2 984.0,663.3 985.0,663.3 986.0,663.4 987.0,663.4 988.0,663.4 989.0,663.6 990.0,663.4 991.0,663.6 992.0,663.8 993.0,663.7 994.0,664.0 995.0,664.2 996.0,664.2 997.0,663.9 998.0,663.1 999.0,664.4 1000.0,663.9 1001.0,664.3 1002.0,664.4 1002.0,670.6 1001.0,670.1 1000.0,670.1 999.0,670.3 998.0,670.2 997.0,669.9 996.0,670.3 995.0,670.3 994.0,669.8 993.0,669.7 992.0,670.1 991.0,669.6 990.0,670.0 989.0,669.6 988.0,669.6 987.0,669.5 986.0,669.3 985.0,669.3 984.0,669.3 983.0,669.6 982.0,669.6 981.0,669.6 980.0,669.2 979.0,669.5 978.0,669.1 977.0,669.2 976.0,669.1 975.0,669.2 974.0,668.7 973.0,669.2"/><polygon points="1001.2,666 1002.4,666 1002.8,848 1001.6,848"/><polygon points="1402.1,849 1403.3,849 1403.5,800 1404.1,725 1405.3,668 1404.0,668 1403.0,725 1402.3,800"/><polygon points="1404.0,662.8 1405.0,662.7 1406.0,662.8 1407.0,662.3 1408.0,663.3 1409.0,663.2 1410.0,662.9 1411.0,663.3 1412.0,663.5 1413.0,663.2 1414.0,663.3 1415.0,663.2 1416.0,663.5 1417.0,663.5 1418.0,663.3 1419.0,663.4 1420.0,663.7 1421.0,663.8 1422.0,663.8 1423.0,663.5 1424.0,663.5 1425.0,664.0 1426.0,663.8 1427.0,664.0 1428.0,664.3 1429.0,664.0 1430.0,664.1 1431.0,664.3 1432.0,663.9 1433.0,663.9 1433.0,670.3 1432.0,670.2 1431.0,670.2 1430.0,670.0 1429.0,669.9 1428.0,670.1 1427.0,670.0 1426.0,670.3 1425.0,669.8 1424.0,669.8 1423.0,669.8 1422.0,669.6 1421.0,669.9 1420.0,669.9 1419.0,670.4 1418.0,670.3 1417.0,669.9 1416.0,669.4 1415.0,669.5 1414.0,669.4 1413.0,669.5 1412.0,669.1 1411.0,669.3 1410.0,669.1 1409.0,669.3 1408.0,669.4 1407.0,669.0 1406.0,669.0 1405.0,669.1 1404.0,669.0"/><polygon points="1431.9,666 1433.1,666 1433.5,848 1432.3,848"/><polygon points="1833.1,849 1834.3,849 1834.5,800 1835.1,725 1836.3,668 1835.0,668 1834.0,725 1833.3,800"/><polygon points="1835.0,662.9 1836.0,663.0 1837.0,663.0 1838.0,662.2 1839.0,663.3 1840.0,663.2 1841.0,662.9 1842.0,663.1 1843.0,663.4 1844.0,663.3 1845.0,662.7 1846.0,663.2 1847.0,663.4 1848.0,663.3 1849.0,663.7 1850.0,663.8 1851.0,663.4 1852.0,663.9 1853.0,663.7 1854.0,664.0 1855.0,664.0 1856.0,664.1 1857.0,663.7 1858.0,664.3 1859.0,663.4 1860.0,663.9 1861.0,664.1 1862.0,664.2 1863.0,664.0 1863.0,670.3 1862.0,670.3 1861.0,671.2 1860.0,670.1 1859.0,670.4 1858.0,669.9 1857.0,670.9 1856.0,670.2 1855.0,669.7 1854.0,669.6 1853.0,670.0 1852.0,669.5 1851.0,670.2 1850.0,669.6 1849.0,669.6 1848.0,669.4 1847.0,669.6 1846.0,669.6 1845.0,669.5 1844.0,669.7 1843.0,669.3 1842.0,669.5 1841.0,669.0 1840.0,669.4 1839.0,668.9 1838.0,669.1 1837.0,669.2 1836.0,669.0 1835.0,668.6"/><polygon points="1862.5,666 1863.7,666 1864.1,848 1862.9,848"/><polygon points="2264.1,849 2265.3,849 2265.5,800 2266.1,725 2267.3,668 2266.0,668 2265.0,725 2264.3,800"/><polygon points="2266.0,663.2 2267.0,662.8 2268.0,662.8 2269.0,663.2 2270.0,662.8 2271.0,663.4 2272.0,663.4 2273.0,663.4 2274.0,663.2 2275.0,663.4 2276.0,663.3 2277.0,663.5 2278.0,663.4 2279.0,663.3 2280.0,663.4 2281.0,663.6 2282.0,663.5 2283.0,663.6 2284.0,663.6 2285.0,663.7 2286.0,664.0 2287.0,664.1 2288.0,663.7 2289.0,664.2 2290.0,664.3 2291.0,663.9 2292.0,664.0 2293.0,663.9 2294.0,664.4 2294.0,670.2 2293.0,670.5 2292.0,670.6 2291.0,670.0 2290.0,670.1 2289.0,670.7 2288.0,669.9 2287.0,669.8 2286.0,670.0 2285.0,669.7 2284.0,669.9 2283.0,670.0 2282.0,669.8 2281.0,669.7 2280.0,669.6 2279.0,669.7 2278.0,669.4 2277.0,669.3 2276.0,669.5 2275.0,669.5 2274.0,669.4 2273.0,669.1 2272.0,669.0 2271.0,669.0 2270.0,668.8 2269.0,669.2 2268.0,669.1 2267.0,669.1 2266.0,668.7"/><polygon points="2293.0,666 2294.2,666 2294.6,848 2293.4,848"/></g><g fill="#150f11"><polygon points="3.9,173.5 4.9,173.7 5.9,173.6 6.9,173.4 7.9,173.5 8.9,173.3 9.9,173.5 10.9,173.3 11.9,173.4 12.9,173.3 13.9,173.6 14.9,172.5 15.9,173.6 16.9,173.3 17.9,173.3 18.9,173.3 19.9,173.5 20.9,173.3 21.9,173.4 22.9,173.6 23.9,173.5 24.9,173.6 25.9,173.6 26.9,173.3 27.9,173.3 28.9,173.6 29.9,173.4 30.9,173.6 31.9,173.4 32.9,173.6 33.9,173.5 34.9,173.3 35.9,171.8 36.9,172.6 37.9,173.4 38.9,173.5 39.9,173.2 40.9,173.3 41.9,173.5 42.9,173.4 43.9,173.4 44.9,173.6 45.9,173.5 46.9,173.5 47.9,172.1 48.9,173.5 49.9,173.5 50.9,173.2 51.9,173.5 52.9,172.6 53.9,173.7 54.9,173.3 55.9,173.2 56.9,173.7 57.9,173.5 58.9,173.6 59.9,173.4 60.9,173.2 61.9,173.3 62.9,173.3 63.9,173.6 64.9,173.3 65.9,173.7 66.9,173.3 67.9,173.5 68.9,173.6 69.9,173.2 70.9,173.2 71.9,173.3 72.9,173.7 73.9,173.4 74.9,173.5 75.9,172.8 76.9,173.6 77.9,173.4 78.9,173.5 79.9,172.3 80.9,173.4 81.9,173.5 82.9,173.6 83.9,173.6 84.9,173.2 85.9,173.5 86.9,173.7 87.9,173.3 88.9,173.4 89.9,173.3 90.9,173.6 91.9,173.5 92.9,173.6 93.9,173.6 94.9,173.4 95.9,173.2 96.9,173.3 97.9,172.2 98.9,173.2 99.9,173.4 100.9,173.2 101.9,173.6 102.9,173.4 103.9,173.4 104.9,173.4 105.9,173.6 106.9,173.2 107.9,173.6 108.9,173.3 109.9,173.4 110.9,173.7 111.9,173.3 112.9,173.7 113.9,171.4 114.9,173.3 115.9,173.3 116.9,173.4 117.9,173.4 118.9,173.2 119.9,173.4 120.9,173.4 121.9,173.4 122.9,173.3 123.9,173.2 124.9,173.2 125.9,173.2 126.9,173.5 127.9,173.4 128.9,173.4 129.9,173.6 130.9,173.5 131.9,173.7 132.9,173.6 133.9,173.3 134.9,173.4 135.9,173.6 136.9,173.4 137.9,173.2 138.9,173.3 139.9,173.6 140.9,173.3 141.9,173.5 142.9,173.6 143.9,173.2 144.9,173.4 145.9,173.7 146.9,173.7 147.9,173.6 148.9,173.4 149.9,173.5 150.9,173.6 151.9,173.4 152.9,173.4 153.9,173.7 154.9,173.6 155.9,173.5 156.9,173.3 157.9,173.4 158.9,173.2 159.9,173.2 160.9,173.6 161.9,173.2 162.9,173.2 163.9,173.5 164.9,173.3 165.9,173.4 166.9,173.3 167.9,173.4 168.9,173.5 169.9,173.5 170.9,173.2 171.9,173.6 172.9,173.4 173.9,173.5 174.9,173.4 175.9,173.5 176.9,173.5 177.9,173.3 178.9,171.6 179.9,173.6 180.9,173.7 181.9,173.2 182.9,173.4 183.9,173.6 184.9,173.3 185.9,173.4 186.9,173.6 187.9,173.4 188.9,173.5 189.9,173.5 190.9,173.2 191.9,173.7 192.9,173.3 193.9,172.3 194.9,173.2 195.9,173.7 196.9,173.4 197.9,173.6 198.9,173.3 199.9,173.5 200.9,173.3 201.9,173.4 202.9,173.6 203.9,173.3 204.9,173.6 205.9,173.5 206.9,173.2 207.9,173.2 208.9,173.4 209.9,173.4 210.9,173.7 211.9,173.4 212.9,173.3 213.9,173.2 214.9,173.5 215.9,173.3 216.9,173.4 217.9,173.7 218.9,173.6 219.9,173.6 220.9,173.3 221.9,173.5 222.9,173.2 223.9,173.5 224.9,173.6 225.9,173.6 226.9,173.5 227.9,173.3 228.9,173.2 229.9,173.3 230.9,173.3 231.9,173.3 232.9,173.3 233.9,173.4 234.9,173.3 235.9,173.3 236.9,173.4 237.9,173.5 238.9,173.5 239.9,173.3 240.9,173.2 241.9,173.4 242.9,173.6 243.9,173.7 244.9,173.7 245.9,173.3 246.9,173.6 247.9,172.7 248.9,173.3 249.9,173.4 250.9,173.7 251.9,173.2 252.9,173.4 253.9,173.6 254.9,173.4 255.9,173.5 256.9,173.3 257.9,173.6 258.9,173.2 259.9,173.6 260.9,173.3 261.9,173.4 262.9,173.4 263.9,173.6 264.9,173.4 265.9,173.3 266.9,173.4 267.9,173.6 268.9,172.4 269.9,173.3 270.9,173.3 271.9,173.7 272.9,173.3 273.9,171.9 274.9,173.4 275.9,173.7 276.9,172.7 277.9,173.5 278.9,173.3 279.9,173.6 280.9,173.2 281.9,173.6 282.9,173.6 283.9,173.5 284.9,173.5 285.9,173.7 286.9,173.5 287.9,173.3 288.9,173.4 289.9,173.5 290.9,173.6 291.9,173.3 292.9,172.1 293.9,173.5 294.9,173.4 295.9,173.4 296.9,173.3 297.9,173.6 298.9,173.7 299.9,173.5 300.9,173.7 301.9,173.6 302.9,173.3 303.9,173.3 304.9,173.6 305.9,173.5 306.9,173.3 307.9,173.3 308.9,173.4 309.9,173.4 310.9,173.7 311.9,173.3 312.9,173.7 313.9,173.3 314.9,173.7 315.9,173.6 316.9,173.7 317.9,172.9 318.9,173.3 319.9,173.7 320.9,173.7 321.9,173.6 322.9,173.5 323.9,173.6 324.9,173.3 325.9,173.3 326.9,173.4 327.9,173.6 328.9,173.6 329.9,173.4 330.9,173.4 331.9,173.3 332.9,173.6 333.9,173.5 334.9,173.6 335.9,173.2 336.9,173.7 337.9,173.3 338.9,173.5 339.9,173.4 340.9,173.2 341.9,173.6 342.9,173.5 343.9,173.3 344.9,173.6 345.9,173.4 346.9,173.5 347.9,173.3 348.9,173.5 349.9,173.5 350.9,173.6 351.9,173.3 352.9,173.7 353.9,173.5 354.9,173.6 355.9,173.6 356.9,173.6 357.9,173.6 358.9,173.4 359.9,172.2 360.9,173.4 361.9,173.3 362.9,173.6 363.9,173.3 364.9,173.2 365.9,173.5 366.9,173.5 367.9,173.2 368.9,173.4 369.9,173.6 370.9,173.5 371.9,173.4 372.9,173.3 373.9,173.2 374.9,173.5 375.9,173.6 376.9,173.2 377.9,173.3 378.9,173.6 379.9,173.5 380.9,173.6 381.9,173.6 382.9,173.6 383.9,173.3 384.9,173.5 385.9,173.3 386.9,173.4 387.9,173.7 388.9,171.7 389.9,173.6 390.9,173.6 391.9,173.2 392.9,173.7 393.9,173.2 394.9,173.5 395.9,171.7 396.9,173.5 397.9,173.2 398.9,173.6 399.9,173.3 400.9,173.6 401.9,173.3 402.9,173.6 403.9,173.4 404.9,172.3 405.9,173.5 406.9,173.2 407.9,173.7 408.9,173.2 409.9,173.3 410.9,173.7 411.9,173.2 412.9,173.6 413.9,173.6 414.9,173.4 415.9,173.4 416.9,173.4 417.9,173.5 418.9,173.6 419.9,173.3 420.9,173.6 421.9,173.5 422.9,173.3 423.9,173.3 424.9,173.5 425.9,173.7 426.9,173.5 427.9,173.4 428.9,173.3 429.9,172.3 430.9,173.3 431.9,173.4 432.9,173.6 433.9,173.6 434.9,173.6 435.9,173.7 436.9,173.5 437.9,173.5 438.9,173.4 439.9,173.3 440.9,173.4 441.9,173.3 442.9,173.3 443.9,173.2 444.9,173.5 445.9,173.5 446.9,173.5 447.9,173.3 448.9,173.7 449.9,173.3 450.9,173.3 451.9,173.3 452.9,173.5 453.9,173.3 454.9,173.5 455.9,173.3 456.9,173.5 457.9,173.4 458.9,173.5 459.9,173.7 460.9,173.7 461.9,173.4 462.9,173.4 463.9,173.4 464.9,173.3 465.9,173.4 466.9,173.4 467.9,173.5 468.9,173.5 469.9,173.2 470.9,173.2 471.9,173.7 472.9,173.3 473.9,173.4 474.9,173.4 475.9,173.5 476.9,173.4 477.9,173.5 478.9,173.5 479.9,173.7 480.9,173.7 481.9,173.4 482.9,173.5 483.9,173.6 484.9,173.4 485.9,173.4 486.9,173.7 487.9,173.5 488.9,173.6 489.9,173.2 490.9,173.7 491.9,173.7 492.9,173.4 493.9,173.6 494.9,173.3 495.9,173.4 496.9,173.3 497.9,173.4 498.9,173.3 499.9,173.6 500.9,173.4 501.9,173.4 502.9,173.5 503.9,173.6 504.9,173.5 505.9,173.2 506.9,173.5 507.9,173.3 508.9,173.7 509.9,173.3 510.9,173.4 511.9,173.4 512.9,173.6 513.9,173.5 514.9,173.7 515.9,173.6 516.9,173.2 517.9,173.6 518.9,173.3 519.9,173.6 520.9,173.4 521.9,173.5 522.9,173.4 523.9,173.5 524.9,173.2 525.9,173.3 526.9,173.6 527.9,173.4 528.9,173.7 529.9,173.4 530.9,173.4 531.9,173.6 532.9,173.4 533.9,173.6 534.9,173.4 535.9,173.2 536.9,173.6 537.9,173.6 538.9,173.7 539.9,173.3 540.9,173.5 541.9,173.5 542.9,173.5 543.9,173.2 544.9,173.2 545.9,173.6 546.9,173.7 547.9,173.7 548.9,172.9 549.9,173.6 550.9,173.6 551.9,173.5 552.9,173.4 553.9,173.3 554.9,173.6 555.9,173.3 556.9,173.2 557.9,173.6 558.9,173.2 558.9,178.8 557.9,178.8 556.9,178.9 555.9,179.0 554.9,179.2 553.9,179.2 552.9,179.2 551.9,179.1 550.9,179.3 549.9,179.0 548.9,178.9 547.9,179.2 546.9,179.3 545.9,178.8 544.9,179.3 543.9,179.2 542.9,179.1 541.9,178.9 540.9,179.3 539.9,179.1 538.9,178.9 537.9,178.8 536.9,179.1 535.9,178.8 534.9,179.0 533.9,179.2 532.9,178.9 531.9,179.2 530.9,178.8 529.9,179.1 528.9,179.1 527.9,179.3 526.9,179.8 525.9,179.1 524.9,179.3 523.9,179.3 522.9,178.9 521.9,180.9 520.9,179.1 519.9,179.3 518.9,179.2 517.9,179.2 516.9,179.3 515.9,179.3 514.9,179.3 513.9,179.2 512.9,178.9 511.9,179.1 510.9,178.9 509.9,179.2 508.9,179.3 507.9,179.1 506.9,179.0 505.9,178.8 504.9,178.9 503.9,181.1 502.9,179.0 501.9,179.3 500.9,179.0 499.9,179.2 498.9,179.2 497.9,179.2 496.9,179.2 495.9,179.2 494.9,178.8 493.9,179.1 492.9,179.0 491.9,179.1 490.9,178.9 489.9,178.9 488.9,179.1 487.9,178.8 486.9,179.2 485.9,179.1 484.9,179.2 483.9,179.1 482.9,178.9 481.9,179.1 480.9,179.0 479.9,178.8 478.9,178.8 477.9,180.4 476.9,179.3 475.9,179.3 474.9,179.3 473.9,179.3 472.9,179.3 471.9,179.0 470.9,179.0 469.9,178.8 468.9,179.3 467.9,178.9 466.9,179.3 465.9,179.1 464.9,180.6 463.9,180.8 462.9,179.2 461.9,178.8 460.9,179.2 459.9,179.2 458.9,180.6 457.9,179.0 456.9,179.0 455.9,178.9 454.9,178.9 453.9,179.3 452.9,178.9 451.9,179.1 450.9,179.0 449.9,179.8 448.9,179.1 447.9,179.2 446.9,179.1 445.9,179.1 444.9,179.0 443.9,178.8 442.9,180.7 441.9,179.2 440.9,179.0 439.9,179.1 438.9,179.0 437.9,179.3 436.9,178.9 435.9,179.2 434.9,179.1 433.9,179.2 432.9,178.8 431.9,179.2 430.9,178.9 429.9,179.2 428.9,179.0 427.9,178.9 426.9,179.1 425.9,178.9 424.9,179.2 423.9,179.1 422.9,178.9 421.9,180.3 420.9,179.0 419.9,179.0 418.9,179.0 417.9,179.2 416.9,178.9 415.9,179.2 414.9,179.1 413.9,179.1 412.9,179.2 411.9,178.9 410.9,179.1 409.9,179.2 408.9,179.0 407.9,178.9 406.9,179.2 405.9,179.1 404.9,179.2 403.9,179.0 402.9,178.9 401.9,179.0 400.9,179.0 399.9,179.2 398.9,179.1 397.9,179.3 396.9,179.0 395.9,178.8 394.9,178.8 393.9,179.2 392.9,179.1 391.9,179.0 390.9,179.1 389.9,179.0 388.9,179.3 387.9,178.8 386.9,179.0 385.9,179.2 384.9,178.8 383.9,179.3 382.9,179.3 381.9,179.3 380.9,178.9 379.9,179.0 378.9,179.0 377.9,178.8 376.9,179.3 375.9,179.2 374.9,179.2 373.9,180.6 372.9,179.2 371.9,178.8 370.9,179.2 369.9,179.1 368.9,178.9 367.9,179.1 366.9,179.2 365.9,179.1 364.9,178.9 363.9,178.9 362.9,179.0 361.9,179.3 360.9,179.1 359.9,179.0 358.9,179.3 357.9,179.2 356.9,179.0 355.9,179.0 354.9,179.2 353.9,179.2 352.9,179.1 351.9,179.3 350.9,179.2 349.9,179.0 348.9,179.1 347.9,179.2 346.9,179.1 345.9,179.0 344.9,178.8 343.9,179.1 342.9,179.1 341.9,179.0 340.9,180.4 339.9,179.2 338.9,179.1 337.9,179.3 336.9,178.9 335.9,178.9 334.9,178.8 333.9,179.2 332.9,179.1 331.9,179.2 330.9,179.0 329.9,179.0 328.9,179.0 327.9,179.1 326.9,179.2 325.9,179.0 324.9,178.9 323.9,180.0 322.9,178.8 321.9,179.9 320.9,179.0 319.9,179.5 318.9,179.0 317.9,179.2 316.9,179.1 315.9,179.0 314.9,178.9 313.9,179.1 312.9,179.0 311.9,179.1 310.9,179.3 309.9,179.2 308.9,179.0 307.9,179.1 306.9,178.9 305.9,179.1 304.9,178.8 303.9,179.2 302.9,179.2 301.9,180.6 300.9,178.8 299.9,179.1 298.9,179.1 297.9,179.1 296.9,179.1 295.9,179.2 294.9,179.3 293.9,179.0 292.9,179.0 291.9,178.9 290.9,179.3 289.9,179.1 288.9,179.1 287.9,180.1 286.9,179.0 285.9,178.9 284.9,178.9 283.9,179.0 282.9,179.0 281.9,179.0 280.9,178.9 279.9,179.3 278.9,178.9 277.9,180.0 276.9,178.8 275.9,179.2 274.9,178.9 273.9,179.2 272.9,179.2 271.9,179.1 270.9,180.7 269.9,178.9 268.9,179.0 267.9,179.2 266.9,179.0 265.9,179.2 264.9,179.2 263.9,178.9 262.9,178.9 261.9,179.1 260.9,179.0 259.9,178.9 258.9,179.1 257.9,179.0 256.9,179.1 255.9,179.0 254.9,179.0 253.9,179.2 252.9,179.2 251.9,178.8 250.9,179.2 249.9,179.2 248.9,179.2 247.9,178.9 246.9,179.2 245.9,179.3 244.9,179.1 243.9,180.4 242.9,178.9 241.9,179.0 240.9,178.8 239.9,179.1 238.9,179.0 237.9,179.3 236.9,179.8 235.9,178.9 234.9,180.6 233.9,179.2 232.9,179.1 231.9,179.0 230.9,179.0 229.9,179.2 228.9,179.0 227.9,179.0 226.9,178.9 225.9,179.2 224.9,179.0 223.9,179.2 222.9,179.0 221.9,179.3 220.9,178.9 219.9,178.9 218.9,179.2 217.9,179.3 216.9,178.9 215.9,178.9 214.9,179.0 213.9,178.8 212.9,179.1 211.9,178.9 210.9,179.1 209.9,180.8 208.9,178.9 207.9,178.9 206.9,178.9 205.9,179.1 204.9,178.8 203.9,179.2 202.9,179.1 201.9,180.8 200.9,178.9 199.9,179.1 198.9,179.0 197.9,179.0 196.9,179.2 195.9,179.1 194.9,179.3 193.9,179.1 192.9,178.9 191.9,179.1 190.9,179.2 189.9,178.9 188.9,179.2 187.9,178.9 186.9,178.9 185.9,178.8 184.9,179.3 183.9,179.0 182.9,179.0 181.9,179.2 180.9,179.3 179.9,179.0 178.9,178.9 177.9,179.2 176.9,179.2 175.9,179.1 174.9,179.2 173.9,178.9 172.9,179.7 171.9,179.3 170.9,179.2 169.9,179.2 168.9,178.9 167.9,180.3 166.9,178.9 165.9,178.9 164.9,179.0 163.9,179.3 162.9,179.0 161.9,178.8 160.9,179.0 159.9,178.9 158.9,179.2 157.9,178.8 156.9,179.3 155.9,178.9 154.9,178.9 153.9,179.1 152.9,179.0 151.9,179.2 150.9,178.9 149.9,179.0 148.9,179.0 147.9,178.9 146.9,178.9 145.9,179.0 144.9,179.3 143.9,179.1 142.9,178.9 141.9,179.0 140.9,179.2 139.9,179.0 138.9,179.2 137.9,179.1 136.9,179.2 135.9,179.0 134.9,179.3 133.9,178.9 132.9,179.2 131.9,179.0 130.9,179.2 129.9,179.3 128.9,179.3 127.9,179.0 126.9,179.1 125.9,179.0 124.9,179.1 123.9,178.9 122.9,179.2 121.9,179.3 120.9,179.1 119.9,179.2 118.9,179.2 117.9,179.0 116.9,179.1 115.9,179.1 114.9,179.1 113.9,179.0 112.9,180.1 111.9,179.1 110.9,178.9 109.9,179.2 108.9,179.0 107.9,179.1 106.9,179.2 105.9,179.3 104.9,178.9 103.9,178.8 102.9,180.1 101.9,178.9 100.9,179.0 99.9,179.2 98.9,179.0 97.9,179.1 96.9,179.1 95.9,178.9 94.9,179.0 93.9,179.3 92.9,178.9 91.9,179.1 90.9,179.2 89.9,179.0 88.9,179.1 87.9,179.1 86.9,179.1 85.9,178.9 84.9,179.2 83.9,179.0 82.9,179.1 81.9,180.7 80.9,180.3 79.9,179.1 78.9,178.9 77.9,178.9 76.9,179.1 75.9,179.2 74.9,179.3 73.9,179.0 72.9,178.9 71.9,178.8 70.9,178.8 69.9,179.0 68.9,179.1 67.9,179.2 66.9,179.0 65.9,179.2 64.9,178.9 63.9,179.1 62.9,179.1 61.9,179.1 60.9,179.2 59.9,178.9 58.9,179.2 57.9,179.1 56.9,179.1 55.9,178.9 54.9,179.3 53.9,178.8 52.9,179.0 51.9,179.2 50.9,178.8 49.9,180.6 48.9,178.9 47.9,179.0 46.9,179.0 45.9,179.2 44.9,179.0 43.9,178.9 42.9,179.0 41.9,180.8 40.9,179.3 39.9,178.9 38.9,179.2 37.9,179.0 36.9,178.9 35.9,179.2 34.9,178.9 33.9,179.3 32.9,179.2 31.9,179.1 30.9,178.8 29.9,179.0 28.9,178.9 27.9,179.0 26.9,179.0 25.9,179.2 24.9,179.3 23.9,179.1 22.9,179.3 21.9,179.3 20.9,178.9 19.9,178.8 18.9,179.1 17.9,179.2 16.9,179.1 15.9,179.1 14.9,179.2 13.9,178.8 12.9,179.0 11.9,179.0 10.9,178.9 9.9,179.1 8.9,179.1 7.9,178.9 6.9,179.3 5.9,179.1 4.9,178.8 3.9,178.9"/><polygon points="559,173.8 560.3,173.8 561.6,150 563.0,128 564.0,120.5 565.5,118.7 570.4,118.7 571.4,123 571.6,200 571.9,250 572.4,262 570.4,262 569.9,250 569.6,200 569.3,124.4 566.0,124.2 565.0,128 563.4,150 561.6,179 559,179"/><polygon points="570.8,258.2 571.8,261.6 572.8,262.7 573.8,263.2 574.8,264.1 575.8,265.2 576.8,266.2 577.8,266.0 578.8,267.0 579.8,267.5 580.8,267.8 581.8,268.5 582.8,268.9 583.8,269.4 584.8,269.7 585.8,270.3 586.8,270.7 587.8,270.9 588.8,270.9 589.8,271.2 590.8,271.6 591.8,271.8 592.8,271.9 593.8,272.2 594.8,272.3 595.8,272.8 596.8,272.8 597.8,273.1 598.8,273.3 599.8,273.5 600.8,272.1 601.8,274.1 602.8,273.9 603.8,274.4 604.8,274.4 605.8,274.7 606.8,274.5 607.8,274.8 608.8,274.7 609.8,275.2 610.8,275.3 611.8,275.2 612.8,275.4 613.8,275.4 614.8,275.7 615.8,276.0 616.8,275.9 617.8,276.2 618.8,276.2 619.8,276.4 620.8,276.6 621.8,276.7 622.8,276.8 623.8,277.1 624.8,276.9 625.8,277.1 626.8,277.5 627.8,277.7 628.8,277.6 629.8,276.5 630.8,277.8 631.8,278.0 632.8,278.1 633.8,277.8 634.8,278.2 635.8,278.1 636.8,278.1 637.8,278.3 638.8,278.1 639.8,278.3 640.8,278.6 641.8,278.3 642.8,278.6 643.8,278.8 644.8,278.6 645.8,279.0 646.8,278.7 647.8,278.8 648.8,279.0 649.8,277.4 650.8,279.4 651.8,279.4 652.8,279.4 653.8,279.3 654.8,279.5 655.8,279.4 656.8,279.8 657.8,279.7 658.8,280.0 659.8,279.7 660.8,279.7 661.8,280.1 662.8,279.9 663.8,280.1 664.8,279.9 665.8,280.4 666.8,280.0 667.8,280.2 668.8,280.4 669.8,280.2 670.8,280.2 671.8,280.4 672.8,280.5 673.8,279.5 674.8,280.4 675.8,280.5 676.8,280.5 677.8,280.6 678.8,280.6 679.8,278.9 680.8,280.7 681.8,279.5 682.8,281.0 683.8,281.1 684.8,280.9 685.8,280.8 686.8,281.2 687.8,279.8 688.8,281.3 689.8,281.1 690.8,281.4 691.8,281.5 692.8,281.2 693.8,281.6 694.8,281.6 695.8,281.3 696.8,281.8 697.8,281.4 698.8,281.7 699.8,281.8 700.8,281.8 701.8,281.6 702.8,281.5 703.8,282.0 704.8,281.7 705.8,281.9 706.8,281.9 707.8,281.9 708.8,280.2 709.8,281.8 710.8,281.9 711.8,280.5 712.8,282.1 713.8,281.9 714.8,282.0 715.8,282.1 716.8,281.9 717.8,282.2 718.8,282.0 719.8,282.1 720.8,282.3 721.8,282.2 722.8,282.4 723.8,280.5 724.8,282.4 725.8,282.6 726.8,282.3 727.8,282.7 728.8,282.4 729.8,282.3 730.8,282.3 731.8,282.7 732.8,282.5 733.8,282.6 734.8,282.8 735.8,282.8 736.8,282.9 737.8,282.8 738.8,282.5 739.8,282.6 740.8,282.9 741.8,282.9 742.8,282.9 743.8,283.1 744.8,282.8 745.8,283.2 746.8,283.2 747.8,282.9 748.8,282.9 749.8,282.8 750.8,282.9 751.8,283.0 752.8,283.1 753.8,283.2 754.8,283.0 755.8,283.2 756.8,283.5 757.8,283.4 758.8,283.2 759.8,283.4 760.8,283.3 761.8,283.6 762.8,282.0 763.8,283.3 764.8,283.3 765.8,283.3 766.8,283.8 767.8,283.4 768.8,283.5 769.8,283.7 770.8,283.7 771.8,283.5 772.8,283.8 773.8,282.3 774.8,283.9 775.8,283.7 776.8,284.0 777.8,283.9 778.8,283.9 779.8,284.0 780.8,283.9 781.8,283.9 782.8,284.0 783.8,284.3 784.8,284.1 785.8,284.1 786.8,284.0 787.8,284.2 788.8,284.0 789.8,284.3 790.8,284.0 791.8,282.5 792.8,284.1 793.8,283.4 794.8,284.4 795.8,284.3 796.8,282.4 797.8,284.3 798.8,284.6 799.8,284.6 800.8,284.3 801.8,284.3 802.8,284.6 803.8,284.4 804.8,284.6 805.8,284.5 806.8,284.8 807.8,284.4 808.8,284.6 809.8,284.8 810.8,284.8 811.8,284.9 812.8,284.7 813.8,285.0 814.8,284.8 815.8,284.9 816.8,284.8 817.8,284.8 818.8,284.7 819.8,284.9 820.8,285.1 821.8,285.0 822.8,284.8 823.8,285.2 824.8,285.1 825.8,285.0 826.8,285.0 827.8,285.2 828.8,285.1 829.8,285.3 830.8,285.1 831.8,285.3 832.8,285.4 833.8,285.0 834.8,285.2 835.8,285.1 836.8,285.1 837.8,285.4 838.8,285.1 839.8,285.4 840.8,285.2 841.8,285.1 842.8,285.2 843.8,285.4 844.8,285.4 845.8,285.1 846.8,285.2 847.8,285.3 848.8,285.3 849.8,285.2 850.8,285.6 851.8,285.3 852.8,285.4 853.8,285.5 854.8,285.3 855.8,285.5 856.8,285.6 857.8,285.0 858.8,285.5 859.8,285.8 860.8,285.7 861.8,285.8 862.8,285.5 863.8,285.7 864.8,285.9 865.8,285.7 866.8,285.9 867.8,285.9 868.8,285.9 869.8,285.8 870.8,285.5 871.8,285.9 872.8,285.9 873.8,285.9 874.8,285.9 875.8,285.9 876.8,285.7 877.8,285.8 878.8,286.1 879.8,286.0 880.8,284.5 881.8,285.9 882.8,285.8 883.8,285.9 884.8,286.1 885.8,286.1 886.8,286.1 887.8,286.0 888.8,286.1 889.8,286.1 890.8,286.1 891.8,286.0 892.8,286.2 893.8,286.0 894.8,286.1 895.8,286.3 896.8,286.0 897.8,286.3 898.8,286.4 899.8,286.0 900.8,286.0 901.8,286.1 902.8,286.1 903.8,286.4 904.8,286.2 905.8,286.4 906.8,286.4 907.8,286.1 908.8,286.3 909.8,286.4 910.8,286.5 911.8,286.1 912.8,285.1 913.8,286.2 914.8,286.2 915.8,286.3 916.8,286.5 917.8,286.6 918.8,286.7 919.8,286.6 920.8,286.7 921.8,286.6 922.8,286.4 923.8,286.5 924.8,286.8 925.8,286.7 926.8,286.0 927.8,286.8 928.8,286.6 929.8,286.6 930.8,286.8 931.8,286.9 932.8,286.6 933.8,286.9 934.8,286.7 935.8,286.6 936.8,286.5 937.8,286.8 938.8,286.8 939.8,286.6 940.8,286.9 941.8,286.7 942.8,286.9 943.8,287.1 944.8,286.7 945.8,287.2 946.8,286.9 947.8,287.0 948.8,286.9 949.8,286.9 950.8,286.8 951.8,286.6 952.8,286.8 953.8,287.2 954.8,286.9 955.8,287.0 956.8,287.2 957.8,286.9 958.8,287.2 959.8,287.4 960.8,287.0 961.8,287.1 962.8,287.2 963.8,287.5 964.8,287.0 965.8,287.1 966.8,287.4 967.8,287.3 968.8,287.2 969.8,287.3 971.4,287.4 971.4,292.5 969.8,292.7 968.8,292.3 967.8,292.5 966.8,292.7 965.8,292.7 964.8,292.4 963.8,292.2 962.8,292.6 961.8,292.6 960.8,292.6 959.8,292.4 958.8,292.4 957.8,292.6 956.8,292.3 955.8,292.2 954.8,292.3 953.8,292.2 952.8,293.6 951.8,292.4 950.8,292.2 949.8,292.0 948.8,292.0 947.8,292.3 946.8,291.9 945.8,292.1 944.8,292.1 943.8,292.1 942.8,292.0 941.8,292.0 940.8,291.8 939.8,291.9 938.8,292.1 937.8,292.1 936.8,292.0 935.8,292.2 934.8,291.9 933.8,292.0 932.8,292.0 931.8,292.0 930.8,292.1 929.8,292.0 928.8,291.7 927.8,291.7 926.8,291.9 925.8,291.9 924.8,292.0 923.8,291.9 922.8,291.7 921.8,291.9 920.8,291.8 919.8,291.6 918.8,291.6 917.8,291.8 916.8,291.4 915.8,291.8 914.8,291.6 913.8,291.5 912.8,291.4 911.8,291.7 910.8,291.3 909.8,291.4 908.8,291.4 907.8,291.5 906.8,291.4 905.8,291.5 904.8,291.4 903.8,291.2 902.8,291.4 901.8,291.6 900.8,291.4 899.8,291.3 898.8,291.4 897.8,291.3 896.8,291.5 895.8,291.6 894.8,291.4 893.8,291.4 892.8,291.3 891.8,292.2 890.8,291.2 889.8,291.1 888.8,291.1 887.8,291.4 886.8,290.9 885.8,291.0 884.8,291.2 883.8,291.1 882.8,291.2 881.8,291.0 880.8,290.9 879.8,291.1 878.8,290.9 877.8,291.3 876.8,291.1 875.8,290.9 874.8,291.1 873.8,290.8 872.8,291.0 871.8,291.0 870.8,291.1 869.8,290.9 868.8,291.1 867.8,290.8 866.8,292.0 865.8,291.1 864.8,291.0 863.8,291.0 862.8,290.9 861.8,290.7 860.8,290.9 859.8,291.0 858.8,290.7 857.8,290.9 856.8,290.6 855.8,290.9 854.8,290.6 853.8,290.9 852.8,290.9 851.8,290.8 850.8,290.5 849.8,290.4 848.8,290.5 847.8,290.8 846.8,290.5 845.8,290.8 844.8,290.6 843.8,290.5 842.8,290.3 841.8,290.4 840.8,290.2 839.8,290.7 838.8,290.6 837.8,290.3 836.8,290.6 835.8,290.6 834.8,290.3 833.8,290.6 832.8,290.6 831.8,290.5 830.8,290.5 829.8,290.3 828.8,290.1 827.8,290.3 826.8,290.0 825.8,290.1 824.8,291.3 823.8,290.3 822.8,289.9 821.8,290.3 820.8,290.3 819.8,291.3 818.8,289.9 817.8,290.2 816.8,290.1 815.8,289.8 814.8,289.8 813.8,289.8 812.8,290.0 811.8,289.8 810.8,290.0 809.8,289.7 808.8,291.3 807.8,289.9 806.8,289.7 805.8,289.7 804.8,289.9 803.8,289.9 802.8,289.8 801.8,289.4 800.8,289.6 799.8,289.4 798.8,289.6 797.8,289.6 796.8,289.7 795.8,289.3 794.8,290.4 793.8,289.3 792.8,289.6 791.8,289.4 790.8,289.4 789.8,289.4 788.8,289.4 787.8,289.3 786.8,289.4 785.8,289.3 784.8,289.1 783.8,289.0 782.8,289.3 781.8,289.2 780.8,289.0 779.8,289.1 778.8,289.0 777.8,289.2 776.8,289.3 775.8,289.1 774.8,289.1 773.8,289.8 772.8,288.9 771.8,288.7 770.8,288.7 769.8,288.6 768.8,288.6 767.8,288.9 766.8,289.0 765.8,288.5 764.8,288.6 763.8,288.9 762.8,288.8 761.8,288.9 760.8,288.7 759.8,288.5 758.8,288.4 757.8,288.5 756.8,288.4 755.8,288.5 754.8,288.4 753.8,288.3 752.8,288.3 751.8,288.3 750.8,288.4 749.8,288.1 748.8,288.4 747.8,288.0 746.8,288.2 745.8,288.1 744.8,288.1 743.8,288.0 742.8,288.2 741.8,288.2 740.8,287.8 739.8,288.0 738.8,287.7 737.8,287.9 736.8,287.8 735.8,288.1 734.8,288.1 733.8,287.8 732.8,287.7 731.8,287.5 730.8,287.9 729.8,287.9 728.8,287.9 727.8,287.5 726.8,287.8 725.8,287.4 724.8,287.6 723.8,287.3 722.8,289.0 721.8,287.4 720.8,287.2 719.8,287.2 718.8,287.6 717.8,287.6 716.8,287.2 715.8,287.4 714.8,287.4 713.8,287.1 712.8,287.3 711.8,287.1 710.8,287.1 709.8,287.0 708.8,287.0 707.8,287.3 706.8,286.9 705.8,286.7 704.8,288.6 703.8,287.0 702.8,287.1 701.8,286.8 700.8,287.9 699.8,286.6 698.8,286.7 697.8,286.7 696.8,286.7 695.8,286.9 694.8,286.5 693.8,286.7 692.8,286.4 691.8,286.4 690.8,286.6 689.8,286.3 688.8,286.5 687.8,286.5 686.8,286.1 685.8,286.1 684.8,286.5 683.8,286.1 682.8,286.0 681.8,286.3 680.8,286.3 679.8,286.1 678.8,286.0 677.8,286.1 676.8,285.7 675.8,285.9 674.8,286.9 673.8,285.6 672.8,285.7 671.8,285.6 670.8,285.5 669.8,285.5 668.8,285.4 667.8,285.7 666.8,285.6 665.8,285.4 664.8,285.5 663.8,285.4 662.8,285.1 661.8,285.4 660.8,285.1 659.8,285.0 658.8,285.0 657.8,284.9 656.8,285.0 655.8,284.6 654.8,284.7 653.8,284.8 652.8,284.4 651.8,284.3 650.8,284.4 649.8,284.5 648.8,284.3 647.8,284.2 646.8,284.0 645.8,283.9 644.8,284.1 643.8,283.9 642.8,283.9 641.8,283.6 640.8,283.6 639.8,283.6 638.8,283.3 637.8,283.2 636.8,283.4 635.8,283.1 634.8,283.5 633.8,283.4 632.8,283.3 631.8,282.7 630.8,283.0 629.8,282.7 628.8,282.6 627.8,282.5 626.8,282.4 625.8,282.7 624.8,282.3 623.8,282.1 622.8,281.8 621.8,281.8 620.8,281.6 619.8,281.9 618.8,281.5 617.8,281.5 616.8,281.1 615.8,281.4 614.8,281.0 613.8,282.3 612.8,280.7 611.8,280.4 610.8,280.3 609.8,280.3 608.8,280.4 607.8,280.2 606.8,279.7 605.8,279.6 604.8,279.5 603.8,279.4 602.8,279.3 601.8,279.0 600.8,278.9 599.8,278.8 598.8,278.4 597.8,278.4 596.8,278.0 595.8,278.0 594.8,279.3 593.8,277.2 592.8,276.9 591.8,276.9 590.8,276.9 589.8,276.4 588.8,276.2 587.8,275.8 586.8,275.7 585.8,275.6 584.8,275.1 583.8,274.6 582.8,274.0 581.8,273.8 580.8,273.1 579.8,272.5 578.8,272.0 577.8,271.7 576.8,271.3 575.8,270.4 574.8,269.2 573.8,268.8 572.8,267.6 571.8,266.7 570.8,263.8"/><polygon points="1002.2,258.5 1003.2,261.7 1004.2,262.6 1005.2,263.0 1006.2,263.7 1007.2,264.8 1008.2,265.4 1009.2,265.9 1010.2,266.2 1011.2,266.6 1012.2,266.9 1013.2,267.3 1014.2,267.7 1015.2,268.2 1016.2,268.7 1017.2,268.9 1018.2,269.0 1019.2,269.2 1020.2,269.7 1021.2,269.9 1022.2,270.0 1023.2,268.8 1024.2,270.5 1025.2,270.6 1026.2,270.8 1027.2,271.1 1028.2,271.3 1029.2,271.5 1030.2,271.6 1031.2,271.8 1032.2,272.3 1033.2,272.7 1034.2,272.6 1035.2,272.9 1036.2,272.8 1037.2,272.8 1038.2,273.1 1039.2,273.4 1040.2,273.4 1041.2,273.6 1042.2,273.8 1043.2,272.3 1044.2,274.1 1045.2,274.1 1046.2,274.4 1047.2,274.2 1048.2,274.4 1049.2,274.4 1050.2,274.9 1051.2,275.0 1052.2,274.8 1053.2,274.9 1054.2,275.1 1055.2,275.5 1056.2,275.5 1057.2,275.5 1058.2,275.7 1059.2,275.9 1060.2,276.2 1061.2,275.9 1062.2,276.4 1063.2,276.4 1064.2,276.4 1065.2,276.6 1066.2,276.5 1067.2,276.5 1068.2,276.4 1069.2,276.8 1070.2,276.9 1071.2,277.0 1072.2,276.9 1073.2,276.9 1074.2,276.8 1075.2,277.0 1076.2,277.2 1077.2,277.1 1078.2,277.3 1079.2,277.5 1080.2,277.4 1081.2,277.6 1082.2,277.8 1083.2,277.8 1084.2,277.9 1085.2,277.8 1086.2,278.1 1087.2,277.9 1088.2,278.2 1089.2,278.3 1090.2,276.7 1091.2,278.1 1092.2,278.4 1093.2,278.4 1094.2,278.3 1095.2,278.7 1096.2,278.5 1097.2,278.7 1098.2,278.6 1099.2,278.4 1100.2,278.7 1101.2,278.8 1102.2,278.8 1103.2,278.9 1104.2,278.8 1105.2,279.2 1106.2,278.4 1107.2,279.2 1108.2,279.0 1109.2,279.2 1110.2,279.3 1111.2,279.3 1112.2,279.1 1113.2,279.3 1114.2,279.5 1115.2,279.2 1116.2,279.4 1117.2,279.2 1118.2,279.4 1119.2,279.6 1120.2,279.5 1121.2,278.7 1122.2,279.6 1123.2,279.5 1124.2,279.1 1125.2,279.9 1126.2,278.3 1127.2,279.7 1128.2,278.5 1129.2,279.8 1130.2,279.8 1131.2,279.9 1132.2,280.3 1133.2,280.3 1134.2,280.0 1135.2,280.2 1136.2,280.0 1137.2,280.4 1138.2,280.2 1139.2,280.4 1140.2,280.1 1141.2,280.4 1142.2,280.2 1143.2,280.4 1144.2,280.3 1145.2,280.7 1146.2,280.4 1147.2,280.7 1148.2,280.5 1149.2,280.4 1150.2,280.7 1151.2,279.9 1152.2,280.5 1153.2,280.6 1154.2,280.9 1155.2,280.7 1156.2,280.8 1157.2,280.6 1158.2,281.0 1159.2,281.1 1160.2,281.0 1161.2,281.0 1162.2,280.7 1163.2,280.9 1164.2,280.9 1165.2,280.9 1166.2,280.9 1167.2,281.0 1168.2,281.1 1169.2,281.3 1170.2,280.9 1171.2,281.1 1172.2,281.2 1173.2,281.2 1174.2,281.5 1175.2,281.4 1176.2,281.1 1177.2,281.6 1178.2,281.4 1179.2,281.6 1180.2,281.3 1181.2,281.5 1182.2,281.4 1183.2,281.7 1184.2,281.3 1185.2,281.6 1186.2,281.6 1187.2,281.9 1188.2,281.8 1189.2,281.6 1190.2,282.0 1191.2,281.9 1192.2,281.6 1193.2,281.8 1194.2,282.0 1195.2,282.1 1196.2,281.9 1197.2,282.1 1198.2,282.1 1199.2,281.8 1200.2,282.0 1201.2,282.2 1202.2,281.9 1203.2,282.0 1204.2,282.1 1205.2,282.0 1206.2,282.3 1207.2,282.1 1208.2,281.3 1209.2,282.4 1210.2,282.3 1211.2,282.4 1212.2,282.2 1213.2,282.4 1214.2,282.3 1215.2,280.9 1216.2,282.2 1217.2,282.6 1218.2,282.3 1219.2,282.4 1220.2,282.4 1221.2,282.6 1222.2,282.6 1223.2,282.7 1224.2,282.6 1225.2,282.9 1226.2,282.8 1227.2,282.8 1228.2,282.8 1229.2,282.7 1230.2,282.6 1231.2,283.0 1232.2,282.8 1233.2,283.1 1234.2,282.9 1235.2,283.1 1236.2,282.9 1237.2,283.0 1238.2,283.2 1239.2,282.8 1240.2,282.9 1241.2,283.3 1242.2,283.1 1243.2,283.0 1244.2,283.0 1245.2,282.9 1246.2,283.2 1247.2,283.2 1248.2,283.4 1249.2,283.4 1250.2,283.5 1251.2,283.3 1252.2,283.1 1253.2,283.3 1254.2,283.3 1255.2,283.4 1256.2,283.5 1257.2,283.5 1258.2,283.4 1259.2,283.5 1260.2,282.3 1261.2,283.6 1262.2,283.2 1263.2,283.4 1264.2,283.7 1265.2,283.8 1266.2,283.8 1267.2,283.8 1268.2,283.8 1269.2,283.8 1270.2,283.8 1271.2,283.7 1272.2,283.6 1273.2,283.8 1274.2,283.7 1275.2,283.9 1276.2,283.6 1277.2,283.6 1278.2,283.7 1279.2,283.7 1280.2,283.9 1281.2,283.7 1282.2,283.7 1283.2,284.1 1284.2,283.7 1285.2,284.0 1286.2,283.7 1287.2,284.0 1288.2,284.0 1289.2,284.1 1290.2,284.1 1291.2,284.2 1292.2,284.2 1293.2,283.9 1294.2,283.9 1295.2,284.3 1296.2,284.1 1297.2,284.1 1298.2,284.2 1299.2,284.3 1300.2,284.3 1301.2,283.9 1302.2,284.1 1303.2,284.3 1304.2,284.3 1305.2,284.4 1306.2,284.3 1307.2,284.4 1308.2,282.7 1309.2,284.1 1310.2,284.5 1311.2,284.4 1312.2,284.2 1313.2,284.5 1314.2,284.6 1315.2,284.1 1316.2,284.3 1317.2,284.3 1318.2,284.4 1319.2,284.5 1320.2,282.7 1321.2,284.4 1322.2,284.4 1323.2,284.5 1324.2,284.5 1325.2,284.3 1326.2,284.6 1327.2,284.3 1328.2,284.7 1329.2,284.6 1330.2,284.5 1331.2,284.8 1332.2,284.4 1333.2,284.4 1334.2,284.6 1335.2,284.5 1336.2,284.8 1337.2,284.8 1338.2,284.9 1339.2,284.7 1340.2,284.7 1341.2,284.8 1342.2,284.6 1343.2,284.6 1344.2,285.0 1345.2,284.8 1346.2,285.0 1347.2,285.0 1348.2,284.6 1349.2,284.8 1350.2,285.1 1351.2,284.9 1352.2,285.0 1353.2,284.2 1354.2,284.7 1355.2,284.7 1356.2,284.8 1357.2,284.9 1358.2,284.9 1359.2,284.9 1360.2,284.8 1361.2,285.1 1362.2,284.9 1363.2,285.2 1364.2,285.3 1365.2,285.2 1366.2,285.2 1367.2,285.3 1368.2,285.4 1369.2,285.4 1370.2,285.3 1371.2,285.3 1372.2,285.4 1373.2,285.4 1374.2,285.0 1375.2,285.1 1376.2,285.1 1377.2,285.4 1378.2,285.3 1379.2,285.3 1380.2,283.4 1381.2,285.5 1382.2,285.4 1383.2,285.6 1384.2,285.4 1385.2,285.4 1386.2,285.7 1387.2,285.7 1388.2,285.4 1389.2,285.3 1390.2,285.6 1391.2,285.6 1392.2,285.8 1393.2,285.5 1394.2,285.8 1395.2,285.7 1396.2,285.5 1397.2,285.7 1398.2,285.5 1399.2,285.6 1400.2,284.2 1401.2,285.7 1402.4,285.5 1402.4,290.8 1401.2,292.2 1400.2,291.1 1399.2,291.0 1398.2,291.1 1397.2,290.7 1396.2,291.0 1395.2,290.7 1394.2,290.8 1393.2,291.0 1392.2,291.3 1391.2,290.7 1390.2,290.6 1389.2,290.9 1388.2,290.5 1387.2,290.8 1386.2,290.8 1385.2,291.9 1384.2,290.9 1383.2,290.5 1382.2,290.4 1381.2,290.5 1380.2,290.6 1379.2,290.6 1378.2,290.6 1377.2,290.5 1376.2,290.4 1375.2,290.4 1374.2,290.7 1373.2,290.5 1372.2,290.7 1371.2,290.4 1370.2,290.3 1369.2,290.3 1368.2,290.2 1367.2,290.5 1366.2,290.4 1365.2,290.1 1364.2,290.1 1363.2,290.5 1362.2,290.3 1361.2,290.2 1360.2,290.0 1359.2,290.1 1358.2,290.3 1357.2,290.1 1356.2,290.1 1355.2,290.4 1354.2,290.2 1353.2,290.2 1352.2,289.9 1351.2,290.1 1350.2,290.2 1349.2,289.9 1348.2,290.2 1347.2,290.2 1346.2,289.7 1345.2,290.1 1344.2,289.8 1343.2,290.0 1342.2,290.1 1341.2,289.8 1340.2,289.7 1339.2,290.9 1338.2,289.9 1337.2,290.0 1336.2,289.7 1335.2,289.9 1334.2,289.7 1333.2,289.7 1332.2,289.8 1331.2,289.9 1330.2,289.7 1329.2,289.5 1328.2,289.5 1327.2,289.8 1326.2,289.6 1325.2,289.5 1324.2,289.6 1323.2,289.9 1322.2,289.7 1321.2,291.3 1320.2,289.6 1319.2,289.5 1318.2,289.6 1317.2,289.8 1316.2,289.4 1315.2,289.4 1314.2,289.4 1313.2,290.4 1312.2,289.4 1311.2,289.3 1310.2,289.6 1309.2,289.7 1308.2,289.5 1307.2,289.3 1306.2,289.2 1305.2,289.2 1304.2,289.3 1303.2,289.6 1302.2,289.4 1301.2,289.1 1300.2,289.3 1299.2,289.1 1298.2,289.2 1297.2,289.3 1296.2,289.5 1295.2,289.3 1294.2,289.0 1293.2,289.0 1292.2,289.2 1291.2,289.2 1290.2,290.4 1289.2,289.2 1288.2,288.9 1287.2,289.2 1286.2,288.9 1285.2,289.0 1284.2,289.1 1283.2,288.8 1282.2,289.2 1281.2,289.0 1280.2,289.1 1279.2,289.2 1278.2,289.2 1277.2,288.9 1276.2,288.9 1275.2,289.1 1274.2,288.8 1273.2,288.8 1272.2,289.1 1271.2,289.0 1270.2,289.0 1269.2,288.7 1268.2,289.0 1267.2,288.9 1266.2,288.6 1265.2,288.7 1264.2,288.6 1263.2,288.5 1262.2,288.5 1261.2,288.5 1260.2,288.7 1259.2,288.6 1258.2,288.8 1257.2,288.4 1256.2,288.8 1255.2,288.7 1254.2,288.8 1253.2,288.3 1252.2,288.3 1251.2,288.6 1250.2,288.6 1249.2,288.4 1248.2,288.6 1247.2,288.5 1246.2,288.3 1245.2,288.6 1244.2,288.4 1243.2,288.3 1242.2,288.5 1241.2,288.1 1240.2,288.3 1239.2,288.4 1238.2,288.2 1237.2,288.1 1236.2,288.1 1235.2,288.0 1234.2,288.0 1233.2,287.9 1232.2,288.3 1231.2,287.9 1230.2,288.1 1229.2,287.9 1228.2,288.1 1227.2,287.8 1226.2,287.6 1225.2,287.8 1224.2,288.4 1223.2,287.9 1222.2,287.9 1221.2,288.0 1220.2,287.7 1219.2,287.8 1218.2,287.8 1217.2,287.6 1216.2,287.6 1215.2,287.4 1214.2,287.5 1213.2,287.4 1212.2,287.7 1211.2,287.5 1210.2,287.7 1209.2,289.0 1208.2,287.2 1207.2,287.4 1206.2,287.2 1205.2,287.4 1204.2,287.3 1203.2,287.2 1202.2,287.4 1201.2,287.4 1200.2,287.4 1199.2,287.0 1198.2,287.2 1197.2,286.9 1196.2,287.0 1195.2,287.2 1194.2,286.9 1193.2,286.9 1192.2,286.8 1191.2,287.2 1190.2,287.1 1189.2,286.9 1188.2,286.6 1187.2,287.0 1186.2,286.8 1185.2,286.9 1184.2,287.8 1183.2,286.7 1182.2,286.8 1181.2,286.5 1180.2,286.7 1179.2,286.5 1178.2,286.7 1177.2,286.3 1176.2,286.5 1175.2,287.0 1174.2,288.1 1173.2,286.6 1172.2,286.2 1171.2,286.4 1170.2,286.2 1169.2,286.5 1168.2,286.5 1167.2,287.3 1166.2,286.1 1165.2,286.4 1164.2,286.3 1163.2,286.3 1162.2,286.1 1161.2,286.3 1160.2,286.1 1159.2,285.8 1158.2,286.0 1157.2,286.1 1156.2,287.6 1155.2,286.0 1154.2,285.9 1153.2,285.9 1152.2,286.0 1151.2,286.5 1150.2,285.6 1149.2,285.8 1148.2,285.6 1147.2,285.8 1146.2,285.6 1145.2,285.8 1144.2,285.8 1143.2,285.6 1142.2,285.8 1141.2,285.6 1140.2,285.5 1139.2,285.5 1138.2,285.6 1137.2,285.3 1136.2,285.4 1135.2,285.4 1134.2,285.3 1133.2,285.3 1132.2,285.3 1131.2,285.4 1130.2,285.4 1129.2,285.0 1128.2,285.0 1127.2,285.3 1126.2,284.8 1125.2,284.9 1124.2,285.0 1123.2,284.9 1122.2,285.0 1121.2,286.5 1120.2,284.8 1119.2,284.8 1118.2,286.5 1117.2,284.9 1116.2,284.8 1115.2,284.5 1114.2,284.4 1113.2,284.7 1112.2,284.6 1111.2,284.2 1110.2,284.5 1109.2,284.4 1108.2,284.5 1107.2,284.3 1106.2,283.9 1105.2,283.9 1104.2,284.3 1103.2,284.2 1102.2,284.2 1101.2,283.8 1100.2,283.7 1099.2,283.7 1098.2,283.7 1097.2,283.6 1096.2,283.8 1095.2,285.4 1094.2,283.5 1093.2,283.5 1092.2,283.6 1091.2,283.5 1090.2,283.5 1089.2,283.2 1088.2,283.4 1087.2,283.0 1086.2,283.1 1085.2,283.1 1084.2,283.1 1083.2,282.9 1082.2,282.7 1081.2,283.0 1080.2,282.8 1079.2,282.8 1078.2,282.6 1077.2,282.3 1076.2,282.5 1075.2,282.3 1074.2,282.0 1073.2,283.0 1072.2,282.1 1071.2,282.0 1070.2,282.0 1069.2,281.9 1068.2,281.5 1067.2,281.6 1066.2,281.4 1065.2,281.4 1064.2,281.5 1063.2,281.5 1062.2,281.4 1061.2,281.1 1060.2,281.1 1059.2,281.0 1058.2,280.9 1057.2,280.9 1056.2,280.5 1055.2,280.6 1054.2,280.4 1053.2,280.5 1052.2,281.6 1051.2,280.1 1050.2,279.9 1049.2,279.5 1048.2,279.6 1047.2,279.4 1046.2,280.7 1045.2,279.0 1044.2,278.9 1043.2,278.8 1042.2,279.0 1041.2,278.5 1040.2,278.8 1039.2,278.4 1038.2,278.2 1037.2,278.0 1036.2,278.0 1035.2,278.1 1034.2,277.6 1033.2,277.6 1032.2,277.4 1031.2,277.3 1030.2,277.0 1029.2,276.7 1028.2,276.3 1027.2,276.0 1026.2,276.2 1025.2,275.9 1024.2,275.3 1023.2,275.2 1022.2,276.2 1021.2,274.9 1020.2,274.6 1019.2,274.4 1018.2,274.4 1017.2,274.3 1016.2,273.9 1015.2,273.7 1014.2,273.0 1013.2,272.9 1012.2,272.1 1011.2,272.0 1010.2,271.6 1009.2,271.0 1008.2,270.7 1007.2,269.7 1006.2,269.2 1005.2,268.2 1004.2,269.4 1003.2,266.7 1002.2,263.6"/><polygon points="1432.9,258.5 1433.9,259.8 1434.9,262.2 1435.9,262.9 1436.9,263.6 1437.9,264.3 1438.9,265.0 1439.9,265.3 1440.9,265.7 1441.9,266.0 1442.9,266.6 1443.9,266.7 1444.9,267.2 1445.9,267.3 1446.9,268.2 1447.9,268.1 1448.9,268.1 1449.9,268.2 1450.9,268.4 1451.9,268.4 1452.9,268.6 1453.9,268.9 1454.9,269.0 1455.9,269.6 1456.9,269.7 1457.9,270.0 1458.9,270.1 1459.9,270.5 1460.9,270.7 1461.9,270.6 1462.9,271.0 1463.9,271.2 1464.9,271.4 1465.9,271.7 1466.9,271.4 1467.9,271.9 1468.9,271.7 1469.9,272.3 1470.9,272.2 1471.9,272.4 1472.9,272.6 1473.9,272.6 1474.9,272.7 1475.9,272.7 1476.9,272.9 1477.9,273.2 1478.9,273.3 1479.9,273.6 1480.9,273.6 1481.9,273.5 1482.9,273.6 1483.9,274.1 1484.9,274.0 1485.9,274.2 1486.9,274.2 1487.9,274.7 1488.9,274.7 1489.9,274.7 1490.9,274.6 1491.9,275.0 1492.9,275.1 1493.9,275.1 1494.9,274.9 1495.9,275.0 1496.9,275.3 1497.9,275.4 1498.9,275.3 1499.9,275.7 1500.9,275.3 1501.9,275.6 1502.9,275.5 1503.9,275.6 1504.9,275.8 1505.9,276.0 1506.9,275.9 1507.9,276.1 1508.9,276.2 1509.9,276.4 1510.9,276.5 1511.9,276.3 1512.9,276.4 1513.9,275.3 1514.9,276.6 1515.9,276.5 1516.9,276.7 1517.9,277.0 1518.9,277.1 1519.9,276.7 1520.9,277.0 1521.9,277.1 1522.9,277.2 1523.9,277.3 1524.9,277.4 1525.9,277.5 1526.9,277.2 1527.9,276.7 1528.9,277.6 1529.9,277.7 1530.9,277.3 1531.9,277.6 1532.9,277.4 1533.9,277.7 1534.9,277.6 1535.9,277.3 1536.9,278.0 1537.9,277.9 1538.9,277.7 1539.9,278.1 1540.9,276.7 1541.9,278.0 1542.9,278.1 1543.9,277.9 1544.9,278.4 1545.9,278.1 1546.9,278.2 1547.9,278.4 1548.9,278.5 1549.9,277.5 1550.9,278.3 1551.9,278.2 1552.9,278.6 1553.9,278.4 1554.9,278.8 1555.9,278.6 1556.9,278.6 1557.9,278.5 1558.9,278.7 1559.9,278.9 1560.9,278.9 1561.9,279.0 1562.9,278.8 1563.9,278.7 1564.9,279.1 1565.9,279.0 1566.9,279.0 1567.9,278.8 1568.9,279.2 1569.9,279.2 1570.9,279.3 1571.9,279.3 1572.9,279.4 1573.9,279.0 1574.9,279.1 1575.9,279.2 1576.9,279.0 1577.9,279.1 1578.9,279.5 1579.9,279.4 1580.9,279.2 1581.9,279.5 1582.9,279.5 1583.9,278.0 1584.9,279.3 1585.9,279.5 1586.9,279.7 1587.9,279.5 1588.9,279.4 1589.9,279.6 1590.9,279.7 1591.9,279.8 1592.9,279.9 1593.9,280.0 1594.9,280.0 1595.9,280.0 1596.9,279.9 1597.9,279.9 1598.9,279.9 1599.9,280.0 1600.9,278.5 1601.9,279.8 1602.9,280.1 1603.9,280.2 1604.9,280.3 1605.9,280.1 1606.9,280.2 1607.9,279.6 1608.9,280.2 1609.9,280.2 1610.9,280.4 1611.9,280.2 1612.9,280.4 1613.9,280.1 1614.9,280.5 1615.9,280.5 1616.9,280.3 1617.9,280.4 1618.9,280.6 1619.9,280.3 1620.9,280.6 1621.9,280.3 1622.9,280.4 1623.9,280.7 1624.9,280.8 1625.9,280.4 1626.9,280.9 1627.9,281.0 1628.9,280.7 1629.9,280.9 1630.9,280.9 1631.9,280.7 1632.9,280.8 1633.9,280.7 1634.9,281.1 1635.9,280.9 1636.9,281.2 1637.9,280.9 1638.9,280.8 1639.9,280.9 1640.9,281.1 1641.9,281.2 1642.9,280.9 1643.9,281.2 1644.9,281.0 1645.9,281.4 1646.9,281.4 1647.9,281.2 1648.9,281.5 1649.9,281.1 1650.9,281.2 1651.9,281.2 1652.9,281.4 1653.9,281.2 1654.9,281.5 1655.9,281.5 1656.9,281.3 1657.9,281.3 1658.9,281.3 1659.9,281.5 1660.9,281.6 1661.9,281.8 1662.9,280.0 1663.9,281.7 1664.9,281.8 1665.9,281.7 1666.9,281.9 1667.9,281.7 1668.9,281.8 1669.9,282.0 1670.9,281.8 1671.9,281.9 1672.9,281.0 1673.9,281.8 1674.9,282.1 1675.9,281.1 1676.9,281.9 1677.9,282.1 1678.9,282.2 1679.9,281.9 1680.9,282.3 1681.9,282.2 1682.9,282.1 1683.9,282.1 1684.9,282.3 1685.9,282.3 1686.9,282.3 1687.9,282.0 1688.9,280.5 1689.9,282.4 1690.9,282.2 1691.9,282.4 1692.9,282.1 1693.9,282.4 1694.9,282.5 1695.9,282.5 1696.9,282.4 1697.9,280.8 1698.9,282.6 1699.9,282.3 1700.9,282.2 1701.9,282.6 1702.9,282.2 1703.9,282.3 1704.9,282.3 1705.9,282.4 1706.9,282.4 1707.9,282.7 1708.9,282.8 1709.9,282.4 1710.9,282.8 1711.9,282.9 1712.9,282.7 1713.9,281.0 1714.9,281.9 1715.9,282.7 1716.9,282.9 1717.9,282.5 1718.9,282.8 1719.9,282.8 1720.9,283.0 1721.9,281.6 1722.9,282.6 1723.9,282.6 1724.9,282.3 1725.9,283.1 1726.9,282.6 1727.9,282.9 1728.9,283.1 1729.9,282.8 1730.9,283.0 1731.9,282.9 1732.9,282.8 1733.9,283.2 1734.9,283.1 1735.9,283.1 1736.9,283.1 1737.9,283.0 1738.9,283.0 1739.9,283.2 1740.9,282.9 1741.9,283.0 1742.9,283.1 1743.9,283.0 1744.9,283.2 1745.9,283.1 1746.9,283.0 1747.9,283.4 1748.9,283.1 1749.9,283.2 1750.9,283.4 1751.9,283.3 1752.9,283.2 1753.9,283.2 1754.9,283.5 1755.9,283.3 1756.9,283.4 1757.9,283.1 1758.9,283.4 1759.9,282.0 1760.9,283.4 1761.9,283.6 1762.9,283.5 1763.9,283.4 1764.9,283.5 1765.9,283.3 1766.9,283.3 1767.9,283.5 1768.9,283.6 1769.9,283.4 1770.9,283.5 1771.9,283.7 1772.9,283.5 1773.9,283.4 1774.9,283.6 1775.9,283.7 1776.9,283.5 1777.9,283.4 1778.9,283.5 1779.9,283.6 1780.9,283.7 1781.9,282.4 1782.9,283.7 1783.9,283.7 1784.9,283.6 1785.9,283.6 1786.9,283.7 1787.9,283.5 1788.9,284.0 1789.9,284.0 1790.9,283.9 1791.9,283.7 1792.9,284.0 1793.9,282.7 1794.9,284.1 1795.9,283.9 1796.9,283.7 1797.9,283.8 1798.9,283.8 1799.9,284.0 1800.9,283.9 1801.9,284.1 1802.9,283.9 1803.9,284.0 1804.9,284.2 1805.9,284.3 1806.9,284.3 1807.9,284.2 1808.9,284.1 1809.9,284.0 1810.9,284.2 1811.9,284.4 1812.9,284.0 1813.9,284.1 1814.9,284.4 1815.9,284.1 1816.9,284.2 1817.9,284.1 1818.9,284.3 1819.9,284.1 1820.9,284.3 1821.9,283.0 1822.9,284.5 1823.9,284.2 1824.9,284.4 1825.9,284.6 1826.9,282.7 1827.9,284.5 1828.9,284.6 1829.9,284.3 1830.9,284.7 1831.9,284.5 1833.4,284.7 1833.4,291.4 1831.9,289.8 1830.9,289.6 1829.9,289.8 1828.9,289.9 1827.9,289.6 1826.9,291.2 1825.9,289.8 1824.9,289.5 1823.9,289.7 1822.9,289.5 1821.9,289.7 1820.9,289.4 1819.9,289.6 1818.9,289.4 1817.9,289.3 1816.9,289.7 1815.9,289.3 1814.9,289.6 1813.9,291.0 1812.9,289.3 1811.9,289.3 1810.9,289.6 1809.9,290.0 1808.9,289.2 1807.9,289.2 1806.9,289.4 1805.9,289.4 1804.9,289.4 1803.9,289.5 1802.9,289.2 1801.9,289.3 1800.9,289.4 1799.9,289.0 1798.9,289.3 1797.9,289.0 1796.9,289.3 1795.9,289.0 1794.9,289.3 1793.9,289.1 1792.9,289.2 1791.9,289.3 1790.9,288.8 1789.9,288.8 1788.9,289.0 1787.9,289.0 1786.9,288.7 1785.9,289.5 1784.9,289.0 1783.9,288.9 1782.9,288.7 1781.9,289.1 1780.9,288.7 1779.9,289.1 1778.9,288.9 1777.9,289.0 1776.9,289.0 1775.9,288.5 1774.9,288.5 1773.9,288.6 1772.9,288.7 1771.9,288.7 1770.9,288.9 1769.9,288.7 1768.9,288.5 1767.9,288.8 1766.9,288.8 1765.9,288.4 1764.9,288.4 1763.9,288.5 1762.9,288.6 1761.9,288.6 1760.9,288.4 1759.9,288.6 1758.9,288.7 1757.9,288.6 1756.9,288.7 1755.9,288.5 1754.9,288.6 1753.9,288.5 1752.9,288.6 1751.9,288.6 1750.9,288.6 1749.9,288.5 1748.9,288.4 1747.9,288.3 1746.9,288.6 1745.9,288.4 1744.9,288.4 1743.9,288.2 1742.9,288.5 1741.9,288.0 1740.9,288.3 1739.9,288.5 1738.9,288.5 1737.9,288.1 1736.9,288.3 1735.9,288.4 1734.9,288.0 1733.9,288.0 1732.9,288.4 1731.9,288.1 1730.9,288.3 1729.9,288.0 1728.9,289.1 1727.9,288.2 1726.9,289.7 1725.9,287.9 1724.9,288.1 1723.9,288.2 1722.9,288.0 1721.9,288.0 1720.9,288.1 1719.9,288.1 1718.9,287.9 1717.9,287.8 1716.9,287.9 1715.9,287.8 1714.9,288.0 1713.9,287.7 1712.9,287.8 1711.9,287.6 1710.9,287.7 1709.9,287.9 1708.9,287.6 1707.9,287.9 1706.9,288.5 1705.9,287.9 1704.9,287.9 1703.9,287.7 1702.9,287.9 1701.9,287.5 1700.9,287.4 1699.9,287.6 1698.9,287.4 1697.9,287.6 1696.9,287.7 1695.9,287.5 1694.9,287.3 1693.9,287.5 1692.9,287.4 1691.9,287.5 1690.9,288.8 1689.9,287.4 1688.9,287.6 1687.9,287.2 1686.9,287.5 1685.9,287.4 1684.9,287.5 1683.9,287.2 1682.9,287.1 1681.9,288.5 1680.9,287.1 1679.9,287.3 1678.9,287.1 1677.9,287.0 1676.9,287.1 1675.9,286.9 1674.9,287.3 1673.9,287.3 1672.9,286.9 1671.9,287.2 1670.9,287.1 1669.9,287.2 1668.9,286.8 1667.9,287.1 1666.9,287.1 1665.9,287.1 1664.9,287.0 1663.9,286.7 1662.9,286.9 1661.9,286.9 1660.9,286.7 1659.9,286.7 1658.9,286.7 1657.9,286.9 1656.9,286.9 1655.9,286.6 1654.9,286.8 1653.9,286.5 1652.9,286.6 1651.9,286.3 1650.9,286.6 1649.9,286.7 1648.9,286.3 1647.9,286.5 1646.9,286.6 1645.9,287.6 1644.9,286.6 1643.9,286.5 1642.9,286.2 1641.9,286.1 1640.9,286.3 1639.9,286.2 1638.9,286.2 1637.9,286.3 1636.9,286.0 1635.9,286.0 1634.9,286.4 1633.9,286.0 1632.9,286.3 1631.9,286.3 1630.9,286.2 1629.9,286.0 1628.9,285.7 1627.9,285.8 1626.9,285.7 1625.9,285.7 1624.9,285.6 1623.9,285.6 1622.9,285.8 1621.9,285.7 1620.9,285.9 1619.9,285.6 1618.9,285.5 1617.9,285.6 1616.9,285.6 1615.9,285.5 1614.9,285.7 1613.9,285.6 1612.9,285.7 1611.9,285.7 1610.9,285.5 1609.9,285.4 1608.9,285.1 1607.9,285.2 1606.9,285.3 1605.9,285.4 1604.9,285.1 1603.9,285.4 1602.9,285.2 1601.9,285.2 1600.9,285.2 1599.9,285.0 1598.9,285.3 1597.9,285.2 1596.9,285.2 1595.9,284.9 1594.9,285.1 1593.9,284.9 1592.9,284.9 1591.9,285.7 1590.9,284.7 1589.9,284.6 1588.9,284.7 1587.9,284.7 1586.9,285.0 1585.9,284.7 1584.9,284.6 1583.9,284.8 1582.9,284.4 1581.9,284.7 1580.9,284.4 1579.9,284.7 1578.9,284.4 1577.9,284.3 1576.9,284.6 1575.9,284.2 1574.9,284.3 1573.9,284.1 1572.9,284.2 1571.9,284.4 1570.9,284.2 1569.9,284.2 1568.9,284.2 1567.9,284.3 1566.9,284.0 1565.9,284.1 1564.9,284.1 1563.9,284.3 1562.9,284.3 1561.9,284.1 1560.9,283.9 1559.9,284.2 1558.9,283.9 1557.9,284.1 1556.9,283.9 1555.9,284.0 1554.9,283.7 1553.9,283.6 1552.9,283.9 1551.9,283.6 1550.9,283.8 1549.9,283.8 1548.9,283.7 1547.9,283.4 1546.9,283.4 1545.9,283.3 1544.9,283.4 1543.9,283.2 1542.9,283.2 1541.9,283.1 1540.9,283.0 1539.9,283.0 1538.9,282.9 1537.9,283.1 1536.9,283.0 1535.9,283.7 1534.9,282.8 1533.9,283.0 1532.9,282.6 1531.9,282.9 1530.9,283.0 1529.9,282.5 1528.9,282.6 1527.9,282.8 1526.9,282.8 1525.9,282.7 1524.9,282.6 1523.9,282.4 1522.9,282.3 1521.9,282.3 1520.9,282.0 1519.9,282.1 1518.9,282.1 1517.9,282.0 1516.9,281.8 1515.9,281.8 1514.9,281.8 1513.9,281.5 1512.9,281.4 1511.9,281.6 1510.9,281.6 1509.9,281.4 1508.9,281.3 1507.9,281.2 1506.9,281.4 1505.9,281.2 1504.9,281.2 1503.9,281.0 1502.9,281.1 1501.9,281.0 1500.9,280.7 1499.9,280.5 1498.9,280.7 1497.9,280.5 1496.9,280.3 1495.9,280.4 1494.9,280.1 1493.9,280.3 1492.9,280.1 1491.9,279.8 1490.9,279.9 1489.9,280.1 1488.9,280.0 1487.9,279.6 1486.9,279.7 1485.9,279.1 1484.9,279.1 1483.9,279.3 1482.9,278.8 1481.9,279.1 1480.9,278.5 1479.9,278.6 1478.9,278.6 1477.9,278.5 1476.9,279.3 1475.9,278.0 1474.9,277.8 1473.9,277.8 1472.9,277.6 1471.9,277.3 1470.9,277.1 1469.9,277.0 1468.9,276.9 1467.9,276.9 1466.9,276.8 1465.9,276.9 1464.9,276.6 1463.9,276.3 1462.9,276.0 1461.9,276.1 1460.9,275.5 1459.9,275.7 1458.9,276.5 1457.9,274.8 1456.9,274.8 1455.9,274.4 1454.9,274.5 1453.9,274.1 1452.9,274.1 1451.9,273.9 1450.9,273.7 1449.9,273.3 1448.9,273.5 1447.9,273.4 1446.9,273.2 1445.9,273.0 1444.9,272.6 1443.9,272.1 1442.9,271.9 1441.9,271.3 1440.9,271.2 1439.9,270.6 1438.9,270.0 1437.9,269.7 1436.9,269.0 1435.9,268.1 1434.9,267.3 1433.9,266.9 1432.9,263.7"/><polygon points="1863.5,258.2 1864.5,261.7 1865.5,262.3 1866.5,263.1 1867.5,263.7 1868.5,264.4 1869.5,264.8 1870.5,265.0 1871.5,265.8 1872.5,266.2 1873.5,266.2 1874.5,266.8 1875.5,266.9 1876.5,265.9 1877.5,267.5 1878.5,267.8 1879.5,267.9 1880.5,267.9 1881.5,268.1 1882.5,267.9 1883.5,268.2 1884.5,268.6 1885.5,268.7 1886.5,269.1 1887.5,269.2 1888.5,269.6 1889.5,269.7 1890.5,270.1 1891.5,270.2 1892.5,270.4 1893.5,270.6 1894.5,270.9 1895.5,270.0 1896.5,270.9 1897.5,271.1 1898.5,271.5 1899.5,271.6 1900.5,271.4 1901.5,271.7 1902.5,271.7 1903.5,272.2 1904.5,271.9 1905.5,272.3 1906.5,272.4 1907.5,272.8 1908.5,272.5 1909.5,272.7 1910.5,272.7 1911.5,273.2 1912.5,273.5 1913.5,273.5 1914.5,273.4 1915.5,272.7 1916.5,273.7 1917.5,274.0 1918.5,274.1 1919.5,274.4 1920.5,274.2 1921.5,274.2 1922.5,274.6 1923.5,274.7 1924.5,274.6 1925.5,274.6 1926.5,273.9 1927.5,275.1 1928.5,274.8 1929.5,274.9 1930.5,274.8 1931.5,275.2 1932.5,275.4 1933.5,275.5 1934.5,275.3 1935.5,275.6 1936.5,275.4 1937.5,275.6 1938.5,275.5 1939.5,275.6 1940.5,275.8 1941.5,276.1 1942.5,275.7 1943.5,276.0 1944.5,276.2 1945.5,276.1 1946.5,276.1 1947.5,276.3 1948.5,276.2 1949.5,276.4 1950.5,276.3 1951.5,276.8 1952.5,274.8 1953.5,276.6 1954.5,276.6 1955.5,276.8 1956.5,276.9 1957.5,277.1 1958.5,276.8 1959.5,277.0 1960.5,277.2 1961.5,277.0 1962.5,277.1 1963.5,277.0 1964.5,277.1 1965.5,277.5 1966.5,277.2 1967.5,277.5 1968.5,277.6 1969.5,277.6 1970.5,277.7 1971.5,277.8 1972.5,277.5 1973.5,277.4 1974.5,277.6 1975.5,278.0 1976.5,277.9 1977.5,277.2 1978.5,277.8 1979.5,277.9 1980.5,277.9 1981.5,278.1 1982.5,278.1 1983.5,278.2 1984.5,277.9 1985.5,278.3 1986.5,278.0 1987.5,278.3 1988.5,278.2 1989.5,278.5 1990.5,277.9 1991.5,278.6 1992.5,278.6 1993.5,278.3 1994.5,278.7 1995.5,278.8 1996.5,278.6 1997.5,278.5 1998.5,278.3 1999.5,278.8 2000.5,278.7 2001.5,278.6 2002.5,278.6 2003.5,278.8 2004.5,278.6 2005.5,278.8 2006.5,278.9 2007.5,278.6 2008.5,279.0 2009.5,278.8 2010.5,279.0 2011.5,278.8 2012.5,278.9 2013.5,279.1 2014.5,279.0 2015.5,278.9 2016.5,278.9 2017.5,279.0 2018.5,279.4 2019.5,279.1 2020.5,279.4 2021.5,279.5 2022.5,279.4 2023.5,279.3 2024.5,279.5 2025.5,279.6 2026.5,279.6 2027.5,279.6 2028.5,279.4 2029.5,279.7 2030.5,279.8 2031.5,279.5 2032.5,279.8 2033.5,279.8 2034.5,279.6 2035.5,279.6 2036.5,279.9 2037.5,280.0 2038.5,279.7 2039.5,280.0 2040.5,278.0 2041.5,280.0 2042.5,280.1 2043.5,280.1 2044.5,279.5 2045.5,279.9 2046.5,279.8 2047.5,280.0 2048.5,279.9 2049.5,280.2 2050.5,279.9 2051.5,280.3 2052.5,280.4 2053.5,280.3 2054.5,280.1 2055.5,280.1 2056.5,279.6 2057.5,280.3 2058.5,280.4 2059.5,280.6 2060.5,280.6 2061.5,279.0 2062.5,280.3 2063.5,280.5 2064.5,280.6 2065.5,280.6 2066.5,280.3 2067.5,280.7 2068.5,280.7 2069.5,280.5 2070.5,280.7 2071.5,280.6 2072.5,280.8 2073.5,280.9 2074.5,280.9 2075.5,280.5 2076.5,280.9 2077.5,280.7 2078.5,280.9 2079.5,280.8 2080.5,279.4 2081.5,280.9 2082.5,281.1 2083.5,279.8 2084.5,281.2 2085.5,281.2 2086.5,281.0 2087.5,279.8 2088.5,281.2 2089.5,281.1 2090.5,281.2 2091.5,281.1 2092.5,281.3 2093.5,281.2 2094.5,281.3 2095.5,281.4 2096.5,281.6 2097.5,281.4 2098.5,281.2 2099.5,281.4 2100.5,281.2 2101.5,280.4 2102.5,281.7 2103.5,281.4 2104.5,281.5 2105.5,281.5 2106.5,281.8 2107.5,281.8 2108.5,281.7 2109.5,281.7 2110.5,281.7 2111.5,281.6 2112.5,281.5 2113.5,281.9 2114.5,281.9 2115.5,281.6 2116.5,281.6 2117.5,281.7 2118.5,281.7 2119.5,282.0 2120.5,282.0 2121.5,281.8 2122.5,281.7 2123.5,281.8 2124.5,282.0 2125.5,282.1 2126.5,282.1 2127.5,282.0 2128.5,281.8 2129.5,281.8 2130.5,281.9 2131.5,282.1 2132.5,282.1 2133.5,282.0 2134.5,282.1 2135.5,280.6 2136.5,280.5 2137.5,282.2 2138.5,282.2 2139.5,282.4 2140.5,282.4 2141.5,282.2 2142.5,281.3 2143.5,282.1 2144.5,282.1 2145.5,282.5 2146.5,282.5 2147.5,282.6 2148.5,281.9 2149.5,282.3 2150.5,282.3 2151.5,282.3 2152.5,282.3 2153.5,282.4 2154.5,282.5 2155.5,282.3 2156.5,282.5 2157.5,282.6 2158.5,282.3 2159.5,282.7 2160.5,282.6 2161.5,282.7 2162.5,282.7 2163.5,282.3 2164.5,282.8 2165.5,282.8 2166.5,281.8 2167.5,282.7 2168.5,282.4 2169.5,282.6 2170.5,282.9 2171.5,282.4 2172.5,282.8 2173.5,282.7 2174.5,282.7 2175.5,282.9 2176.5,282.8 2177.5,283.0 2178.5,282.8 2179.5,282.8 2180.5,282.8 2181.5,282.7 2182.5,282.6 2183.5,283.0 2184.5,282.9 2185.5,282.6 2186.5,282.7 2187.5,282.8 2188.5,283.0 2189.5,283.0 2190.5,282.7 2191.5,282.8 2192.5,283.2 2193.5,283.0 2194.5,283.1 2195.5,283.2 2196.5,283.0 2197.5,283.0 2198.5,283.1 2199.5,283.2 2200.5,283.2 2201.5,282.9 2202.5,283.2 2203.5,283.3 2204.5,283.0 2205.5,282.9 2206.5,282.9 2207.5,283.0 2208.5,282.4 2209.5,283.3 2210.5,283.1 2211.5,283.1 2212.5,283.2 2213.5,281.9 2214.5,283.4 2215.5,283.4 2216.5,283.4 2217.5,283.2 2218.5,283.3 2219.5,283.2 2220.5,283.5 2221.5,283.3 2222.5,283.6 2223.5,283.7 2224.5,283.5 2225.5,283.6 2226.5,282.9 2227.5,283.4 2228.5,283.7 2229.5,283.7 2230.5,283.5 2231.5,283.4 2232.5,283.4 2233.5,283.4 2234.5,283.7 2235.5,283.7 2236.5,283.7 2237.5,283.7 2238.5,283.9 2239.5,283.9 2240.5,283.7 2241.5,283.6 2242.5,283.9 2243.5,283.8 2244.5,283.6 2245.5,283.7 2246.5,283.7 2247.5,284.1 2248.5,283.8 2249.5,283.9 2250.5,284.1 2251.5,283.8 2252.5,283.8 2253.5,283.8 2254.5,283.9 2255.5,283.9 2256.5,284.1 2257.5,283.8 2258.5,284.1 2259.5,284.2 2260.5,284.2 2261.5,284.0 2262.5,284.2 2264.4,284.3 2264.4,289.3 2262.5,289.4 2261.5,290.4 2260.5,289.3 2259.5,289.4 2258.5,289.1 2257.5,289.1 2256.5,289.4 2255.5,289.2 2254.5,289.2 2253.5,289.1 2252.5,289.4 2251.5,289.2 2250.5,289.0 2249.5,289.2 2248.5,289.2 2247.5,289.2 2246.5,289.1 2245.5,289.0 2244.5,289.1 2243.5,289.1 2242.5,289.1 2241.5,289.2 2240.5,289.2 2239.5,288.7 2238.5,288.8 2237.5,288.7 2236.5,288.8 2235.5,289.0 2234.5,289.0 2233.5,288.6 2232.5,289.0 2231.5,289.0 2230.5,289.4 2229.5,288.9 2228.5,288.9 2227.5,288.6 2226.5,288.5 2225.5,288.7 2224.5,288.9 2223.5,288.9 2222.5,288.6 2221.5,288.5 2220.5,288.8 2219.5,288.8 2218.5,288.7 2217.5,288.8 2216.5,288.5 2215.5,288.5 2214.5,288.5 2213.5,288.7 2212.5,288.6 2211.5,288.4 2210.5,288.3 2209.5,288.6 2208.5,288.4 2207.5,288.3 2206.5,288.4 2205.5,288.5 2204.5,289.2 2203.5,288.6 2202.5,288.4 2201.5,288.4 2200.5,288.3 2199.5,288.3 2198.5,288.1 2197.5,288.2 2196.5,288.4 2195.5,288.4 2194.5,288.2 2193.5,288.2 2192.5,288.1 2191.5,288.1 2190.5,287.9 2189.5,288.3 2188.5,288.0 2187.5,288.0 2186.5,288.0 2185.5,288.2 2184.5,287.9 2183.5,288.2 2182.5,288.2 2181.5,288.8 2180.5,287.8 2179.5,288.1 2178.5,287.9 2177.5,287.8 2176.5,287.9 2175.5,288.1 2174.5,287.9 2173.5,288.0 2172.5,288.1 2171.5,287.7 2170.5,288.0 2169.5,287.8 2168.5,287.9 2167.5,288.0 2166.5,287.9 2165.5,287.8 2164.5,287.6 2163.5,287.8 2162.5,287.7 2161.5,287.8 2160.5,287.6 2159.5,288.0 2158.5,287.5 2157.5,287.5 2156.5,287.8 2155.5,287.4 2154.5,287.5 2153.5,287.8 2152.5,287.5 2151.5,287.8 2150.5,287.4 2149.5,287.8 2148.5,287.5 2147.5,287.3 2146.5,287.7 2145.5,287.7 2144.5,287.6 2143.5,287.5 2142.5,287.6 2141.5,287.3 2140.5,287.6 2139.5,287.3 2138.5,287.5 2137.5,287.5 2136.5,287.4 2135.5,287.1 2134.5,287.4 2133.5,287.5 2132.5,287.1 2131.5,287.3 2130.5,288.4 2129.5,287.4 2128.5,287.0 2127.5,287.1 2126.5,287.0 2125.5,287.4 2124.5,286.9 2123.5,287.0 2122.5,287.3 2121.5,286.8 2120.5,287.2 2119.5,287.2 2118.5,287.2 2117.5,287.1 2116.5,287.2 2115.5,287.0 2114.5,286.9 2113.5,287.0 2112.5,287.0 2111.5,286.7 2110.5,286.6 2109.5,286.6 2108.5,286.6 2107.5,286.8 2106.5,286.6 2105.5,286.7 2104.5,286.5 2103.5,286.7 2102.5,287.8 2101.5,286.4 2100.5,286.4 2099.5,286.4 2098.5,286.5 2097.5,286.6 2096.5,286.4 2095.5,286.4 2094.5,286.4 2093.5,286.5 2092.5,286.2 2091.5,286.4 2090.5,286.2 2089.5,286.4 2088.5,286.2 2087.5,286.3 2086.5,286.5 2085.5,286.0 2084.5,286.2 2083.5,286.1 2082.5,286.1 2081.5,286.2 2080.5,285.9 2079.5,286.1 2078.5,286.3 2077.5,286.0 2076.5,285.9 2075.5,285.8 2074.5,286.0 2073.5,286.1 2072.5,286.1 2071.5,285.7 2070.5,285.7 2069.5,285.7 2068.5,285.8 2067.5,286.0 2066.5,285.8 2065.5,285.5 2064.5,285.6 2063.5,285.7 2062.5,285.5 2061.5,285.8 2060.5,285.5 2059.5,285.5 2058.5,285.5 2057.5,285.5 2056.5,285.5 2055.5,285.6 2054.5,285.5 2053.5,285.6 2052.5,285.6 2051.5,285.4 2050.5,285.2 2049.5,285.3 2048.5,285.5 2047.5,285.3 2046.5,285.3 2045.5,285.1 2044.5,285.4 2043.5,285.1 2042.5,285.1 2041.5,284.8 2040.5,284.8 2039.5,285.0 2038.5,284.8 2037.5,286.2 2036.5,284.8 2035.5,284.9 2034.5,284.8 2033.5,284.9 2032.5,284.8 2031.5,284.9 2030.5,284.7 2029.5,284.9 2028.5,284.6 2027.5,284.7 2026.5,284.5 2025.5,284.5 2024.5,284.5 2023.5,284.4 2022.5,284.4 2021.5,284.4 2020.5,284.5 2019.5,284.5 2018.5,284.3 2017.5,284.6 2016.5,284.4 2015.5,284.5 2014.5,284.1 2013.5,284.3 2012.5,284.0 2011.5,284.2 2010.5,284.0 2009.5,284.3 2008.5,284.3 2007.5,284.0 2006.5,283.8 2005.5,284.2 2004.5,283.7 2003.5,284.1 2002.5,283.7 2001.5,284.0 2000.5,283.6 1999.5,283.9 1998.5,283.9 1997.5,283.6 1996.5,283.6 1995.5,283.5 1994.5,283.5 1993.5,283.4 1992.5,283.8 1991.5,283.6 1990.5,283.4 1989.5,283.7 1988.5,283.4 1987.5,283.2 1986.5,283.3 1985.5,283.2 1984.5,283.6 1983.5,283.2 1982.5,283.4 1981.5,283.2 1980.5,283.1 1979.5,283.2 1978.5,283.2 1977.5,283.2 1976.5,283.1 1975.5,283.0 1974.5,282.7 1973.5,282.6 1972.5,282.8 1971.5,283.0 1970.5,282.7 1969.5,282.6 1968.5,282.4 1967.5,282.5 1966.5,282.6 1965.5,282.6 1964.5,282.4 1963.5,282.5 1962.5,282.5 1961.5,282.4 1960.5,282.3 1959.5,283.0 1958.5,282.2 1957.5,282.2 1956.5,282.9 1955.5,282.1 1954.5,282.0 1953.5,282.1 1952.5,281.7 1951.5,281.7 1950.5,281.7 1949.5,281.6 1948.5,281.5 1947.5,281.3 1946.5,281.6 1945.5,281.6 1944.5,281.4 1943.5,281.0 1942.5,283.1 1941.5,281.1 1940.5,281.1 1939.5,281.1 1938.5,280.7 1937.5,280.5 1936.5,280.5 1935.5,280.4 1934.5,280.4 1933.5,281.1 1932.5,280.3 1931.5,280.2 1930.5,280.5 1929.5,280.3 1928.5,280.1 1927.5,279.9 1926.5,279.8 1925.5,279.7 1924.5,280.2 1923.5,279.9 1922.5,279.5 1921.5,279.4 1920.5,279.3 1919.5,279.3 1918.5,279.1 1917.5,278.9 1916.5,278.9 1915.5,278.9 1914.5,280.6 1913.5,278.4 1912.5,278.2 1911.5,278.3 1910.5,278.3 1909.5,278.0 1908.5,277.7 1907.5,277.6 1906.5,277.4 1905.5,277.5 1904.5,277.6 1903.5,277.4 1902.5,277.2 1901.5,276.9 1900.5,276.7 1899.5,276.8 1898.5,276.5 1897.5,276.7 1896.5,276.4 1895.5,276.2 1894.5,276.2 1893.5,275.9 1892.5,275.4 1891.5,275.1 1890.5,276.8 1889.5,274.8 1888.5,274.7 1887.5,274.1 1886.5,274.2 1885.5,273.7 1884.5,273.5 1883.5,273.3 1882.5,273.2 1881.5,273.0 1880.5,273.1 1879.5,273.0 1878.5,273.0 1877.5,272.7 1876.5,272.7 1875.5,272.2 1874.5,272.0 1873.5,271.4 1872.5,271.2 1871.5,270.9 1870.5,270.6 1869.5,270.3 1868.5,269.4 1867.5,269.0 1866.5,268.3 1865.5,267.2 1864.5,266.7 1863.5,263.5"/><polygon points="2294.0,258.4 2295.0,261.4 2296.0,262.0 2297.0,262.9 2298.0,263.5 2299.0,264.1 2300.0,264.4 2301.0,264.8 2302.0,265.1 2303.0,265.3 2304.0,265.9 2305.0,266.1 2306.0,266.4 2307.0,266.8 2308.0,267.0 2309.0,267.2 2310.0,267.0 2311.0,267.3 2312.0,267.1 2313.0,267.4 2314.0,267.1 2315.0,267.3 2316.0,267.7 2317.0,268.0 2318.0,268.1 2319.0,267.5 2320.0,268.7 2321.0,269.0 2322.0,269.0 2323.0,269.2 2324.0,269.5 2325.0,270.0 2326.0,270.0 2327.0,270.0 2328.0,270.4 2329.0,270.5 2330.0,270.3 2331.0,270.5 2332.0,270.7 2333.0,270.9 2334.0,270.9 2335.0,271.3 2336.0,271.4 2337.0,271.6 2338.0,271.6 2339.0,271.9 2340.0,271.6 2341.0,271.8 2342.0,271.9 2343.0,272.1 2344.0,272.4 2345.0,272.7 2346.0,272.6 2347.0,272.8 2348.0,272.7 2349.0,272.9 2350.0,273.2 2351.0,273.1 2352.0,273.3 2353.0,273.4 2354.0,273.4 2355.0,273.7 2356.0,273.6 2357.0,273.9 2358.0,273.8 2359.0,273.1 2360.0,273.9 2361.0,273.9 2362.0,274.2 2363.0,274.0 2364.0,274.5 2365.0,274.5 2366.0,274.2 2367.0,274.7 2368.0,274.8 2369.0,274.5 2370.0,274.5 2371.0,274.7 2372.0,274.9 2373.0,274.9 2374.0,275.1 2375.0,275.2 2376.0,275.0 2377.0,275.4 2378.0,275.3 2379.0,275.5 2380.0,275.5 2381.0,275.6 2382.0,275.5 2383.0,275.7 2384.0,275.8 2385.0,275.9 2386.0,276.0 2387.0,276.0 2388.0,276.0 2389.0,275.9 2390.0,275.9 2391.0,276.0 2392.0,276.3 2393.0,276.0 2394.0,276.3 2395.0,276.3 2396.0,276.4 2397.0,276.4 2398.0,276.6 2399.0,276.6 2400.0,276.3 2401.0,276.7 2402.0,276.4 2403.0,276.6 2404.0,276.6 2405.0,276.5 2406.0,276.7 2407.0,276.9 2408.0,276.7 2409.0,277.1 2410.0,276.7 2411.0,276.7 2412.0,277.1 2413.0,277.3 2414.0,277.2 2415.0,277.1 2416.0,277.1 2417.0,277.1 2418.0,277.1 2419.0,277.1 2420.0,277.4 2421.0,277.4 2422.0,277.3 2423.0,277.2 2424.0,277.6 2425.0,277.3 2426.0,277.6 2427.0,277.7 2428.0,277.4 2429.0,277.5 2430.0,277.6 2431.0,277.8 2432.0,277.7 2433.0,277.7 2434.0,277.7 2435.0,278.0 2436.0,277.6 2437.0,277.8 2438.0,277.9 2439.0,278.1 2440.0,278.2 2441.0,278.1 2442.0,278.1 2443.0,277.8 2444.0,277.9 2445.0,278.0 2446.0,277.9 2447.0,278.1 2448.0,278.3 2449.0,278.1 2450.0,278.4 2451.0,278.0 2452.0,278.1 2453.0,278.2 2454.0,278.1 2455.0,278.3 2456.0,278.3 2457.0,278.5 2458.0,278.5 2459.0,278.7 2460.0,278.4 2461.0,277.6 2462.0,278.7 2463.0,276.8 2464.0,278.4 2465.0,278.6 2466.0,278.8 2467.0,278.8 2468.0,278.7 2469.0,278.6 2470.0,278.8 2471.0,278.7 2472.0,278.8 2473.0,278.8 2474.0,279.0 2475.0,279.0 2475.0,285.0 2474.0,284.2 2473.0,283.9 2472.0,284.2 2471.0,283.8 2470.0,284.1 2469.0,284.0 2468.0,283.7 2467.0,284.1 2466.0,283.8 2465.0,283.8 2464.0,283.9 2463.0,284.0 2462.0,283.6 2461.0,283.8 2460.0,283.9 2459.0,283.5 2458.0,283.7 2457.0,283.4 2456.0,283.4 2455.0,283.5 2454.0,283.4 2453.0,283.4 2452.0,283.6 2451.0,283.2 2450.0,283.6 2449.0,283.5 2448.0,283.2 2447.0,283.1 2446.0,283.4 2445.0,283.0 2444.0,283.1 2443.0,283.2 2442.0,283.1 2441.0,282.9 2440.0,283.1 2439.0,283.1 2438.0,283.0 2437.0,282.9 2436.0,282.8 2435.0,282.9 2434.0,282.7 2433.0,283.1 2432.0,282.8 2431.0,283.1 2430.0,282.7 2429.0,282.8 2428.0,283.0 2427.0,282.5 2426.0,282.9 2425.0,282.8 2424.0,282.6 2423.0,282.9 2422.0,282.7 2421.0,282.4 2420.0,282.7 2419.0,282.3 2418.0,282.4 2417.0,282.3 2416.0,282.2 2415.0,282.3 2414.0,282.2 2413.0,282.3 2412.0,282.2 2411.0,282.4 2410.0,282.3 2409.0,281.9 2408.0,282.1 2407.0,281.7 2406.0,281.9 2405.0,281.7 2404.0,281.7 2403.0,282.0 2402.0,281.9 2401.0,281.8 2400.0,281.8 2399.0,281.5 2398.0,281.6 2397.0,281.7 2396.0,281.5 2395.0,281.3 2394.0,281.2 2393.0,281.3 2392.0,281.1 2391.0,281.2 2390.0,281.3 2389.0,280.9 2388.0,281.3 2387.0,280.9 2386.0,281.0 2385.0,280.9 2384.0,280.8 2383.0,280.8 2382.0,280.8 2381.0,282.3 2380.0,280.8 2379.0,280.4 2378.0,280.7 2377.0,280.5 2376.0,280.5 2375.0,280.5 2374.0,280.2 2373.0,280.1 2372.0,280.0 2371.0,280.1 2370.0,280.3 2369.0,279.9 2368.0,279.6 2367.0,279.9 2366.0,279.7 2365.0,279.8 2364.0,279.7 2363.0,279.5 2362.0,279.6 2361.0,279.2 2360.0,278.9 2359.0,279.1 2358.0,278.9 2357.0,278.8 2356.0,279.0 2355.0,278.8 2354.0,278.6 2353.0,278.7 2352.0,278.3 2351.0,278.4 2350.0,278.3 2349.0,278.4 2348.0,278.0 2347.0,277.8 2346.0,278.0 2345.0,278.8 2344.0,277.8 2343.0,277.4 2342.0,278.1 2341.0,277.2 2340.0,277.2 2339.0,277.0 2338.0,276.7 2337.0,276.8 2336.0,276.6 2335.0,276.4 2334.0,276.3 2333.0,276.3 2332.0,276.2 2331.0,275.6 2330.0,275.9 2329.0,275.6 2328.0,275.6 2327.0,275.5 2326.0,275.1 2325.0,275.2 2324.0,275.0 2323.0,274.5 2322.0,274.1 2321.0,274.2 2320.0,273.9 2319.0,274.7 2318.0,273.5 2317.0,272.9 2316.0,273.1 2315.0,272.4 2314.0,272.7 2313.0,272.4 2312.0,272.1 2311.0,272.5 2310.0,272.4 2309.0,272.1 2308.0,272.2 2307.0,271.6 2306.0,271.7 2305.0,271.3 2304.0,270.9 2303.0,271.5 2302.0,270.4 2301.0,270.1 2300.0,269.9 2299.0,269.2 2298.0,268.5 2297.0,269.3 2296.0,267.1 2295.0,266.5 2294.0,263.7"/><polygon points="970.4,286 972.3,286 972.1,339.5 971.1,340.5 970.5,339"/><polygon points="971.0,290 972.2,290 972.6,215 973.6,160 974.4,128 973.1,128 972.4,160 971.4,215"/><polygon points="973.2,120.1 974.2,120.3 975.2,120.2 976.2,119.6 977.2,119.0 978.2,120.5 979.2,119.9 980.2,120.4 981.2,120.3 982.2,119.0 983.2,119.9 984.2,119.9 985.2,120.1 986.2,119.8 987.2,120.5 988.2,120.0 989.2,120.1 990.2,120.3 991.2,120.6 992.2,119.4 993.2,120.2 994.2,119.7 995.2,120.6 996.2,120.0 997.2,118.9 998.2,120.5 999.2,120.6 1000.2,120.6 1001.2,120.0 1002.2,120.2 1002.2,128.9 1001.2,128.9 1000.2,129.2 999.2,129.3 998.2,128.7 997.2,129.0 996.2,128.9 995.2,129.2 994.2,128.7 993.2,128.6 992.2,128.7 991.2,129.3 990.2,129.3 989.2,128.8 988.2,128.8 987.2,129.3 986.2,128.9 985.2,129.7 984.2,129.3 983.2,129.1 982.2,129.1 981.2,128.7 980.2,128.7 979.2,129.0 978.2,128.6 977.2,128.9 976.2,128.9 975.2,129.1 974.2,129.1 973.2,129.0"/><polygon points="1001.2,126 1002.4,126 1002.5,250 1003.3,261 1001.7,261 1001.3,250" fill="#3a2a2a"/><polygon points="1401.4,286 1403.3,286 1403.1,339.5 1402.1,340.5 1401.5,339"/><polygon points="1402.0,290 1403.2,290 1403.6,215 1404.6,160 1405.4,128 1404.1,128 1403.4,160 1402.4,215"/><polygon points="1404.2,120.5 1405.2,119.9 1406.2,120.3 1407.2,119.3 1408.2,119.9 1409.2,119.9 1410.2,120.5 1411.2,120.3 1412.2,120.5 1413.2,120.3 1414.2,120.1 1415.2,119.9 1416.2,119.9 1417.2,120.0 1418.2,119.9 1419.2,119.9 1420.2,119.8 1421.2,120.4 1422.2,119.9 1423.2,120.4 1424.2,120.4 1425.2,119.9 1426.2,119.5 1427.2,120.3 1428.2,119.9 1429.2,120.1 1430.2,120.3 1431.2,120.0 1432.2,120.4 1432.2,129.3 1431.2,128.7 1430.2,128.7 1429.2,128.7 1428.2,128.7 1427.2,129.2 1426.2,128.6 1425.2,128.7 1424.2,129.0 1423.2,129.4 1422.2,128.6 1421.2,129.2 1420.2,128.6 1419.2,129.4 1418.2,128.7 1417.2,129.2 1416.2,129.0 1415.2,129.2 1414.2,129.0 1413.2,128.6 1412.2,129.1 1411.2,129.7 1410.2,128.7 1409.2,128.8 1408.2,129.3 1407.2,128.6 1406.2,128.8 1405.2,129.2 1404.2,129.3"/><polygon points="1431.9,126 1433.1,126 1433.2,250 1434.0,261 1432.4,261 1432.0,250" fill="#3a2a2a"/><polygon points="1832.4,286 1834.3,286 1834.1,339.5 1833.1,340.5 1832.5,339"/><polygon points="1833.0,290 1834.2,290 1834.6,215 1835.6,160 1836.4,128 1835.1,128 1834.4,160 1833.4,215"/><polygon points="1835.2,120.1 1836.2,119.4 1837.2,120.5 1838.2,119.9 1839.2,119.7 1840.2,119.9 1841.2,119.8 1842.2,119.8 1843.2,119.8 1844.2,120.5 1845.2,119.9 1846.2,120.0 1847.2,120.2 1848.2,119.9 1849.2,120.2 1850.2,119.9 1851.2,120.4 1852.2,120.1 1853.2,120.3 1854.2,120.1 1855.2,120.4 1856.2,120.0 1857.2,119.9 1858.2,120.4 1859.2,120.0 1860.2,120.0 1861.2,120.1 1862.2,120.3 1863.2,120.6 1863.2,129.0 1862.2,129.3 1861.2,128.8 1860.2,129.0 1859.2,129.3 1858.2,128.8 1857.2,129.0 1856.2,128.9 1855.2,129.4 1854.2,129.3 1853.2,128.7 1852.2,129.3 1851.2,130.4 1850.2,129.9 1849.2,129.1 1848.2,128.9 1847.2,129.0 1846.2,128.9 1845.2,129.2 1844.2,128.7 1843.2,128.9 1842.2,128.8 1841.2,128.9 1840.2,129.9 1839.2,129.3 1838.2,129.0 1837.2,128.9 1836.2,128.6 1835.2,129.4"/><polygon points="1862.5,126 1863.7,126 1863.8,250 1864.6,261 1863.0,261 1862.6,250" fill="#3a2a2a"/><polygon points="2263.4,286 2265.3,286 2265.1,339.5 2264.1,340.5 2263.5,339"/><polygon points="2264.0,290 2265.2,290 2265.6,215 2266.6,160 2267.4,128 2266.1,128 2265.4,160 2264.4,215"/><polygon points="2266.2,120.3 2267.2,120.2 2268.2,119.9 2269.2,120.2 2270.2,119.8 2271.2,119.8 2272.2,120.5 2273.2,119.9 2274.2,120.4 2275.2,120.2 2276.2,119.9 2277.2,120.6 2278.2,120.2 2279.2,120.1 2280.2,119.8 2281.2,120.5 2282.2,120.1 2283.2,120.5 2284.2,120.0 2285.2,120.1 2286.2,120.5 2287.2,120.4 2288.2,120.0 2289.2,120.1 2290.2,119.2 2291.2,119.9 2292.2,119.9 2293.2,120.6 2294.2,119.8 2294.2,128.9 2293.2,129.1 2292.2,128.8 2291.2,128.6 2290.2,130.3 2289.2,129.1 2288.2,129.0 2287.2,129.3 2286.2,129.1 2285.2,128.7 2284.2,129.1 2283.2,129.2 2282.2,129.2 2281.2,128.8 2280.2,128.6 2279.2,129.2 2278.2,129.2 2277.2,129.2 2276.2,129.3 2275.2,129.9 2274.2,129.4 2273.2,129.8 2272.2,128.6 2271.2,129.3 2270.2,129.9 2269.2,130.0 2268.2,128.6 2267.2,128.8 2266.2,128.8"/><polygon points="2293.0,126 2294.2,126 2294.3,250 2295.1,261 2293.5,261 2293.1,250" fill="#3a2a2a"/></g><g stroke="#000" stroke-opacity="0.44" stroke-width="1.5" stroke-dasharray="6.6 6.421" fill="none"><line x1="5.2" y1="117.70" x2="2425.2" y2="117.70"/><line x1="5.2" y1="238.76" x2="2425.2" y2="238.76"/><line x1="5.2" y1="361.10" x2="2434.5" y2="361.10"/><line x1="5.2" y1="483.50" x2="2434.5" y2="483.50"/><line x1="5.2" y1="605.90" x2="2434.5" y2="605.90"/><line x1="5.2" y1="728.10" x2="2434.5" y2="728.10"/><line x1="59.9" y1="849.48" x2="2434.5" y2="849.48"/><line x1="5.2" y1="971.90" x2="2428.9" y2="971.90"/><line x1="5.2" y1="1094.24" x2="2428.9" y2="1094.24"/><line x1="5.2" y1="1216.65" x2="2428.9" y2="1216.65"/><line x1="76.15" y1="64.85" x2="76.15" y2="1268.2"/><line x1="323.53" y1="64.85" x2="323.53" y2="1268.2"/><line x1="570.91" y1="64.85" x2="570.91" y2="1268.2"/><line x1="816.99" y1="64.85" x2="816.99" y2="1268.2"/><line x1="1064.37" y1="64.85" x2="1064.37" y2="1268.2"/><line x1="1311.75" y1="64.85" x2="1311.75" y2="1268.2"/><line x1="1559.13" y1="64.85" x2="1559.13" y2="1268.2"/><line x1="1806.50" y1="64.85" x2="1806.50" y2="1268.2"/><line x1="2052.65" y1="64.85" x2="2052.65" y2="1268.2"/><line x1="2300.00" y1="64.85" x2="2300.00" y2="1268.2"/></g><text x="51.8" y="340.0" font-size="26.4" fill="#b6be4c" textLength="67.7" lengthAdjust="spacingAndGlyphs" style="text-shadow:0.7px 1px 0 #5a5e20">VOUT</text><text x="56.6" y="639.9" font-size="26.4" fill="#1cc6ce" textLength="36.2" lengthAdjust="spacingAndGlyphs" style="text-shadow:0.7px 1px 0 #0a4a50">SW</text><text x="45.5" y="816.2" font-size="26.4" fill="#8cce2c" textLength="56.5" lengthAdjust="spacingAndGlyphs" style="text-shadow:0.7px 1px 0 #3a5a10">IOUT</text><text x="62.9" y="1228.5" font-size="26.4" fill="#ee8a22" textLength="29.5" lengthAdjust="spacingAndGlyphs" style="text-shadow:0.7px 1px 0 #6a3a08">I_L</text><path d="M10.8,380.4 L39.0,380.4 L54.4,397.0 L39.0,413.6 L10.8,413.6 Q8.8,413.6 8.8,411.6 L8.8,382.4 Q8.8,380.4 10.8,380.4 Z" fill="#fffff0" stroke="#ffdcaa" stroke-width="2.0" stroke-linejoin="round"/><text x="18.7" y="402.2" font-size="16" fill="#1a1a1a" stroke="#1a1a1a" stroke-width="0.3">C</text><text x="33.0" y="402.2" font-size="16" fill="#1a1a1a" stroke="#1a1a1a" stroke-width="0.3">1</text><path d="M10.8,586.6 L39.0,586.6 L54.4,603.2 L39.0,619.8 L10.8,619.8 Q8.8,619.8 8.8,617.8 L8.8,588.6 Q8.8,586.6 10.8,586.6 Z" fill="#e8fafa" stroke="#62dce0" stroke-width="1.6" stroke-linejoin="round"/><text x="18.7" y="606.9" font-size="16" fill="#1a1a1a" stroke="#1a1a1a" stroke-width="0.3">C</text><text x="33.0" y="606.9" font-size="16" fill="#1a1a1a" stroke="#1a1a1a" stroke-width="0.3">2</text><path d="M10.8,832.2 L39.0,832.2 L54.4,848.8 L39.0,865.4 L10.8,865.4 Q8.8,865.4 8.8,863.4 L8.8,834.2 Q8.8,832.2 10.8,832.2 Z" fill="#8fd130" stroke="#20240c" stroke-width="1.6" stroke-linejoin="round"/><text x="18.7" y="854.3" font-size="16" fill="#1a1a1a" stroke="#1a1a1a" stroke-width="0.3">C</text><text x="33.0" y="854.3" font-size="16" fill="#1a1a1a" stroke="#1a1a1a" stroke-width="0.3">4</text><path d="M10.8,1179.7 L39.0,1179.7 L54.4,1196.3 L39.0,1212.9 L10.8,1212.9 Q8.8,1212.9 8.8,1210.9 L8.8,1181.7 Q8.8,1179.7 10.8,1179.7 Z" fill="#ffeee0" stroke="#ffa552" stroke-width="2.0" stroke-linejoin="round"/><text x="18.7" y="1200.5" font-size="16" fill="#1a1a1a" stroke="#1a1a1a" stroke-width="0.3">C</text><text x="33.0" y="1200.5" font-size="16" fill="#1a1a1a" stroke="#1a1a1a" stroke-width="0.3">5</text><path d="M2446.6,687.8 L2463.2,674.8 Q2464.6,674 2464.6,676 L2464.6,684.8 L2475,684.8 L2475,691 L2464.6,691 L2464.6,699.8 Q2464.6,701.6 2463.2,700.8 Z" fill="#000" stroke="#2a3a08" stroke-width="0.8"/><path d="M2424.5,78.2 L2463.3,78.2 Q2467.2,78.2 2467.2,82.2 L2467.2,120.6 Q2467.2,125 2463.8,121.8 L2423,81.4 Q2420.4,78.2 2424.5,78.2 Z" fill="#4a4949" stroke="#1c1c1c" stroke-width="2"/><circle cx="2457.3" cy="88.0" r="5.3" fill="#565656" stroke="#a4a4a4" stroke-width="1.6"/><line x1="2453.2" y1="92.4" x2="2445.6" y2="99.6" stroke="#a6a6a6" stroke-width="3.6" stroke-linecap="round"/><rect x="557.3" y="70.0" width="26" height="40" fill="#fff"/><path d="M557.8,70.0 L583.0,70.0 L570.3,82.6 Z" fill="#e28a30" stroke="#ff9a30" stroke-width="0.8"/><path d="M558.7,84.7 L582.1,84.7 L582.1,109.2 L575.7,109.2 L570.3,116.8 L564.9,109.2 L558.7,109.2 Z" fill="#050505" stroke="#f39432" stroke-width="2.3" stroke-linejoin="miter"/><text x="569.7" y="103.6" text-anchor="middle" font-size="19.6" fill="#f39432" stroke="#f39432" stroke-width="0.5">T</text></g><text x="76.5" y="1284.8" text-anchor="middle" font-size="17.2" fill="#303030" stroke="#303030" stroke-width="0.5" style="letter-spacing:0px">-80 ms</text><text x="323.8" y="1284.8" text-anchor="middle" font-size="17.2" fill="#303030" stroke="#303030" stroke-width="0.5" style="letter-spacing:0px">-40 ms</text><text x="571.2" y="1284.8" text-anchor="middle" font-size="17.2" fill="#303030" stroke="#303030" stroke-width="0.5" style="letter-spacing:0px">0 s</text><text x="817.3" y="1284.8" text-anchor="middle" font-size="17.2" fill="#303030" stroke="#303030" stroke-width="0.5" style="letter-spacing:0px">40 ms</text><text x="1064.7" y="1284.8" text-anchor="middle" font-size="17.2" fill="#303030" stroke="#303030" stroke-width="0.5" style="letter-spacing:0px">80 ms</text><text x="1312.0" y="1284.8" text-anchor="middle" font-size="17.2" fill="#303030" stroke="#303030" stroke-width="0.5" style="letter-spacing:0px">120 ms</text><text x="1559.4" y="1284.8" text-anchor="middle" font-size="17.2" fill="#303030" stroke="#303030" stroke-width="0.5" style="letter-spacing:0px">160 ms</text><text x="1806.8" y="1284.8" text-anchor="middle" font-size="17.2" fill="#303030" stroke="#303030" stroke-width="0.5" style="letter-spacing:0px">200 ms</text><text x="2053.0" y="1284.8" text-anchor="middle" font-size="17.2" fill="#303030" stroke="#303030" stroke-width="0.5" style="letter-spacing:0px">240 ms</text><text x="2300.3" y="1284.8" text-anchor="middle" font-size="17.2" fill="#303030" stroke="#303030" stroke-width="0.5" style="letter-spacing:0px">280 ms</text></svg>
<span class="t" style="left:2325px;top:0.32px;font-size:39.2px;font-weight:700;color:#fff;-webkit-text-stroke:0.8px #fff;transform-origin:0 0;transform:scaleX(0.8828);">Tektronix</span>
<svg class="a" style="left:0;top:0" width="2501" height="80" viewBox="0 0 2501 80" font-family="Liberation Sans, sans-serif"><path d="M836,43.2 L829.2,43.2 L829.2,64.6 L836,64.6" fill="none" stroke="#d4d4d4" stroke-width="1.5"/><path d="M1643.4,43.2 L1650.6,43.2 L1650.6,64.6 L1643.4,64.6" fill="none" stroke="#d4d4d4" stroke-width="1.5"/><rect x="829.2" y="53.3" width="821.4" height="2.5" fill="#c4c4c4"/><path d="M1006,38.4 L1026.4,38.4 L1016.2,45.8 Z" fill="#f09028"/><path d="M1008.4,48.6 L1024,48.6 L1024,63.2 L1019.6,63.2 L1016.2,68.6 L1012.8,63.2 L1008.4,63.2 Z" fill="#050505" stroke="#f09030" stroke-width="1.8"/><text x="1016.4" y="61.0" text-anchor="middle" font-size="13.2" font-weight="700" fill="#f09a30">T</text><path d="M2363.2,33.6 L2370.4,33.6 L2384.2,11.6 L2377,11.6 Z" fill="#1cc4d8"/></svg>
<div class="a" style="left:2486.60px;top:650.30px;width:5.80px;height:5.80px;background:#d2d2d2;border-radius:50%;"></div>
<div class="a" style="left:2486.60px;top:661.50px;width:5.80px;height:5.80px;background:#d2d2d2;border-radius:50%;"></div>
<div class="a" style="left:2486.60px;top:672.70px;width:5.80px;height:5.80px;background:#d2d2d2;border-radius:50%;"></div>
<div class="a" style="left:0.00px;top:1295.30px;width:2499.60px;height:1.90px;background:#242424;"></div>
<div class="a" style="left:4.00px;top:1300.60px;width:117.10px;height:103.00px;border-radius:2.5px 2.5px 5px 5px;overflow:hidden;background:#cdcdcd;"></div>
<div class="a" style="left:4.00px;top:1300.60px;width:117.10px;height:24.00px;background:#4a4520;border-radius:2.5px 2.5px 0 0;"></div>
<div class="a" style="left:4.00px;top:1324.60px;width:117.10px;height:1.40px;background:#8a8a3a;"></div>
<div class="a" style="left:4.00px;top:1326.00px;width:117.10px;height:4.00px;background:linear-gradient(#b0b0b4,#cdcdcd);"></div>
<span class="t" style="left:10.90px;top:1301.89px;font-size:20.8px;color:#d8dc6e;transform-origin:0 0;transform:scaleX(0.8558);">Ch 1</span>
<span class="t" style="left:13.50px;top:1331.02px;font-size:21.0px;color:#111;transform-origin:0 0;transform:scaleX(0.9470);">2 V/div</span>
<span class="t" style="left:13.50px;top:1380.42px;font-size:21.0px;color:#111;transform-origin:0 0;transform:scaleX(0.9481);">20 MHz</span>
<span class="t" style="left:99.80px;top:1380.47px;font-size:11.5px;color:#111;font-weight:700;">B</span>
<span class="t" style="left:107.20px;top:1384.67px;font-size:11.5px;color:#111;font-weight:700;">w</span>
<svg class="a" style="left:14.0px;top:1355px" width="24" height="20" viewBox="0 0 24 20"><path d="M2.6,9.5 C3.5,3.5 8,1.6 10.5,2 C15,2.2 19,5 19.4,9.6" fill="none" stroke="#2a2a2a" stroke-width="1.5"/><circle cx="9.6" cy="6.2" r="3.3" fill="none" stroke="#2a2a2a" stroke-width="1.5"/><rect x="0.9" y="9" width="3.8" height="7" rx="1.8" fill="#ececec" stroke="#555" stroke-width="1"/><rect x="14.8" y="9.6" width="5.2" height="7" rx="1" fill="#f4f4f4" stroke="#555" stroke-width="1"/></svg>
<div class="a" style="left:127.60px;top:1300.60px;width:117.10px;height:103.00px;border-radius:2.5px 2.5px 5px 5px;overflow:hidden;background:#cdcdcd;"></div>
<div class="a" style="left:127.60px;top:1300.60px;width:117.10px;height:24.00px;background:#1c4044;border-radius:2.5px 2.5px 0 0;"></div>
<div class="a" style="left:127.60px;top:1324.60px;width:117.10px;height:1.40px;background:#1cb4c4;"></div>
<div class="a" style="left:127.60px;top:1326.00px;width:117.10px;height:4.00px;background:linear-gradient(#b0b0b4,#cdcdcd);"></div>
<span class="t" style="left:134.50px;top:1301.89px;font-size:20.8px;color:#1cc6d4;transform-origin:0 0;transform:scaleX(0.8558);">Ch 2</span>
<span class="t" style="left:137.10px;top:1331.02px;font-size:21.0px;color:#111;transform-origin:0 0;transform:scaleX(0.9383);">10 V/div</span>
<span class="t" style="left:137.10px;top:1380.42px;font-size:21.0px;color:#111;transform-origin:0 0;transform:scaleX(0.9481);">20 MHz</span>
<span class="t" style="left:223.40px;top:1380.47px;font-size:11.5px;color:#111;font-weight:700;">B</span>
<span class="t" style="left:230.80px;top:1384.67px;font-size:11.5px;color:#111;font-weight:700;">w</span>
<svg class="a" style="left:137.6px;top:1355px" width="24" height="20" viewBox="0 0 24 20"><path d="M2.6,9.5 C3.5,3.5 8,1.6 10.5,2 C15,2.2 19,5 19.4,9.6" fill="none" stroke="#2a2a2a" stroke-width="1.5"/><circle cx="9.6" cy="6.2" r="3.3" fill="none" stroke="#2a2a2a" stroke-width="1.5"/><rect x="0.9" y="9" width="3.8" height="7" rx="1.8" fill="#ececec" stroke="#555" stroke-width="1"/><rect x="14.8" y="9.6" width="5.2" height="7" rx="1" fill="#f4f4f4" stroke="#555" stroke-width="1"/></svg>
<div class="a" style="left:251.20px;top:1299.60px;width:117.70px;height:104.00px;border-radius:2.5px 2.5px 5px 5px;overflow:hidden;background:#cdcdcd;"></div>
<div class="a" style="left:251.20px;top:1299.60px;width:117.70px;height:25.00px;background:#8fd130;border-radius:2.5px 2.5px 0 0;"></div>
<div class="a" style="left:251.20px;top:1324.60px;width:117.70px;height:1.40px;background:#9ab870;"></div>
<div class="a" style="left:251.20px;top:1326.00px;width:117.70px;height:4.00px;background:linear-gradient(#b0b0b4,#cdcdcd);"></div>
<span class="t" style="left:258.10px;top:1301.89px;font-size:20.8px;color:#151a08;transform-origin:0 0;transform:scaleX(0.8558);">Ch 4</span>
<span class="t" style="left:260.70px;top:1331.02px;font-size:21.0px;color:#111;transform-origin:0 0;transform:scaleX(0.9835);">2 A/div</span>
<span class="t" style="left:260.70px;top:1357.02px;font-size:21.0px;color:#111;transform-origin:0 0;transform:scaleX(0.9585);">1 MΩ</span>
<span class="t" style="left:260.70px;top:1380.42px;font-size:21.0px;color:#111;transform-origin:0 0;transform:scaleX(0.9481);">20 MHz</span>
<span class="t" style="left:347.00px;top:1380.47px;font-size:11.5px;color:#111;font-weight:700;">B</span>
<span class="t" style="left:354.40px;top:1384.67px;font-size:11.5px;color:#111;font-weight:700;">w</span>
<div class="a" style="left:374.90px;top:1300.60px;width:117.20px;height:103.00px;border-radius:2.5px 2.5px 5px 5px;overflow:hidden;background:#cdcdcd;"></div>
<div class="a" style="left:374.90px;top:1300.60px;width:117.20px;height:24.00px;background:#4a3020;border-radius:2.5px 2.5px 0 0;"></div>
<div class="a" style="left:374.90px;top:1324.60px;width:117.20px;height:1.40px;background:#8a7a70;"></div>
<div class="a" style="left:374.90px;top:1326.00px;width:117.20px;height:4.00px;background:linear-gradient(#b0b0b4,#cdcdcd);"></div>
<span class="t" style="left:381.80px;top:1301.89px;font-size:20.8px;color:#f08c2e;transform-origin:0 0;transform:scaleX(0.8558);">Ch 5</span>
<span class="t" style="left:384.40px;top:1331.02px;font-size:21.0px;color:#111;transform-origin:0 0;transform:scaleX(0.9835);">2 A/div</span>
<span class="t" style="left:384.40px;top:1357.02px;font-size:21.0px;color:#111;transform-origin:0 0;transform:scaleX(0.9585);">1 MΩ</span>
<span class="t" style="left:384.40px;top:1380.42px;font-size:21.0px;color:#111;transform-origin:0 0;transform:scaleX(0.9481);">20 MHz</span>
<span class="t" style="left:470.70px;top:1380.47px;font-size:11.5px;color:#111;font-weight:700;">B</span>
<span class="t" style="left:478.10px;top:1384.67px;font-size:11.5px;color:#111;font-weight:700;">w</span>
<div class="a btn" style="left:1333.30px;top:1299.30px;width:52.00px;height:102.60px;"></div>
<div class="a" style="left:1338.00px;top:1309.20px;width:42.50px;height:3.70px;background:#8c5252;border-radius:1.5px;"></div>
<span class="t" style="left:1351.93px;top:1335.27px;font-size:26.5px;color:#f4f4f4;">3</span>
<div class="a btn" style="left:1392.00px;top:1299.30px;width:52.00px;height:102.60px;"></div>
<div class="a" style="left:1396.70px;top:1309.20px;width:42.50px;height:3.70px;background:#223a62;border-radius:1.5px;"></div>
<span class="t" style="left:1410.63px;top:1335.27px;font-size:26.5px;color:#f4f4f4;">6</span>
<div class="a" style="left:1457.00px;top:1299.50px;width:1.30px;height:102.00px;background:#5a5a56;"></div>
<div class="a btn" style="left:1471.60px;top:1299.30px;width:51.70px;height:102.60px;"></div>
<div class="a" style="left:1476.30px;top:1309.20px;width:42.20px;height:3.70px;background:#f08a20;border-radius:1.5px;"></div>
<span class="t" style="left:1479.20px;top:1323.05px;font-size:19.2px;color:#f6f6f0;letter-spacing:1.168px;">Add</span>
<span class="t" style="left:1477.45px;top:1343.85px;font-size:19.2px;color:#f6f6f0;letter-spacing:0.795px;">New</span>
<span class="t" style="left:1474.05px;top:1364.75px;font-size:19.2px;color:#f6f6f0;letter-spacing:1.372px;">Math</span>
<div class="a btn" style="left:1530.00px;top:1299.30px;width:51.70px;height:102.60px;"></div>
<div class="a" style="left:1534.70px;top:1309.20px;width:42.20px;height:3.70px;background:#d6d8e0;border-radius:1.5px;"></div>
<span class="t" style="left:1537.60px;top:1323.05px;font-size:19.2px;color:#f6f6f0;letter-spacing:1.168px;">Add</span>
<span class="t" style="left:1535.85px;top:1343.85px;font-size:19.2px;color:#f6f6f0;letter-spacing:0.795px;">New</span>
<span class="t" style="left:1541.10px;top:1364.75px;font-size:19.2px;color:#f6f6f0;transform-origin:0 0;transform:scaleX(0.9873);">Ref</span>
<div class="a btn" style="left:1588.50px;top:1299.30px;width:51.70px;height:102.60px;"></div>
<div class="a" style="left:1593.20px;top:1309.20px;width:42.20px;height:3.70px;background:#dccdf2;border-radius:1.5px;"></div>
<span class="t" style="left:1596.10px;top:1323.05px;font-size:19.2px;color:#f6f6f0;letter-spacing:1.168px;">Add</span>
<span class="t" style="left:1594.35px;top:1343.85px;font-size:19.2px;color:#f6f6f0;letter-spacing:0.795px;">New</span>
<span class="t" style="left:1598.60px;top:1364.75px;font-size:19.2px;color:#f6f6f0;transform-origin:0 0;transform:scaleX(0.9521);">Bus</span>
<div class="a" style="left:1654.00px;top:1299.50px;width:1.30px;height:102.00px;background:#5a5a56;"></div>
<div class="a" style="left:1668.00px;top:1299.40px;width:260.30px;height:102.70px;border-radius:3px 3px 6px 6px;background:#cdcdcd;overflow:hidden;"></div>
<div class="a" style="left:1668.00px;top:1299.40px;width:260.30px;height:24.20px;background:#58585c;border-radius:3px 3px 0 0;"></div>
<div class="a" style="left:1668.00px;top:1323.60px;width:260.30px;height:4.40px;background:linear-gradient(#a8aaac,#cdcdcd);"></div>
<span class="t" style="left:1674.60px;top:1301.51px;font-size:19.6px;color:#f2f2f2;letter-spacing:0.795px;">Horizontal</span>
<span class="t" style="left:1677.30px;top:1330.80px;font-size:20.2px;color:#111;transform-origin:0 0;transform:scaleX(0.9636);">40 ms/div</span>
<span class="t" style="left:1815.30px;top:1330.80px;font-size:20.2px;color:#111;transform-origin:0 0;transform:scaleX(0.9314);">400 ms</span>
<span class="t" style="left:1677.30px;top:1355.10px;font-size:20.2px;color:#111;transform-origin:0 0;transform:scaleX(0.8964);">SR: 3.125 MS/s</span>
<span class="t" style="left:1815.30px;top:1355.10px;font-size:20.2px;color:#111;transform-origin:0 0;transform:scaleX(0.9782);">320 ns/pt</span>
<span class="t" style="left:1677.30px;top:1380.00px;font-size:20.2px;color:#111;transform-origin:0 0;transform:scaleX(0.9567);">RL: 1.25 Mpts</span>
<span class="t" style="left:1834.00px;top:1380.00px;font-size:20.2px;color:#111;transform-origin:0 0;transform:scaleX(0.9463);">22.9%</span>
<svg class="a" style="left:1812px;top:1378px" width="18" height="22" viewBox="0 0 18 22" font-family="Liberation Sans, sans-serif"><path d="M3,3.2 L14.6,3.2 L14.6,14.6 L11.4,14.6 L8.8,19 L6.2,14.6 L3,14.6 Z" fill="#0a0a0a" stroke="#f09030" stroke-width="1.7"/><text x="8.8" y="12.6" text-anchor="middle" font-size="9.6" font-weight="700" fill="#fff">T</text></svg>
<div class="a" style="left:1941.40px;top:1299.40px;width:208.70px;height:102.70px;border-radius:3px 3px 6px 6px;background:#cdcdcd;overflow:hidden;"></div>
<div class="a" style="left:1941.40px;top:1299.40px;width:208.70px;height:24.20px;background:#58585c;border-radius:3px 3px 0 0;"></div>
<div class="a" style="left:1941.40px;top:1323.60px;width:208.70px;height:4.40px;background:linear-gradient(#a8aaac,#cdcdcd);"></div>
<span class="t" style="left:1948.00px;top:1301.51px;font-size:19.6px;color:#f2f2f2;letter-spacing:0.274px;">Trigger</span>
<div class="a" style="left:1950.40px;top:1330.60px;width:39.00px;height:22.20px;background:#8fd130;border:2px solid #1e220c;border-radius:7px;"></div>
<span class="t" style="left:1964.60px;top:1331.67px;font-size:20.0px;color:#0a0a0a;-webkit-text-stroke:0.5px #0a0a0a;">4</span>
<svg class="a" style="left:2000px;top:1330px" width="28" height="22" viewBox="0 0 28 22"><path d="M2.2,4.4 L9,4.4 L17.4,17.2 L23.6,17.2" fill="none" stroke="#34344e" stroke-width="1.5"/></svg>
<span class="t" style="left:2036.80px;top:1330.80px;font-size:20.2px;color:#111;transform-origin:0 0;transform:scaleX(0.9880);">2.64 A</span>
<div class="a" style="left:2162.60px;top:1299.40px;width:195.50px;height:102.70px;border-radius:3px 3px 6px 6px;background:#cdcdcd;overflow:hidden;"></div>
<div class="a" style="left:2162.60px;top:1299.40px;width:195.50px;height:24.20px;background:#58585c;border-radius:3px 3px 0 0;"></div>
<div class="a" style="left:2162.60px;top:1323.60px;width:195.50px;height:4.40px;background:linear-gradient(#a8aaac,#cdcdcd);"></div>
<span class="t" style="left:2169.20px;top:1301.51px;font-size:19.6px;color:#f2f2f2;letter-spacing:0.581px;">Acquisition</span>
<span class="t" style="left:2172.40px;top:1330.80px;font-size:20.2px;color:#111;transform-origin:0 0;transform:scaleX(0.9456);">Auto,</span>
<span class="t" style="left:2249.00px;top:1330.80px;font-size:20.2px;color:#111;transform-origin:0 0;transform:scaleX(0.9963);">Analyze</span>
<span class="t" style="left:2172.40px;top:1355.10px;font-size:20.2px;color:#111;transform-origin:0 0;transform:scaleX(0.9739);">Sample: 12 bits</span>
<span class="t" style="left:2172.40px;top:1380.00px;font-size:20.2px;color:#111;transform-origin:0 0;transform:scaleX(0.9498);">Single: 1 /1</span>
<div class="a" style="left:2371.80px;top:1299.70px;width:115.70px;height:45.90px;background:#ff2222;border:1.3px solid #8a5a52;border-radius:9px;"></div>
<span class="t" style="left:2394.90px;top:1313.04px;font-size:17.2px;color:#fff6ea;transform-origin:0 0;transform:scaleX(0.9855);font-weight:700;">Stopped</span></body></html>
